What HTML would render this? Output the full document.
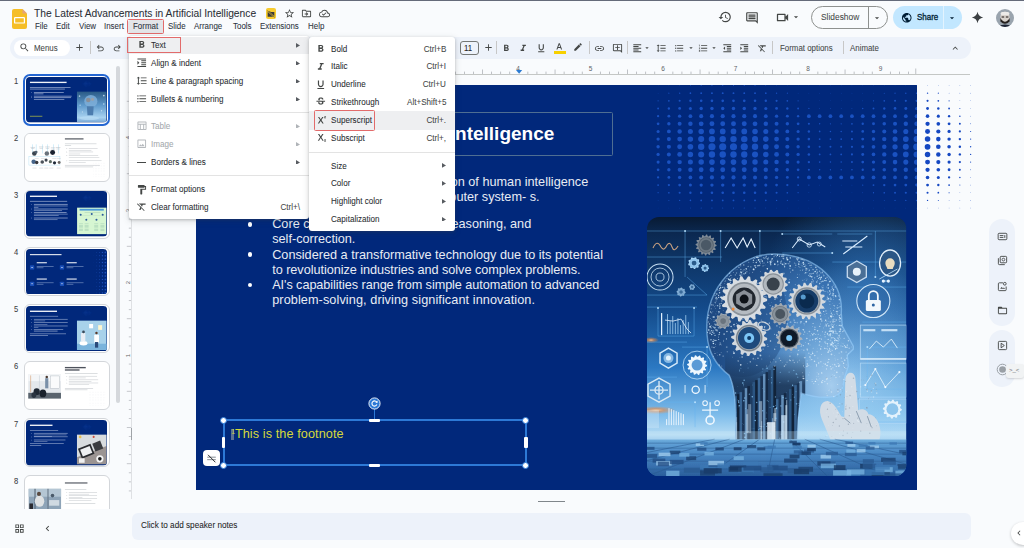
<!DOCTYPE html><html><head><meta charset="utf-8"><style>html,body{margin:0;padding:0;}body{width:1024px;height:548px;overflow:hidden;position:relative;background:#f9fbfd;font-family:"Liberation Sans",sans-serif;}div{box-sizing:border-box;}svg{display:block;}</style></head><body>
<div style="position:absolute;left:0.00px;top:0.00px;width:1024.00px;height:1.30px;background:#656b7a;"></div>
<svg style="position:absolute;left:11.5px;top:9px" width="15" height="20" viewBox="0 0 15 20"><path d="M2 0H10.5L15 4.5V18a2 2 0 0 1-2 2H2a2 2 0 0 1-2-2V2a2 2 0 0 1 2-2z" fill="#f5be27"/><path d="M10.5 0L15 4.5H10.5z" fill="#e4a27c"/><rect x="2.6" y="8.6" width="9.8" height="5.4" rx="0.6" fill="none" stroke="#fff" stroke-width="1.2"/></svg>
<div style="position:absolute;left:34.30px;top:7.57px;font-size:11.022px;line-height:1;font-weight:400;color:#2a2e35;white-space:pre;transform-origin:left top;transform:scaleX(0.93);-webkit-text-stroke:0.05px #2a2e35;">The Latest Advancements in Artificial Intelligence</div>
<div style="position:absolute;left:266.30px;top:8.30px;width:9.80px;height:10.80px;background:#f7cb2e;border-radius:2px;"></div>
<svg style="position:absolute;left:267.2px;top:9.6px" width="8" height="8" viewBox="0 0 24 24"><path fill="#3b3b3b" d="M2 4h7l2 2h11v14H2z"/><path d="M1 2 L23 22" stroke="#f7cb2e" stroke-width="4"/><path d="M1 2 L23 22" stroke="#3b3b3b" stroke-width="2"/></svg>
<svg style="position:absolute;left:283.50px;top:7.80px;" width="11" height="11" viewBox="0 0 24 24"><path fill="#444746" d="M22 9.24l-7.19-.62L12 2 9.19 8.63 2 9.24l5.46 4.73L5.82 21 12 17.27 18.18 21l-1.63-7.03L22 9.24zM12 15.4l-3.76 2.27 1-4.28-3.32-2.88 4.38-.38L12 6.1l1.71 4.04 4.38.38-3.32 2.88 1 4.28L12 15.4z"/></svg>
<svg style="position:absolute;left:300.90px;top:7.90px;" width="11" height="11" viewBox="0 0 24 24"><path fill="#444746" d="M20 6h-8l-2-2H4c-1.1 0-1.99.9-1.99 2L2 18c0 1.1.9 2 2 2h16c1.1 0 2-.9 2-2V8c0-1.1-.9-2-2-2zm0 12H4V6h5.17l2 2H20v10zm-7.84-6H8v2h4.16l-1.59 1.59L11.99 17 16 13.01 11.99 9l-1.41 1.41L12.16 12z"/></svg>
<svg style="position:absolute;left:318.70px;top:7.90px;" width="11" height="11" viewBox="0 0 24 24"><path fill="#444746" d="M19.35 10.04A7.49 7.49 0 0 0 12 4C9.11 4 6.6 5.64 5.35 8.04A5.994 5.994 0 0 0 0 14c0 3.31 2.69 6 6 6h13c2.76 0 5-2.24 5-5 0-2.64-2.05-4.78-4.65-4.96zM19 18H6c-2.21 0-4-1.79-4-4 0-2.05 1.53-3.76 3.560-3.97l1.07-.11.5-.95A5.469 5.469 0 0 1 12 6c2.62 0 4.88 1.86 5.39 4.43l.3 1.5 1.53.11A2.98 2.98 0 0 1 22 15c0 1.65-1.35 3-3 3zm-9-3.82-2.09-2.09L6.5 13.5 10 17l6.01-6.01-1.41-1.41z"/></svg>
<div style="position:absolute;left:127.50px;top:19.50px;width:36.60px;height:14.00px;background:#e3e5e8;border-radius:3px;"></div>
<div style="position:absolute;left:34.60px;top:22.16px;font-size:8.548px;line-height:1;font-weight:400;color:#2c333d;white-space:pre;transform-origin:left top;transform:scaleX(0.93);-webkit-text-stroke:0.06px #2c333d;">File</div>
<div style="position:absolute;left:55.80px;top:22.16px;font-size:8.548px;line-height:1;font-weight:400;color:#2c333d;white-space:pre;transform-origin:left top;transform:scaleX(0.93);-webkit-text-stroke:0.06px #2c333d;">Edit</div>
<div style="position:absolute;left:78.50px;top:22.16px;font-size:8.548px;line-height:1;font-weight:400;color:#2c333d;white-space:pre;transform-origin:left top;transform:scaleX(0.93);-webkit-text-stroke:0.06px #2c333d;">View</div>
<div style="position:absolute;left:103.70px;top:22.16px;font-size:8.548px;line-height:1;font-weight:400;color:#2c333d;white-space:pre;transform-origin:left top;transform:scaleX(0.93);-webkit-text-stroke:0.06px #2c333d;">Insert</div>
<div style="position:absolute;left:133.40px;top:22.16px;font-size:8.548px;line-height:1;font-weight:400;color:#2c333d;white-space:pre;transform-origin:left top;transform:scaleX(0.93);-webkit-text-stroke:0.06px #2c333d;">Format</div>
<div style="position:absolute;left:167.80px;top:22.16px;font-size:8.548px;line-height:1;font-weight:400;color:#2c333d;white-space:pre;transform-origin:left top;transform:scaleX(0.93);-webkit-text-stroke:0.06px #2c333d;">Slide</div>
<div style="position:absolute;left:194.20px;top:22.16px;font-size:8.548px;line-height:1;font-weight:400;color:#2c333d;white-space:pre;transform-origin:left top;transform:scaleX(0.93);-webkit-text-stroke:0.06px #2c333d;">Arrange</div>
<div style="position:absolute;left:232.60px;top:22.16px;font-size:8.548px;line-height:1;font-weight:400;color:#2c333d;white-space:pre;transform-origin:left top;transform:scaleX(0.93);-webkit-text-stroke:0.06px #2c333d;">Tools</div>
<div style="position:absolute;left:260.20px;top:22.16px;font-size:8.548px;line-height:1;font-weight:400;color:#2c333d;white-space:pre;transform-origin:left top;transform:scaleX(0.93);-webkit-text-stroke:0.06px #2c333d;">Extensions</div>
<div style="position:absolute;left:307.90px;top:22.16px;font-size:8.548px;line-height:1;font-weight:400;color:#2c333d;white-space:pre;transform-origin:left top;transform:scaleX(0.93);-webkit-text-stroke:0.06px #2c333d;">Help</div>
<div style="position:absolute;left:127.30px;top:19.30px;width:36.80px;height:14.30px;border:1px solid #e26b6b;border-radius:1.5px;"></div>
<svg style="position:absolute;left:718.00px;top:10.20px;" width="14" height="14" viewBox="0 0 24 24"><path fill="#444746" d="M13 3a9 9 0 0 0-9 9H1l3.89 3.89.07.14L9 12H6c0-3.87 3.130-7 7-7s7 3.13 7 7-3.13 7-7 7c-1.93 0-3.68-.79-4.94-2.06l-1.42 1.42A8.954 8.954 0 0 0 13 21a9 9 0 0 0 0-18zm-1 5v5l4.28 2.54.72-1.21-3.5-2.08V8H12z"/></svg>
<svg style="position:absolute;left:745.30px;top:10.60px;" width="14" height="14" viewBox="0 0 24 24"><path fill="#444746" d="M21.99 4c0-1.1-.89-2-1.99-2H4c-1.1 0-2 .9-2 2v12c0 1.1.9 2 2 2h14l4 4-.01-18zM20 4v13.17L18.83 16H4V4h16zM6 12h12v2H6zm0-3h12v2H6zm0-3h12v2H6z"/></svg>
<svg style="position:absolute;left:774.50px;top:9.90px;" width="15" height="15" viewBox="0 0 24 24"><path fill="#444746" d="M15 8v8H5V8h10m1-2H4c-.55 0-1 .45-1 1v10c0 .55.45 1 1 1h12c.55 0 1-.45 1-1v-3.5l4 4v-11l-4 4V7c0-.55-.45-1-1-1z"/></svg>
<svg style="position:absolute;left:791.30px;top:12.40px;" width="10" height="10" viewBox="0 0 24 24"><path fill="#444746" d="M7 10l5 5 5-5z"/></svg>
<div style="position:absolute;left:811.30px;top:6.30px;width:76.70px;height:22.40px;border:0.8px solid #8e918f;border-radius:12px;"></div>
<div style="position:absolute;left:868.10px;top:6.30px;width:0.80px;height:22.40px;background:#8e918f;"></div>
<div style="position:absolute;left:820.70px;top:13.35px;font-size:9.032px;line-height:1;font-weight:400;color:#444746;white-space:pre;transform-origin:left top;transform:scaleX(0.93);-webkit-text-stroke:0.06px #444746;">Slideshow</div>
<svg style="position:absolute;left:872.30px;top:12.50px;" width="10" height="10" viewBox="0 0 24 24"><path fill="#444746" d="M7 10l5 5 5-5z"/></svg>
<div style="position:absolute;left:892.90px;top:6.30px;width:69.00px;height:22.50px;background:#c2e7ff;border-radius:12px;"></div>
<div style="position:absolute;left:943.40px;top:6.30px;width:0.80px;height:22.50px;background:#f9fbfd;opacity:0.6;"></div>
<svg style="position:absolute;left:901.35px;top:11.85px;" width="11.5" height="11.5" viewBox="0 0 24 24"><path fill="#001d35" d="M12 2C6.48 2 2 6.48 2 12s4.48 10 10 10 10-4.48 10-10S17.520 2 12 2zm-1 17.93c-3.95-.49-7-3.85-7-7.93 0-.62.08-1.21.21-1.79L9 15v1c0 1.1.9 2 2 2v1.93zm6.9-2.54c-.26-.81-1-1.39-1.9-1.39h-1v-3c0-.55-.45-1-1-1H8v-2h2c.55 0 1-.45 1-1V7h2c1.1 0 2-.9 2-2v-.41c2.93 1.19 5 4.06 5 7.41 0 2.080-.8 3.97-2.1 5.39z"/></svg>
<div style="position:absolute;left:916.80px;top:14.02px;font-size:8.247px;line-height:1;font-weight:400;color:#001d35;white-space:pre;transform-origin:left top;transform:scaleX(0.97);-webkit-text-stroke:0.3px #001d35;">Share</div>
<svg style="position:absolute;left:947.40px;top:12.60px;" width="10" height="10" viewBox="0 0 24 24"><path fill="#001d35" d="M7 10l5 5 5-5z"/></svg>
<svg style="position:absolute;left:971.10px;top:10.90px;" width="13" height="13" viewBox="0 0 24 24"><path fill="#3c4043" d="M12 1.5Q13.6 10.4 22.5 12Q13.6 13.6 12 22.5Q10.4 13.6 1.5 12Q10.4 10.4 12 1.5Z"/></svg>
<svg style="position:absolute;left:995.5px;top:8.6px" width="18" height="18" viewBox="0 0 18 18"><defs><clipPath id="av"><circle cx="9" cy="9" r="9"/></clipPath></defs><g clip-path="url(#av)"><rect width="18" height="18" fill="#9aa4ae"/><ellipse cx="9" cy="8" rx="4.6" ry="5.6" fill="#d8d2cc"/><rect x="4.6" y="3" width="8.8" height="3" rx="1.5" fill="#eceae8"/><path d="M4.4 9 Q9 16.5 13.6 9 L13.6 12.5 Q9 17 4.4 12.5z" fill="#25201e"/><rect x="5.6" y="7.4" width="2.6" height="1.2" fill="#3a3430"/><rect x="9.8" y="7.4" width="2.6" height="1.2" fill="#3a3430"/><path d="M0 18 Q9 13 18 18z" fill="#1c2233"/></g></svg>
<div style="position:absolute;left:9.50px;top:36.80px;width:961.00px;height:22.60px;background:#edf2fa;border-radius:12px;"></div>
<div style="position:absolute;left:14.00px;top:39.70px;width:55.80px;height:16.10px;background:#ffffff;border-radius:8px;"></div>
<svg style="position:absolute;left:18.70px;top:42.30px;" width="11" height="11" viewBox="0 0 24 24"><path fill="#444746" d="M15.5 14h-.79l-.28-.27A6.471 6.471 0 0 0 16 9.5 6.5 6.5 0 1 0 9.5 16c1.610 0 3.09-.59 4.23-1.57l.27.28v.79l5 4.99L20.49 19l-4.99-5zm-6 0C7.01 14 5 11.99 5 9.5S7.01 5 9.5 5 14 7.01 14 9.5 11.99 14 9.5 14z"/></svg>
<div style="position:absolute;left:34.00px;top:44.21px;font-size:8.495px;line-height:1;font-weight:400;color:#444746;white-space:pre;transform-origin:left top;transform:scaleX(0.93);-webkit-text-stroke:0.06px #444746;">Menus</div>
<svg style="position:absolute;left:73.50px;top:42.30px;" width="11" height="11" viewBox="0 0 24 24"><path fill="#444746" d="M19 13h-6v6h-2v-6H5v-2h6V5h2v6h6v2z"/></svg>
<div style="position:absolute;left:89.60px;top:41.00px;width:0.80px;height:13.00px;background:#c7c7c7;"></div>
<svg style="position:absolute;left:95.05px;top:42.75px;" width="10.5" height="10.5" viewBox="0 0 24 24"><path fill="#444746" d="M7 19v-2h7.1q1.575 0 2.738-1T18 13.5q0-1.5-1.162-2.5T14.1 10H7.8l2.6 2.6L9 14 4 9l5-5 1.4 1.4L7.8 8h6.3q2.425 0 4.163 1.575T20 13.5q0 2.350-1.737 3.925T14.1 19H7z"/></svg>
<svg style="position:absolute;left:112.15px;top:42.75px;" width="10.5" height="10.5" viewBox="0 0 24 24"><path fill="#444746" d="M9.9 19q-2.425 0-4.163-1.575T4 13.5q0-2.350 1.737-3.925T9.9 8h6.3l-2.6-2.6L15 4l5 5-5 5-1.4-1.4 2.6-2.6H9.9q-1.575 0-2.738 1T6 13.5q0 1.5 1.162 2.5T9.9 17H17v2H9.9z"/></svg>
<div style="position:absolute;left:460.00px;top:41.20px;width:18.60px;height:13.60px;border:1px solid #747775;border-radius:3px;"></div>
<div style="position:absolute;left:464.30px;top:44.21px;font-size:8.495px;line-height:1;font-weight:400;color:#1f1f1f;white-space:pre;transform-origin:left top;transform:scaleX(0.93);-webkit-text-stroke:0.06px #1f1f1f;">11</div>
<svg style="position:absolute;left:482.50px;top:42.30px;" width="11" height="11" viewBox="0 0 24 24"><path fill="#444746" d="M19 13h-6v6h-2v-6H5v-2h6V5h2v6h6v2z"/></svg>
<div style="position:absolute;left:496.30px;top:41.00px;width:0.80px;height:13.00px;background:#c7c7c7;"></div>
<svg style="position:absolute;left:501.45px;top:42.75px;" width="10.5" height="10.5" viewBox="0 0 24 24"><path fill="#444746" d="M15.6 10.79c.97-.67 1.65-1.77 1.65-2.79 0-2.26-1.75-4-4-4H7v14h7.04c2.09 0 3.71-1.7 3.71-3.79 0-1.52-.86-2.82-2.15-3.42zM10 6.5h3c.83 0 1.5.67 1.5 1.5s-.67 1.5-1.5 1.5h-3v-3zm3.5 9H10v-3h3.5c.83 0 1.5.67 1.5 1.5s-.67 1.5-1.5 1.5z"/></svg>
<svg style="position:absolute;left:518.35px;top:42.75px;" width="10.5" height="10.5" viewBox="0 0 24 24"><path fill="#444746" d="M10 4v3h2.21l-3.42 8H6v3h8v-3h-2.21l3.42-8H18V4z"/></svg>
<svg style="position:absolute;left:536.35px;top:42.75px;" width="10.5" height="10.5" viewBox="0 0 24 24"><path fill="#444746" d="M12 17c3.31 0 6-2.69 6-6V3h-2.5v8c0 1.93-1.57 3.5-3.5 3.5S8.5 12.93 8.5 11V3H6v8c0 3.31 2.69 6 6 6zm-7 2v2h14v-2H5z"/></svg>
<svg style="position:absolute;left:554.25px;top:41.55px;" width="10.5" height="10.5" viewBox="0 0 24 24"><path fill="#444746" d="M5.49 17h2.42l1.27-3.5h5.65L16.09 17h2.42L13.25 3h-2.5L5.49 17zm4.42-5.61 2.03-5.79h.12l2.03 5.79H9.91z"/></svg>
<div style="position:absolute;left:553.60px;top:51.40px;width:12.00px;height:2.20px;background:#f7d000;"></div>
<svg style="position:absolute;left:573.30px;top:42.30px;" width="10" height="10" viewBox="0 0 24 24"><path fill="#444746" d="M3 17.25V21h3.75L17.81 9.94l-3.75-3.75L3 17.25zM20.71 7.04a.996.996 0 0 0 0-1.41l-2.34-2.34a.996.996 0 0 0-1.41 0l-1.83 1.83 3.75 3.75 1.83-1.83z"/></svg>
<div style="position:absolute;left:589.40px;top:41.00px;width:0.80px;height:13.00px;background:#c7c7c7;"></div>
<svg style="position:absolute;left:594.30px;top:42.50px;" width="11" height="11" viewBox="0 0 24 24"><path fill="#444746" d="M3.9 12c0-1.71 1.39-3.1 3.1-3.1h4V7H7c-2.76 0-5 2.24-5 5s2.24 5 5 5h4v-1.9H7c-1.71 0-3.1-1.39-3.1-3.1zM8 13h8v-2H8v2zm9-6h-4v1.9h4c1.71 0 3.1 1.39 3.1 3.1s-1.39 3.1-3.1 3.1h-4V17h4c2.76 0 5-2.24 5-5s-2.24-5-5-5z"/></svg>
<svg style="position:absolute;left:611.80px;top:42.50px;" width="11" height="11" viewBox="0 0 24 24"><path fill="#444746" d="M22 4c0-1.1-.9-2-2-2H4c-1.1 0-1.99.9-1.99 2L2 16c0 1.1.9 2 2 2h14l4 4V4zm-2 13.17L18.83 16H4V4h16v13.17zM13 5h-2v4H7v2h4v4h2v-4h4V9h-4z"/></svg>
<div style="position:absolute;left:627.40px;top:41.00px;width:0.80px;height:13.00px;background:#c7c7c7;"></div>
<svg style="position:absolute;left:632.25px;top:42.75px;" width="10.5" height="10.5" viewBox="0 0 24 24"><path fill="#444746" d="M15 15H3v2h12v-2zm0-8H3v2h12V7zM3 13h18v-2H3v2zm0 8h18v-2H3v2zM3 3v2h18V3H3z"/></svg>
<svg style="position:absolute;left:643.20px;top:44.00px;" width="8" height="8" viewBox="0 0 24 24"><path fill="#444746" d="M7 10l5 5 5-5z"/></svg>
<svg style="position:absolute;left:656.05px;top:42.75px;" width="10.5" height="10.5" viewBox="0 0 24 24"><path fill="#444746" d="M6 7h2.5L5 3.5 1.5 7H4v10H1.5L5 20.5 8.5 17H6V7zm4-2v2h12V5H10zm0 14h12v-2H10v2zm0-6h12v-2H10v2z"/></svg>
<svg style="position:absolute;left:674.25px;top:42.75px;" width="10.5" height="10.5" viewBox="0 0 24 24"><path fill="#444746" d="M4 10.5c-.83 0-1.5.67-1.5 1.5s.67 1.5 1.5 1.5 1.5-.67 1.5-1.5-.67-1.5-1.5-1.5zm0-6c-.83 0-1.5.67-1.5 1.5S3.17 7.5 4 7.5 5.5 6.83 5.5 6 4.83 4.5 4 4.5zm0 12c-.83 0-1.5.68-1.5 1.5s.68 1.5 1.5 1.5 1.5-.68 1.5-1.5-.67-1.5-1.5-1.5zM7 19h14v-2H7v2zm0-6h14v-2H7v2zm0-8v2h14V5H7z"/></svg>
<svg style="position:absolute;left:686.60px;top:44.00px;" width="8" height="8" viewBox="0 0 24 24"><path fill="#444746" d="M7 10l5 5 5-5z"/></svg>
<svg style="position:absolute;left:697.65px;top:42.75px;" width="10.5" height="10.5" viewBox="0 0 24 24"><path fill="#444746" d="M2 17h2v.5H3v1h1v.5H2v1h3v-4H2v1zm1-9h1V4H2v1h1v3zm-1 3h1.8L2 13.1v.9h3v-1H3.2L5 10.9V10H2v1zm5-6v2h14V5H7zm0 14h14v-2H7v2zm0-6h14v-2H7v2z"/></svg>
<svg style="position:absolute;left:710.00px;top:44.00px;" width="8" height="8" viewBox="0 0 24 24"><path fill="#444746" d="M7 10l5 5 5-5z"/></svg>
<svg style="position:absolute;left:722.05px;top:42.75px;" width="10.5" height="10.5" viewBox="0 0 24 24"><path fill="#444746" d="M11 17h10v-2H11v2zm-8-5l4 4V8l-4 4zm0 9h18v-2H3v2zM3 3v2h18V3H3zm8 6h10V7H11v2zm0 4h10v-2H11v2z"/></svg>
<svg style="position:absolute;left:738.65px;top:42.75px;" width="10.5" height="10.5" viewBox="0 0 24 24"><path fill="#444746" d="M3 21h18v-2H3v2zM3 8v8l4-4-4-4zm8 9h10v-2H11v2zM3 3v2h18V3H3zm8 6h10V7H11v2zm0 4h10v-2H11v2z"/></svg>
<svg style="position:absolute;left:756.65px;top:42.75px;" width="10.5" height="10.5" viewBox="0 0 24 24"><path fill="#444746" d="M3.27 5L2 6.27l6.97 6.97L6.5 19h3l1.57-3.66L16.73 21 18 19.73 3.55 5.27 3.27 5zM6 5v.18L8.82 8h2.4l-.72 1.68 2.1 2.1L14.210 8H20V5H6z"/></svg>
<div style="position:absolute;left:772.30px;top:41.00px;width:0.80px;height:13.00px;background:#c7c7c7;"></div>
<div style="position:absolute;left:780.00px;top:44.21px;font-size:8.495px;line-height:1;font-weight:400;color:#444746;white-space:pre;transform-origin:left top;transform:scaleX(0.93);-webkit-text-stroke:0.06px #444746;">Format options</div>
<div style="position:absolute;left:842.70px;top:41.00px;width:0.80px;height:13.00px;background:#c7c7c7;"></div>
<div style="position:absolute;left:850.00px;top:44.21px;font-size:8.495px;line-height:1;font-weight:400;color:#444746;white-space:pre;transform-origin:left top;transform:scaleX(0.93);-webkit-text-stroke:0.06px #444746;">Animate</div>
<svg style="position:absolute;left:950.15px;top:42.75px;" width="10.5" height="10.5" viewBox="0 0 24 24"><path fill="#444746" d="M12 8l-6 6 1.41 1.41L12 10.83l4.59 4.58L18 14z"/></svg>
<div style="position:absolute;left:132.00px;top:74.00px;width:838.00px;height:0.90px;background:#c4c7c5;"></div>
<div style="position:absolute;left:298.70px;top:65.80px;font-size:6.500px;line-height:1;font-weight:400;color:#5f6368;white-space:pre;transform-origin:left top;">1</div>
<div style="position:absolute;left:371.20px;top:65.80px;font-size:6.500px;line-height:1;font-weight:400;color:#5f6368;white-space:pre;transform-origin:left top;">2</div>
<div style="position:absolute;left:443.70px;top:65.80px;font-size:6.500px;line-height:1;font-weight:400;color:#5f6368;white-space:pre;transform-origin:left top;">3</div>
<div style="position:absolute;left:516.20px;top:65.80px;font-size:6.500px;line-height:1;font-weight:400;color:#5f6368;white-space:pre;transform-origin:left top;">4</div>
<div style="position:absolute;left:588.70px;top:65.80px;font-size:6.500px;line-height:1;font-weight:400;color:#5f6368;white-space:pre;transform-origin:left top;">5</div>
<div style="position:absolute;left:661.20px;top:65.80px;font-size:6.500px;line-height:1;font-weight:400;color:#5f6368;white-space:pre;transform-origin:left top;">6</div>
<div style="position:absolute;left:733.70px;top:65.80px;font-size:6.500px;line-height:1;font-weight:400;color:#5f6368;white-space:pre;transform-origin:left top;">7</div>
<div style="position:absolute;left:806.20px;top:65.80px;font-size:6.500px;line-height:1;font-weight:400;color:#5f6368;white-space:pre;transform-origin:left top;">8</div>
<div style="position:absolute;left:878.70px;top:65.80px;font-size:6.500px;line-height:1;font-weight:400;color:#5f6368;white-space:pre;transform-origin:left top;">9</div>
<svg style="position:absolute;left:132px;top:0" width="840" height="76"><rect x="5.77" y="71.60" width="0.8" height="2.4" fill="#b0b3b8"/><rect x="14.84" y="71.60" width="0.8" height="2.4" fill="#b0b3b8"/><rect x="32.96" y="71.60" width="0.8" height="2.4" fill="#b0b3b8"/><rect x="42.02" y="71.60" width="0.8" height="2.4" fill="#b0b3b8"/><rect x="51.09" y="71.60" width="0.8" height="2.4" fill="#b0b3b8"/><rect x="60.15" y="69.50" width="0.8" height="4.5" fill="#b0b3b8"/><rect x="69.21" y="71.60" width="0.8" height="2.4" fill="#b0b3b8"/><rect x="78.27" y="71.60" width="0.8" height="2.4" fill="#b0b3b8"/><rect x="87.34" y="71.60" width="0.8" height="2.4" fill="#b0b3b8"/><rect x="105.46" y="71.60" width="0.8" height="2.4" fill="#b0b3b8"/><rect x="114.52" y="71.60" width="0.8" height="2.4" fill="#b0b3b8"/><rect x="123.59" y="71.60" width="0.8" height="2.4" fill="#b0b3b8"/><rect x="132.65" y="69.50" width="0.8" height="4.5" fill="#b0b3b8"/><rect x="141.71" y="71.60" width="0.8" height="2.4" fill="#b0b3b8"/><rect x="150.77" y="71.60" width="0.8" height="2.4" fill="#b0b3b8"/><rect x="159.84" y="71.60" width="0.8" height="2.4" fill="#b0b3b8"/><rect x="177.96" y="71.60" width="0.8" height="2.4" fill="#b0b3b8"/><rect x="187.02" y="71.60" width="0.8" height="2.4" fill="#b0b3b8"/><rect x="196.09" y="71.60" width="0.8" height="2.4" fill="#b0b3b8"/><rect x="205.15" y="69.50" width="0.8" height="4.5" fill="#b0b3b8"/><rect x="214.21" y="71.60" width="0.8" height="2.4" fill="#b0b3b8"/><rect x="223.27" y="71.60" width="0.8" height="2.4" fill="#b0b3b8"/><rect x="232.34" y="71.60" width="0.8" height="2.4" fill="#b0b3b8"/><rect x="250.46" y="71.60" width="0.8" height="2.4" fill="#b0b3b8"/><rect x="259.52" y="71.60" width="0.8" height="2.4" fill="#b0b3b8"/><rect x="268.59" y="71.60" width="0.8" height="2.4" fill="#b0b3b8"/><rect x="277.65" y="69.50" width="0.8" height="4.5" fill="#b0b3b8"/><rect x="286.71" y="71.60" width="0.8" height="2.4" fill="#b0b3b8"/><rect x="295.77" y="71.60" width="0.8" height="2.4" fill="#b0b3b8"/><rect x="304.84" y="71.60" width="0.8" height="2.4" fill="#b0b3b8"/><rect x="322.96" y="71.60" width="0.8" height="2.4" fill="#b0b3b8"/><rect x="332.02" y="71.60" width="0.8" height="2.4" fill="#b0b3b8"/><rect x="341.09" y="71.60" width="0.8" height="2.4" fill="#b0b3b8"/><rect x="350.15" y="69.50" width="0.8" height="4.5" fill="#b0b3b8"/><rect x="359.21" y="71.60" width="0.8" height="2.4" fill="#b0b3b8"/><rect x="368.27" y="71.60" width="0.8" height="2.4" fill="#b0b3b8"/><rect x="377.34" y="71.60" width="0.8" height="2.4" fill="#b0b3b8"/><rect x="395.46" y="71.60" width="0.8" height="2.4" fill="#b0b3b8"/><rect x="404.52" y="71.60" width="0.8" height="2.4" fill="#b0b3b8"/><rect x="413.59" y="71.60" width="0.8" height="2.4" fill="#b0b3b8"/><rect x="422.65" y="69.50" width="0.8" height="4.5" fill="#b0b3b8"/><rect x="431.71" y="71.60" width="0.8" height="2.4" fill="#b0b3b8"/><rect x="440.77" y="71.60" width="0.8" height="2.4" fill="#b0b3b8"/><rect x="449.84" y="71.60" width="0.8" height="2.4" fill="#b0b3b8"/><rect x="467.96" y="71.60" width="0.8" height="2.4" fill="#b0b3b8"/><rect x="477.02" y="71.60" width="0.8" height="2.4" fill="#b0b3b8"/><rect x="486.09" y="71.60" width="0.8" height="2.4" fill="#b0b3b8"/><rect x="495.15" y="69.50" width="0.8" height="4.5" fill="#b0b3b8"/><rect x="504.21" y="71.60" width="0.8" height="2.4" fill="#b0b3b8"/><rect x="513.27" y="71.60" width="0.8" height="2.4" fill="#b0b3b8"/><rect x="522.34" y="71.60" width="0.8" height="2.4" fill="#b0b3b8"/><rect x="540.46" y="71.60" width="0.8" height="2.4" fill="#b0b3b8"/><rect x="549.52" y="71.60" width="0.8" height="2.4" fill="#b0b3b8"/><rect x="558.59" y="71.60" width="0.8" height="2.4" fill="#b0b3b8"/><rect x="567.65" y="69.50" width="0.8" height="4.5" fill="#b0b3b8"/><rect x="576.71" y="71.60" width="0.8" height="2.4" fill="#b0b3b8"/><rect x="585.77" y="71.60" width="0.8" height="2.4" fill="#b0b3b8"/><rect x="594.84" y="71.60" width="0.8" height="2.4" fill="#b0b3b8"/><rect x="612.96" y="71.60" width="0.8" height="2.4" fill="#b0b3b8"/><rect x="622.02" y="71.60" width="0.8" height="2.4" fill="#b0b3b8"/><rect x="631.09" y="71.60" width="0.8" height="2.4" fill="#b0b3b8"/><rect x="640.15" y="69.50" width="0.8" height="4.5" fill="#b0b3b8"/><rect x="649.21" y="71.60" width="0.8" height="2.4" fill="#b0b3b8"/><rect x="658.27" y="71.60" width="0.8" height="2.4" fill="#b0b3b8"/><rect x="667.34" y="71.60" width="0.8" height="2.4" fill="#b0b3b8"/><rect x="685.46" y="71.60" width="0.8" height="2.4" fill="#b0b3b8"/><rect x="694.52" y="71.60" width="0.8" height="2.4" fill="#b0b3b8"/><rect x="703.59" y="71.60" width="0.8" height="2.4" fill="#b0b3b8"/><rect x="712.65" y="69.50" width="0.8" height="4.5" fill="#b0b3b8"/><rect x="721.71" y="71.60" width="0.8" height="2.4" fill="#b0b3b8"/><rect x="730.77" y="71.60" width="0.8" height="2.4" fill="#b0b3b8"/><rect x="739.84" y="71.60" width="0.8" height="2.4" fill="#b0b3b8"/><rect x="757.96" y="71.60" width="0.8" height="2.4" fill="#b0b3b8"/><rect x="767.02" y="71.60" width="0.8" height="2.4" fill="#b0b3b8"/><rect x="776.09" y="71.60" width="0.8" height="2.4" fill="#b0b3b8"/><rect x="783.40" y="68.50" width="0.8" height="5.5" fill="#b0b3b8"/></svg>
<svg style="position:absolute;left:516.4px;top:69.6px" width="6.2" height="4" viewBox="0 0 6.2 4"><path d="M0 0H6.2L3.1 3.8z" fill="#2b7bd2"/></svg>
<div style="position:absolute;left:131.00px;top:78.00px;width:0.80px;height:420.80px;background:#dfe1e4;"></div>
<div style="position:absolute;left:124.5px;top:134.00px;width:7px;height:7px;font-size:6px;line-height:7px;color:#5f6368;transform:rotate(-90deg);text-align:center">4</div>
<div style="position:absolute;left:124.5px;top:206.50px;width:7px;height:7px;font-size:6px;line-height:7px;color:#5f6368;transform:rotate(-90deg);text-align:center">3</div>
<div style="position:absolute;left:124.5px;top:279.00px;width:7px;height:7px;font-size:6px;line-height:7px;color:#5f6368;transform:rotate(-90deg);text-align:center">2</div>
<div style="position:absolute;left:124.5px;top:351.50px;width:7px;height:7px;font-size:6px;line-height:7px;color:#5f6368;transform:rotate(-90deg);text-align:center">1</div>
<svg style="position:absolute;left:0;top:0" width="134" height="548"><rect x="128.80" y="82.72" width="2.2" height="0.8" fill="#b8bbc0"/><rect x="128.80" y="91.79" width="2.2" height="0.8" fill="#b8bbc0"/><rect x="126.80" y="100.85" width="4.2" height="0.8" fill="#b8bbc0"/><rect x="128.80" y="109.91" width="2.2" height="0.8" fill="#b8bbc0"/><rect x="128.80" y="118.97" width="2.2" height="0.8" fill="#b8bbc0"/><rect x="128.80" y="128.04" width="2.2" height="0.8" fill="#b8bbc0"/><rect x="128.80" y="146.16" width="2.2" height="0.8" fill="#b8bbc0"/><rect x="128.80" y="155.22" width="2.2" height="0.8" fill="#b8bbc0"/><rect x="128.80" y="164.29" width="2.2" height="0.8" fill="#b8bbc0"/><rect x="126.80" y="173.35" width="4.2" height="0.8" fill="#b8bbc0"/><rect x="128.80" y="182.41" width="2.2" height="0.8" fill="#b8bbc0"/><rect x="128.80" y="191.47" width="2.2" height="0.8" fill="#b8bbc0"/><rect x="128.80" y="200.54" width="2.2" height="0.8" fill="#b8bbc0"/><rect x="128.80" y="218.66" width="2.2" height="0.8" fill="#b8bbc0"/><rect x="128.80" y="227.72" width="2.2" height="0.8" fill="#b8bbc0"/><rect x="128.80" y="236.79" width="2.2" height="0.8" fill="#b8bbc0"/><rect x="126.80" y="245.85" width="4.2" height="0.8" fill="#b8bbc0"/><rect x="128.80" y="254.91" width="2.2" height="0.8" fill="#b8bbc0"/><rect x="128.80" y="263.98" width="2.2" height="0.8" fill="#b8bbc0"/><rect x="128.80" y="273.04" width="2.2" height="0.8" fill="#b8bbc0"/><rect x="128.80" y="291.16" width="2.2" height="0.8" fill="#b8bbc0"/><rect x="128.80" y="300.23" width="2.2" height="0.8" fill="#b8bbc0"/><rect x="128.80" y="309.29" width="2.2" height="0.8" fill="#b8bbc0"/><rect x="126.80" y="318.35" width="4.2" height="0.8" fill="#b8bbc0"/><rect x="128.80" y="327.41" width="2.2" height="0.8" fill="#b8bbc0"/><rect x="128.80" y="336.48" width="2.2" height="0.8" fill="#b8bbc0"/><rect x="128.80" y="345.54" width="2.2" height="0.8" fill="#b8bbc0"/><rect x="128.80" y="363.66" width="2.2" height="0.8" fill="#b8bbc0"/><rect x="128.80" y="372.73" width="2.2" height="0.8" fill="#b8bbc0"/><rect x="128.80" y="381.79" width="2.2" height="0.8" fill="#b8bbc0"/><rect x="126.80" y="390.85" width="4.2" height="0.8" fill="#b8bbc0"/><rect x="128.80" y="399.91" width="2.2" height="0.8" fill="#b8bbc0"/><rect x="128.80" y="408.98" width="2.2" height="0.8" fill="#b8bbc0"/><rect x="128.80" y="418.04" width="2.2" height="0.8" fill="#b8bbc0"/><rect x="126.80" y="427.10" width="4.2" height="0.8" fill="#b8bbc0"/><rect x="128.80" y="436.16" width="2.2" height="0.8" fill="#b8bbc0"/><rect x="128.80" y="445.23" width="2.2" height="0.8" fill="#b8bbc0"/><rect x="128.80" y="454.29" width="2.2" height="0.8" fill="#b8bbc0"/><rect x="126.80" y="463.35" width="4.2" height="0.8" fill="#b8bbc0"/><rect x="128.80" y="472.41" width="2.2" height="0.8" fill="#b8bbc0"/><rect x="128.80" y="481.48" width="2.2" height="0.8" fill="#b8bbc0"/><rect x="128.80" y="490.54" width="2.2" height="0.8" fill="#b8bbc0"/></svg>
<div style="position:absolute;left:130.60px;top:427.50px;width:1.40px;height:12.50px;background:#a0a4a8;"></div>
<div style="position:absolute;left:116.20px;top:65.80px;width:4.20px;height:337.00px;background:#d5d8dc;border-radius:2px;"></div>
<div style="position:absolute;left:22.90px;top:73.90px;width:87.40px;height:52.00px;border:2px solid #2466d2;border-radius:7px;background:#fff;"></div>
<svg style="position:absolute;left:26.2px;top:77.20px" width="81.2" height="45.6" viewBox="0 0 720 405" preserveAspectRatio="none"><defs><clipPath id="tc1"><rect width="720" height="405" rx="36"/></clipPath></defs><g clip-path="url(#tc1)"><rect width="720" height="405" fill="#01287b"/><defs><linearGradient id="gA" x1="0" y1="0" x2="0" y2="1"><stop offset="0" stop-color="#2a5a86"/><stop offset="0.45" stop-color="#5f9acc"/><stop offset="0.85" stop-color="#a8d2f0"/><stop offset="1" stop-color="#7aa8d4"/></linearGradient></defs><circle cx="470" cy="8" r="0.6" fill="#2a5fd0" opacity="0.55"/><circle cx="470" cy="16" r="0.6" fill="#2a5fd0" opacity="0.55"/><circle cx="470" cy="23" r="0.6" fill="#2a5fd0" opacity="0.55"/><circle cx="470" cy="31" r="0.6" fill="#2a5fd0" opacity="0.55"/><circle cx="470" cy="38" r="0.6" fill="#2a5fd0" opacity="0.55"/><circle cx="470" cy="46" r="0.6" fill="#2a5fd0" opacity="0.55"/><circle cx="470" cy="54" r="0.6" fill="#2a5fd0" opacity="0.55"/><circle cx="470" cy="61" r="0.6" fill="#2a5fd0" opacity="0.55"/><circle cx="470" cy="69" r="0.6" fill="#2a5fd0" opacity="0.55"/><circle cx="470" cy="76" r="0.6" fill="#2a5fd0" opacity="0.55"/><circle cx="470" cy="84" r="0.6" fill="#2a5fd0" opacity="0.55"/><circle cx="470" cy="92" r="0.6" fill="#2a5fd0" opacity="0.55"/><circle cx="470" cy="99" r="0.6" fill="#2a5fd0" opacity="0.55"/><circle cx="470" cy="107" r="0.6" fill="#2a5fd0" opacity="0.55"/><circle cx="470" cy="114" r="0.6" fill="#2a5fd0" opacity="0.55"/><circle cx="470" cy="122" r="0.6" fill="#2a5fd0" opacity="0.55"/><circle cx="480" cy="8" r="0.6" fill="#2a5fd0" opacity="0.55"/><circle cx="480" cy="16" r="0.6" fill="#2a5fd0" opacity="0.55"/><circle cx="480" cy="23" r="0.6" fill="#2a5fd0" opacity="0.55"/><circle cx="480" cy="31" r="0.6" fill="#2a5fd0" opacity="0.55"/><circle cx="480" cy="38" r="0.6" fill="#2a5fd0" opacity="0.55"/><circle cx="480" cy="46" r="0.6" fill="#2a5fd0" opacity="0.55"/><circle cx="480" cy="54" r="0.6" fill="#2a5fd0" opacity="0.55"/><circle cx="480" cy="61" r="0.6" fill="#2a5fd0" opacity="0.55"/><circle cx="480" cy="69" r="0.6" fill="#2a5fd0" opacity="0.55"/><circle cx="480" cy="76" r="0.6" fill="#2a5fd0" opacity="0.55"/><circle cx="480" cy="84" r="0.6" fill="#2a5fd0" opacity="0.55"/><circle cx="480" cy="92" r="0.6" fill="#2a5fd0" opacity="0.55"/><circle cx="480" cy="99" r="0.6" fill="#2a5fd0" opacity="0.55"/><circle cx="480" cy="107" r="0.6" fill="#2a5fd0" opacity="0.55"/><circle cx="480" cy="114" r="0.6" fill="#2a5fd0" opacity="0.55"/><circle cx="480" cy="122" r="0.6" fill="#2a5fd0" opacity="0.55"/><circle cx="490" cy="8" r="0.6" fill="#2a5fd0" opacity="0.55"/><circle cx="490" cy="16" r="0.6" fill="#2a5fd0" opacity="0.55"/><circle cx="490" cy="23" r="0.6" fill="#2a5fd0" opacity="0.55"/><circle cx="490" cy="31" r="0.6" fill="#2a5fd0" opacity="0.55"/><circle cx="490" cy="38" r="0.6" fill="#2a5fd0" opacity="0.55"/><circle cx="490" cy="46" r="0.6" fill="#2a5fd0" opacity="0.55"/><circle cx="490" cy="54" r="0.6" fill="#2a5fd0" opacity="0.55"/><circle cx="490" cy="61" r="0.6" fill="#2a5fd0" opacity="0.55"/><circle cx="490" cy="69" r="0.6" fill="#2a5fd0" opacity="0.55"/><circle cx="490" cy="76" r="0.6" fill="#2a5fd0" opacity="0.55"/><circle cx="490" cy="84" r="0.6" fill="#2a5fd0" opacity="0.55"/><circle cx="490" cy="92" r="0.6" fill="#2a5fd0" opacity="0.55"/><circle cx="490" cy="99" r="0.6" fill="#2a5fd0" opacity="0.55"/><circle cx="490" cy="107" r="0.6" fill="#2a5fd0" opacity="0.55"/><circle cx="490" cy="114" r="0.6" fill="#2a5fd0" opacity="0.55"/><circle cx="490" cy="122" r="0.6" fill="#2a5fd0" opacity="0.55"/><circle cx="500" cy="8" r="0.6" fill="#2a5fd0" opacity="0.55"/><circle cx="500" cy="16" r="0.6" fill="#2a5fd0" opacity="0.55"/><circle cx="500" cy="23" r="0.6" fill="#2a5fd0" opacity="0.55"/><circle cx="500" cy="31" r="0.6" fill="#2a5fd0" opacity="0.55"/><circle cx="500" cy="38" r="0.6" fill="#2a5fd0" opacity="0.55"/><circle cx="500" cy="46" r="0.9" fill="#2a5fd0" opacity="0.55"/><circle cx="500" cy="54" r="1.1" fill="#2a5fd0" opacity="0.55"/><circle cx="500" cy="61" r="1.2" fill="#2a5fd0" opacity="0.55"/><circle cx="500" cy="69" r="1.1" fill="#2a5fd0" opacity="0.55"/><circle cx="500" cy="76" r="0.9" fill="#2a5fd0" opacity="0.55"/><circle cx="500" cy="84" r="0.6" fill="#2a5fd0" opacity="0.55"/><circle cx="500" cy="92" r="0.6" fill="#2a5fd0" opacity="0.55"/><circle cx="500" cy="99" r="0.6" fill="#2a5fd0" opacity="0.55"/><circle cx="500" cy="107" r="0.6" fill="#2a5fd0" opacity="0.55"/><circle cx="500" cy="114" r="0.6" fill="#2a5fd0" opacity="0.55"/><circle cx="500" cy="122" r="0.6" fill="#2a5fd0" opacity="0.55"/><circle cx="510" cy="8" r="0.6" fill="#2a5fd0" opacity="0.55"/><circle cx="510" cy="16" r="0.6" fill="#2a5fd0" opacity="0.55"/><circle cx="510" cy="23" r="0.6" fill="#2a5fd0" opacity="0.55"/><circle cx="510" cy="31" r="0.6" fill="#2a5fd0" opacity="0.55"/><circle cx="510" cy="38" r="1.0" fill="#2a5fd0" opacity="0.55"/><circle cx="510" cy="46" r="1.4" fill="#2a5fd0" opacity="0.55"/><circle cx="510" cy="54" r="1.6" fill="#2a5fd0" opacity="0.55"/><circle cx="510" cy="61" r="1.7" fill="#2a5fd0" opacity="0.55"/><circle cx="510" cy="69" r="1.7" fill="#2a5fd0" opacity="0.55"/><circle cx="510" cy="76" r="1.4" fill="#2a5fd0" opacity="0.55"/><circle cx="510" cy="84" r="1.1" fill="#2a5fd0" opacity="0.55"/><circle cx="510" cy="92" r="0.6" fill="#2a5fd0" opacity="0.55"/><circle cx="510" cy="99" r="0.6" fill="#2a5fd0" opacity="0.55"/><circle cx="510" cy="107" r="0.6" fill="#2a5fd0" opacity="0.55"/><circle cx="510" cy="114" r="0.6" fill="#2a5fd0" opacity="0.55"/><circle cx="510" cy="122" r="0.6" fill="#2a5fd0" opacity="0.55"/><circle cx="520" cy="8" r="0.6" fill="#2a5fd0" opacity="0.55"/><circle cx="520" cy="16" r="0.6" fill="#2a5fd0" opacity="0.55"/><circle cx="520" cy="23" r="0.6" fill="#2a5fd0" opacity="0.55"/><circle cx="520" cy="31" r="0.8" fill="#2a5fd0" opacity="0.55"/><circle cx="520" cy="38" r="1.3" fill="#2a5fd0" opacity="0.55"/><circle cx="520" cy="46" r="1.8" fill="#2a5fd0" opacity="0.55"/><circle cx="520" cy="54" r="2.2" fill="#2a5fd0" opacity="0.55"/><circle cx="520" cy="61" r="2.3" fill="#2a5fd0" opacity="0.55"/><circle cx="520" cy="69" r="2.2" fill="#2a5fd0" opacity="0.55"/><circle cx="520" cy="76" r="1.9" fill="#2a5fd0" opacity="0.55"/><circle cx="520" cy="84" r="1.4" fill="#2a5fd0" opacity="0.55"/><circle cx="520" cy="92" r="0.9" fill="#2a5fd0" opacity="0.55"/><circle cx="520" cy="99" r="0.6" fill="#2a5fd0" opacity="0.55"/><circle cx="520" cy="107" r="0.6" fill="#2a5fd0" opacity="0.55"/><circle cx="520" cy="114" r="0.6" fill="#2a5fd0" opacity="0.55"/><circle cx="520" cy="122" r="0.6" fill="#2a5fd0" opacity="0.55"/><circle cx="530" cy="8" r="0.6" fill="#2a5fd0" opacity="0.55"/><circle cx="530" cy="16" r="0.6" fill="#2a5fd0" opacity="0.55"/><circle cx="530" cy="23" r="0.6" fill="#2a5fd0" opacity="0.55"/><circle cx="530" cy="31" r="1.0" fill="#2a5fd0" opacity="0.55"/><circle cx="530" cy="38" r="1.6" fill="#2a5fd0" opacity="0.55"/><circle cx="530" cy="46" r="2.1" fill="#2a5fd0" opacity="0.55"/><circle cx="530" cy="54" r="2.6" fill="#2a5fd0" opacity="0.55"/><circle cx="530" cy="61" r="2.9" fill="#2a5fd0" opacity="0.55"/><circle cx="530" cy="69" r="2.7" fill="#2a5fd0" opacity="0.55"/><circle cx="530" cy="76" r="2.3" fill="#2a5fd0" opacity="0.55"/><circle cx="530" cy="84" r="1.7" fill="#2a5fd0" opacity="0.55"/><circle cx="530" cy="92" r="1.2" fill="#2a5fd0" opacity="0.55"/><circle cx="530" cy="99" r="0.6" fill="#2a5fd0" opacity="0.55"/><circle cx="530" cy="107" r="0.6" fill="#2a5fd0" opacity="0.55"/><circle cx="530" cy="114" r="0.6" fill="#2a5fd0" opacity="0.55"/><circle cx="530" cy="122" r="0.6" fill="#2a5fd0" opacity="0.55"/><circle cx="540" cy="8" r="0.6" fill="#2a5fd0" opacity="0.55"/><circle cx="540" cy="16" r="0.6" fill="#2a5fd0" opacity="0.55"/><circle cx="540" cy="23" r="0.6" fill="#2a5fd0" opacity="0.55"/><circle cx="540" cy="31" r="1.1" fill="#2a5fd0" opacity="0.55"/><circle cx="540" cy="38" r="1.7" fill="#2a5fd0" opacity="0.55"/><circle cx="540" cy="46" r="2.3" fill="#2a5fd0" opacity="0.55"/><circle cx="540" cy="54" r="2.9" fill="#2a5fd0" opacity="0.55"/><circle cx="540" cy="61" r="3.4" fill="#2a5fd0" opacity="0.55"/><circle cx="540" cy="69" r="3.0" fill="#2a5fd0" opacity="0.55"/><circle cx="540" cy="76" r="2.4" fill="#2a5fd0" opacity="0.55"/><circle cx="540" cy="84" r="1.8" fill="#2a5fd0" opacity="0.55"/><circle cx="540" cy="92" r="1.2" fill="#2a5fd0" opacity="0.55"/><circle cx="540" cy="99" r="0.6" fill="#2a5fd0" opacity="0.55"/><circle cx="540" cy="107" r="0.6" fill="#2a5fd0" opacity="0.55"/><circle cx="540" cy="114" r="0.6" fill="#2a5fd0" opacity="0.55"/><circle cx="540" cy="122" r="0.6" fill="#2a5fd0" opacity="0.55"/><circle cx="550" cy="8" r="0.6" fill="#2a5fd0" opacity="0.55"/><circle cx="550" cy="16" r="0.6" fill="#2a5fd0" opacity="0.55"/><circle cx="550" cy="23" r="0.6" fill="#2a5fd0" opacity="0.55"/><circle cx="550" cy="31" r="1.0" fill="#2a5fd0" opacity="0.55"/><circle cx="550" cy="38" r="1.6" fill="#2a5fd0" opacity="0.55"/><circle cx="550" cy="46" r="2.1" fill="#2a5fd0" opacity="0.55"/><circle cx="550" cy="54" r="2.6" fill="#2a5fd0" opacity="0.55"/><circle cx="550" cy="61" r="2.9" fill="#2a5fd0" opacity="0.55"/><circle cx="550" cy="69" r="2.7" fill="#2a5fd0" opacity="0.55"/><circle cx="550" cy="76" r="2.3" fill="#2a5fd0" opacity="0.55"/><circle cx="550" cy="84" r="1.7" fill="#2a5fd0" opacity="0.55"/><circle cx="550" cy="92" r="1.2" fill="#2a5fd0" opacity="0.55"/><circle cx="550" cy="99" r="0.6" fill="#2a5fd0" opacity="0.55"/><circle cx="550" cy="107" r="0.6" fill="#2a5fd0" opacity="0.55"/><circle cx="550" cy="114" r="0.6" fill="#2a5fd0" opacity="0.55"/><circle cx="550" cy="122" r="0.6" fill="#2a5fd0" opacity="0.55"/><circle cx="560" cy="8" r="0.6" fill="#2a5fd0" opacity="0.55"/><circle cx="560" cy="16" r="0.6" fill="#2a5fd0" opacity="0.55"/><circle cx="560" cy="23" r="0.6" fill="#2a5fd0" opacity="0.55"/><circle cx="560" cy="31" r="0.8" fill="#2a5fd0" opacity="0.55"/><circle cx="560" cy="38" r="1.3" fill="#2a5fd0" opacity="0.55"/><circle cx="560" cy="46" r="1.8" fill="#2a5fd0" opacity="0.55"/><circle cx="560" cy="54" r="2.2" fill="#2a5fd0" opacity="0.55"/><circle cx="560" cy="61" r="2.3" fill="#2a5fd0" opacity="0.55"/><circle cx="560" cy="69" r="2.2" fill="#2a5fd0" opacity="0.55"/><circle cx="560" cy="76" r="1.9" fill="#2a5fd0" opacity="0.55"/><circle cx="560" cy="84" r="1.4" fill="#2a5fd0" opacity="0.55"/><circle cx="560" cy="92" r="0.9" fill="#2a5fd0" opacity="0.55"/><circle cx="560" cy="99" r="0.6" fill="#2a5fd0" opacity="0.55"/><circle cx="560" cy="107" r="0.6" fill="#2a5fd0" opacity="0.55"/><circle cx="560" cy="114" r="0.6" fill="#2a5fd0" opacity="0.55"/><circle cx="560" cy="122" r="0.6" fill="#2a5fd0" opacity="0.55"/><circle cx="570" cy="8" r="0.6" fill="#2a5fd0" opacity="0.55"/><circle cx="570" cy="16" r="0.6" fill="#2a5fd0" opacity="0.55"/><circle cx="570" cy="23" r="0.6" fill="#2a5fd0" opacity="0.55"/><circle cx="570" cy="31" r="0.6" fill="#2a5fd0" opacity="0.55"/><circle cx="570" cy="38" r="1.0" fill="#2a5fd0" opacity="0.55"/><circle cx="570" cy="46" r="1.4" fill="#2a5fd0" opacity="0.55"/><circle cx="570" cy="54" r="1.6" fill="#2a5fd0" opacity="0.55"/><circle cx="570" cy="61" r="1.7" fill="#2a5fd0" opacity="0.55"/><circle cx="570" cy="69" r="1.7" fill="#2a5fd0" opacity="0.55"/><circle cx="570" cy="76" r="1.4" fill="#2a5fd0" opacity="0.55"/><circle cx="570" cy="84" r="1.1" fill="#2a5fd0" opacity="0.55"/><circle cx="570" cy="92" r="0.6" fill="#2a5fd0" opacity="0.55"/><circle cx="570" cy="99" r="0.6" fill="#2a5fd0" opacity="0.55"/><circle cx="570" cy="107" r="0.6" fill="#2a5fd0" opacity="0.55"/><circle cx="570" cy="114" r="0.6" fill="#2a5fd0" opacity="0.55"/><circle cx="570" cy="122" r="0.6" fill="#2a5fd0" opacity="0.55"/><circle cx="580" cy="8" r="0.6" fill="#2a5fd0" opacity="0.55"/><circle cx="580" cy="16" r="0.6" fill="#2a5fd0" opacity="0.55"/><circle cx="580" cy="23" r="0.6" fill="#2a5fd0" opacity="0.55"/><circle cx="580" cy="31" r="0.6" fill="#2a5fd0" opacity="0.55"/><circle cx="580" cy="38" r="0.6" fill="#2a5fd0" opacity="0.55"/><circle cx="580" cy="46" r="0.9" fill="#2a5fd0" opacity="0.55"/><circle cx="580" cy="54" r="1.1" fill="#2a5fd0" opacity="0.55"/><circle cx="580" cy="61" r="1.2" fill="#2a5fd0" opacity="0.55"/><circle cx="580" cy="69" r="1.1" fill="#2a5fd0" opacity="0.55"/><circle cx="580" cy="76" r="0.9" fill="#2a5fd0" opacity="0.55"/><circle cx="580" cy="84" r="0.6" fill="#2a5fd0" opacity="0.55"/><circle cx="580" cy="92" r="0.6" fill="#2a5fd0" opacity="0.55"/><circle cx="580" cy="99" r="0.6" fill="#2a5fd0" opacity="0.55"/><circle cx="580" cy="107" r="0.6" fill="#2a5fd0" opacity="0.55"/><circle cx="580" cy="114" r="0.6" fill="#2a5fd0" opacity="0.55"/><circle cx="580" cy="122" r="0.6" fill="#2a5fd0" opacity="0.55"/><circle cx="590" cy="8" r="0.6" fill="#2a5fd0" opacity="0.55"/><circle cx="590" cy="16" r="0.6" fill="#2a5fd0" opacity="0.55"/><circle cx="590" cy="23" r="0.6" fill="#2a5fd0" opacity="0.55"/><circle cx="590" cy="31" r="0.6" fill="#2a5fd0" opacity="0.55"/><circle cx="590" cy="38" r="0.6" fill="#2a5fd0" opacity="0.55"/><circle cx="590" cy="46" r="0.6" fill="#2a5fd0" opacity="0.55"/><circle cx="590" cy="54" r="0.6" fill="#2a5fd0" opacity="0.55"/><circle cx="590" cy="61" r="0.6" fill="#2a5fd0" opacity="0.55"/><circle cx="590" cy="69" r="0.6" fill="#2a5fd0" opacity="0.55"/><circle cx="590" cy="76" r="0.6" fill="#2a5fd0" opacity="0.55"/><circle cx="590" cy="84" r="0.6" fill="#2a5fd0" opacity="0.55"/><circle cx="590" cy="92" r="0.6" fill="#2a5fd0" opacity="0.55"/><circle cx="590" cy="99" r="0.6" fill="#2a5fd0" opacity="0.55"/><circle cx="590" cy="107" r="0.6" fill="#2a5fd0" opacity="0.55"/><circle cx="590" cy="114" r="0.6" fill="#2a5fd0" opacity="0.55"/><circle cx="590" cy="122" r="0.6" fill="#2a5fd0" opacity="0.55"/><circle cx="600" cy="8" r="0.6" fill="#2a5fd0" opacity="0.55"/><circle cx="600" cy="16" r="0.6" fill="#2a5fd0" opacity="0.55"/><circle cx="600" cy="23" r="0.6" fill="#2a5fd0" opacity="0.55"/><circle cx="600" cy="31" r="0.6" fill="#2a5fd0" opacity="0.55"/><circle cx="600" cy="38" r="0.6" fill="#2a5fd0" opacity="0.55"/><circle cx="600" cy="46" r="0.6" fill="#2a5fd0" opacity="0.55"/><circle cx="600" cy="54" r="0.6" fill="#2a5fd0" opacity="0.55"/><circle cx="600" cy="61" r="0.6" fill="#2a5fd0" opacity="0.55"/><circle cx="600" cy="69" r="0.6" fill="#2a5fd0" opacity="0.55"/><circle cx="600" cy="76" r="0.6" fill="#2a5fd0" opacity="0.55"/><circle cx="600" cy="84" r="0.6" fill="#2a5fd0" opacity="0.55"/><circle cx="600" cy="92" r="0.6" fill="#2a5fd0" opacity="0.55"/><circle cx="600" cy="99" r="0.6" fill="#2a5fd0" opacity="0.55"/><circle cx="600" cy="107" r="0.6" fill="#2a5fd0" opacity="0.55"/><circle cx="600" cy="114" r="0.6" fill="#2a5fd0" opacity="0.55"/><circle cx="600" cy="122" r="0.6" fill="#2a5fd0" opacity="0.55"/><circle cx="610" cy="8" r="0.6" fill="#2a5fd0" opacity="0.55"/><circle cx="610" cy="16" r="0.6" fill="#2a5fd0" opacity="0.55"/><circle cx="610" cy="23" r="0.6" fill="#2a5fd0" opacity="0.55"/><circle cx="610" cy="31" r="0.6" fill="#2a5fd0" opacity="0.55"/><circle cx="610" cy="38" r="0.6" fill="#2a5fd0" opacity="0.55"/><circle cx="610" cy="46" r="0.6" fill="#2a5fd0" opacity="0.55"/><circle cx="610" cy="54" r="0.6" fill="#2a5fd0" opacity="0.55"/><circle cx="610" cy="61" r="0.6" fill="#2a5fd0" opacity="0.55"/><circle cx="610" cy="69" r="0.6" fill="#2a5fd0" opacity="0.55"/><circle cx="610" cy="76" r="0.6" fill="#2a5fd0" opacity="0.55"/><circle cx="610" cy="84" r="0.6" fill="#2a5fd0" opacity="0.55"/><circle cx="610" cy="92" r="0.6" fill="#2a5fd0" opacity="0.55"/><circle cx="610" cy="99" r="0.6" fill="#2a5fd0" opacity="0.55"/><circle cx="610" cy="107" r="0.6" fill="#2a5fd0" opacity="0.55"/><circle cx="610" cy="114" r="0.6" fill="#2a5fd0" opacity="0.55"/><circle cx="610" cy="122" r="0.6" fill="#2a5fd0" opacity="0.55"/><circle cx="620" cy="8" r="0.6" fill="#2a5fd0" opacity="0.55"/><circle cx="620" cy="16" r="0.6" fill="#2a5fd0" opacity="0.55"/><circle cx="620" cy="23" r="0.6" fill="#2a5fd0" opacity="0.55"/><circle cx="620" cy="31" r="0.6" fill="#2a5fd0" opacity="0.55"/><circle cx="620" cy="38" r="0.6" fill="#2a5fd0" opacity="0.55"/><circle cx="620" cy="46" r="0.6" fill="#2a5fd0" opacity="0.55"/><circle cx="620" cy="54" r="0.6" fill="#2a5fd0" opacity="0.55"/><circle cx="620" cy="61" r="0.6" fill="#2a5fd0" opacity="0.55"/><circle cx="620" cy="69" r="0.6" fill="#2a5fd0" opacity="0.55"/><circle cx="620" cy="76" r="0.6" fill="#2a5fd0" opacity="0.55"/><circle cx="620" cy="84" r="0.6" fill="#2a5fd0" opacity="0.55"/><circle cx="620" cy="92" r="0.6" fill="#2a5fd0" opacity="0.55"/><circle cx="620" cy="99" r="0.6" fill="#2a5fd0" opacity="0.55"/><circle cx="620" cy="107" r="0.6" fill="#2a5fd0" opacity="0.55"/><circle cx="620" cy="114" r="0.6" fill="#2a5fd0" opacity="0.55"/><circle cx="620" cy="122" r="0.6" fill="#2a5fd0" opacity="0.55"/><circle cx="630" cy="8" r="0.6" fill="#2a5fd0" opacity="0.55"/><circle cx="630" cy="16" r="0.6" fill="#2a5fd0" opacity="0.55"/><circle cx="630" cy="23" r="0.6" fill="#2a5fd0" opacity="0.55"/><circle cx="630" cy="31" r="0.6" fill="#2a5fd0" opacity="0.55"/><circle cx="630" cy="38" r="0.6" fill="#2a5fd0" opacity="0.55"/><circle cx="630" cy="46" r="0.6" fill="#2a5fd0" opacity="0.55"/><circle cx="630" cy="54" r="0.6" fill="#2a5fd0" opacity="0.55"/><circle cx="630" cy="61" r="0.6" fill="#2a5fd0" opacity="0.55"/><circle cx="630" cy="69" r="0.6" fill="#2a5fd0" opacity="0.55"/><circle cx="630" cy="76" r="0.6" fill="#2a5fd0" opacity="0.55"/><circle cx="630" cy="84" r="0.6" fill="#2a5fd0" opacity="0.55"/><circle cx="630" cy="92" r="0.6" fill="#2a5fd0" opacity="0.55"/><circle cx="630" cy="99" r="0.6" fill="#2a5fd0" opacity="0.55"/><circle cx="630" cy="107" r="0.6" fill="#2a5fd0" opacity="0.55"/><circle cx="630" cy="114" r="0.6" fill="#2a5fd0" opacity="0.55"/><circle cx="630" cy="122" r="0.6" fill="#2a5fd0" opacity="0.55"/><circle cx="640" cy="8" r="0.6" fill="#2a5fd0" opacity="0.55"/><circle cx="640" cy="16" r="0.6" fill="#2a5fd0" opacity="0.55"/><circle cx="640" cy="23" r="0.6" fill="#2a5fd0" opacity="0.55"/><circle cx="640" cy="31" r="0.6" fill="#2a5fd0" opacity="0.55"/><circle cx="640" cy="38" r="0.6" fill="#2a5fd0" opacity="0.55"/><circle cx="640" cy="46" r="0.6" fill="#2a5fd0" opacity="0.55"/><circle cx="640" cy="54" r="0.6" fill="#2a5fd0" opacity="0.55"/><circle cx="640" cy="61" r="0.6" fill="#2a5fd0" opacity="0.55"/><circle cx="640" cy="69" r="0.6" fill="#2a5fd0" opacity="0.55"/><circle cx="640" cy="76" r="0.6" fill="#2a5fd0" opacity="0.55"/><circle cx="640" cy="84" r="0.6" fill="#2a5fd0" opacity="0.55"/><circle cx="640" cy="92" r="0.6" fill="#2a5fd0" opacity="0.55"/><circle cx="640" cy="99" r="0.6" fill="#2a5fd0" opacity="0.55"/><circle cx="640" cy="107" r="0.6" fill="#2a5fd0" opacity="0.55"/><circle cx="640" cy="114" r="0.6" fill="#2a5fd0" opacity="0.55"/><circle cx="640" cy="122" r="0.6" fill="#2a5fd0" opacity="0.55"/><circle cx="650" cy="8" r="0.6" fill="#2a5fd0" opacity="0.55"/><circle cx="650" cy="16" r="0.6" fill="#2a5fd0" opacity="0.55"/><circle cx="650" cy="23" r="0.6" fill="#2a5fd0" opacity="0.55"/><circle cx="650" cy="31" r="0.6" fill="#2a5fd0" opacity="0.55"/><circle cx="650" cy="38" r="0.6" fill="#2a5fd0" opacity="0.55"/><circle cx="650" cy="46" r="0.6" fill="#2a5fd0" opacity="0.55"/><circle cx="650" cy="54" r="0.6" fill="#2a5fd0" opacity="0.55"/><circle cx="650" cy="61" r="0.6" fill="#2a5fd0" opacity="0.55"/><circle cx="650" cy="69" r="0.6" fill="#2a5fd0" opacity="0.55"/><circle cx="650" cy="76" r="0.6" fill="#2a5fd0" opacity="0.55"/><circle cx="650" cy="84" r="0.6" fill="#2a5fd0" opacity="0.55"/><circle cx="650" cy="92" r="0.6" fill="#2a5fd0" opacity="0.55"/><circle cx="650" cy="99" r="0.6" fill="#2a5fd0" opacity="0.55"/><circle cx="650" cy="107" r="0.6" fill="#2a5fd0" opacity="0.55"/><circle cx="650" cy="114" r="0.6" fill="#2a5fd0" opacity="0.55"/><circle cx="650" cy="122" r="0.6" fill="#2a5fd0" opacity="0.55"/><circle cx="660" cy="8" r="0.6" fill="#2a5fd0" opacity="0.55"/><circle cx="660" cy="16" r="0.6" fill="#2a5fd0" opacity="0.55"/><circle cx="660" cy="23" r="0.6" fill="#2a5fd0" opacity="0.55"/><circle cx="660" cy="31" r="0.6" fill="#2a5fd0" opacity="0.55"/><circle cx="660" cy="38" r="0.6" fill="#2a5fd0" opacity="0.55"/><circle cx="660" cy="46" r="0.6" fill="#2a5fd0" opacity="0.55"/><circle cx="660" cy="54" r="0.6" fill="#2a5fd0" opacity="0.55"/><circle cx="660" cy="61" r="0.6" fill="#2a5fd0" opacity="0.55"/><circle cx="660" cy="69" r="0.6" fill="#2a5fd0" opacity="0.55"/><circle cx="660" cy="76" r="0.6" fill="#2a5fd0" opacity="0.55"/><circle cx="660" cy="84" r="0.6" fill="#2a5fd0" opacity="0.55"/><circle cx="660" cy="92" r="0.6" fill="#2a5fd0" opacity="0.55"/><circle cx="660" cy="99" r="0.6" fill="#2a5fd0" opacity="0.55"/><circle cx="660" cy="107" r="0.6" fill="#2a5fd0" opacity="0.55"/><circle cx="660" cy="114" r="0.6" fill="#2a5fd0" opacity="0.55"/><circle cx="660" cy="122" r="0.6" fill="#2a5fd0" opacity="0.55"/><circle cx="670" cy="8" r="0.6" fill="#2a5fd0" opacity="0.55"/><circle cx="670" cy="16" r="0.6" fill="#2a5fd0" opacity="0.55"/><circle cx="670" cy="23" r="0.6" fill="#2a5fd0" opacity="0.55"/><circle cx="670" cy="31" r="0.6" fill="#2a5fd0" opacity="0.55"/><circle cx="670" cy="38" r="0.6" fill="#2a5fd0" opacity="0.55"/><circle cx="670" cy="46" r="0.6" fill="#2a5fd0" opacity="0.55"/><circle cx="670" cy="54" r="0.6" fill="#2a5fd0" opacity="0.55"/><circle cx="670" cy="61" r="0.6" fill="#2a5fd0" opacity="0.55"/><circle cx="670" cy="69" r="0.6" fill="#2a5fd0" opacity="0.55"/><circle cx="670" cy="76" r="0.6" fill="#2a5fd0" opacity="0.55"/><circle cx="670" cy="84" r="0.6" fill="#2a5fd0" opacity="0.55"/><circle cx="670" cy="92" r="0.6" fill="#2a5fd0" opacity="0.55"/><circle cx="670" cy="99" r="0.6" fill="#2a5fd0" opacity="0.55"/><circle cx="670" cy="107" r="0.6" fill="#2a5fd0" opacity="0.55"/><circle cx="670" cy="114" r="0.6" fill="#2a5fd0" opacity="0.55"/><circle cx="670" cy="122" r="0.6" fill="#2a5fd0" opacity="0.55"/><circle cx="680" cy="8" r="0.6" fill="#2a5fd0" opacity="0.55"/><circle cx="680" cy="16" r="0.6" fill="#2a5fd0" opacity="0.55"/><circle cx="680" cy="23" r="0.6" fill="#2a5fd0" opacity="0.55"/><circle cx="680" cy="31" r="0.6" fill="#2a5fd0" opacity="0.55"/><circle cx="680" cy="38" r="0.6" fill="#2a5fd0" opacity="0.55"/><circle cx="680" cy="46" r="0.6" fill="#2a5fd0" opacity="0.55"/><circle cx="680" cy="54" r="0.6" fill="#2a5fd0" opacity="0.55"/><circle cx="680" cy="61" r="0.6" fill="#2a5fd0" opacity="0.55"/><circle cx="680" cy="69" r="0.6" fill="#2a5fd0" opacity="0.55"/><circle cx="680" cy="76" r="0.6" fill="#2a5fd0" opacity="0.55"/><circle cx="680" cy="84" r="0.6" fill="#2a5fd0" opacity="0.55"/><circle cx="680" cy="92" r="0.6" fill="#2a5fd0" opacity="0.55"/><circle cx="680" cy="99" r="0.6" fill="#2a5fd0" opacity="0.55"/><circle cx="680" cy="107" r="0.6" fill="#2a5fd0" opacity="0.55"/><circle cx="680" cy="114" r="0.6" fill="#2a5fd0" opacity="0.55"/><circle cx="680" cy="122" r="0.6" fill="#2a5fd0" opacity="0.55"/><circle cx="690" cy="8" r="0.6" fill="#2a5fd0" opacity="0.55"/><circle cx="690" cy="16" r="0.6" fill="#2a5fd0" opacity="0.55"/><circle cx="690" cy="23" r="0.6" fill="#2a5fd0" opacity="0.55"/><circle cx="690" cy="31" r="0.6" fill="#2a5fd0" opacity="0.55"/><circle cx="690" cy="38" r="0.6" fill="#2a5fd0" opacity="0.55"/><circle cx="690" cy="46" r="0.6" fill="#2a5fd0" opacity="0.55"/><circle cx="690" cy="54" r="0.6" fill="#2a5fd0" opacity="0.55"/><circle cx="690" cy="61" r="0.6" fill="#2a5fd0" opacity="0.55"/><circle cx="690" cy="69" r="0.6" fill="#2a5fd0" opacity="0.55"/><circle cx="690" cy="76" r="0.6" fill="#2a5fd0" opacity="0.55"/><circle cx="690" cy="84" r="0.6" fill="#2a5fd0" opacity="0.55"/><circle cx="690" cy="92" r="0.6" fill="#2a5fd0" opacity="0.55"/><circle cx="690" cy="99" r="0.6" fill="#2a5fd0" opacity="0.55"/><circle cx="690" cy="107" r="0.6" fill="#2a5fd0" opacity="0.55"/><circle cx="690" cy="114" r="0.6" fill="#2a5fd0" opacity="0.55"/><circle cx="690" cy="122" r="0.6" fill="#2a5fd0" opacity="0.55"/><circle cx="700" cy="8" r="0.6" fill="#2a5fd0" opacity="0.55"/><circle cx="700" cy="16" r="0.6" fill="#2a5fd0" opacity="0.55"/><circle cx="700" cy="23" r="0.6" fill="#2a5fd0" opacity="0.55"/><circle cx="700" cy="31" r="0.6" fill="#2a5fd0" opacity="0.55"/><circle cx="700" cy="38" r="0.6" fill="#2a5fd0" opacity="0.55"/><circle cx="700" cy="46" r="0.6" fill="#2a5fd0" opacity="0.55"/><circle cx="700" cy="54" r="0.6" fill="#2a5fd0" opacity="0.55"/><circle cx="700" cy="61" r="0.6" fill="#2a5fd0" opacity="0.55"/><circle cx="700" cy="69" r="0.6" fill="#2a5fd0" opacity="0.55"/><circle cx="700" cy="76" r="0.6" fill="#2a5fd0" opacity="0.55"/><circle cx="700" cy="84" r="0.6" fill="#2a5fd0" opacity="0.55"/><circle cx="700" cy="92" r="0.6" fill="#2a5fd0" opacity="0.55"/><circle cx="700" cy="99" r="0.6" fill="#2a5fd0" opacity="0.55"/><circle cx="700" cy="107" r="0.6" fill="#2a5fd0" opacity="0.55"/><circle cx="700" cy="114" r="0.6" fill="#2a5fd0" opacity="0.55"/><circle cx="700" cy="122" r="0.6" fill="#2a5fd0" opacity="0.55"/><circle cx="710" cy="8" r="0.6" fill="#2a5fd0" opacity="0.55"/><circle cx="710" cy="16" r="0.6" fill="#2a5fd0" opacity="0.55"/><circle cx="710" cy="23" r="0.6" fill="#2a5fd0" opacity="0.55"/><circle cx="710" cy="31" r="0.6" fill="#2a5fd0" opacity="0.55"/><circle cx="710" cy="38" r="0.6" fill="#2a5fd0" opacity="0.55"/><circle cx="710" cy="46" r="0.6" fill="#2a5fd0" opacity="0.55"/><circle cx="710" cy="54" r="0.6" fill="#2a5fd0" opacity="0.55"/><circle cx="710" cy="61" r="0.6" fill="#2a5fd0" opacity="0.55"/><circle cx="710" cy="69" r="0.6" fill="#2a5fd0" opacity="0.55"/><circle cx="710" cy="76" r="0.6" fill="#2a5fd0" opacity="0.55"/><circle cx="710" cy="84" r="0.6" fill="#2a5fd0" opacity="0.55"/><circle cx="710" cy="92" r="0.6" fill="#2a5fd0" opacity="0.55"/><circle cx="710" cy="99" r="0.6" fill="#2a5fd0" opacity="0.55"/><circle cx="710" cy="107" r="0.6" fill="#2a5fd0" opacity="0.55"/><circle cx="710" cy="114" r="0.6" fill="#2a5fd0" opacity="0.55"/><circle cx="710" cy="122" r="0.6" fill="#2a5fd0" opacity="0.55"/><circle cx="720" cy="8" r="0.6" fill="#2a5fd0" opacity="0.55"/><circle cx="720" cy="16" r="0.6" fill="#2a5fd0" opacity="0.55"/><circle cx="720" cy="23" r="0.6" fill="#2a5fd0" opacity="0.55"/><circle cx="720" cy="31" r="0.6" fill="#2a5fd0" opacity="0.55"/><circle cx="720" cy="38" r="0.6" fill="#2a5fd0" opacity="0.55"/><circle cx="720" cy="46" r="0.6" fill="#2a5fd0" opacity="0.55"/><circle cx="720" cy="54" r="0.6" fill="#2a5fd0" opacity="0.55"/><circle cx="720" cy="61" r="0.6" fill="#2a5fd0" opacity="0.55"/><circle cx="720" cy="69" r="0.6" fill="#2a5fd0" opacity="0.55"/><circle cx="720" cy="76" r="0.6" fill="#2a5fd0" opacity="0.55"/><circle cx="720" cy="84" r="0.6" fill="#2a5fd0" opacity="0.55"/><circle cx="720" cy="92" r="0.6" fill="#2a5fd0" opacity="0.55"/><circle cx="720" cy="99" r="0.6" fill="#2a5fd0" opacity="0.55"/><circle cx="720" cy="107" r="0.6" fill="#2a5fd0" opacity="0.55"/><circle cx="720" cy="114" r="0.6" fill="#2a5fd0" opacity="0.55"/><circle cx="720" cy="122" r="0.6" fill="#2a5fd0" opacity="0.55"/><rect x="35" y="42" width="325" height="12" fill="#ffffff" opacity="0.95"/><rect x="35" y="90" width="360" height="6" fill="#dfe6f5" opacity="0.75"/><rect x="35" y="104" width="310" height="6" fill="#dfe6f5" opacity="0.75"/><circle cx="47" cy="137" r="3.5" fill="#dfe6f5" opacity="0.8"/><rect x="70" y="134" width="265" height="6" fill="#dfe6f5" opacity="0.75"/><rect x="70" y="147" width="85" height="6" fill="#dfe6f5" opacity="0.75"/><circle cx="47" cy="170" r="3.5" fill="#dfe6f5" opacity="0.8"/><rect x="70" y="167" width="335" height="6" fill="#dfe6f5" opacity="0.75"/><circle cx="47" cy="184" r="3.5" fill="#dfe6f5" opacity="0.8"/><rect x="70" y="181" width="330" height="6" fill="#dfe6f5" opacity="0.75"/><rect x="70" y="195" width="270" height="6" fill="#dfe6f5" opacity="0.75"/><rect x="452" y="130" width="261" height="270" fill="url(#gA)"/><ellipse cx="575" cy="215" rx="58" ry="55" fill="#7eaed8" opacity="0.85"/><circle cx="552" cy="205" r="20" fill="#8a8f98"/><circle cx="590" cy="198" r="14" fill="#9aa0a8"/><path d="M540 260 L600 260 L595 340 L545 340z" fill="#4c7cae"/><ellipse cx="560" cy="365" rx="90" ry="18" fill="#b8dcf4" opacity="0.7"/><circle cx="475" cy="170" r="7" fill="#d8ecfa" opacity="0.75"/><circle cx="690" cy="165" r="8" fill="#d8ecfa" opacity="0.75"/><circle cx="480" cy="250" r="6" fill="#d8ecfa" opacity="0.75"/><circle cx="690" cy="240" r="7" fill="#d8ecfa" opacity="0.75"/><circle cx="670" cy="300" r="6" fill="#d8ecfa" opacity="0.75"/><circle cx="500" cy="310" r="5" fill="#d8ecfa" opacity="0.75"/><rect x="35" y="345" width="110" height="6" fill="#c8d23a" opacity="0.95"/></g></svg>
<div style="position:absolute;left:13.80px;top:77.78px;font-size:8.172px;line-height:1;font-weight:400;color:#3c4043;white-space:pre;transform-origin:left top;transform:scaleX(0.93);-webkit-text-stroke:0.06px #3c4043;">1</div>
<div style="position:absolute;left:24.30px;top:132.63px;width:85.40px;height:49.00px;border:1px solid #d3d6da;border-radius:6px;background:#fff;"></div>
<svg style="position:absolute;left:26.2px;top:134.33px" width="81.2" height="45.6" viewBox="0 0 720 405" preserveAspectRatio="none"><defs><clipPath id="tc2"><rect width="720" height="405" rx="36"/></clipPath></defs><g clip-path="url(#tc2)"><rect width="720" height="405" fill="#ffffff"/><rect x="345" y="38" width="165" height="11" fill="#3a3f4a" opacity="0.85"/><rect x="345" y="85" width="280" height="5" fill="#9aa0a8" opacity="0.6"/><rect x="345" y="100" width="55" height="5" fill="#9aa0a8" opacity="0.6"/><circle cx="362" cy="128" r="3.5" fill="#7a808a" opacity="0.7"/><rect x="380" y="125" width="255" height="5" fill="#9aa0a8" opacity="0.55"/><circle cx="362" cy="160" r="3.5" fill="#7a808a" opacity="0.7"/><rect x="380" y="157" width="215" height="5" fill="#9aa0a8" opacity="0.55"/><circle cx="362" cy="190" r="3.5" fill="#7a808a" opacity="0.7"/><rect x="380" y="187" width="260" height="5" fill="#9aa0a8" opacity="0.55"/><circle cx="362" cy="238" r="3.5" fill="#7a808a" opacity="0.7"/><rect x="380" y="235" width="290" height="5" fill="#9aa0a8" opacity="0.55"/><rect x="380" y="142" width="200" height="5" fill="#9aa0a8" opacity="0.5"/><rect x="380" y="175" width="100" height="5" fill="#9aa0a8" opacity="0.5"/><rect x="380" y="205" width="270" height="5" fill="#9aa0a8" opacity="0.5"/><rect x="380" y="250" width="150" height="5" fill="#9aa0a8" opacity="0.5"/><rect x="345" y="275" width="310" height="5" fill="#9aa0a8" opacity="0.6"/><rect x="345" y="290" width="250" height="5" fill="#9aa0a8" opacity="0.6"/><rect x="53.5" y="92" width="3" height="80" fill="#6cc4ec" opacity="0.85"/><rect x="88.0" y="92" width="3" height="80" fill="#6cc4ec" opacity="0.85"/><rect x="142.5" y="92" width="3" height="80" fill="#6cc4ec" opacity="0.85"/><rect x="191.5" y="92" width="3" height="80" fill="#6cc4ec" opacity="0.85"/><rect x="244.5" y="92" width="3" height="80" fill="#6cc4ec" opacity="0.85"/><rect x="285.5" y="92" width="3" height="80" fill="#6cc4ec" opacity="0.85"/><rect x="26" y="201" width="275" height="75" fill="none" stroke="#8fd2f0" stroke-width="3" opacity="0.9"/><rect x="40" y="115" width="40" height="6" fill="#a8aeb6" opacity="0.6"/><rect x="45" y="127" width="30" height="6" fill="#a8aeb6" opacity="0.5"/><rect x="115" y="112" width="40" height="6" fill="#a8aeb6" opacity="0.6"/><rect x="120" y="124" width="30" height="6" fill="#a8aeb6" opacity="0.5"/><rect x="170" y="112" width="40" height="6" fill="#a8aeb6" opacity="0.6"/><rect x="175" y="124" width="30" height="6" fill="#a8aeb6" opacity="0.5"/><rect x="220" y="120" width="40" height="6" fill="#a8aeb6" opacity="0.6"/><rect x="225" y="132" width="30" height="6" fill="#a8aeb6" opacity="0.5"/><rect x="265" y="118" width="40" height="6" fill="#a8aeb6" opacity="0.6"/><rect x="270" y="130" width="30" height="6" fill="#a8aeb6" opacity="0.5"/><rect x="57" y="300" width="36" height="5" fill="#a8aeb6" opacity="0.6"/><rect x="117" y="300" width="36" height="5" fill="#a8aeb6" opacity="0.6"/><rect x="162" y="300" width="36" height="5" fill="#a8aeb6" opacity="0.6"/><rect x="207" y="300" width="36" height="5" fill="#a8aeb6" opacity="0.6"/><rect x="272" y="300" width="36" height="5" fill="#a8aeb6" opacity="0.6"/><rect x="77" y="215" width="36" height="5" fill="#a8aeb6" opacity="0.5"/><rect x="132" y="215" width="36" height="5" fill="#a8aeb6" opacity="0.5"/><rect x="232" y="215" width="36" height="5" fill="#a8aeb6" opacity="0.5"/><rect x="272" y="215" width="36" height="5" fill="#a8aeb6" opacity="0.5"/><circle cx="74" cy="173" r="20" fill="#39434e"/><circle cx="89.5" cy="161" r="13" fill="#506070"/><circle cx="185" cy="173" r="20" fill="#6a737c"/><circle cx="236" cy="164" r="22" fill="#1a2230"/><circle cx="68" cy="246" r="20" fill="#46658a"/><circle cx="95" cy="253" r="15" fill="#38383e"/><circle cx="144" cy="249" r="16" fill="#4c545c"/><circle cx="178" cy="232" r="14" fill="#3e4650"/><circle cx="216" cy="246" r="14" fill="#5c6a62"/><circle cx="253" cy="256" r="14" fill="#1e2838"/><circle cx="294" cy="253" r="13" fill="#6a6460"/><circle cx="600" cy="250" r="1.6" fill="#c8ccd2" opacity="0.6"/><circle cx="600" cy="264" r="1.6" fill="#c8ccd2" opacity="0.6"/><circle cx="600" cy="278" r="1.6" fill="#c8ccd2" opacity="0.6"/><circle cx="600" cy="292" r="1.6" fill="#c8ccd2" opacity="0.6"/><circle cx="600" cy="306" r="1.6" fill="#c8ccd2" opacity="0.6"/><circle cx="600" cy="320" r="1.6" fill="#c8ccd2" opacity="0.6"/><circle cx="600" cy="334" r="1.6" fill="#c8ccd2" opacity="0.6"/><circle cx="600" cy="348" r="1.6" fill="#c8ccd2" opacity="0.6"/><circle cx="600" cy="362" r="1.6" fill="#c8ccd2" opacity="0.6"/><circle cx="600" cy="376" r="1.6" fill="#c8ccd2" opacity="0.6"/><circle cx="614" cy="250" r="1.6" fill="#c8ccd2" opacity="0.6"/><circle cx="614" cy="264" r="1.6" fill="#c8ccd2" opacity="0.6"/><circle cx="614" cy="278" r="1.6" fill="#c8ccd2" opacity="0.6"/><circle cx="614" cy="292" r="1.6" fill="#c8ccd2" opacity="0.6"/><circle cx="614" cy="306" r="1.6" fill="#c8ccd2" opacity="0.6"/><circle cx="614" cy="320" r="1.6" fill="#c8ccd2" opacity="0.6"/><circle cx="614" cy="334" r="1.6" fill="#c8ccd2" opacity="0.6"/><circle cx="614" cy="348" r="1.6" fill="#c8ccd2" opacity="0.6"/><circle cx="614" cy="362" r="1.6" fill="#c8ccd2" opacity="0.6"/><circle cx="614" cy="376" r="1.6" fill="#c8ccd2" opacity="0.6"/><circle cx="628" cy="250" r="1.6" fill="#c8ccd2" opacity="0.6"/><circle cx="628" cy="264" r="1.6" fill="#c8ccd2" opacity="0.6"/><circle cx="628" cy="278" r="1.6" fill="#c8ccd2" opacity="0.6"/><circle cx="628" cy="292" r="1.6" fill="#c8ccd2" opacity="0.6"/><circle cx="628" cy="306" r="1.6" fill="#c8ccd2" opacity="0.6"/><circle cx="628" cy="320" r="1.6" fill="#c8ccd2" opacity="0.6"/><circle cx="628" cy="334" r="1.6" fill="#c8ccd2" opacity="0.6"/><circle cx="628" cy="348" r="1.6" fill="#c8ccd2" opacity="0.6"/><circle cx="628" cy="362" r="1.6" fill="#c8ccd2" opacity="0.6"/><circle cx="628" cy="376" r="1.6" fill="#c8ccd2" opacity="0.6"/><circle cx="642" cy="250" r="1.6" fill="#c8ccd2" opacity="0.6"/><circle cx="642" cy="264" r="1.6" fill="#c8ccd2" opacity="0.6"/><circle cx="642" cy="278" r="1.6" fill="#c8ccd2" opacity="0.6"/><circle cx="642" cy="292" r="1.6" fill="#c8ccd2" opacity="0.6"/><circle cx="642" cy="306" r="1.6" fill="#c8ccd2" opacity="0.6"/><circle cx="642" cy="320" r="1.6" fill="#c8ccd2" opacity="0.6"/><circle cx="642" cy="334" r="1.6" fill="#c8ccd2" opacity="0.6"/><circle cx="642" cy="348" r="1.6" fill="#c8ccd2" opacity="0.6"/><circle cx="642" cy="362" r="1.6" fill="#c8ccd2" opacity="0.6"/><circle cx="642" cy="376" r="1.6" fill="#c8ccd2" opacity="0.6"/><circle cx="656" cy="250" r="1.6" fill="#c8ccd2" opacity="0.6"/><circle cx="656" cy="264" r="1.6" fill="#c8ccd2" opacity="0.6"/><circle cx="656" cy="278" r="1.6" fill="#c8ccd2" opacity="0.6"/><circle cx="656" cy="292" r="1.6" fill="#c8ccd2" opacity="0.6"/><circle cx="656" cy="306" r="1.6" fill="#c8ccd2" opacity="0.6"/><circle cx="656" cy="320" r="1.6" fill="#c8ccd2" opacity="0.6"/><circle cx="656" cy="334" r="1.6" fill="#c8ccd2" opacity="0.6"/><circle cx="656" cy="348" r="1.6" fill="#c8ccd2" opacity="0.6"/><circle cx="656" cy="362" r="1.6" fill="#c8ccd2" opacity="0.6"/><circle cx="656" cy="376" r="1.6" fill="#c8ccd2" opacity="0.6"/><circle cx="670" cy="250" r="1.6" fill="#c8ccd2" opacity="0.6"/><circle cx="670" cy="264" r="1.6" fill="#c8ccd2" opacity="0.6"/><circle cx="670" cy="278" r="1.6" fill="#c8ccd2" opacity="0.6"/><circle cx="670" cy="292" r="1.6" fill="#c8ccd2" opacity="0.6"/><circle cx="670" cy="306" r="1.6" fill="#c8ccd2" opacity="0.6"/><circle cx="670" cy="320" r="1.6" fill="#c8ccd2" opacity="0.6"/><circle cx="670" cy="334" r="1.6" fill="#c8ccd2" opacity="0.6"/><circle cx="670" cy="348" r="1.6" fill="#c8ccd2" opacity="0.6"/><circle cx="670" cy="362" r="1.6" fill="#c8ccd2" opacity="0.6"/><circle cx="670" cy="376" r="1.6" fill="#c8ccd2" opacity="0.6"/><circle cx="684" cy="250" r="1.6" fill="#c8ccd2" opacity="0.6"/><circle cx="684" cy="264" r="1.6" fill="#c8ccd2" opacity="0.6"/><circle cx="684" cy="278" r="1.6" fill="#c8ccd2" opacity="0.6"/><circle cx="684" cy="292" r="1.6" fill="#c8ccd2" opacity="0.6"/><circle cx="684" cy="306" r="1.6" fill="#c8ccd2" opacity="0.6"/><circle cx="684" cy="320" r="1.6" fill="#c8ccd2" opacity="0.6"/><circle cx="684" cy="334" r="1.6" fill="#c8ccd2" opacity="0.6"/><circle cx="684" cy="348" r="1.6" fill="#c8ccd2" opacity="0.6"/><circle cx="684" cy="362" r="1.6" fill="#c8ccd2" opacity="0.6"/><circle cx="684" cy="376" r="1.6" fill="#c8ccd2" opacity="0.6"/><circle cx="698" cy="250" r="1.6" fill="#c8ccd2" opacity="0.6"/><circle cx="698" cy="264" r="1.6" fill="#c8ccd2" opacity="0.6"/><circle cx="698" cy="278" r="1.6" fill="#c8ccd2" opacity="0.6"/><circle cx="698" cy="292" r="1.6" fill="#c8ccd2" opacity="0.6"/><circle cx="698" cy="306" r="1.6" fill="#c8ccd2" opacity="0.6"/><circle cx="698" cy="320" r="1.6" fill="#c8ccd2" opacity="0.6"/><circle cx="698" cy="334" r="1.6" fill="#c8ccd2" opacity="0.6"/><circle cx="698" cy="348" r="1.6" fill="#c8ccd2" opacity="0.6"/><circle cx="698" cy="362" r="1.6" fill="#c8ccd2" opacity="0.6"/><circle cx="698" cy="376" r="1.6" fill="#c8ccd2" opacity="0.6"/></g></svg>
<div style="position:absolute;left:13.80px;top:134.91px;font-size:8.172px;line-height:1;font-weight:400;color:#3c4043;white-space:pre;transform-origin:left top;transform:scaleX(0.93);-webkit-text-stroke:0.06px #3c4043;">2</div>
<div style="position:absolute;left:24.30px;top:189.76px;width:85.40px;height:49.00px;border:1px solid #d3d6da;border-radius:6px;background:#fff;"></div>
<svg style="position:absolute;left:26.2px;top:191.46px" width="81.2" height="45.6" viewBox="0 0 720 405" preserveAspectRatio="none"><defs><clipPath id="tc3"><rect width="720" height="405" rx="36"/></clipPath></defs><g clip-path="url(#tc3)"><rect width="720" height="405" fill="#01287b"/><circle cx="470" cy="8" r="0.6" fill="#2a5fd0" opacity="0.55"/><circle cx="470" cy="16" r="0.6" fill="#2a5fd0" opacity="0.55"/><circle cx="470" cy="23" r="0.6" fill="#2a5fd0" opacity="0.55"/><circle cx="470" cy="31" r="0.6" fill="#2a5fd0" opacity="0.55"/><circle cx="470" cy="38" r="0.6" fill="#2a5fd0" opacity="0.55"/><circle cx="470" cy="46" r="0.6" fill="#2a5fd0" opacity="0.55"/><circle cx="470" cy="54" r="0.6" fill="#2a5fd0" opacity="0.55"/><circle cx="470" cy="61" r="0.6" fill="#2a5fd0" opacity="0.55"/><circle cx="470" cy="69" r="0.6" fill="#2a5fd0" opacity="0.55"/><circle cx="470" cy="76" r="0.6" fill="#2a5fd0" opacity="0.55"/><circle cx="470" cy="84" r="0.6" fill="#2a5fd0" opacity="0.55"/><circle cx="470" cy="92" r="0.6" fill="#2a5fd0" opacity="0.55"/><circle cx="470" cy="99" r="0.6" fill="#2a5fd0" opacity="0.55"/><circle cx="470" cy="107" r="0.6" fill="#2a5fd0" opacity="0.55"/><circle cx="470" cy="114" r="0.6" fill="#2a5fd0" opacity="0.55"/><circle cx="470" cy="122" r="0.6" fill="#2a5fd0" opacity="0.55"/><circle cx="480" cy="8" r="0.6" fill="#2a5fd0" opacity="0.55"/><circle cx="480" cy="16" r="0.6" fill="#2a5fd0" opacity="0.55"/><circle cx="480" cy="23" r="0.6" fill="#2a5fd0" opacity="0.55"/><circle cx="480" cy="31" r="0.6" fill="#2a5fd0" opacity="0.55"/><circle cx="480" cy="38" r="0.6" fill="#2a5fd0" opacity="0.55"/><circle cx="480" cy="46" r="0.6" fill="#2a5fd0" opacity="0.55"/><circle cx="480" cy="54" r="0.6" fill="#2a5fd0" opacity="0.55"/><circle cx="480" cy="61" r="0.6" fill="#2a5fd0" opacity="0.55"/><circle cx="480" cy="69" r="0.6" fill="#2a5fd0" opacity="0.55"/><circle cx="480" cy="76" r="0.6" fill="#2a5fd0" opacity="0.55"/><circle cx="480" cy="84" r="0.6" fill="#2a5fd0" opacity="0.55"/><circle cx="480" cy="92" r="0.6" fill="#2a5fd0" opacity="0.55"/><circle cx="480" cy="99" r="0.6" fill="#2a5fd0" opacity="0.55"/><circle cx="480" cy="107" r="0.6" fill="#2a5fd0" opacity="0.55"/><circle cx="480" cy="114" r="0.6" fill="#2a5fd0" opacity="0.55"/><circle cx="480" cy="122" r="0.6" fill="#2a5fd0" opacity="0.55"/><circle cx="490" cy="8" r="0.6" fill="#2a5fd0" opacity="0.55"/><circle cx="490" cy="16" r="0.6" fill="#2a5fd0" opacity="0.55"/><circle cx="490" cy="23" r="0.6" fill="#2a5fd0" opacity="0.55"/><circle cx="490" cy="31" r="0.6" fill="#2a5fd0" opacity="0.55"/><circle cx="490" cy="38" r="0.6" fill="#2a5fd0" opacity="0.55"/><circle cx="490" cy="46" r="0.6" fill="#2a5fd0" opacity="0.55"/><circle cx="490" cy="54" r="0.6" fill="#2a5fd0" opacity="0.55"/><circle cx="490" cy="61" r="0.6" fill="#2a5fd0" opacity="0.55"/><circle cx="490" cy="69" r="0.6" fill="#2a5fd0" opacity="0.55"/><circle cx="490" cy="76" r="0.6" fill="#2a5fd0" opacity="0.55"/><circle cx="490" cy="84" r="0.6" fill="#2a5fd0" opacity="0.55"/><circle cx="490" cy="92" r="0.6" fill="#2a5fd0" opacity="0.55"/><circle cx="490" cy="99" r="0.6" fill="#2a5fd0" opacity="0.55"/><circle cx="490" cy="107" r="0.6" fill="#2a5fd0" opacity="0.55"/><circle cx="490" cy="114" r="0.6" fill="#2a5fd0" opacity="0.55"/><circle cx="490" cy="122" r="0.6" fill="#2a5fd0" opacity="0.55"/><circle cx="500" cy="8" r="0.6" fill="#2a5fd0" opacity="0.55"/><circle cx="500" cy="16" r="0.6" fill="#2a5fd0" opacity="0.55"/><circle cx="500" cy="23" r="0.6" fill="#2a5fd0" opacity="0.55"/><circle cx="500" cy="31" r="0.6" fill="#2a5fd0" opacity="0.55"/><circle cx="500" cy="38" r="0.6" fill="#2a5fd0" opacity="0.55"/><circle cx="500" cy="46" r="0.9" fill="#2a5fd0" opacity="0.55"/><circle cx="500" cy="54" r="1.1" fill="#2a5fd0" opacity="0.55"/><circle cx="500" cy="61" r="1.2" fill="#2a5fd0" opacity="0.55"/><circle cx="500" cy="69" r="1.1" fill="#2a5fd0" opacity="0.55"/><circle cx="500" cy="76" r="0.9" fill="#2a5fd0" opacity="0.55"/><circle cx="500" cy="84" r="0.6" fill="#2a5fd0" opacity="0.55"/><circle cx="500" cy="92" r="0.6" fill="#2a5fd0" opacity="0.55"/><circle cx="500" cy="99" r="0.6" fill="#2a5fd0" opacity="0.55"/><circle cx="500" cy="107" r="0.6" fill="#2a5fd0" opacity="0.55"/><circle cx="500" cy="114" r="0.6" fill="#2a5fd0" opacity="0.55"/><circle cx="500" cy="122" r="0.6" fill="#2a5fd0" opacity="0.55"/><circle cx="510" cy="8" r="0.6" fill="#2a5fd0" opacity="0.55"/><circle cx="510" cy="16" r="0.6" fill="#2a5fd0" opacity="0.55"/><circle cx="510" cy="23" r="0.6" fill="#2a5fd0" opacity="0.55"/><circle cx="510" cy="31" r="0.6" fill="#2a5fd0" opacity="0.55"/><circle cx="510" cy="38" r="1.0" fill="#2a5fd0" opacity="0.55"/><circle cx="510" cy="46" r="1.4" fill="#2a5fd0" opacity="0.55"/><circle cx="510" cy="54" r="1.6" fill="#2a5fd0" opacity="0.55"/><circle cx="510" cy="61" r="1.7" fill="#2a5fd0" opacity="0.55"/><circle cx="510" cy="69" r="1.7" fill="#2a5fd0" opacity="0.55"/><circle cx="510" cy="76" r="1.4" fill="#2a5fd0" opacity="0.55"/><circle cx="510" cy="84" r="1.1" fill="#2a5fd0" opacity="0.55"/><circle cx="510" cy="92" r="0.6" fill="#2a5fd0" opacity="0.55"/><circle cx="510" cy="99" r="0.6" fill="#2a5fd0" opacity="0.55"/><circle cx="510" cy="107" r="0.6" fill="#2a5fd0" opacity="0.55"/><circle cx="510" cy="114" r="0.6" fill="#2a5fd0" opacity="0.55"/><circle cx="510" cy="122" r="0.6" fill="#2a5fd0" opacity="0.55"/><circle cx="520" cy="8" r="0.6" fill="#2a5fd0" opacity="0.55"/><circle cx="520" cy="16" r="0.6" fill="#2a5fd0" opacity="0.55"/><circle cx="520" cy="23" r="0.6" fill="#2a5fd0" opacity="0.55"/><circle cx="520" cy="31" r="0.8" fill="#2a5fd0" opacity="0.55"/><circle cx="520" cy="38" r="1.3" fill="#2a5fd0" opacity="0.55"/><circle cx="520" cy="46" r="1.8" fill="#2a5fd0" opacity="0.55"/><circle cx="520" cy="54" r="2.2" fill="#2a5fd0" opacity="0.55"/><circle cx="520" cy="61" r="2.3" fill="#2a5fd0" opacity="0.55"/><circle cx="520" cy="69" r="2.2" fill="#2a5fd0" opacity="0.55"/><circle cx="520" cy="76" r="1.9" fill="#2a5fd0" opacity="0.55"/><circle cx="520" cy="84" r="1.4" fill="#2a5fd0" opacity="0.55"/><circle cx="520" cy="92" r="0.9" fill="#2a5fd0" opacity="0.55"/><circle cx="520" cy="99" r="0.6" fill="#2a5fd0" opacity="0.55"/><circle cx="520" cy="107" r="0.6" fill="#2a5fd0" opacity="0.55"/><circle cx="520" cy="114" r="0.6" fill="#2a5fd0" opacity="0.55"/><circle cx="520" cy="122" r="0.6" fill="#2a5fd0" opacity="0.55"/><circle cx="530" cy="8" r="0.6" fill="#2a5fd0" opacity="0.55"/><circle cx="530" cy="16" r="0.6" fill="#2a5fd0" opacity="0.55"/><circle cx="530" cy="23" r="0.6" fill="#2a5fd0" opacity="0.55"/><circle cx="530" cy="31" r="1.0" fill="#2a5fd0" opacity="0.55"/><circle cx="530" cy="38" r="1.6" fill="#2a5fd0" opacity="0.55"/><circle cx="530" cy="46" r="2.1" fill="#2a5fd0" opacity="0.55"/><circle cx="530" cy="54" r="2.6" fill="#2a5fd0" opacity="0.55"/><circle cx="530" cy="61" r="2.9" fill="#2a5fd0" opacity="0.55"/><circle cx="530" cy="69" r="2.7" fill="#2a5fd0" opacity="0.55"/><circle cx="530" cy="76" r="2.3" fill="#2a5fd0" opacity="0.55"/><circle cx="530" cy="84" r="1.7" fill="#2a5fd0" opacity="0.55"/><circle cx="530" cy="92" r="1.2" fill="#2a5fd0" opacity="0.55"/><circle cx="530" cy="99" r="0.6" fill="#2a5fd0" opacity="0.55"/><circle cx="530" cy="107" r="0.6" fill="#2a5fd0" opacity="0.55"/><circle cx="530" cy="114" r="0.6" fill="#2a5fd0" opacity="0.55"/><circle cx="530" cy="122" r="0.6" fill="#2a5fd0" opacity="0.55"/><circle cx="540" cy="8" r="0.6" fill="#2a5fd0" opacity="0.55"/><circle cx="540" cy="16" r="0.6" fill="#2a5fd0" opacity="0.55"/><circle cx="540" cy="23" r="0.6" fill="#2a5fd0" opacity="0.55"/><circle cx="540" cy="31" r="1.1" fill="#2a5fd0" opacity="0.55"/><circle cx="540" cy="38" r="1.7" fill="#2a5fd0" opacity="0.55"/><circle cx="540" cy="46" r="2.3" fill="#2a5fd0" opacity="0.55"/><circle cx="540" cy="54" r="2.9" fill="#2a5fd0" opacity="0.55"/><circle cx="540" cy="61" r="3.4" fill="#2a5fd0" opacity="0.55"/><circle cx="540" cy="69" r="3.0" fill="#2a5fd0" opacity="0.55"/><circle cx="540" cy="76" r="2.4" fill="#2a5fd0" opacity="0.55"/><circle cx="540" cy="84" r="1.8" fill="#2a5fd0" opacity="0.55"/><circle cx="540" cy="92" r="1.2" fill="#2a5fd0" opacity="0.55"/><circle cx="540" cy="99" r="0.6" fill="#2a5fd0" opacity="0.55"/><circle cx="540" cy="107" r="0.6" fill="#2a5fd0" opacity="0.55"/><circle cx="540" cy="114" r="0.6" fill="#2a5fd0" opacity="0.55"/><circle cx="540" cy="122" r="0.6" fill="#2a5fd0" opacity="0.55"/><circle cx="550" cy="8" r="0.6" fill="#2a5fd0" opacity="0.55"/><circle cx="550" cy="16" r="0.6" fill="#2a5fd0" opacity="0.55"/><circle cx="550" cy="23" r="0.6" fill="#2a5fd0" opacity="0.55"/><circle cx="550" cy="31" r="1.0" fill="#2a5fd0" opacity="0.55"/><circle cx="550" cy="38" r="1.6" fill="#2a5fd0" opacity="0.55"/><circle cx="550" cy="46" r="2.1" fill="#2a5fd0" opacity="0.55"/><circle cx="550" cy="54" r="2.6" fill="#2a5fd0" opacity="0.55"/><circle cx="550" cy="61" r="2.9" fill="#2a5fd0" opacity="0.55"/><circle cx="550" cy="69" r="2.7" fill="#2a5fd0" opacity="0.55"/><circle cx="550" cy="76" r="2.3" fill="#2a5fd0" opacity="0.55"/><circle cx="550" cy="84" r="1.7" fill="#2a5fd0" opacity="0.55"/><circle cx="550" cy="92" r="1.2" fill="#2a5fd0" opacity="0.55"/><circle cx="550" cy="99" r="0.6" fill="#2a5fd0" opacity="0.55"/><circle cx="550" cy="107" r="0.6" fill="#2a5fd0" opacity="0.55"/><circle cx="550" cy="114" r="0.6" fill="#2a5fd0" opacity="0.55"/><circle cx="550" cy="122" r="0.6" fill="#2a5fd0" opacity="0.55"/><circle cx="560" cy="8" r="0.6" fill="#2a5fd0" opacity="0.55"/><circle cx="560" cy="16" r="0.6" fill="#2a5fd0" opacity="0.55"/><circle cx="560" cy="23" r="0.6" fill="#2a5fd0" opacity="0.55"/><circle cx="560" cy="31" r="0.8" fill="#2a5fd0" opacity="0.55"/><circle cx="560" cy="38" r="1.3" fill="#2a5fd0" opacity="0.55"/><circle cx="560" cy="46" r="1.8" fill="#2a5fd0" opacity="0.55"/><circle cx="560" cy="54" r="2.2" fill="#2a5fd0" opacity="0.55"/><circle cx="560" cy="61" r="2.3" fill="#2a5fd0" opacity="0.55"/><circle cx="560" cy="69" r="2.2" fill="#2a5fd0" opacity="0.55"/><circle cx="560" cy="76" r="1.9" fill="#2a5fd0" opacity="0.55"/><circle cx="560" cy="84" r="1.4" fill="#2a5fd0" opacity="0.55"/><circle cx="560" cy="92" r="0.9" fill="#2a5fd0" opacity="0.55"/><circle cx="560" cy="99" r="0.6" fill="#2a5fd0" opacity="0.55"/><circle cx="560" cy="107" r="0.6" fill="#2a5fd0" opacity="0.55"/><circle cx="560" cy="114" r="0.6" fill="#2a5fd0" opacity="0.55"/><circle cx="560" cy="122" r="0.6" fill="#2a5fd0" opacity="0.55"/><circle cx="570" cy="8" r="0.6" fill="#2a5fd0" opacity="0.55"/><circle cx="570" cy="16" r="0.6" fill="#2a5fd0" opacity="0.55"/><circle cx="570" cy="23" r="0.6" fill="#2a5fd0" opacity="0.55"/><circle cx="570" cy="31" r="0.6" fill="#2a5fd0" opacity="0.55"/><circle cx="570" cy="38" r="1.0" fill="#2a5fd0" opacity="0.55"/><circle cx="570" cy="46" r="1.4" fill="#2a5fd0" opacity="0.55"/><circle cx="570" cy="54" r="1.6" fill="#2a5fd0" opacity="0.55"/><circle cx="570" cy="61" r="1.7" fill="#2a5fd0" opacity="0.55"/><circle cx="570" cy="69" r="1.7" fill="#2a5fd0" opacity="0.55"/><circle cx="570" cy="76" r="1.4" fill="#2a5fd0" opacity="0.55"/><circle cx="570" cy="84" r="1.1" fill="#2a5fd0" opacity="0.55"/><circle cx="570" cy="92" r="0.6" fill="#2a5fd0" opacity="0.55"/><circle cx="570" cy="99" r="0.6" fill="#2a5fd0" opacity="0.55"/><circle cx="570" cy="107" r="0.6" fill="#2a5fd0" opacity="0.55"/><circle cx="570" cy="114" r="0.6" fill="#2a5fd0" opacity="0.55"/><circle cx="570" cy="122" r="0.6" fill="#2a5fd0" opacity="0.55"/><circle cx="580" cy="8" r="0.6" fill="#2a5fd0" opacity="0.55"/><circle cx="580" cy="16" r="0.6" fill="#2a5fd0" opacity="0.55"/><circle cx="580" cy="23" r="0.6" fill="#2a5fd0" opacity="0.55"/><circle cx="580" cy="31" r="0.6" fill="#2a5fd0" opacity="0.55"/><circle cx="580" cy="38" r="0.6" fill="#2a5fd0" opacity="0.55"/><circle cx="580" cy="46" r="0.9" fill="#2a5fd0" opacity="0.55"/><circle cx="580" cy="54" r="1.1" fill="#2a5fd0" opacity="0.55"/><circle cx="580" cy="61" r="1.2" fill="#2a5fd0" opacity="0.55"/><circle cx="580" cy="69" r="1.1" fill="#2a5fd0" opacity="0.55"/><circle cx="580" cy="76" r="0.9" fill="#2a5fd0" opacity="0.55"/><circle cx="580" cy="84" r="0.6" fill="#2a5fd0" opacity="0.55"/><circle cx="580" cy="92" r="0.6" fill="#2a5fd0" opacity="0.55"/><circle cx="580" cy="99" r="0.6" fill="#2a5fd0" opacity="0.55"/><circle cx="580" cy="107" r="0.6" fill="#2a5fd0" opacity="0.55"/><circle cx="580" cy="114" r="0.6" fill="#2a5fd0" opacity="0.55"/><circle cx="580" cy="122" r="0.6" fill="#2a5fd0" opacity="0.55"/><circle cx="590" cy="8" r="0.6" fill="#2a5fd0" opacity="0.55"/><circle cx="590" cy="16" r="0.6" fill="#2a5fd0" opacity="0.55"/><circle cx="590" cy="23" r="0.6" fill="#2a5fd0" opacity="0.55"/><circle cx="590" cy="31" r="0.6" fill="#2a5fd0" opacity="0.55"/><circle cx="590" cy="38" r="0.6" fill="#2a5fd0" opacity="0.55"/><circle cx="590" cy="46" r="0.6" fill="#2a5fd0" opacity="0.55"/><circle cx="590" cy="54" r="0.6" fill="#2a5fd0" opacity="0.55"/><circle cx="590" cy="61" r="0.6" fill="#2a5fd0" opacity="0.55"/><circle cx="590" cy="69" r="0.6" fill="#2a5fd0" opacity="0.55"/><circle cx="590" cy="76" r="0.6" fill="#2a5fd0" opacity="0.55"/><circle cx="590" cy="84" r="0.6" fill="#2a5fd0" opacity="0.55"/><circle cx="590" cy="92" r="0.6" fill="#2a5fd0" opacity="0.55"/><circle cx="590" cy="99" r="0.6" fill="#2a5fd0" opacity="0.55"/><circle cx="590" cy="107" r="0.6" fill="#2a5fd0" opacity="0.55"/><circle cx="590" cy="114" r="0.6" fill="#2a5fd0" opacity="0.55"/><circle cx="590" cy="122" r="0.6" fill="#2a5fd0" opacity="0.55"/><circle cx="600" cy="8" r="0.6" fill="#2a5fd0" opacity="0.55"/><circle cx="600" cy="16" r="0.6" fill="#2a5fd0" opacity="0.55"/><circle cx="600" cy="23" r="0.6" fill="#2a5fd0" opacity="0.55"/><circle cx="600" cy="31" r="0.6" fill="#2a5fd0" opacity="0.55"/><circle cx="600" cy="38" r="0.6" fill="#2a5fd0" opacity="0.55"/><circle cx="600" cy="46" r="0.6" fill="#2a5fd0" opacity="0.55"/><circle cx="600" cy="54" r="0.6" fill="#2a5fd0" opacity="0.55"/><circle cx="600" cy="61" r="0.6" fill="#2a5fd0" opacity="0.55"/><circle cx="600" cy="69" r="0.6" fill="#2a5fd0" opacity="0.55"/><circle cx="600" cy="76" r="0.6" fill="#2a5fd0" opacity="0.55"/><circle cx="600" cy="84" r="0.6" fill="#2a5fd0" opacity="0.55"/><circle cx="600" cy="92" r="0.6" fill="#2a5fd0" opacity="0.55"/><circle cx="600" cy="99" r="0.6" fill="#2a5fd0" opacity="0.55"/><circle cx="600" cy="107" r="0.6" fill="#2a5fd0" opacity="0.55"/><circle cx="600" cy="114" r="0.6" fill="#2a5fd0" opacity="0.55"/><circle cx="600" cy="122" r="0.6" fill="#2a5fd0" opacity="0.55"/><circle cx="610" cy="8" r="0.6" fill="#2a5fd0" opacity="0.55"/><circle cx="610" cy="16" r="0.6" fill="#2a5fd0" opacity="0.55"/><circle cx="610" cy="23" r="0.6" fill="#2a5fd0" opacity="0.55"/><circle cx="610" cy="31" r="0.6" fill="#2a5fd0" opacity="0.55"/><circle cx="610" cy="38" r="0.6" fill="#2a5fd0" opacity="0.55"/><circle cx="610" cy="46" r="0.6" fill="#2a5fd0" opacity="0.55"/><circle cx="610" cy="54" r="0.6" fill="#2a5fd0" opacity="0.55"/><circle cx="610" cy="61" r="0.6" fill="#2a5fd0" opacity="0.55"/><circle cx="610" cy="69" r="0.6" fill="#2a5fd0" opacity="0.55"/><circle cx="610" cy="76" r="0.6" fill="#2a5fd0" opacity="0.55"/><circle cx="610" cy="84" r="0.6" fill="#2a5fd0" opacity="0.55"/><circle cx="610" cy="92" r="0.6" fill="#2a5fd0" opacity="0.55"/><circle cx="610" cy="99" r="0.6" fill="#2a5fd0" opacity="0.55"/><circle cx="610" cy="107" r="0.6" fill="#2a5fd0" opacity="0.55"/><circle cx="610" cy="114" r="0.6" fill="#2a5fd0" opacity="0.55"/><circle cx="610" cy="122" r="0.6" fill="#2a5fd0" opacity="0.55"/><circle cx="620" cy="8" r="0.6" fill="#2a5fd0" opacity="0.55"/><circle cx="620" cy="16" r="0.6" fill="#2a5fd0" opacity="0.55"/><circle cx="620" cy="23" r="0.6" fill="#2a5fd0" opacity="0.55"/><circle cx="620" cy="31" r="0.6" fill="#2a5fd0" opacity="0.55"/><circle cx="620" cy="38" r="0.6" fill="#2a5fd0" opacity="0.55"/><circle cx="620" cy="46" r="0.6" fill="#2a5fd0" opacity="0.55"/><circle cx="620" cy="54" r="0.6" fill="#2a5fd0" opacity="0.55"/><circle cx="620" cy="61" r="0.6" fill="#2a5fd0" opacity="0.55"/><circle cx="620" cy="69" r="0.6" fill="#2a5fd0" opacity="0.55"/><circle cx="620" cy="76" r="0.6" fill="#2a5fd0" opacity="0.55"/><circle cx="620" cy="84" r="0.6" fill="#2a5fd0" opacity="0.55"/><circle cx="620" cy="92" r="0.6" fill="#2a5fd0" opacity="0.55"/><circle cx="620" cy="99" r="0.6" fill="#2a5fd0" opacity="0.55"/><circle cx="620" cy="107" r="0.6" fill="#2a5fd0" opacity="0.55"/><circle cx="620" cy="114" r="0.6" fill="#2a5fd0" opacity="0.55"/><circle cx="620" cy="122" r="0.6" fill="#2a5fd0" opacity="0.55"/><circle cx="630" cy="8" r="0.6" fill="#2a5fd0" opacity="0.55"/><circle cx="630" cy="16" r="0.6" fill="#2a5fd0" opacity="0.55"/><circle cx="630" cy="23" r="0.6" fill="#2a5fd0" opacity="0.55"/><circle cx="630" cy="31" r="0.6" fill="#2a5fd0" opacity="0.55"/><circle cx="630" cy="38" r="0.6" fill="#2a5fd0" opacity="0.55"/><circle cx="630" cy="46" r="0.6" fill="#2a5fd0" opacity="0.55"/><circle cx="630" cy="54" r="0.6" fill="#2a5fd0" opacity="0.55"/><circle cx="630" cy="61" r="0.6" fill="#2a5fd0" opacity="0.55"/><circle cx="630" cy="69" r="0.6" fill="#2a5fd0" opacity="0.55"/><circle cx="630" cy="76" r="0.6" fill="#2a5fd0" opacity="0.55"/><circle cx="630" cy="84" r="0.6" fill="#2a5fd0" opacity="0.55"/><circle cx="630" cy="92" r="0.6" fill="#2a5fd0" opacity="0.55"/><circle cx="630" cy="99" r="0.6" fill="#2a5fd0" opacity="0.55"/><circle cx="630" cy="107" r="0.6" fill="#2a5fd0" opacity="0.55"/><circle cx="630" cy="114" r="0.6" fill="#2a5fd0" opacity="0.55"/><circle cx="630" cy="122" r="0.6" fill="#2a5fd0" opacity="0.55"/><circle cx="640" cy="8" r="0.6" fill="#2a5fd0" opacity="0.55"/><circle cx="640" cy="16" r="0.6" fill="#2a5fd0" opacity="0.55"/><circle cx="640" cy="23" r="0.6" fill="#2a5fd0" opacity="0.55"/><circle cx="640" cy="31" r="0.6" fill="#2a5fd0" opacity="0.55"/><circle cx="640" cy="38" r="0.6" fill="#2a5fd0" opacity="0.55"/><circle cx="640" cy="46" r="0.6" fill="#2a5fd0" opacity="0.55"/><circle cx="640" cy="54" r="0.6" fill="#2a5fd0" opacity="0.55"/><circle cx="640" cy="61" r="0.6" fill="#2a5fd0" opacity="0.55"/><circle cx="640" cy="69" r="0.6" fill="#2a5fd0" opacity="0.55"/><circle cx="640" cy="76" r="0.6" fill="#2a5fd0" opacity="0.55"/><circle cx="640" cy="84" r="0.6" fill="#2a5fd0" opacity="0.55"/><circle cx="640" cy="92" r="0.6" fill="#2a5fd0" opacity="0.55"/><circle cx="640" cy="99" r="0.6" fill="#2a5fd0" opacity="0.55"/><circle cx="640" cy="107" r="0.6" fill="#2a5fd0" opacity="0.55"/><circle cx="640" cy="114" r="0.6" fill="#2a5fd0" opacity="0.55"/><circle cx="640" cy="122" r="0.6" fill="#2a5fd0" opacity="0.55"/><circle cx="650" cy="8" r="0.6" fill="#2a5fd0" opacity="0.55"/><circle cx="650" cy="16" r="0.6" fill="#2a5fd0" opacity="0.55"/><circle cx="650" cy="23" r="0.6" fill="#2a5fd0" opacity="0.55"/><circle cx="650" cy="31" r="0.6" fill="#2a5fd0" opacity="0.55"/><circle cx="650" cy="38" r="0.6" fill="#2a5fd0" opacity="0.55"/><circle cx="650" cy="46" r="0.6" fill="#2a5fd0" opacity="0.55"/><circle cx="650" cy="54" r="0.6" fill="#2a5fd0" opacity="0.55"/><circle cx="650" cy="61" r="0.6" fill="#2a5fd0" opacity="0.55"/><circle cx="650" cy="69" r="0.6" fill="#2a5fd0" opacity="0.55"/><circle cx="650" cy="76" r="0.6" fill="#2a5fd0" opacity="0.55"/><circle cx="650" cy="84" r="0.6" fill="#2a5fd0" opacity="0.55"/><circle cx="650" cy="92" r="0.6" fill="#2a5fd0" opacity="0.55"/><circle cx="650" cy="99" r="0.6" fill="#2a5fd0" opacity="0.55"/><circle cx="650" cy="107" r="0.6" fill="#2a5fd0" opacity="0.55"/><circle cx="650" cy="114" r="0.6" fill="#2a5fd0" opacity="0.55"/><circle cx="650" cy="122" r="0.6" fill="#2a5fd0" opacity="0.55"/><circle cx="660" cy="8" r="0.6" fill="#2a5fd0" opacity="0.55"/><circle cx="660" cy="16" r="0.6" fill="#2a5fd0" opacity="0.55"/><circle cx="660" cy="23" r="0.6" fill="#2a5fd0" opacity="0.55"/><circle cx="660" cy="31" r="0.6" fill="#2a5fd0" opacity="0.55"/><circle cx="660" cy="38" r="0.6" fill="#2a5fd0" opacity="0.55"/><circle cx="660" cy="46" r="0.6" fill="#2a5fd0" opacity="0.55"/><circle cx="660" cy="54" r="0.6" fill="#2a5fd0" opacity="0.55"/><circle cx="660" cy="61" r="0.6" fill="#2a5fd0" opacity="0.55"/><circle cx="660" cy="69" r="0.6" fill="#2a5fd0" opacity="0.55"/><circle cx="660" cy="76" r="0.6" fill="#2a5fd0" opacity="0.55"/><circle cx="660" cy="84" r="0.6" fill="#2a5fd0" opacity="0.55"/><circle cx="660" cy="92" r="0.6" fill="#2a5fd0" opacity="0.55"/><circle cx="660" cy="99" r="0.6" fill="#2a5fd0" opacity="0.55"/><circle cx="660" cy="107" r="0.6" fill="#2a5fd0" opacity="0.55"/><circle cx="660" cy="114" r="0.6" fill="#2a5fd0" opacity="0.55"/><circle cx="660" cy="122" r="0.6" fill="#2a5fd0" opacity="0.55"/><circle cx="670" cy="8" r="0.6" fill="#2a5fd0" opacity="0.55"/><circle cx="670" cy="16" r="0.6" fill="#2a5fd0" opacity="0.55"/><circle cx="670" cy="23" r="0.6" fill="#2a5fd0" opacity="0.55"/><circle cx="670" cy="31" r="0.6" fill="#2a5fd0" opacity="0.55"/><circle cx="670" cy="38" r="0.6" fill="#2a5fd0" opacity="0.55"/><circle cx="670" cy="46" r="0.6" fill="#2a5fd0" opacity="0.55"/><circle cx="670" cy="54" r="0.6" fill="#2a5fd0" opacity="0.55"/><circle cx="670" cy="61" r="0.6" fill="#2a5fd0" opacity="0.55"/><circle cx="670" cy="69" r="0.6" fill="#2a5fd0" opacity="0.55"/><circle cx="670" cy="76" r="0.6" fill="#2a5fd0" opacity="0.55"/><circle cx="670" cy="84" r="0.6" fill="#2a5fd0" opacity="0.55"/><circle cx="670" cy="92" r="0.6" fill="#2a5fd0" opacity="0.55"/><circle cx="670" cy="99" r="0.6" fill="#2a5fd0" opacity="0.55"/><circle cx="670" cy="107" r="0.6" fill="#2a5fd0" opacity="0.55"/><circle cx="670" cy="114" r="0.6" fill="#2a5fd0" opacity="0.55"/><circle cx="670" cy="122" r="0.6" fill="#2a5fd0" opacity="0.55"/><circle cx="680" cy="8" r="0.6" fill="#2a5fd0" opacity="0.55"/><circle cx="680" cy="16" r="0.6" fill="#2a5fd0" opacity="0.55"/><circle cx="680" cy="23" r="0.6" fill="#2a5fd0" opacity="0.55"/><circle cx="680" cy="31" r="0.6" fill="#2a5fd0" opacity="0.55"/><circle cx="680" cy="38" r="0.6" fill="#2a5fd0" opacity="0.55"/><circle cx="680" cy="46" r="0.6" fill="#2a5fd0" opacity="0.55"/><circle cx="680" cy="54" r="0.6" fill="#2a5fd0" opacity="0.55"/><circle cx="680" cy="61" r="0.6" fill="#2a5fd0" opacity="0.55"/><circle cx="680" cy="69" r="0.6" fill="#2a5fd0" opacity="0.55"/><circle cx="680" cy="76" r="0.6" fill="#2a5fd0" opacity="0.55"/><circle cx="680" cy="84" r="0.6" fill="#2a5fd0" opacity="0.55"/><circle cx="680" cy="92" r="0.6" fill="#2a5fd0" opacity="0.55"/><circle cx="680" cy="99" r="0.6" fill="#2a5fd0" opacity="0.55"/><circle cx="680" cy="107" r="0.6" fill="#2a5fd0" opacity="0.55"/><circle cx="680" cy="114" r="0.6" fill="#2a5fd0" opacity="0.55"/><circle cx="680" cy="122" r="0.6" fill="#2a5fd0" opacity="0.55"/><circle cx="690" cy="8" r="0.6" fill="#2a5fd0" opacity="0.55"/><circle cx="690" cy="16" r="0.6" fill="#2a5fd0" opacity="0.55"/><circle cx="690" cy="23" r="0.6" fill="#2a5fd0" opacity="0.55"/><circle cx="690" cy="31" r="0.6" fill="#2a5fd0" opacity="0.55"/><circle cx="690" cy="38" r="0.6" fill="#2a5fd0" opacity="0.55"/><circle cx="690" cy="46" r="0.6" fill="#2a5fd0" opacity="0.55"/><circle cx="690" cy="54" r="0.6" fill="#2a5fd0" opacity="0.55"/><circle cx="690" cy="61" r="0.6" fill="#2a5fd0" opacity="0.55"/><circle cx="690" cy="69" r="0.6" fill="#2a5fd0" opacity="0.55"/><circle cx="690" cy="76" r="0.6" fill="#2a5fd0" opacity="0.55"/><circle cx="690" cy="84" r="0.6" fill="#2a5fd0" opacity="0.55"/><circle cx="690" cy="92" r="0.6" fill="#2a5fd0" opacity="0.55"/><circle cx="690" cy="99" r="0.6" fill="#2a5fd0" opacity="0.55"/><circle cx="690" cy="107" r="0.6" fill="#2a5fd0" opacity="0.55"/><circle cx="690" cy="114" r="0.6" fill="#2a5fd0" opacity="0.55"/><circle cx="690" cy="122" r="0.6" fill="#2a5fd0" opacity="0.55"/><circle cx="700" cy="8" r="0.6" fill="#2a5fd0" opacity="0.55"/><circle cx="700" cy="16" r="0.6" fill="#2a5fd0" opacity="0.55"/><circle cx="700" cy="23" r="0.6" fill="#2a5fd0" opacity="0.55"/><circle cx="700" cy="31" r="0.6" fill="#2a5fd0" opacity="0.55"/><circle cx="700" cy="38" r="0.6" fill="#2a5fd0" opacity="0.55"/><circle cx="700" cy="46" r="0.6" fill="#2a5fd0" opacity="0.55"/><circle cx="700" cy="54" r="0.6" fill="#2a5fd0" opacity="0.55"/><circle cx="700" cy="61" r="0.6" fill="#2a5fd0" opacity="0.55"/><circle cx="700" cy="69" r="0.6" fill="#2a5fd0" opacity="0.55"/><circle cx="700" cy="76" r="0.6" fill="#2a5fd0" opacity="0.55"/><circle cx="700" cy="84" r="0.6" fill="#2a5fd0" opacity="0.55"/><circle cx="700" cy="92" r="0.6" fill="#2a5fd0" opacity="0.55"/><circle cx="700" cy="99" r="0.6" fill="#2a5fd0" opacity="0.55"/><circle cx="700" cy="107" r="0.6" fill="#2a5fd0" opacity="0.55"/><circle cx="700" cy="114" r="0.6" fill="#2a5fd0" opacity="0.55"/><circle cx="700" cy="122" r="0.6" fill="#2a5fd0" opacity="0.55"/><circle cx="710" cy="8" r="0.6" fill="#2a5fd0" opacity="0.55"/><circle cx="710" cy="16" r="0.6" fill="#2a5fd0" opacity="0.55"/><circle cx="710" cy="23" r="0.6" fill="#2a5fd0" opacity="0.55"/><circle cx="710" cy="31" r="0.6" fill="#2a5fd0" opacity="0.55"/><circle cx="710" cy="38" r="0.6" fill="#2a5fd0" opacity="0.55"/><circle cx="710" cy="46" r="0.6" fill="#2a5fd0" opacity="0.55"/><circle cx="710" cy="54" r="0.6" fill="#2a5fd0" opacity="0.55"/><circle cx="710" cy="61" r="0.6" fill="#2a5fd0" opacity="0.55"/><circle cx="710" cy="69" r="0.6" fill="#2a5fd0" opacity="0.55"/><circle cx="710" cy="76" r="0.6" fill="#2a5fd0" opacity="0.55"/><circle cx="710" cy="84" r="0.6" fill="#2a5fd0" opacity="0.55"/><circle cx="710" cy="92" r="0.6" fill="#2a5fd0" opacity="0.55"/><circle cx="710" cy="99" r="0.6" fill="#2a5fd0" opacity="0.55"/><circle cx="710" cy="107" r="0.6" fill="#2a5fd0" opacity="0.55"/><circle cx="710" cy="114" r="0.6" fill="#2a5fd0" opacity="0.55"/><circle cx="710" cy="122" r="0.6" fill="#2a5fd0" opacity="0.55"/><circle cx="720" cy="8" r="0.6" fill="#2a5fd0" opacity="0.55"/><circle cx="720" cy="16" r="0.6" fill="#2a5fd0" opacity="0.55"/><circle cx="720" cy="23" r="0.6" fill="#2a5fd0" opacity="0.55"/><circle cx="720" cy="31" r="0.6" fill="#2a5fd0" opacity="0.55"/><circle cx="720" cy="38" r="0.6" fill="#2a5fd0" opacity="0.55"/><circle cx="720" cy="46" r="0.6" fill="#2a5fd0" opacity="0.55"/><circle cx="720" cy="54" r="0.6" fill="#2a5fd0" opacity="0.55"/><circle cx="720" cy="61" r="0.6" fill="#2a5fd0" opacity="0.55"/><circle cx="720" cy="69" r="0.6" fill="#2a5fd0" opacity="0.55"/><circle cx="720" cy="76" r="0.6" fill="#2a5fd0" opacity="0.55"/><circle cx="720" cy="84" r="0.6" fill="#2a5fd0" opacity="0.55"/><circle cx="720" cy="92" r="0.6" fill="#2a5fd0" opacity="0.55"/><circle cx="720" cy="99" r="0.6" fill="#2a5fd0" opacity="0.55"/><circle cx="720" cy="107" r="0.6" fill="#2a5fd0" opacity="0.55"/><circle cx="720" cy="114" r="0.6" fill="#2a5fd0" opacity="0.55"/><circle cx="720" cy="122" r="0.6" fill="#2a5fd0" opacity="0.55"/><rect x="35" y="41" width="240" height="12" fill="#ffffff" opacity="0.95"/><rect x="35" y="88" width="330" height="6" fill="#dfe6f5" opacity="0.75"/><circle cx="47" cy="118" r="3.5" fill="#dfe6f5" opacity="0.8"/><rect x="70" y="115" width="300" height="6" fill="#dfe6f5" opacity="0.75"/><circle cx="47" cy="160" r="3.5" fill="#dfe6f5" opacity="0.8"/><rect x="70" y="157" width="300" height="6" fill="#dfe6f5" opacity="0.75"/><circle cx="47" cy="190" r="3.5" fill="#dfe6f5" opacity="0.8"/><rect x="70" y="187" width="290" height="6" fill="#dfe6f5" opacity="0.75"/><circle cx="47" cy="240" r="3.5" fill="#dfe6f5" opacity="0.8"/><rect x="70" y="237" width="300" height="6" fill="#dfe6f5" opacity="0.75"/><rect x="70" y="130" width="300" height="6" fill="#dfe6f5" opacity="0.6"/><rect x="70" y="143" width="40" height="6" fill="#dfe6f5" opacity="0.6"/><rect x="70" y="172" width="250" height="6" fill="#dfe6f5" opacity="0.6"/><rect x="70" y="202" width="300" height="6" fill="#dfe6f5" opacity="0.6"/><rect x="70" y="215" width="220" height="6" fill="#dfe6f5" opacity="0.6"/><rect x="70" y="252" width="210" height="6" fill="#dfe6f5" opacity="0.6"/><rect x="453" y="148" width="260" height="235" fill="#d6f6d2"/><rect x="475" y="158" width="215" height="16" fill="#4a9ad8"/><rect x="520" y="188" width="140" height="3" fill="#6a9a80" opacity="0.6"/><rect x="480" y="215" width="215" height="1.5" fill="#6a9a80" opacity="0.6"/><circle cx="485" cy="210" r="9" fill="#2a5a9a"/><circle cx="583" cy="205" r="9" fill="#2a5a9a"/><circle cx="680" cy="210" r="9" fill="#2a5a9a"/><circle cx="535" cy="255" r="9" fill="#2a5a9a"/><circle cx="625" cy="255" r="9" fill="#2a5a9a"/><rect x="470" y="290" width="35" height="4" fill="#9cc8b0" opacity="1"/><rect x="470" y="302" width="35" height="4" fill="#9cc8b0" opacity="1"/><rect x="470" y="314" width="35" height="4" fill="#9cc8b0" opacity="1"/><rect x="470" y="326" width="35" height="4" fill="#9cc8b0" opacity="1"/><rect x="470" y="338" width="35" height="4" fill="#9cc8b0" opacity="1"/><rect x="470" y="350" width="35" height="4" fill="#9cc8b0" opacity="1"/><rect x="520" y="290" width="35" height="4" fill="#9cc8b0" opacity="1"/><rect x="520" y="302" width="35" height="4" fill="#9cc8b0" opacity="1"/><rect x="520" y="314" width="35" height="4" fill="#9cc8b0" opacity="1"/><rect x="520" y="326" width="35" height="4" fill="#9cc8b0" opacity="1"/><rect x="520" y="338" width="35" height="4" fill="#9cc8b0" opacity="1"/><rect x="520" y="350" width="35" height="4" fill="#9cc8b0" opacity="1"/><rect x="605" y="290" width="35" height="4" fill="#9cc8b0" opacity="1"/><rect x="605" y="302" width="35" height="4" fill="#9cc8b0" opacity="1"/><rect x="605" y="314" width="35" height="4" fill="#9cc8b0" opacity="1"/><rect x="605" y="326" width="35" height="4" fill="#9cc8b0" opacity="1"/><rect x="605" y="338" width="35" height="4" fill="#9cc8b0" opacity="1"/><rect x="605" y="350" width="35" height="4" fill="#9cc8b0" opacity="1"/><rect x="660" y="290" width="35" height="4" fill="#9cc8b0" opacity="1"/><rect x="660" y="302" width="35" height="4" fill="#9cc8b0" opacity="1"/><rect x="660" y="314" width="35" height="4" fill="#9cc8b0" opacity="1"/><rect x="660" y="326" width="35" height="4" fill="#9cc8b0" opacity="1"/><rect x="660" y="338" width="35" height="4" fill="#9cc8b0" opacity="1"/><rect x="660" y="350" width="35" height="4" fill="#9cc8b0" opacity="1"/></g></svg>
<div style="position:absolute;left:13.80px;top:192.04px;font-size:8.172px;line-height:1;font-weight:400;color:#3c4043;white-space:pre;transform-origin:left top;transform:scaleX(0.93);-webkit-text-stroke:0.06px #3c4043;">3</div>
<div style="position:absolute;left:24.30px;top:246.89px;width:85.40px;height:49.00px;border:1px solid #d3d6da;border-radius:6px;background:#fff;"></div>
<svg style="position:absolute;left:26.2px;top:248.59px" width="81.2" height="45.6" viewBox="0 0 720 405" preserveAspectRatio="none"><defs><clipPath id="tc4"><rect width="720" height="405" rx="36"/></clipPath></defs><g clip-path="url(#tc4)"><rect width="720" height="405" fill="#01287b"/><circle cx="600" cy="30" r="1.2" fill="#2a62d6" opacity="0.75"/><circle cx="600" cy="60" r="1.2" fill="#2a62d6" opacity="0.75"/><circle cx="600" cy="90" r="1.2" fill="#2a62d6" opacity="0.75"/><circle cx="600" cy="120" r="1.2" fill="#2a62d6" opacity="0.75"/><circle cx="600" cy="150" r="1.2" fill="#2a62d6" opacity="0.75"/><circle cx="600" cy="180" r="1.2" fill="#2a62d6" opacity="0.75"/><circle cx="600" cy="210" r="1.2" fill="#2a62d6" opacity="0.75"/><circle cx="600" cy="240" r="1.2" fill="#2a62d6" opacity="0.75"/><circle cx="600" cy="270" r="1.2" fill="#2a62d6" opacity="0.75"/><circle cx="600" cy="300" r="1.2" fill="#2a62d6" opacity="0.75"/><circle cx="600" cy="330" r="1.2" fill="#2a62d6" opacity="0.75"/><circle cx="600" cy="360" r="1.2" fill="#2a62d6" opacity="0.75"/><circle cx="600" cy="390" r="1.2" fill="#2a62d6" opacity="0.75"/><circle cx="626" cy="30" r="2.8" fill="#2a62d6" opacity="0.75"/><circle cx="626" cy="60" r="2.8" fill="#2a62d6" opacity="0.75"/><circle cx="626" cy="90" r="2.8" fill="#2a62d6" opacity="0.75"/><circle cx="626" cy="120" r="2.8" fill="#2a62d6" opacity="0.75"/><circle cx="626" cy="150" r="2.8" fill="#2a62d6" opacity="0.75"/><circle cx="626" cy="180" r="2.8" fill="#2a62d6" opacity="0.75"/><circle cx="626" cy="210" r="2.8" fill="#2a62d6" opacity="0.75"/><circle cx="626" cy="240" r="2.8" fill="#2a62d6" opacity="0.75"/><circle cx="626" cy="270" r="2.8" fill="#2a62d6" opacity="0.75"/><circle cx="626" cy="300" r="2.8" fill="#2a62d6" opacity="0.75"/><circle cx="626" cy="330" r="2.8" fill="#2a62d6" opacity="0.75"/><circle cx="626" cy="360" r="2.8" fill="#2a62d6" opacity="0.75"/><circle cx="626" cy="390" r="2.8" fill="#2a62d6" opacity="0.75"/><circle cx="652" cy="30" r="4.4" fill="#2a62d6" opacity="0.75"/><circle cx="652" cy="60" r="4.4" fill="#2a62d6" opacity="0.75"/><circle cx="652" cy="90" r="4.4" fill="#2a62d6" opacity="0.75"/><circle cx="652" cy="120" r="4.4" fill="#2a62d6" opacity="0.75"/><circle cx="652" cy="150" r="4.4" fill="#2a62d6" opacity="0.75"/><circle cx="652" cy="180" r="4.4" fill="#2a62d6" opacity="0.75"/><circle cx="652" cy="210" r="4.4" fill="#2a62d6" opacity="0.75"/><circle cx="652" cy="240" r="4.4" fill="#2a62d6" opacity="0.75"/><circle cx="652" cy="270" r="4.4" fill="#2a62d6" opacity="0.75"/><circle cx="652" cy="300" r="4.4" fill="#2a62d6" opacity="0.75"/><circle cx="652" cy="330" r="4.4" fill="#2a62d6" opacity="0.75"/><circle cx="652" cy="360" r="4.4" fill="#2a62d6" opacity="0.75"/><circle cx="652" cy="390" r="4.4" fill="#2a62d6" opacity="0.75"/><circle cx="678" cy="30" r="6.0" fill="#2a62d6" opacity="0.75"/><circle cx="678" cy="60" r="6.0" fill="#2a62d6" opacity="0.75"/><circle cx="678" cy="90" r="6.0" fill="#2a62d6" opacity="0.75"/><circle cx="678" cy="120" r="6.0" fill="#2a62d6" opacity="0.75"/><circle cx="678" cy="150" r="6.0" fill="#2a62d6" opacity="0.75"/><circle cx="678" cy="180" r="6.0" fill="#2a62d6" opacity="0.75"/><circle cx="678" cy="210" r="6.0" fill="#2a62d6" opacity="0.75"/><circle cx="678" cy="240" r="6.0" fill="#2a62d6" opacity="0.75"/><circle cx="678" cy="270" r="6.0" fill="#2a62d6" opacity="0.75"/><circle cx="678" cy="300" r="6.0" fill="#2a62d6" opacity="0.75"/><circle cx="678" cy="330" r="6.0" fill="#2a62d6" opacity="0.75"/><circle cx="678" cy="360" r="6.0" fill="#2a62d6" opacity="0.75"/><circle cx="678" cy="390" r="6.0" fill="#2a62d6" opacity="0.75"/><circle cx="704" cy="30" r="7.6" fill="#2a62d6" opacity="0.75"/><circle cx="704" cy="60" r="7.6" fill="#2a62d6" opacity="0.75"/><circle cx="704" cy="90" r="7.6" fill="#2a62d6" opacity="0.75"/><circle cx="704" cy="120" r="7.6" fill="#2a62d6" opacity="0.75"/><circle cx="704" cy="150" r="7.6" fill="#2a62d6" opacity="0.75"/><circle cx="704" cy="180" r="7.6" fill="#2a62d6" opacity="0.75"/><circle cx="704" cy="210" r="7.6" fill="#2a62d6" opacity="0.75"/><circle cx="704" cy="240" r="7.6" fill="#2a62d6" opacity="0.75"/><circle cx="704" cy="270" r="7.6" fill="#2a62d6" opacity="0.75"/><circle cx="704" cy="300" r="7.6" fill="#2a62d6" opacity="0.75"/><circle cx="704" cy="330" r="7.6" fill="#2a62d6" opacity="0.75"/><circle cx="704" cy="360" r="7.6" fill="#2a62d6" opacity="0.75"/><circle cx="704" cy="390" r="7.6" fill="#2a62d6" opacity="0.75"/><rect x="35" y="45" width="280" height="10" fill="#ffffff" opacity="0.9"/><rect x="35" y="145" width="38" height="38" rx="6" fill="#1a4fb8"/><rect x="47" y="161" width="14" height="6" fill="#fff" opacity="0.9"/><rect x="95" y="117" width="90" height="10" fill="#ffffff" opacity="0.9"/><rect x="95" y="153" width="150" height="5" fill="#c8d4ee" opacity="0.7"/><rect x="95" y="165" width="60" height="5" fill="#c8d4ee" opacity="0.7"/><rect x="300" y="145" width="38" height="38" rx="6" fill="#1a4fb8"/><rect x="312" y="161" width="14" height="6" fill="#fff" opacity="0.9"/><rect x="360" y="117" width="90" height="10" fill="#ffffff" opacity="0.9"/><rect x="360" y="153" width="150" height="5" fill="#c8d4ee" opacity="0.7"/><rect x="360" y="165" width="60" height="5" fill="#c8d4ee" opacity="0.7"/><rect x="35" y="290" width="38" height="38" rx="6" fill="#1a4fb8"/><rect x="47" y="306" width="14" height="6" fill="#fff" opacity="0.9"/><rect x="95" y="262" width="90" height="10" fill="#ffffff" opacity="0.9"/><rect x="95" y="298" width="150" height="5" fill="#c8d4ee" opacity="0.7"/><rect x="95" y="310" width="60" height="5" fill="#c8d4ee" opacity="0.7"/><rect x="300" y="290" width="38" height="38" rx="6" fill="#1a4fb8"/><rect x="312" y="306" width="14" height="6" fill="#fff" opacity="0.9"/><rect x="360" y="262" width="90" height="10" fill="#ffffff" opacity="0.9"/><rect x="360" y="298" width="150" height="5" fill="#c8d4ee" opacity="0.7"/><rect x="360" y="310" width="60" height="5" fill="#c8d4ee" opacity="0.7"/></g></svg>
<div style="position:absolute;left:13.80px;top:249.17px;font-size:8.172px;line-height:1;font-weight:400;color:#3c4043;white-space:pre;transform-origin:left top;transform:scaleX(0.93);-webkit-text-stroke:0.06px #3c4043;">4</div>
<div style="position:absolute;left:24.30px;top:304.02px;width:85.40px;height:49.00px;border:1px solid #d3d6da;border-radius:6px;background:#fff;"></div>
<svg style="position:absolute;left:26.2px;top:305.72px" width="81.2" height="45.6" viewBox="0 0 720 405" preserveAspectRatio="none"><defs><clipPath id="tc5"><rect width="720" height="405" rx="36"/></clipPath></defs><g clip-path="url(#tc5)"><rect width="720" height="405" fill="#01287b"/><circle cx="470" cy="8" r="0.6" fill="#2a5fd0" opacity="0.55"/><circle cx="470" cy="16" r="0.6" fill="#2a5fd0" opacity="0.55"/><circle cx="470" cy="23" r="0.6" fill="#2a5fd0" opacity="0.55"/><circle cx="470" cy="31" r="0.6" fill="#2a5fd0" opacity="0.55"/><circle cx="470" cy="38" r="0.6" fill="#2a5fd0" opacity="0.55"/><circle cx="470" cy="46" r="0.6" fill="#2a5fd0" opacity="0.55"/><circle cx="470" cy="54" r="0.6" fill="#2a5fd0" opacity="0.55"/><circle cx="470" cy="61" r="0.6" fill="#2a5fd0" opacity="0.55"/><circle cx="470" cy="69" r="0.6" fill="#2a5fd0" opacity="0.55"/><circle cx="470" cy="76" r="0.6" fill="#2a5fd0" opacity="0.55"/><circle cx="470" cy="84" r="0.6" fill="#2a5fd0" opacity="0.55"/><circle cx="470" cy="92" r="0.6" fill="#2a5fd0" opacity="0.55"/><circle cx="470" cy="99" r="0.6" fill="#2a5fd0" opacity="0.55"/><circle cx="470" cy="107" r="0.6" fill="#2a5fd0" opacity="0.55"/><circle cx="470" cy="114" r="0.6" fill="#2a5fd0" opacity="0.55"/><circle cx="470" cy="122" r="0.6" fill="#2a5fd0" opacity="0.55"/><circle cx="480" cy="8" r="0.6" fill="#2a5fd0" opacity="0.55"/><circle cx="480" cy="16" r="0.6" fill="#2a5fd0" opacity="0.55"/><circle cx="480" cy="23" r="0.6" fill="#2a5fd0" opacity="0.55"/><circle cx="480" cy="31" r="0.6" fill="#2a5fd0" opacity="0.55"/><circle cx="480" cy="38" r="0.6" fill="#2a5fd0" opacity="0.55"/><circle cx="480" cy="46" r="0.6" fill="#2a5fd0" opacity="0.55"/><circle cx="480" cy="54" r="0.6" fill="#2a5fd0" opacity="0.55"/><circle cx="480" cy="61" r="0.6" fill="#2a5fd0" opacity="0.55"/><circle cx="480" cy="69" r="0.6" fill="#2a5fd0" opacity="0.55"/><circle cx="480" cy="76" r="0.6" fill="#2a5fd0" opacity="0.55"/><circle cx="480" cy="84" r="0.6" fill="#2a5fd0" opacity="0.55"/><circle cx="480" cy="92" r="0.6" fill="#2a5fd0" opacity="0.55"/><circle cx="480" cy="99" r="0.6" fill="#2a5fd0" opacity="0.55"/><circle cx="480" cy="107" r="0.6" fill="#2a5fd0" opacity="0.55"/><circle cx="480" cy="114" r="0.6" fill="#2a5fd0" opacity="0.55"/><circle cx="480" cy="122" r="0.6" fill="#2a5fd0" opacity="0.55"/><circle cx="490" cy="8" r="0.6" fill="#2a5fd0" opacity="0.55"/><circle cx="490" cy="16" r="0.6" fill="#2a5fd0" opacity="0.55"/><circle cx="490" cy="23" r="0.6" fill="#2a5fd0" opacity="0.55"/><circle cx="490" cy="31" r="0.6" fill="#2a5fd0" opacity="0.55"/><circle cx="490" cy="38" r="0.6" fill="#2a5fd0" opacity="0.55"/><circle cx="490" cy="46" r="0.6" fill="#2a5fd0" opacity="0.55"/><circle cx="490" cy="54" r="0.6" fill="#2a5fd0" opacity="0.55"/><circle cx="490" cy="61" r="0.6" fill="#2a5fd0" opacity="0.55"/><circle cx="490" cy="69" r="0.6" fill="#2a5fd0" opacity="0.55"/><circle cx="490" cy="76" r="0.6" fill="#2a5fd0" opacity="0.55"/><circle cx="490" cy="84" r="0.6" fill="#2a5fd0" opacity="0.55"/><circle cx="490" cy="92" r="0.6" fill="#2a5fd0" opacity="0.55"/><circle cx="490" cy="99" r="0.6" fill="#2a5fd0" opacity="0.55"/><circle cx="490" cy="107" r="0.6" fill="#2a5fd0" opacity="0.55"/><circle cx="490" cy="114" r="0.6" fill="#2a5fd0" opacity="0.55"/><circle cx="490" cy="122" r="0.6" fill="#2a5fd0" opacity="0.55"/><circle cx="500" cy="8" r="0.6" fill="#2a5fd0" opacity="0.55"/><circle cx="500" cy="16" r="0.6" fill="#2a5fd0" opacity="0.55"/><circle cx="500" cy="23" r="0.6" fill="#2a5fd0" opacity="0.55"/><circle cx="500" cy="31" r="0.6" fill="#2a5fd0" opacity="0.55"/><circle cx="500" cy="38" r="0.6" fill="#2a5fd0" opacity="0.55"/><circle cx="500" cy="46" r="0.9" fill="#2a5fd0" opacity="0.55"/><circle cx="500" cy="54" r="1.1" fill="#2a5fd0" opacity="0.55"/><circle cx="500" cy="61" r="1.2" fill="#2a5fd0" opacity="0.55"/><circle cx="500" cy="69" r="1.1" fill="#2a5fd0" opacity="0.55"/><circle cx="500" cy="76" r="0.9" fill="#2a5fd0" opacity="0.55"/><circle cx="500" cy="84" r="0.6" fill="#2a5fd0" opacity="0.55"/><circle cx="500" cy="92" r="0.6" fill="#2a5fd0" opacity="0.55"/><circle cx="500" cy="99" r="0.6" fill="#2a5fd0" opacity="0.55"/><circle cx="500" cy="107" r="0.6" fill="#2a5fd0" opacity="0.55"/><circle cx="500" cy="114" r="0.6" fill="#2a5fd0" opacity="0.55"/><circle cx="500" cy="122" r="0.6" fill="#2a5fd0" opacity="0.55"/><circle cx="510" cy="8" r="0.6" fill="#2a5fd0" opacity="0.55"/><circle cx="510" cy="16" r="0.6" fill="#2a5fd0" opacity="0.55"/><circle cx="510" cy="23" r="0.6" fill="#2a5fd0" opacity="0.55"/><circle cx="510" cy="31" r="0.6" fill="#2a5fd0" opacity="0.55"/><circle cx="510" cy="38" r="1.0" fill="#2a5fd0" opacity="0.55"/><circle cx="510" cy="46" r="1.4" fill="#2a5fd0" opacity="0.55"/><circle cx="510" cy="54" r="1.6" fill="#2a5fd0" opacity="0.55"/><circle cx="510" cy="61" r="1.7" fill="#2a5fd0" opacity="0.55"/><circle cx="510" cy="69" r="1.7" fill="#2a5fd0" opacity="0.55"/><circle cx="510" cy="76" r="1.4" fill="#2a5fd0" opacity="0.55"/><circle cx="510" cy="84" r="1.1" fill="#2a5fd0" opacity="0.55"/><circle cx="510" cy="92" r="0.6" fill="#2a5fd0" opacity="0.55"/><circle cx="510" cy="99" r="0.6" fill="#2a5fd0" opacity="0.55"/><circle cx="510" cy="107" r="0.6" fill="#2a5fd0" opacity="0.55"/><circle cx="510" cy="114" r="0.6" fill="#2a5fd0" opacity="0.55"/><circle cx="510" cy="122" r="0.6" fill="#2a5fd0" opacity="0.55"/><circle cx="520" cy="8" r="0.6" fill="#2a5fd0" opacity="0.55"/><circle cx="520" cy="16" r="0.6" fill="#2a5fd0" opacity="0.55"/><circle cx="520" cy="23" r="0.6" fill="#2a5fd0" opacity="0.55"/><circle cx="520" cy="31" r="0.8" fill="#2a5fd0" opacity="0.55"/><circle cx="520" cy="38" r="1.3" fill="#2a5fd0" opacity="0.55"/><circle cx="520" cy="46" r="1.8" fill="#2a5fd0" opacity="0.55"/><circle cx="520" cy="54" r="2.2" fill="#2a5fd0" opacity="0.55"/><circle cx="520" cy="61" r="2.3" fill="#2a5fd0" opacity="0.55"/><circle cx="520" cy="69" r="2.2" fill="#2a5fd0" opacity="0.55"/><circle cx="520" cy="76" r="1.9" fill="#2a5fd0" opacity="0.55"/><circle cx="520" cy="84" r="1.4" fill="#2a5fd0" opacity="0.55"/><circle cx="520" cy="92" r="0.9" fill="#2a5fd0" opacity="0.55"/><circle cx="520" cy="99" r="0.6" fill="#2a5fd0" opacity="0.55"/><circle cx="520" cy="107" r="0.6" fill="#2a5fd0" opacity="0.55"/><circle cx="520" cy="114" r="0.6" fill="#2a5fd0" opacity="0.55"/><circle cx="520" cy="122" r="0.6" fill="#2a5fd0" opacity="0.55"/><circle cx="530" cy="8" r="0.6" fill="#2a5fd0" opacity="0.55"/><circle cx="530" cy="16" r="0.6" fill="#2a5fd0" opacity="0.55"/><circle cx="530" cy="23" r="0.6" fill="#2a5fd0" opacity="0.55"/><circle cx="530" cy="31" r="1.0" fill="#2a5fd0" opacity="0.55"/><circle cx="530" cy="38" r="1.6" fill="#2a5fd0" opacity="0.55"/><circle cx="530" cy="46" r="2.1" fill="#2a5fd0" opacity="0.55"/><circle cx="530" cy="54" r="2.6" fill="#2a5fd0" opacity="0.55"/><circle cx="530" cy="61" r="2.9" fill="#2a5fd0" opacity="0.55"/><circle cx="530" cy="69" r="2.7" fill="#2a5fd0" opacity="0.55"/><circle cx="530" cy="76" r="2.3" fill="#2a5fd0" opacity="0.55"/><circle cx="530" cy="84" r="1.7" fill="#2a5fd0" opacity="0.55"/><circle cx="530" cy="92" r="1.2" fill="#2a5fd0" opacity="0.55"/><circle cx="530" cy="99" r="0.6" fill="#2a5fd0" opacity="0.55"/><circle cx="530" cy="107" r="0.6" fill="#2a5fd0" opacity="0.55"/><circle cx="530" cy="114" r="0.6" fill="#2a5fd0" opacity="0.55"/><circle cx="530" cy="122" r="0.6" fill="#2a5fd0" opacity="0.55"/><circle cx="540" cy="8" r="0.6" fill="#2a5fd0" opacity="0.55"/><circle cx="540" cy="16" r="0.6" fill="#2a5fd0" opacity="0.55"/><circle cx="540" cy="23" r="0.6" fill="#2a5fd0" opacity="0.55"/><circle cx="540" cy="31" r="1.1" fill="#2a5fd0" opacity="0.55"/><circle cx="540" cy="38" r="1.7" fill="#2a5fd0" opacity="0.55"/><circle cx="540" cy="46" r="2.3" fill="#2a5fd0" opacity="0.55"/><circle cx="540" cy="54" r="2.9" fill="#2a5fd0" opacity="0.55"/><circle cx="540" cy="61" r="3.4" fill="#2a5fd0" opacity="0.55"/><circle cx="540" cy="69" r="3.0" fill="#2a5fd0" opacity="0.55"/><circle cx="540" cy="76" r="2.4" fill="#2a5fd0" opacity="0.55"/><circle cx="540" cy="84" r="1.8" fill="#2a5fd0" opacity="0.55"/><circle cx="540" cy="92" r="1.2" fill="#2a5fd0" opacity="0.55"/><circle cx="540" cy="99" r="0.6" fill="#2a5fd0" opacity="0.55"/><circle cx="540" cy="107" r="0.6" fill="#2a5fd0" opacity="0.55"/><circle cx="540" cy="114" r="0.6" fill="#2a5fd0" opacity="0.55"/><circle cx="540" cy="122" r="0.6" fill="#2a5fd0" opacity="0.55"/><circle cx="550" cy="8" r="0.6" fill="#2a5fd0" opacity="0.55"/><circle cx="550" cy="16" r="0.6" fill="#2a5fd0" opacity="0.55"/><circle cx="550" cy="23" r="0.6" fill="#2a5fd0" opacity="0.55"/><circle cx="550" cy="31" r="1.0" fill="#2a5fd0" opacity="0.55"/><circle cx="550" cy="38" r="1.6" fill="#2a5fd0" opacity="0.55"/><circle cx="550" cy="46" r="2.1" fill="#2a5fd0" opacity="0.55"/><circle cx="550" cy="54" r="2.6" fill="#2a5fd0" opacity="0.55"/><circle cx="550" cy="61" r="2.9" fill="#2a5fd0" opacity="0.55"/><circle cx="550" cy="69" r="2.7" fill="#2a5fd0" opacity="0.55"/><circle cx="550" cy="76" r="2.3" fill="#2a5fd0" opacity="0.55"/><circle cx="550" cy="84" r="1.7" fill="#2a5fd0" opacity="0.55"/><circle cx="550" cy="92" r="1.2" fill="#2a5fd0" opacity="0.55"/><circle cx="550" cy="99" r="0.6" fill="#2a5fd0" opacity="0.55"/><circle cx="550" cy="107" r="0.6" fill="#2a5fd0" opacity="0.55"/><circle cx="550" cy="114" r="0.6" fill="#2a5fd0" opacity="0.55"/><circle cx="550" cy="122" r="0.6" fill="#2a5fd0" opacity="0.55"/><circle cx="560" cy="8" r="0.6" fill="#2a5fd0" opacity="0.55"/><circle cx="560" cy="16" r="0.6" fill="#2a5fd0" opacity="0.55"/><circle cx="560" cy="23" r="0.6" fill="#2a5fd0" opacity="0.55"/><circle cx="560" cy="31" r="0.8" fill="#2a5fd0" opacity="0.55"/><circle cx="560" cy="38" r="1.3" fill="#2a5fd0" opacity="0.55"/><circle cx="560" cy="46" r="1.8" fill="#2a5fd0" opacity="0.55"/><circle cx="560" cy="54" r="2.2" fill="#2a5fd0" opacity="0.55"/><circle cx="560" cy="61" r="2.3" fill="#2a5fd0" opacity="0.55"/><circle cx="560" cy="69" r="2.2" fill="#2a5fd0" opacity="0.55"/><circle cx="560" cy="76" r="1.9" fill="#2a5fd0" opacity="0.55"/><circle cx="560" cy="84" r="1.4" fill="#2a5fd0" opacity="0.55"/><circle cx="560" cy="92" r="0.9" fill="#2a5fd0" opacity="0.55"/><circle cx="560" cy="99" r="0.6" fill="#2a5fd0" opacity="0.55"/><circle cx="560" cy="107" r="0.6" fill="#2a5fd0" opacity="0.55"/><circle cx="560" cy="114" r="0.6" fill="#2a5fd0" opacity="0.55"/><circle cx="560" cy="122" r="0.6" fill="#2a5fd0" opacity="0.55"/><circle cx="570" cy="8" r="0.6" fill="#2a5fd0" opacity="0.55"/><circle cx="570" cy="16" r="0.6" fill="#2a5fd0" opacity="0.55"/><circle cx="570" cy="23" r="0.6" fill="#2a5fd0" opacity="0.55"/><circle cx="570" cy="31" r="0.6" fill="#2a5fd0" opacity="0.55"/><circle cx="570" cy="38" r="1.0" fill="#2a5fd0" opacity="0.55"/><circle cx="570" cy="46" r="1.4" fill="#2a5fd0" opacity="0.55"/><circle cx="570" cy="54" r="1.6" fill="#2a5fd0" opacity="0.55"/><circle cx="570" cy="61" r="1.7" fill="#2a5fd0" opacity="0.55"/><circle cx="570" cy="69" r="1.7" fill="#2a5fd0" opacity="0.55"/><circle cx="570" cy="76" r="1.4" fill="#2a5fd0" opacity="0.55"/><circle cx="570" cy="84" r="1.1" fill="#2a5fd0" opacity="0.55"/><circle cx="570" cy="92" r="0.6" fill="#2a5fd0" opacity="0.55"/><circle cx="570" cy="99" r="0.6" fill="#2a5fd0" opacity="0.55"/><circle cx="570" cy="107" r="0.6" fill="#2a5fd0" opacity="0.55"/><circle cx="570" cy="114" r="0.6" fill="#2a5fd0" opacity="0.55"/><circle cx="570" cy="122" r="0.6" fill="#2a5fd0" opacity="0.55"/><circle cx="580" cy="8" r="0.6" fill="#2a5fd0" opacity="0.55"/><circle cx="580" cy="16" r="0.6" fill="#2a5fd0" opacity="0.55"/><circle cx="580" cy="23" r="0.6" fill="#2a5fd0" opacity="0.55"/><circle cx="580" cy="31" r="0.6" fill="#2a5fd0" opacity="0.55"/><circle cx="580" cy="38" r="0.6" fill="#2a5fd0" opacity="0.55"/><circle cx="580" cy="46" r="0.9" fill="#2a5fd0" opacity="0.55"/><circle cx="580" cy="54" r="1.1" fill="#2a5fd0" opacity="0.55"/><circle cx="580" cy="61" r="1.2" fill="#2a5fd0" opacity="0.55"/><circle cx="580" cy="69" r="1.1" fill="#2a5fd0" opacity="0.55"/><circle cx="580" cy="76" r="0.9" fill="#2a5fd0" opacity="0.55"/><circle cx="580" cy="84" r="0.6" fill="#2a5fd0" opacity="0.55"/><circle cx="580" cy="92" r="0.6" fill="#2a5fd0" opacity="0.55"/><circle cx="580" cy="99" r="0.6" fill="#2a5fd0" opacity="0.55"/><circle cx="580" cy="107" r="0.6" fill="#2a5fd0" opacity="0.55"/><circle cx="580" cy="114" r="0.6" fill="#2a5fd0" opacity="0.55"/><circle cx="580" cy="122" r="0.6" fill="#2a5fd0" opacity="0.55"/><circle cx="590" cy="8" r="0.6" fill="#2a5fd0" opacity="0.55"/><circle cx="590" cy="16" r="0.6" fill="#2a5fd0" opacity="0.55"/><circle cx="590" cy="23" r="0.6" fill="#2a5fd0" opacity="0.55"/><circle cx="590" cy="31" r="0.6" fill="#2a5fd0" opacity="0.55"/><circle cx="590" cy="38" r="0.6" fill="#2a5fd0" opacity="0.55"/><circle cx="590" cy="46" r="0.6" fill="#2a5fd0" opacity="0.55"/><circle cx="590" cy="54" r="0.6" fill="#2a5fd0" opacity="0.55"/><circle cx="590" cy="61" r="0.6" fill="#2a5fd0" opacity="0.55"/><circle cx="590" cy="69" r="0.6" fill="#2a5fd0" opacity="0.55"/><circle cx="590" cy="76" r="0.6" fill="#2a5fd0" opacity="0.55"/><circle cx="590" cy="84" r="0.6" fill="#2a5fd0" opacity="0.55"/><circle cx="590" cy="92" r="0.6" fill="#2a5fd0" opacity="0.55"/><circle cx="590" cy="99" r="0.6" fill="#2a5fd0" opacity="0.55"/><circle cx="590" cy="107" r="0.6" fill="#2a5fd0" opacity="0.55"/><circle cx="590" cy="114" r="0.6" fill="#2a5fd0" opacity="0.55"/><circle cx="590" cy="122" r="0.6" fill="#2a5fd0" opacity="0.55"/><circle cx="600" cy="8" r="0.6" fill="#2a5fd0" opacity="0.55"/><circle cx="600" cy="16" r="0.6" fill="#2a5fd0" opacity="0.55"/><circle cx="600" cy="23" r="0.6" fill="#2a5fd0" opacity="0.55"/><circle cx="600" cy="31" r="0.6" fill="#2a5fd0" opacity="0.55"/><circle cx="600" cy="38" r="0.6" fill="#2a5fd0" opacity="0.55"/><circle cx="600" cy="46" r="0.6" fill="#2a5fd0" opacity="0.55"/><circle cx="600" cy="54" r="0.6" fill="#2a5fd0" opacity="0.55"/><circle cx="600" cy="61" r="0.6" fill="#2a5fd0" opacity="0.55"/><circle cx="600" cy="69" r="0.6" fill="#2a5fd0" opacity="0.55"/><circle cx="600" cy="76" r="0.6" fill="#2a5fd0" opacity="0.55"/><circle cx="600" cy="84" r="0.6" fill="#2a5fd0" opacity="0.55"/><circle cx="600" cy="92" r="0.6" fill="#2a5fd0" opacity="0.55"/><circle cx="600" cy="99" r="0.6" fill="#2a5fd0" opacity="0.55"/><circle cx="600" cy="107" r="0.6" fill="#2a5fd0" opacity="0.55"/><circle cx="600" cy="114" r="0.6" fill="#2a5fd0" opacity="0.55"/><circle cx="600" cy="122" r="0.6" fill="#2a5fd0" opacity="0.55"/><circle cx="610" cy="8" r="0.6" fill="#2a5fd0" opacity="0.55"/><circle cx="610" cy="16" r="0.6" fill="#2a5fd0" opacity="0.55"/><circle cx="610" cy="23" r="0.6" fill="#2a5fd0" opacity="0.55"/><circle cx="610" cy="31" r="0.6" fill="#2a5fd0" opacity="0.55"/><circle cx="610" cy="38" r="0.6" fill="#2a5fd0" opacity="0.55"/><circle cx="610" cy="46" r="0.6" fill="#2a5fd0" opacity="0.55"/><circle cx="610" cy="54" r="0.6" fill="#2a5fd0" opacity="0.55"/><circle cx="610" cy="61" r="0.6" fill="#2a5fd0" opacity="0.55"/><circle cx="610" cy="69" r="0.6" fill="#2a5fd0" opacity="0.55"/><circle cx="610" cy="76" r="0.6" fill="#2a5fd0" opacity="0.55"/><circle cx="610" cy="84" r="0.6" fill="#2a5fd0" opacity="0.55"/><circle cx="610" cy="92" r="0.6" fill="#2a5fd0" opacity="0.55"/><circle cx="610" cy="99" r="0.6" fill="#2a5fd0" opacity="0.55"/><circle cx="610" cy="107" r="0.6" fill="#2a5fd0" opacity="0.55"/><circle cx="610" cy="114" r="0.6" fill="#2a5fd0" opacity="0.55"/><circle cx="610" cy="122" r="0.6" fill="#2a5fd0" opacity="0.55"/><circle cx="620" cy="8" r="0.6" fill="#2a5fd0" opacity="0.55"/><circle cx="620" cy="16" r="0.6" fill="#2a5fd0" opacity="0.55"/><circle cx="620" cy="23" r="0.6" fill="#2a5fd0" opacity="0.55"/><circle cx="620" cy="31" r="0.6" fill="#2a5fd0" opacity="0.55"/><circle cx="620" cy="38" r="0.6" fill="#2a5fd0" opacity="0.55"/><circle cx="620" cy="46" r="0.6" fill="#2a5fd0" opacity="0.55"/><circle cx="620" cy="54" r="0.6" fill="#2a5fd0" opacity="0.55"/><circle cx="620" cy="61" r="0.6" fill="#2a5fd0" opacity="0.55"/><circle cx="620" cy="69" r="0.6" fill="#2a5fd0" opacity="0.55"/><circle cx="620" cy="76" r="0.6" fill="#2a5fd0" opacity="0.55"/><circle cx="620" cy="84" r="0.6" fill="#2a5fd0" opacity="0.55"/><circle cx="620" cy="92" r="0.6" fill="#2a5fd0" opacity="0.55"/><circle cx="620" cy="99" r="0.6" fill="#2a5fd0" opacity="0.55"/><circle cx="620" cy="107" r="0.6" fill="#2a5fd0" opacity="0.55"/><circle cx="620" cy="114" r="0.6" fill="#2a5fd0" opacity="0.55"/><circle cx="620" cy="122" r="0.6" fill="#2a5fd0" opacity="0.55"/><circle cx="630" cy="8" r="0.6" fill="#2a5fd0" opacity="0.55"/><circle cx="630" cy="16" r="0.6" fill="#2a5fd0" opacity="0.55"/><circle cx="630" cy="23" r="0.6" fill="#2a5fd0" opacity="0.55"/><circle cx="630" cy="31" r="0.6" fill="#2a5fd0" opacity="0.55"/><circle cx="630" cy="38" r="0.6" fill="#2a5fd0" opacity="0.55"/><circle cx="630" cy="46" r="0.6" fill="#2a5fd0" opacity="0.55"/><circle cx="630" cy="54" r="0.6" fill="#2a5fd0" opacity="0.55"/><circle cx="630" cy="61" r="0.6" fill="#2a5fd0" opacity="0.55"/><circle cx="630" cy="69" r="0.6" fill="#2a5fd0" opacity="0.55"/><circle cx="630" cy="76" r="0.6" fill="#2a5fd0" opacity="0.55"/><circle cx="630" cy="84" r="0.6" fill="#2a5fd0" opacity="0.55"/><circle cx="630" cy="92" r="0.6" fill="#2a5fd0" opacity="0.55"/><circle cx="630" cy="99" r="0.6" fill="#2a5fd0" opacity="0.55"/><circle cx="630" cy="107" r="0.6" fill="#2a5fd0" opacity="0.55"/><circle cx="630" cy="114" r="0.6" fill="#2a5fd0" opacity="0.55"/><circle cx="630" cy="122" r="0.6" fill="#2a5fd0" opacity="0.55"/><circle cx="640" cy="8" r="0.6" fill="#2a5fd0" opacity="0.55"/><circle cx="640" cy="16" r="0.6" fill="#2a5fd0" opacity="0.55"/><circle cx="640" cy="23" r="0.6" fill="#2a5fd0" opacity="0.55"/><circle cx="640" cy="31" r="0.6" fill="#2a5fd0" opacity="0.55"/><circle cx="640" cy="38" r="0.6" fill="#2a5fd0" opacity="0.55"/><circle cx="640" cy="46" r="0.6" fill="#2a5fd0" opacity="0.55"/><circle cx="640" cy="54" r="0.6" fill="#2a5fd0" opacity="0.55"/><circle cx="640" cy="61" r="0.6" fill="#2a5fd0" opacity="0.55"/><circle cx="640" cy="69" r="0.6" fill="#2a5fd0" opacity="0.55"/><circle cx="640" cy="76" r="0.6" fill="#2a5fd0" opacity="0.55"/><circle cx="640" cy="84" r="0.6" fill="#2a5fd0" opacity="0.55"/><circle cx="640" cy="92" r="0.6" fill="#2a5fd0" opacity="0.55"/><circle cx="640" cy="99" r="0.6" fill="#2a5fd0" opacity="0.55"/><circle cx="640" cy="107" r="0.6" fill="#2a5fd0" opacity="0.55"/><circle cx="640" cy="114" r="0.6" fill="#2a5fd0" opacity="0.55"/><circle cx="640" cy="122" r="0.6" fill="#2a5fd0" opacity="0.55"/><circle cx="650" cy="8" r="0.6" fill="#2a5fd0" opacity="0.55"/><circle cx="650" cy="16" r="0.6" fill="#2a5fd0" opacity="0.55"/><circle cx="650" cy="23" r="0.6" fill="#2a5fd0" opacity="0.55"/><circle cx="650" cy="31" r="0.6" fill="#2a5fd0" opacity="0.55"/><circle cx="650" cy="38" r="0.6" fill="#2a5fd0" opacity="0.55"/><circle cx="650" cy="46" r="0.6" fill="#2a5fd0" opacity="0.55"/><circle cx="650" cy="54" r="0.6" fill="#2a5fd0" opacity="0.55"/><circle cx="650" cy="61" r="0.6" fill="#2a5fd0" opacity="0.55"/><circle cx="650" cy="69" r="0.6" fill="#2a5fd0" opacity="0.55"/><circle cx="650" cy="76" r="0.6" fill="#2a5fd0" opacity="0.55"/><circle cx="650" cy="84" r="0.6" fill="#2a5fd0" opacity="0.55"/><circle cx="650" cy="92" r="0.6" fill="#2a5fd0" opacity="0.55"/><circle cx="650" cy="99" r="0.6" fill="#2a5fd0" opacity="0.55"/><circle cx="650" cy="107" r="0.6" fill="#2a5fd0" opacity="0.55"/><circle cx="650" cy="114" r="0.6" fill="#2a5fd0" opacity="0.55"/><circle cx="650" cy="122" r="0.6" fill="#2a5fd0" opacity="0.55"/><circle cx="660" cy="8" r="0.6" fill="#2a5fd0" opacity="0.55"/><circle cx="660" cy="16" r="0.6" fill="#2a5fd0" opacity="0.55"/><circle cx="660" cy="23" r="0.6" fill="#2a5fd0" opacity="0.55"/><circle cx="660" cy="31" r="0.6" fill="#2a5fd0" opacity="0.55"/><circle cx="660" cy="38" r="0.6" fill="#2a5fd0" opacity="0.55"/><circle cx="660" cy="46" r="0.6" fill="#2a5fd0" opacity="0.55"/><circle cx="660" cy="54" r="0.6" fill="#2a5fd0" opacity="0.55"/><circle cx="660" cy="61" r="0.6" fill="#2a5fd0" opacity="0.55"/><circle cx="660" cy="69" r="0.6" fill="#2a5fd0" opacity="0.55"/><circle cx="660" cy="76" r="0.6" fill="#2a5fd0" opacity="0.55"/><circle cx="660" cy="84" r="0.6" fill="#2a5fd0" opacity="0.55"/><circle cx="660" cy="92" r="0.6" fill="#2a5fd0" opacity="0.55"/><circle cx="660" cy="99" r="0.6" fill="#2a5fd0" opacity="0.55"/><circle cx="660" cy="107" r="0.6" fill="#2a5fd0" opacity="0.55"/><circle cx="660" cy="114" r="0.6" fill="#2a5fd0" opacity="0.55"/><circle cx="660" cy="122" r="0.6" fill="#2a5fd0" opacity="0.55"/><circle cx="670" cy="8" r="0.6" fill="#2a5fd0" opacity="0.55"/><circle cx="670" cy="16" r="0.6" fill="#2a5fd0" opacity="0.55"/><circle cx="670" cy="23" r="0.6" fill="#2a5fd0" opacity="0.55"/><circle cx="670" cy="31" r="0.6" fill="#2a5fd0" opacity="0.55"/><circle cx="670" cy="38" r="0.6" fill="#2a5fd0" opacity="0.55"/><circle cx="670" cy="46" r="0.6" fill="#2a5fd0" opacity="0.55"/><circle cx="670" cy="54" r="0.6" fill="#2a5fd0" opacity="0.55"/><circle cx="670" cy="61" r="0.6" fill="#2a5fd0" opacity="0.55"/><circle cx="670" cy="69" r="0.6" fill="#2a5fd0" opacity="0.55"/><circle cx="670" cy="76" r="0.6" fill="#2a5fd0" opacity="0.55"/><circle cx="670" cy="84" r="0.6" fill="#2a5fd0" opacity="0.55"/><circle cx="670" cy="92" r="0.6" fill="#2a5fd0" opacity="0.55"/><circle cx="670" cy="99" r="0.6" fill="#2a5fd0" opacity="0.55"/><circle cx="670" cy="107" r="0.6" fill="#2a5fd0" opacity="0.55"/><circle cx="670" cy="114" r="0.6" fill="#2a5fd0" opacity="0.55"/><circle cx="670" cy="122" r="0.6" fill="#2a5fd0" opacity="0.55"/><circle cx="680" cy="8" r="0.6" fill="#2a5fd0" opacity="0.55"/><circle cx="680" cy="16" r="0.6" fill="#2a5fd0" opacity="0.55"/><circle cx="680" cy="23" r="0.6" fill="#2a5fd0" opacity="0.55"/><circle cx="680" cy="31" r="0.6" fill="#2a5fd0" opacity="0.55"/><circle cx="680" cy="38" r="0.6" fill="#2a5fd0" opacity="0.55"/><circle cx="680" cy="46" r="0.6" fill="#2a5fd0" opacity="0.55"/><circle cx="680" cy="54" r="0.6" fill="#2a5fd0" opacity="0.55"/><circle cx="680" cy="61" r="0.6" fill="#2a5fd0" opacity="0.55"/><circle cx="680" cy="69" r="0.6" fill="#2a5fd0" opacity="0.55"/><circle cx="680" cy="76" r="0.6" fill="#2a5fd0" opacity="0.55"/><circle cx="680" cy="84" r="0.6" fill="#2a5fd0" opacity="0.55"/><circle cx="680" cy="92" r="0.6" fill="#2a5fd0" opacity="0.55"/><circle cx="680" cy="99" r="0.6" fill="#2a5fd0" opacity="0.55"/><circle cx="680" cy="107" r="0.6" fill="#2a5fd0" opacity="0.55"/><circle cx="680" cy="114" r="0.6" fill="#2a5fd0" opacity="0.55"/><circle cx="680" cy="122" r="0.6" fill="#2a5fd0" opacity="0.55"/><circle cx="690" cy="8" r="0.6" fill="#2a5fd0" opacity="0.55"/><circle cx="690" cy="16" r="0.6" fill="#2a5fd0" opacity="0.55"/><circle cx="690" cy="23" r="0.6" fill="#2a5fd0" opacity="0.55"/><circle cx="690" cy="31" r="0.6" fill="#2a5fd0" opacity="0.55"/><circle cx="690" cy="38" r="0.6" fill="#2a5fd0" opacity="0.55"/><circle cx="690" cy="46" r="0.6" fill="#2a5fd0" opacity="0.55"/><circle cx="690" cy="54" r="0.6" fill="#2a5fd0" opacity="0.55"/><circle cx="690" cy="61" r="0.6" fill="#2a5fd0" opacity="0.55"/><circle cx="690" cy="69" r="0.6" fill="#2a5fd0" opacity="0.55"/><circle cx="690" cy="76" r="0.6" fill="#2a5fd0" opacity="0.55"/><circle cx="690" cy="84" r="0.6" fill="#2a5fd0" opacity="0.55"/><circle cx="690" cy="92" r="0.6" fill="#2a5fd0" opacity="0.55"/><circle cx="690" cy="99" r="0.6" fill="#2a5fd0" opacity="0.55"/><circle cx="690" cy="107" r="0.6" fill="#2a5fd0" opacity="0.55"/><circle cx="690" cy="114" r="0.6" fill="#2a5fd0" opacity="0.55"/><circle cx="690" cy="122" r="0.6" fill="#2a5fd0" opacity="0.55"/><circle cx="700" cy="8" r="0.6" fill="#2a5fd0" opacity="0.55"/><circle cx="700" cy="16" r="0.6" fill="#2a5fd0" opacity="0.55"/><circle cx="700" cy="23" r="0.6" fill="#2a5fd0" opacity="0.55"/><circle cx="700" cy="31" r="0.6" fill="#2a5fd0" opacity="0.55"/><circle cx="700" cy="38" r="0.6" fill="#2a5fd0" opacity="0.55"/><circle cx="700" cy="46" r="0.6" fill="#2a5fd0" opacity="0.55"/><circle cx="700" cy="54" r="0.6" fill="#2a5fd0" opacity="0.55"/><circle cx="700" cy="61" r="0.6" fill="#2a5fd0" opacity="0.55"/><circle cx="700" cy="69" r="0.6" fill="#2a5fd0" opacity="0.55"/><circle cx="700" cy="76" r="0.6" fill="#2a5fd0" opacity="0.55"/><circle cx="700" cy="84" r="0.6" fill="#2a5fd0" opacity="0.55"/><circle cx="700" cy="92" r="0.6" fill="#2a5fd0" opacity="0.55"/><circle cx="700" cy="99" r="0.6" fill="#2a5fd0" opacity="0.55"/><circle cx="700" cy="107" r="0.6" fill="#2a5fd0" opacity="0.55"/><circle cx="700" cy="114" r="0.6" fill="#2a5fd0" opacity="0.55"/><circle cx="700" cy="122" r="0.6" fill="#2a5fd0" opacity="0.55"/><circle cx="710" cy="8" r="0.6" fill="#2a5fd0" opacity="0.55"/><circle cx="710" cy="16" r="0.6" fill="#2a5fd0" opacity="0.55"/><circle cx="710" cy="23" r="0.6" fill="#2a5fd0" opacity="0.55"/><circle cx="710" cy="31" r="0.6" fill="#2a5fd0" opacity="0.55"/><circle cx="710" cy="38" r="0.6" fill="#2a5fd0" opacity="0.55"/><circle cx="710" cy="46" r="0.6" fill="#2a5fd0" opacity="0.55"/><circle cx="710" cy="54" r="0.6" fill="#2a5fd0" opacity="0.55"/><circle cx="710" cy="61" r="0.6" fill="#2a5fd0" opacity="0.55"/><circle cx="710" cy="69" r="0.6" fill="#2a5fd0" opacity="0.55"/><circle cx="710" cy="76" r="0.6" fill="#2a5fd0" opacity="0.55"/><circle cx="710" cy="84" r="0.6" fill="#2a5fd0" opacity="0.55"/><circle cx="710" cy="92" r="0.6" fill="#2a5fd0" opacity="0.55"/><circle cx="710" cy="99" r="0.6" fill="#2a5fd0" opacity="0.55"/><circle cx="710" cy="107" r="0.6" fill="#2a5fd0" opacity="0.55"/><circle cx="710" cy="114" r="0.6" fill="#2a5fd0" opacity="0.55"/><circle cx="710" cy="122" r="0.6" fill="#2a5fd0" opacity="0.55"/><circle cx="720" cy="8" r="0.6" fill="#2a5fd0" opacity="0.55"/><circle cx="720" cy="16" r="0.6" fill="#2a5fd0" opacity="0.55"/><circle cx="720" cy="23" r="0.6" fill="#2a5fd0" opacity="0.55"/><circle cx="720" cy="31" r="0.6" fill="#2a5fd0" opacity="0.55"/><circle cx="720" cy="38" r="0.6" fill="#2a5fd0" opacity="0.55"/><circle cx="720" cy="46" r="0.6" fill="#2a5fd0" opacity="0.55"/><circle cx="720" cy="54" r="0.6" fill="#2a5fd0" opacity="0.55"/><circle cx="720" cy="61" r="0.6" fill="#2a5fd0" opacity="0.55"/><circle cx="720" cy="69" r="0.6" fill="#2a5fd0" opacity="0.55"/><circle cx="720" cy="76" r="0.6" fill="#2a5fd0" opacity="0.55"/><circle cx="720" cy="84" r="0.6" fill="#2a5fd0" opacity="0.55"/><circle cx="720" cy="92" r="0.6" fill="#2a5fd0" opacity="0.55"/><circle cx="720" cy="99" r="0.6" fill="#2a5fd0" opacity="0.55"/><circle cx="720" cy="107" r="0.6" fill="#2a5fd0" opacity="0.55"/><circle cx="720" cy="114" r="0.6" fill="#2a5fd0" opacity="0.55"/><circle cx="720" cy="122" r="0.6" fill="#2a5fd0" opacity="0.55"/><rect x="35" y="41" width="240" height="12" fill="#ffffff" opacity="0.95"/><rect x="35" y="88" width="250" height="5" fill="#dfe6f5" opacity="0.75"/><circle cx="47" cy="118" r="3.5" fill="#dfe6f5" opacity="0.8"/><rect x="70" y="115" width="300" height="5" fill="#dfe6f5" opacity="0.75"/><circle cx="47" cy="148" r="3.5" fill="#dfe6f5" opacity="0.8"/><rect x="70" y="145" width="300" height="5" fill="#dfe6f5" opacity="0.75"/><circle cx="47" cy="178" r="3.5" fill="#dfe6f5" opacity="0.8"/><rect x="70" y="175" width="300" height="5" fill="#dfe6f5" opacity="0.75"/><circle cx="47" cy="208" r="3.5" fill="#dfe6f5" opacity="0.8"/><rect x="70" y="205" width="260" height="5" fill="#dfe6f5" opacity="0.75"/><rect x="70" y="130" width="100" height="5" fill="#dfe6f5" opacity="0.6"/><rect x="70" y="160" width="120" height="5" fill="#dfe6f5" opacity="0.6"/><rect x="70" y="190" width="40" height="5" fill="#dfe6f5" opacity="0.6"/><rect x="70" y="220" width="210" height="5" fill="#dfe6f5" opacity="0.9"/><rect x="35" y="245" width="320" height="5" fill="#dfe6f5" opacity="0.75"/><rect x="35" y="258" width="160" height="5" fill="#dfe6f5" opacity="0.75"/><rect x="452" y="130" width="262" height="260" fill="#a8d2ea"/><rect x="452" y="335" width="262" height="55" fill="#7ab4dc"/><rect x="560" y="160" width="35" height="38" fill="#fff"/><rect x="640" y="170" width="35" height="42" fill="#fff7d0"/><ellipse cx="510" cy="330" rx="35" ry="20" fill="#fff"/><rect x="488" y="240" width="38" height="75" fill="#e8eef5"/><circle cx="510" cy="230" r="12" fill="#3a4a5a"/><rect x="605" y="255" width="42" height="70" fill="#fff"/><rect x="612" y="320" width="28" height="50" fill="#2a4a7a"/><circle cx="625" cy="240" r="11" fill="#5a3a2a"/></g></svg>
<div style="position:absolute;left:13.80px;top:306.30px;font-size:8.172px;line-height:1;font-weight:400;color:#3c4043;white-space:pre;transform-origin:left top;transform:scaleX(0.93);-webkit-text-stroke:0.06px #3c4043;">5</div>
<div style="position:absolute;left:24.30px;top:361.15px;width:85.40px;height:49.00px;border:1px solid #d3d6da;border-radius:6px;background:#fff;"></div>
<svg style="position:absolute;left:26.2px;top:362.85px" width="81.2" height="45.6" viewBox="0 0 720 405" preserveAspectRatio="none"><defs><clipPath id="tc6"><rect width="720" height="405" rx="36"/></clipPath></defs><g clip-path="url(#tc6)"><rect width="720" height="405" fill="#ffffff"/><rect x="20" y="101" width="290" height="215" fill="#e4e8ec"/><rect x="20" y="101" width="290" height="60" fill="#f4f6f8"/><rect x="20" y="265" width="290" height="51" fill="#5a646e"/><ellipse cx="95" cy="255" rx="28" ry="30" fill="#1f2833"/><ellipse cx="150" cy="270" rx="30" ry="35" fill="#1a222c"/><ellipse cx="70" cy="285" rx="22" ry="25" fill="#2a3440"/><rect x="170" y="135" width="28" height="90" fill="#7a90a8"/><circle cx="184" cy="125" r="11" fill="#4a3a30"/><rect x="215" y="115" width="85" height="110" fill="#fafbfc" stroke="#9aa4ae" stroke-width="3"/><rect x="40" y="110" width="5" height="150" fill="#d49a6a"/><rect x="115" y="110" width="5" height="120" fill="#c8d0d8"/><rect x="345" y="35" width="185" height="12" fill="#3a3f4a" opacity="0.9"/><rect x="345" y="56" width="130" height="12" fill="#3a3f4a" opacity="0.9"/><rect x="345" y="90" width="290" height="5" fill="#9aa0a8" opacity="0.6"/><circle cx="362" cy="118" r="3.5" fill="#7a808a" opacity="0.6"/><rect x="380" y="115" width="250" height="5" fill="#9aa0a8" opacity="0.55"/><circle cx="362" cy="150" r="3.5" fill="#7a808a" opacity="0.6"/><rect x="380" y="147" width="260" height="5" fill="#9aa0a8" opacity="0.55"/><circle cx="362" cy="178" r="3.5" fill="#7a808a" opacity="0.6"/><rect x="380" y="175" width="260" height="5" fill="#9aa0a8" opacity="0.55"/><rect x="380" y="130" width="150" height="5" fill="#9aa0a8" opacity="0.5"/><rect x="380" y="162" width="200" height="5" fill="#9aa0a8" opacity="0.5"/><rect x="380" y="190" width="180" height="5" fill="#9aa0a8" opacity="0.5"/><rect x="345" y="222" width="250" height="5" fill="#9aa0a8" opacity="0.6"/><rect x="345" y="236" width="200" height="5" fill="#9aa0a8" opacity="0.6"/><circle cx="560" cy="250" r="1.6" fill="#c8ccd2" opacity="0.6"/><circle cx="560" cy="264" r="1.6" fill="#c8ccd2" opacity="0.6"/><circle cx="560" cy="278" r="1.6" fill="#c8ccd2" opacity="0.6"/><circle cx="560" cy="292" r="1.6" fill="#c8ccd2" opacity="0.6"/><circle cx="560" cy="306" r="1.6" fill="#c8ccd2" opacity="0.6"/><circle cx="560" cy="320" r="1.6" fill="#c8ccd2" opacity="0.6"/><circle cx="560" cy="334" r="1.6" fill="#c8ccd2" opacity="0.6"/><circle cx="560" cy="348" r="1.6" fill="#c8ccd2" opacity="0.6"/><circle cx="560" cy="362" r="1.6" fill="#c8ccd2" opacity="0.6"/><circle cx="560" cy="376" r="1.6" fill="#c8ccd2" opacity="0.6"/><circle cx="574" cy="250" r="1.6" fill="#c8ccd2" opacity="0.6"/><circle cx="574" cy="264" r="1.6" fill="#c8ccd2" opacity="0.6"/><circle cx="574" cy="278" r="1.6" fill="#c8ccd2" opacity="0.6"/><circle cx="574" cy="292" r="1.6" fill="#c8ccd2" opacity="0.6"/><circle cx="574" cy="306" r="1.6" fill="#c8ccd2" opacity="0.6"/><circle cx="574" cy="320" r="1.6" fill="#c8ccd2" opacity="0.6"/><circle cx="574" cy="334" r="1.6" fill="#c8ccd2" opacity="0.6"/><circle cx="574" cy="348" r="1.6" fill="#c8ccd2" opacity="0.6"/><circle cx="574" cy="362" r="1.6" fill="#c8ccd2" opacity="0.6"/><circle cx="574" cy="376" r="1.6" fill="#c8ccd2" opacity="0.6"/><circle cx="588" cy="250" r="1.6" fill="#c8ccd2" opacity="0.6"/><circle cx="588" cy="264" r="1.6" fill="#c8ccd2" opacity="0.6"/><circle cx="588" cy="278" r="1.6" fill="#c8ccd2" opacity="0.6"/><circle cx="588" cy="292" r="1.6" fill="#c8ccd2" opacity="0.6"/><circle cx="588" cy="306" r="1.6" fill="#c8ccd2" opacity="0.6"/><circle cx="588" cy="320" r="1.6" fill="#c8ccd2" opacity="0.6"/><circle cx="588" cy="334" r="1.6" fill="#c8ccd2" opacity="0.6"/><circle cx="588" cy="348" r="1.6" fill="#c8ccd2" opacity="0.6"/><circle cx="588" cy="362" r="1.6" fill="#c8ccd2" opacity="0.6"/><circle cx="588" cy="376" r="1.6" fill="#c8ccd2" opacity="0.6"/><circle cx="602" cy="250" r="1.6" fill="#c8ccd2" opacity="0.6"/><circle cx="602" cy="264" r="1.6" fill="#c8ccd2" opacity="0.6"/><circle cx="602" cy="278" r="1.6" fill="#c8ccd2" opacity="0.6"/><circle cx="602" cy="292" r="1.6" fill="#c8ccd2" opacity="0.6"/><circle cx="602" cy="306" r="1.6" fill="#c8ccd2" opacity="0.6"/><circle cx="602" cy="320" r="1.6" fill="#c8ccd2" opacity="0.6"/><circle cx="602" cy="334" r="1.6" fill="#c8ccd2" opacity="0.6"/><circle cx="602" cy="348" r="1.6" fill="#c8ccd2" opacity="0.6"/><circle cx="602" cy="362" r="1.6" fill="#c8ccd2" opacity="0.6"/><circle cx="602" cy="376" r="1.6" fill="#c8ccd2" opacity="0.6"/><circle cx="616" cy="250" r="1.6" fill="#c8ccd2" opacity="0.6"/><circle cx="616" cy="264" r="1.6" fill="#c8ccd2" opacity="0.6"/><circle cx="616" cy="278" r="1.6" fill="#c8ccd2" opacity="0.6"/><circle cx="616" cy="292" r="1.6" fill="#c8ccd2" opacity="0.6"/><circle cx="616" cy="306" r="1.6" fill="#c8ccd2" opacity="0.6"/><circle cx="616" cy="320" r="1.6" fill="#c8ccd2" opacity="0.6"/><circle cx="616" cy="334" r="1.6" fill="#c8ccd2" opacity="0.6"/><circle cx="616" cy="348" r="1.6" fill="#c8ccd2" opacity="0.6"/><circle cx="616" cy="362" r="1.6" fill="#c8ccd2" opacity="0.6"/><circle cx="616" cy="376" r="1.6" fill="#c8ccd2" opacity="0.6"/><circle cx="630" cy="250" r="1.6" fill="#c8ccd2" opacity="0.6"/><circle cx="630" cy="264" r="1.6" fill="#c8ccd2" opacity="0.6"/><circle cx="630" cy="278" r="1.6" fill="#c8ccd2" opacity="0.6"/><circle cx="630" cy="292" r="1.6" fill="#c8ccd2" opacity="0.6"/><circle cx="630" cy="306" r="1.6" fill="#c8ccd2" opacity="0.6"/><circle cx="630" cy="320" r="1.6" fill="#c8ccd2" opacity="0.6"/><circle cx="630" cy="334" r="1.6" fill="#c8ccd2" opacity="0.6"/><circle cx="630" cy="348" r="1.6" fill="#c8ccd2" opacity="0.6"/><circle cx="630" cy="362" r="1.6" fill="#c8ccd2" opacity="0.6"/><circle cx="630" cy="376" r="1.6" fill="#c8ccd2" opacity="0.6"/><circle cx="644" cy="250" r="1.6" fill="#c8ccd2" opacity="0.6"/><circle cx="644" cy="264" r="1.6" fill="#c8ccd2" opacity="0.6"/><circle cx="644" cy="278" r="1.6" fill="#c8ccd2" opacity="0.6"/><circle cx="644" cy="292" r="1.6" fill="#c8ccd2" opacity="0.6"/><circle cx="644" cy="306" r="1.6" fill="#c8ccd2" opacity="0.6"/><circle cx="644" cy="320" r="1.6" fill="#c8ccd2" opacity="0.6"/><circle cx="644" cy="334" r="1.6" fill="#c8ccd2" opacity="0.6"/><circle cx="644" cy="348" r="1.6" fill="#c8ccd2" opacity="0.6"/><circle cx="644" cy="362" r="1.6" fill="#c8ccd2" opacity="0.6"/><circle cx="644" cy="376" r="1.6" fill="#c8ccd2" opacity="0.6"/><circle cx="658" cy="250" r="1.6" fill="#c8ccd2" opacity="0.6"/><circle cx="658" cy="264" r="1.6" fill="#c8ccd2" opacity="0.6"/><circle cx="658" cy="278" r="1.6" fill="#c8ccd2" opacity="0.6"/><circle cx="658" cy="292" r="1.6" fill="#c8ccd2" opacity="0.6"/><circle cx="658" cy="306" r="1.6" fill="#c8ccd2" opacity="0.6"/><circle cx="658" cy="320" r="1.6" fill="#c8ccd2" opacity="0.6"/><circle cx="658" cy="334" r="1.6" fill="#c8ccd2" opacity="0.6"/><circle cx="658" cy="348" r="1.6" fill="#c8ccd2" opacity="0.6"/><circle cx="658" cy="362" r="1.6" fill="#c8ccd2" opacity="0.6"/><circle cx="658" cy="376" r="1.6" fill="#c8ccd2" opacity="0.6"/><circle cx="672" cy="250" r="1.6" fill="#c8ccd2" opacity="0.6"/><circle cx="672" cy="264" r="1.6" fill="#c8ccd2" opacity="0.6"/><circle cx="672" cy="278" r="1.6" fill="#c8ccd2" opacity="0.6"/><circle cx="672" cy="292" r="1.6" fill="#c8ccd2" opacity="0.6"/><circle cx="672" cy="306" r="1.6" fill="#c8ccd2" opacity="0.6"/><circle cx="672" cy="320" r="1.6" fill="#c8ccd2" opacity="0.6"/><circle cx="672" cy="334" r="1.6" fill="#c8ccd2" opacity="0.6"/><circle cx="672" cy="348" r="1.6" fill="#c8ccd2" opacity="0.6"/><circle cx="672" cy="362" r="1.6" fill="#c8ccd2" opacity="0.6"/><circle cx="672" cy="376" r="1.6" fill="#c8ccd2" opacity="0.6"/><circle cx="686" cy="250" r="1.6" fill="#c8ccd2" opacity="0.6"/><circle cx="686" cy="264" r="1.6" fill="#c8ccd2" opacity="0.6"/><circle cx="686" cy="278" r="1.6" fill="#c8ccd2" opacity="0.6"/><circle cx="686" cy="292" r="1.6" fill="#c8ccd2" opacity="0.6"/><circle cx="686" cy="306" r="1.6" fill="#c8ccd2" opacity="0.6"/><circle cx="686" cy="320" r="1.6" fill="#c8ccd2" opacity="0.6"/><circle cx="686" cy="334" r="1.6" fill="#c8ccd2" opacity="0.6"/><circle cx="686" cy="348" r="1.6" fill="#c8ccd2" opacity="0.6"/><circle cx="686" cy="362" r="1.6" fill="#c8ccd2" opacity="0.6"/><circle cx="686" cy="376" r="1.6" fill="#c8ccd2" opacity="0.6"/><circle cx="700" cy="250" r="1.6" fill="#c8ccd2" opacity="0.6"/><circle cx="700" cy="264" r="1.6" fill="#c8ccd2" opacity="0.6"/><circle cx="700" cy="278" r="1.6" fill="#c8ccd2" opacity="0.6"/><circle cx="700" cy="292" r="1.6" fill="#c8ccd2" opacity="0.6"/><circle cx="700" cy="306" r="1.6" fill="#c8ccd2" opacity="0.6"/><circle cx="700" cy="320" r="1.6" fill="#c8ccd2" opacity="0.6"/><circle cx="700" cy="334" r="1.6" fill="#c8ccd2" opacity="0.6"/><circle cx="700" cy="348" r="1.6" fill="#c8ccd2" opacity="0.6"/><circle cx="700" cy="362" r="1.6" fill="#c8ccd2" opacity="0.6"/><circle cx="700" cy="376" r="1.6" fill="#c8ccd2" opacity="0.6"/></g></svg>
<div style="position:absolute;left:13.80px;top:363.43px;font-size:8.172px;line-height:1;font-weight:400;color:#3c4043;white-space:pre;transform-origin:left top;transform:scaleX(0.93);-webkit-text-stroke:0.06px #3c4043;">6</div>
<div style="position:absolute;left:24.30px;top:418.28px;width:85.40px;height:49.00px;border:1px solid #d3d6da;border-radius:6px;background:#fff;"></div>
<svg style="position:absolute;left:26.2px;top:419.98px" width="81.2" height="45.6" viewBox="0 0 720 405" preserveAspectRatio="none"><defs><clipPath id="tc7"><rect width="720" height="405" rx="36"/></clipPath></defs><g clip-path="url(#tc7)"><rect width="720" height="405" fill="#01287b"/><circle cx="470" cy="8" r="0.6" fill="#2a5fd0" opacity="0.55"/><circle cx="470" cy="16" r="0.6" fill="#2a5fd0" opacity="0.55"/><circle cx="470" cy="23" r="0.6" fill="#2a5fd0" opacity="0.55"/><circle cx="470" cy="31" r="0.6" fill="#2a5fd0" opacity="0.55"/><circle cx="470" cy="38" r="0.6" fill="#2a5fd0" opacity="0.55"/><circle cx="470" cy="46" r="0.6" fill="#2a5fd0" opacity="0.55"/><circle cx="470" cy="54" r="0.6" fill="#2a5fd0" opacity="0.55"/><circle cx="470" cy="61" r="0.6" fill="#2a5fd0" opacity="0.55"/><circle cx="470" cy="69" r="0.6" fill="#2a5fd0" opacity="0.55"/><circle cx="470" cy="76" r="0.6" fill="#2a5fd0" opacity="0.55"/><circle cx="470" cy="84" r="0.6" fill="#2a5fd0" opacity="0.55"/><circle cx="470" cy="92" r="0.6" fill="#2a5fd0" opacity="0.55"/><circle cx="470" cy="99" r="0.6" fill="#2a5fd0" opacity="0.55"/><circle cx="470" cy="107" r="0.6" fill="#2a5fd0" opacity="0.55"/><circle cx="470" cy="114" r="0.6" fill="#2a5fd0" opacity="0.55"/><circle cx="470" cy="122" r="0.6" fill="#2a5fd0" opacity="0.55"/><circle cx="480" cy="8" r="0.6" fill="#2a5fd0" opacity="0.55"/><circle cx="480" cy="16" r="0.6" fill="#2a5fd0" opacity="0.55"/><circle cx="480" cy="23" r="0.6" fill="#2a5fd0" opacity="0.55"/><circle cx="480" cy="31" r="0.6" fill="#2a5fd0" opacity="0.55"/><circle cx="480" cy="38" r="0.6" fill="#2a5fd0" opacity="0.55"/><circle cx="480" cy="46" r="0.6" fill="#2a5fd0" opacity="0.55"/><circle cx="480" cy="54" r="0.6" fill="#2a5fd0" opacity="0.55"/><circle cx="480" cy="61" r="0.6" fill="#2a5fd0" opacity="0.55"/><circle cx="480" cy="69" r="0.6" fill="#2a5fd0" opacity="0.55"/><circle cx="480" cy="76" r="0.6" fill="#2a5fd0" opacity="0.55"/><circle cx="480" cy="84" r="0.6" fill="#2a5fd0" opacity="0.55"/><circle cx="480" cy="92" r="0.6" fill="#2a5fd0" opacity="0.55"/><circle cx="480" cy="99" r="0.6" fill="#2a5fd0" opacity="0.55"/><circle cx="480" cy="107" r="0.6" fill="#2a5fd0" opacity="0.55"/><circle cx="480" cy="114" r="0.6" fill="#2a5fd0" opacity="0.55"/><circle cx="480" cy="122" r="0.6" fill="#2a5fd0" opacity="0.55"/><circle cx="490" cy="8" r="0.6" fill="#2a5fd0" opacity="0.55"/><circle cx="490" cy="16" r="0.6" fill="#2a5fd0" opacity="0.55"/><circle cx="490" cy="23" r="0.6" fill="#2a5fd0" opacity="0.55"/><circle cx="490" cy="31" r="0.6" fill="#2a5fd0" opacity="0.55"/><circle cx="490" cy="38" r="0.6" fill="#2a5fd0" opacity="0.55"/><circle cx="490" cy="46" r="0.6" fill="#2a5fd0" opacity="0.55"/><circle cx="490" cy="54" r="0.6" fill="#2a5fd0" opacity="0.55"/><circle cx="490" cy="61" r="0.6" fill="#2a5fd0" opacity="0.55"/><circle cx="490" cy="69" r="0.6" fill="#2a5fd0" opacity="0.55"/><circle cx="490" cy="76" r="0.6" fill="#2a5fd0" opacity="0.55"/><circle cx="490" cy="84" r="0.6" fill="#2a5fd0" opacity="0.55"/><circle cx="490" cy="92" r="0.6" fill="#2a5fd0" opacity="0.55"/><circle cx="490" cy="99" r="0.6" fill="#2a5fd0" opacity="0.55"/><circle cx="490" cy="107" r="0.6" fill="#2a5fd0" opacity="0.55"/><circle cx="490" cy="114" r="0.6" fill="#2a5fd0" opacity="0.55"/><circle cx="490" cy="122" r="0.6" fill="#2a5fd0" opacity="0.55"/><circle cx="500" cy="8" r="0.6" fill="#2a5fd0" opacity="0.55"/><circle cx="500" cy="16" r="0.6" fill="#2a5fd0" opacity="0.55"/><circle cx="500" cy="23" r="0.6" fill="#2a5fd0" opacity="0.55"/><circle cx="500" cy="31" r="0.6" fill="#2a5fd0" opacity="0.55"/><circle cx="500" cy="38" r="0.6" fill="#2a5fd0" opacity="0.55"/><circle cx="500" cy="46" r="0.9" fill="#2a5fd0" opacity="0.55"/><circle cx="500" cy="54" r="1.1" fill="#2a5fd0" opacity="0.55"/><circle cx="500" cy="61" r="1.2" fill="#2a5fd0" opacity="0.55"/><circle cx="500" cy="69" r="1.1" fill="#2a5fd0" opacity="0.55"/><circle cx="500" cy="76" r="0.9" fill="#2a5fd0" opacity="0.55"/><circle cx="500" cy="84" r="0.6" fill="#2a5fd0" opacity="0.55"/><circle cx="500" cy="92" r="0.6" fill="#2a5fd0" opacity="0.55"/><circle cx="500" cy="99" r="0.6" fill="#2a5fd0" opacity="0.55"/><circle cx="500" cy="107" r="0.6" fill="#2a5fd0" opacity="0.55"/><circle cx="500" cy="114" r="0.6" fill="#2a5fd0" opacity="0.55"/><circle cx="500" cy="122" r="0.6" fill="#2a5fd0" opacity="0.55"/><circle cx="510" cy="8" r="0.6" fill="#2a5fd0" opacity="0.55"/><circle cx="510" cy="16" r="0.6" fill="#2a5fd0" opacity="0.55"/><circle cx="510" cy="23" r="0.6" fill="#2a5fd0" opacity="0.55"/><circle cx="510" cy="31" r="0.6" fill="#2a5fd0" opacity="0.55"/><circle cx="510" cy="38" r="1.0" fill="#2a5fd0" opacity="0.55"/><circle cx="510" cy="46" r="1.4" fill="#2a5fd0" opacity="0.55"/><circle cx="510" cy="54" r="1.6" fill="#2a5fd0" opacity="0.55"/><circle cx="510" cy="61" r="1.7" fill="#2a5fd0" opacity="0.55"/><circle cx="510" cy="69" r="1.7" fill="#2a5fd0" opacity="0.55"/><circle cx="510" cy="76" r="1.4" fill="#2a5fd0" opacity="0.55"/><circle cx="510" cy="84" r="1.1" fill="#2a5fd0" opacity="0.55"/><circle cx="510" cy="92" r="0.6" fill="#2a5fd0" opacity="0.55"/><circle cx="510" cy="99" r="0.6" fill="#2a5fd0" opacity="0.55"/><circle cx="510" cy="107" r="0.6" fill="#2a5fd0" opacity="0.55"/><circle cx="510" cy="114" r="0.6" fill="#2a5fd0" opacity="0.55"/><circle cx="510" cy="122" r="0.6" fill="#2a5fd0" opacity="0.55"/><circle cx="520" cy="8" r="0.6" fill="#2a5fd0" opacity="0.55"/><circle cx="520" cy="16" r="0.6" fill="#2a5fd0" opacity="0.55"/><circle cx="520" cy="23" r="0.6" fill="#2a5fd0" opacity="0.55"/><circle cx="520" cy="31" r="0.8" fill="#2a5fd0" opacity="0.55"/><circle cx="520" cy="38" r="1.3" fill="#2a5fd0" opacity="0.55"/><circle cx="520" cy="46" r="1.8" fill="#2a5fd0" opacity="0.55"/><circle cx="520" cy="54" r="2.2" fill="#2a5fd0" opacity="0.55"/><circle cx="520" cy="61" r="2.3" fill="#2a5fd0" opacity="0.55"/><circle cx="520" cy="69" r="2.2" fill="#2a5fd0" opacity="0.55"/><circle cx="520" cy="76" r="1.9" fill="#2a5fd0" opacity="0.55"/><circle cx="520" cy="84" r="1.4" fill="#2a5fd0" opacity="0.55"/><circle cx="520" cy="92" r="0.9" fill="#2a5fd0" opacity="0.55"/><circle cx="520" cy="99" r="0.6" fill="#2a5fd0" opacity="0.55"/><circle cx="520" cy="107" r="0.6" fill="#2a5fd0" opacity="0.55"/><circle cx="520" cy="114" r="0.6" fill="#2a5fd0" opacity="0.55"/><circle cx="520" cy="122" r="0.6" fill="#2a5fd0" opacity="0.55"/><circle cx="530" cy="8" r="0.6" fill="#2a5fd0" opacity="0.55"/><circle cx="530" cy="16" r="0.6" fill="#2a5fd0" opacity="0.55"/><circle cx="530" cy="23" r="0.6" fill="#2a5fd0" opacity="0.55"/><circle cx="530" cy="31" r="1.0" fill="#2a5fd0" opacity="0.55"/><circle cx="530" cy="38" r="1.6" fill="#2a5fd0" opacity="0.55"/><circle cx="530" cy="46" r="2.1" fill="#2a5fd0" opacity="0.55"/><circle cx="530" cy="54" r="2.6" fill="#2a5fd0" opacity="0.55"/><circle cx="530" cy="61" r="2.9" fill="#2a5fd0" opacity="0.55"/><circle cx="530" cy="69" r="2.7" fill="#2a5fd0" opacity="0.55"/><circle cx="530" cy="76" r="2.3" fill="#2a5fd0" opacity="0.55"/><circle cx="530" cy="84" r="1.7" fill="#2a5fd0" opacity="0.55"/><circle cx="530" cy="92" r="1.2" fill="#2a5fd0" opacity="0.55"/><circle cx="530" cy="99" r="0.6" fill="#2a5fd0" opacity="0.55"/><circle cx="530" cy="107" r="0.6" fill="#2a5fd0" opacity="0.55"/><circle cx="530" cy="114" r="0.6" fill="#2a5fd0" opacity="0.55"/><circle cx="530" cy="122" r="0.6" fill="#2a5fd0" opacity="0.55"/><circle cx="540" cy="8" r="0.6" fill="#2a5fd0" opacity="0.55"/><circle cx="540" cy="16" r="0.6" fill="#2a5fd0" opacity="0.55"/><circle cx="540" cy="23" r="0.6" fill="#2a5fd0" opacity="0.55"/><circle cx="540" cy="31" r="1.1" fill="#2a5fd0" opacity="0.55"/><circle cx="540" cy="38" r="1.7" fill="#2a5fd0" opacity="0.55"/><circle cx="540" cy="46" r="2.3" fill="#2a5fd0" opacity="0.55"/><circle cx="540" cy="54" r="2.9" fill="#2a5fd0" opacity="0.55"/><circle cx="540" cy="61" r="3.4" fill="#2a5fd0" opacity="0.55"/><circle cx="540" cy="69" r="3.0" fill="#2a5fd0" opacity="0.55"/><circle cx="540" cy="76" r="2.4" fill="#2a5fd0" opacity="0.55"/><circle cx="540" cy="84" r="1.8" fill="#2a5fd0" opacity="0.55"/><circle cx="540" cy="92" r="1.2" fill="#2a5fd0" opacity="0.55"/><circle cx="540" cy="99" r="0.6" fill="#2a5fd0" opacity="0.55"/><circle cx="540" cy="107" r="0.6" fill="#2a5fd0" opacity="0.55"/><circle cx="540" cy="114" r="0.6" fill="#2a5fd0" opacity="0.55"/><circle cx="540" cy="122" r="0.6" fill="#2a5fd0" opacity="0.55"/><circle cx="550" cy="8" r="0.6" fill="#2a5fd0" opacity="0.55"/><circle cx="550" cy="16" r="0.6" fill="#2a5fd0" opacity="0.55"/><circle cx="550" cy="23" r="0.6" fill="#2a5fd0" opacity="0.55"/><circle cx="550" cy="31" r="1.0" fill="#2a5fd0" opacity="0.55"/><circle cx="550" cy="38" r="1.6" fill="#2a5fd0" opacity="0.55"/><circle cx="550" cy="46" r="2.1" fill="#2a5fd0" opacity="0.55"/><circle cx="550" cy="54" r="2.6" fill="#2a5fd0" opacity="0.55"/><circle cx="550" cy="61" r="2.9" fill="#2a5fd0" opacity="0.55"/><circle cx="550" cy="69" r="2.7" fill="#2a5fd0" opacity="0.55"/><circle cx="550" cy="76" r="2.3" fill="#2a5fd0" opacity="0.55"/><circle cx="550" cy="84" r="1.7" fill="#2a5fd0" opacity="0.55"/><circle cx="550" cy="92" r="1.2" fill="#2a5fd0" opacity="0.55"/><circle cx="550" cy="99" r="0.6" fill="#2a5fd0" opacity="0.55"/><circle cx="550" cy="107" r="0.6" fill="#2a5fd0" opacity="0.55"/><circle cx="550" cy="114" r="0.6" fill="#2a5fd0" opacity="0.55"/><circle cx="550" cy="122" r="0.6" fill="#2a5fd0" opacity="0.55"/><circle cx="560" cy="8" r="0.6" fill="#2a5fd0" opacity="0.55"/><circle cx="560" cy="16" r="0.6" fill="#2a5fd0" opacity="0.55"/><circle cx="560" cy="23" r="0.6" fill="#2a5fd0" opacity="0.55"/><circle cx="560" cy="31" r="0.8" fill="#2a5fd0" opacity="0.55"/><circle cx="560" cy="38" r="1.3" fill="#2a5fd0" opacity="0.55"/><circle cx="560" cy="46" r="1.8" fill="#2a5fd0" opacity="0.55"/><circle cx="560" cy="54" r="2.2" fill="#2a5fd0" opacity="0.55"/><circle cx="560" cy="61" r="2.3" fill="#2a5fd0" opacity="0.55"/><circle cx="560" cy="69" r="2.2" fill="#2a5fd0" opacity="0.55"/><circle cx="560" cy="76" r="1.9" fill="#2a5fd0" opacity="0.55"/><circle cx="560" cy="84" r="1.4" fill="#2a5fd0" opacity="0.55"/><circle cx="560" cy="92" r="0.9" fill="#2a5fd0" opacity="0.55"/><circle cx="560" cy="99" r="0.6" fill="#2a5fd0" opacity="0.55"/><circle cx="560" cy="107" r="0.6" fill="#2a5fd0" opacity="0.55"/><circle cx="560" cy="114" r="0.6" fill="#2a5fd0" opacity="0.55"/><circle cx="560" cy="122" r="0.6" fill="#2a5fd0" opacity="0.55"/><circle cx="570" cy="8" r="0.6" fill="#2a5fd0" opacity="0.55"/><circle cx="570" cy="16" r="0.6" fill="#2a5fd0" opacity="0.55"/><circle cx="570" cy="23" r="0.6" fill="#2a5fd0" opacity="0.55"/><circle cx="570" cy="31" r="0.6" fill="#2a5fd0" opacity="0.55"/><circle cx="570" cy="38" r="1.0" fill="#2a5fd0" opacity="0.55"/><circle cx="570" cy="46" r="1.4" fill="#2a5fd0" opacity="0.55"/><circle cx="570" cy="54" r="1.6" fill="#2a5fd0" opacity="0.55"/><circle cx="570" cy="61" r="1.7" fill="#2a5fd0" opacity="0.55"/><circle cx="570" cy="69" r="1.7" fill="#2a5fd0" opacity="0.55"/><circle cx="570" cy="76" r="1.4" fill="#2a5fd0" opacity="0.55"/><circle cx="570" cy="84" r="1.1" fill="#2a5fd0" opacity="0.55"/><circle cx="570" cy="92" r="0.6" fill="#2a5fd0" opacity="0.55"/><circle cx="570" cy="99" r="0.6" fill="#2a5fd0" opacity="0.55"/><circle cx="570" cy="107" r="0.6" fill="#2a5fd0" opacity="0.55"/><circle cx="570" cy="114" r="0.6" fill="#2a5fd0" opacity="0.55"/><circle cx="570" cy="122" r="0.6" fill="#2a5fd0" opacity="0.55"/><circle cx="580" cy="8" r="0.6" fill="#2a5fd0" opacity="0.55"/><circle cx="580" cy="16" r="0.6" fill="#2a5fd0" opacity="0.55"/><circle cx="580" cy="23" r="0.6" fill="#2a5fd0" opacity="0.55"/><circle cx="580" cy="31" r="0.6" fill="#2a5fd0" opacity="0.55"/><circle cx="580" cy="38" r="0.6" fill="#2a5fd0" opacity="0.55"/><circle cx="580" cy="46" r="0.9" fill="#2a5fd0" opacity="0.55"/><circle cx="580" cy="54" r="1.1" fill="#2a5fd0" opacity="0.55"/><circle cx="580" cy="61" r="1.2" fill="#2a5fd0" opacity="0.55"/><circle cx="580" cy="69" r="1.1" fill="#2a5fd0" opacity="0.55"/><circle cx="580" cy="76" r="0.9" fill="#2a5fd0" opacity="0.55"/><circle cx="580" cy="84" r="0.6" fill="#2a5fd0" opacity="0.55"/><circle cx="580" cy="92" r="0.6" fill="#2a5fd0" opacity="0.55"/><circle cx="580" cy="99" r="0.6" fill="#2a5fd0" opacity="0.55"/><circle cx="580" cy="107" r="0.6" fill="#2a5fd0" opacity="0.55"/><circle cx="580" cy="114" r="0.6" fill="#2a5fd0" opacity="0.55"/><circle cx="580" cy="122" r="0.6" fill="#2a5fd0" opacity="0.55"/><circle cx="590" cy="8" r="0.6" fill="#2a5fd0" opacity="0.55"/><circle cx="590" cy="16" r="0.6" fill="#2a5fd0" opacity="0.55"/><circle cx="590" cy="23" r="0.6" fill="#2a5fd0" opacity="0.55"/><circle cx="590" cy="31" r="0.6" fill="#2a5fd0" opacity="0.55"/><circle cx="590" cy="38" r="0.6" fill="#2a5fd0" opacity="0.55"/><circle cx="590" cy="46" r="0.6" fill="#2a5fd0" opacity="0.55"/><circle cx="590" cy="54" r="0.6" fill="#2a5fd0" opacity="0.55"/><circle cx="590" cy="61" r="0.6" fill="#2a5fd0" opacity="0.55"/><circle cx="590" cy="69" r="0.6" fill="#2a5fd0" opacity="0.55"/><circle cx="590" cy="76" r="0.6" fill="#2a5fd0" opacity="0.55"/><circle cx="590" cy="84" r="0.6" fill="#2a5fd0" opacity="0.55"/><circle cx="590" cy="92" r="0.6" fill="#2a5fd0" opacity="0.55"/><circle cx="590" cy="99" r="0.6" fill="#2a5fd0" opacity="0.55"/><circle cx="590" cy="107" r="0.6" fill="#2a5fd0" opacity="0.55"/><circle cx="590" cy="114" r="0.6" fill="#2a5fd0" opacity="0.55"/><circle cx="590" cy="122" r="0.6" fill="#2a5fd0" opacity="0.55"/><circle cx="600" cy="8" r="0.6" fill="#2a5fd0" opacity="0.55"/><circle cx="600" cy="16" r="0.6" fill="#2a5fd0" opacity="0.55"/><circle cx="600" cy="23" r="0.6" fill="#2a5fd0" opacity="0.55"/><circle cx="600" cy="31" r="0.6" fill="#2a5fd0" opacity="0.55"/><circle cx="600" cy="38" r="0.6" fill="#2a5fd0" opacity="0.55"/><circle cx="600" cy="46" r="0.6" fill="#2a5fd0" opacity="0.55"/><circle cx="600" cy="54" r="0.6" fill="#2a5fd0" opacity="0.55"/><circle cx="600" cy="61" r="0.6" fill="#2a5fd0" opacity="0.55"/><circle cx="600" cy="69" r="0.6" fill="#2a5fd0" opacity="0.55"/><circle cx="600" cy="76" r="0.6" fill="#2a5fd0" opacity="0.55"/><circle cx="600" cy="84" r="0.6" fill="#2a5fd0" opacity="0.55"/><circle cx="600" cy="92" r="0.6" fill="#2a5fd0" opacity="0.55"/><circle cx="600" cy="99" r="0.6" fill="#2a5fd0" opacity="0.55"/><circle cx="600" cy="107" r="0.6" fill="#2a5fd0" opacity="0.55"/><circle cx="600" cy="114" r="0.6" fill="#2a5fd0" opacity="0.55"/><circle cx="600" cy="122" r="0.6" fill="#2a5fd0" opacity="0.55"/><circle cx="610" cy="8" r="0.6" fill="#2a5fd0" opacity="0.55"/><circle cx="610" cy="16" r="0.6" fill="#2a5fd0" opacity="0.55"/><circle cx="610" cy="23" r="0.6" fill="#2a5fd0" opacity="0.55"/><circle cx="610" cy="31" r="0.6" fill="#2a5fd0" opacity="0.55"/><circle cx="610" cy="38" r="0.6" fill="#2a5fd0" opacity="0.55"/><circle cx="610" cy="46" r="0.6" fill="#2a5fd0" opacity="0.55"/><circle cx="610" cy="54" r="0.6" fill="#2a5fd0" opacity="0.55"/><circle cx="610" cy="61" r="0.6" fill="#2a5fd0" opacity="0.55"/><circle cx="610" cy="69" r="0.6" fill="#2a5fd0" opacity="0.55"/><circle cx="610" cy="76" r="0.6" fill="#2a5fd0" opacity="0.55"/><circle cx="610" cy="84" r="0.6" fill="#2a5fd0" opacity="0.55"/><circle cx="610" cy="92" r="0.6" fill="#2a5fd0" opacity="0.55"/><circle cx="610" cy="99" r="0.6" fill="#2a5fd0" opacity="0.55"/><circle cx="610" cy="107" r="0.6" fill="#2a5fd0" opacity="0.55"/><circle cx="610" cy="114" r="0.6" fill="#2a5fd0" opacity="0.55"/><circle cx="610" cy="122" r="0.6" fill="#2a5fd0" opacity="0.55"/><circle cx="620" cy="8" r="0.6" fill="#2a5fd0" opacity="0.55"/><circle cx="620" cy="16" r="0.6" fill="#2a5fd0" opacity="0.55"/><circle cx="620" cy="23" r="0.6" fill="#2a5fd0" opacity="0.55"/><circle cx="620" cy="31" r="0.6" fill="#2a5fd0" opacity="0.55"/><circle cx="620" cy="38" r="0.6" fill="#2a5fd0" opacity="0.55"/><circle cx="620" cy="46" r="0.6" fill="#2a5fd0" opacity="0.55"/><circle cx="620" cy="54" r="0.6" fill="#2a5fd0" opacity="0.55"/><circle cx="620" cy="61" r="0.6" fill="#2a5fd0" opacity="0.55"/><circle cx="620" cy="69" r="0.6" fill="#2a5fd0" opacity="0.55"/><circle cx="620" cy="76" r="0.6" fill="#2a5fd0" opacity="0.55"/><circle cx="620" cy="84" r="0.6" fill="#2a5fd0" opacity="0.55"/><circle cx="620" cy="92" r="0.6" fill="#2a5fd0" opacity="0.55"/><circle cx="620" cy="99" r="0.6" fill="#2a5fd0" opacity="0.55"/><circle cx="620" cy="107" r="0.6" fill="#2a5fd0" opacity="0.55"/><circle cx="620" cy="114" r="0.6" fill="#2a5fd0" opacity="0.55"/><circle cx="620" cy="122" r="0.6" fill="#2a5fd0" opacity="0.55"/><circle cx="630" cy="8" r="0.6" fill="#2a5fd0" opacity="0.55"/><circle cx="630" cy="16" r="0.6" fill="#2a5fd0" opacity="0.55"/><circle cx="630" cy="23" r="0.6" fill="#2a5fd0" opacity="0.55"/><circle cx="630" cy="31" r="0.6" fill="#2a5fd0" opacity="0.55"/><circle cx="630" cy="38" r="0.6" fill="#2a5fd0" opacity="0.55"/><circle cx="630" cy="46" r="0.6" fill="#2a5fd0" opacity="0.55"/><circle cx="630" cy="54" r="0.6" fill="#2a5fd0" opacity="0.55"/><circle cx="630" cy="61" r="0.6" fill="#2a5fd0" opacity="0.55"/><circle cx="630" cy="69" r="0.6" fill="#2a5fd0" opacity="0.55"/><circle cx="630" cy="76" r="0.6" fill="#2a5fd0" opacity="0.55"/><circle cx="630" cy="84" r="0.6" fill="#2a5fd0" opacity="0.55"/><circle cx="630" cy="92" r="0.6" fill="#2a5fd0" opacity="0.55"/><circle cx="630" cy="99" r="0.6" fill="#2a5fd0" opacity="0.55"/><circle cx="630" cy="107" r="0.6" fill="#2a5fd0" opacity="0.55"/><circle cx="630" cy="114" r="0.6" fill="#2a5fd0" opacity="0.55"/><circle cx="630" cy="122" r="0.6" fill="#2a5fd0" opacity="0.55"/><circle cx="640" cy="8" r="0.6" fill="#2a5fd0" opacity="0.55"/><circle cx="640" cy="16" r="0.6" fill="#2a5fd0" opacity="0.55"/><circle cx="640" cy="23" r="0.6" fill="#2a5fd0" opacity="0.55"/><circle cx="640" cy="31" r="0.6" fill="#2a5fd0" opacity="0.55"/><circle cx="640" cy="38" r="0.6" fill="#2a5fd0" opacity="0.55"/><circle cx="640" cy="46" r="0.6" fill="#2a5fd0" opacity="0.55"/><circle cx="640" cy="54" r="0.6" fill="#2a5fd0" opacity="0.55"/><circle cx="640" cy="61" r="0.6" fill="#2a5fd0" opacity="0.55"/><circle cx="640" cy="69" r="0.6" fill="#2a5fd0" opacity="0.55"/><circle cx="640" cy="76" r="0.6" fill="#2a5fd0" opacity="0.55"/><circle cx="640" cy="84" r="0.6" fill="#2a5fd0" opacity="0.55"/><circle cx="640" cy="92" r="0.6" fill="#2a5fd0" opacity="0.55"/><circle cx="640" cy="99" r="0.6" fill="#2a5fd0" opacity="0.55"/><circle cx="640" cy="107" r="0.6" fill="#2a5fd0" opacity="0.55"/><circle cx="640" cy="114" r="0.6" fill="#2a5fd0" opacity="0.55"/><circle cx="640" cy="122" r="0.6" fill="#2a5fd0" opacity="0.55"/><circle cx="650" cy="8" r="0.6" fill="#2a5fd0" opacity="0.55"/><circle cx="650" cy="16" r="0.6" fill="#2a5fd0" opacity="0.55"/><circle cx="650" cy="23" r="0.6" fill="#2a5fd0" opacity="0.55"/><circle cx="650" cy="31" r="0.6" fill="#2a5fd0" opacity="0.55"/><circle cx="650" cy="38" r="0.6" fill="#2a5fd0" opacity="0.55"/><circle cx="650" cy="46" r="0.6" fill="#2a5fd0" opacity="0.55"/><circle cx="650" cy="54" r="0.6" fill="#2a5fd0" opacity="0.55"/><circle cx="650" cy="61" r="0.6" fill="#2a5fd0" opacity="0.55"/><circle cx="650" cy="69" r="0.6" fill="#2a5fd0" opacity="0.55"/><circle cx="650" cy="76" r="0.6" fill="#2a5fd0" opacity="0.55"/><circle cx="650" cy="84" r="0.6" fill="#2a5fd0" opacity="0.55"/><circle cx="650" cy="92" r="0.6" fill="#2a5fd0" opacity="0.55"/><circle cx="650" cy="99" r="0.6" fill="#2a5fd0" opacity="0.55"/><circle cx="650" cy="107" r="0.6" fill="#2a5fd0" opacity="0.55"/><circle cx="650" cy="114" r="0.6" fill="#2a5fd0" opacity="0.55"/><circle cx="650" cy="122" r="0.6" fill="#2a5fd0" opacity="0.55"/><circle cx="660" cy="8" r="0.6" fill="#2a5fd0" opacity="0.55"/><circle cx="660" cy="16" r="0.6" fill="#2a5fd0" opacity="0.55"/><circle cx="660" cy="23" r="0.6" fill="#2a5fd0" opacity="0.55"/><circle cx="660" cy="31" r="0.6" fill="#2a5fd0" opacity="0.55"/><circle cx="660" cy="38" r="0.6" fill="#2a5fd0" opacity="0.55"/><circle cx="660" cy="46" r="0.6" fill="#2a5fd0" opacity="0.55"/><circle cx="660" cy="54" r="0.6" fill="#2a5fd0" opacity="0.55"/><circle cx="660" cy="61" r="0.6" fill="#2a5fd0" opacity="0.55"/><circle cx="660" cy="69" r="0.6" fill="#2a5fd0" opacity="0.55"/><circle cx="660" cy="76" r="0.6" fill="#2a5fd0" opacity="0.55"/><circle cx="660" cy="84" r="0.6" fill="#2a5fd0" opacity="0.55"/><circle cx="660" cy="92" r="0.6" fill="#2a5fd0" opacity="0.55"/><circle cx="660" cy="99" r="0.6" fill="#2a5fd0" opacity="0.55"/><circle cx="660" cy="107" r="0.6" fill="#2a5fd0" opacity="0.55"/><circle cx="660" cy="114" r="0.6" fill="#2a5fd0" opacity="0.55"/><circle cx="660" cy="122" r="0.6" fill="#2a5fd0" opacity="0.55"/><circle cx="670" cy="8" r="0.6" fill="#2a5fd0" opacity="0.55"/><circle cx="670" cy="16" r="0.6" fill="#2a5fd0" opacity="0.55"/><circle cx="670" cy="23" r="0.6" fill="#2a5fd0" opacity="0.55"/><circle cx="670" cy="31" r="0.6" fill="#2a5fd0" opacity="0.55"/><circle cx="670" cy="38" r="0.6" fill="#2a5fd0" opacity="0.55"/><circle cx="670" cy="46" r="0.6" fill="#2a5fd0" opacity="0.55"/><circle cx="670" cy="54" r="0.6" fill="#2a5fd0" opacity="0.55"/><circle cx="670" cy="61" r="0.6" fill="#2a5fd0" opacity="0.55"/><circle cx="670" cy="69" r="0.6" fill="#2a5fd0" opacity="0.55"/><circle cx="670" cy="76" r="0.6" fill="#2a5fd0" opacity="0.55"/><circle cx="670" cy="84" r="0.6" fill="#2a5fd0" opacity="0.55"/><circle cx="670" cy="92" r="0.6" fill="#2a5fd0" opacity="0.55"/><circle cx="670" cy="99" r="0.6" fill="#2a5fd0" opacity="0.55"/><circle cx="670" cy="107" r="0.6" fill="#2a5fd0" opacity="0.55"/><circle cx="670" cy="114" r="0.6" fill="#2a5fd0" opacity="0.55"/><circle cx="670" cy="122" r="0.6" fill="#2a5fd0" opacity="0.55"/><circle cx="680" cy="8" r="0.6" fill="#2a5fd0" opacity="0.55"/><circle cx="680" cy="16" r="0.6" fill="#2a5fd0" opacity="0.55"/><circle cx="680" cy="23" r="0.6" fill="#2a5fd0" opacity="0.55"/><circle cx="680" cy="31" r="0.6" fill="#2a5fd0" opacity="0.55"/><circle cx="680" cy="38" r="0.6" fill="#2a5fd0" opacity="0.55"/><circle cx="680" cy="46" r="0.6" fill="#2a5fd0" opacity="0.55"/><circle cx="680" cy="54" r="0.6" fill="#2a5fd0" opacity="0.55"/><circle cx="680" cy="61" r="0.6" fill="#2a5fd0" opacity="0.55"/><circle cx="680" cy="69" r="0.6" fill="#2a5fd0" opacity="0.55"/><circle cx="680" cy="76" r="0.6" fill="#2a5fd0" opacity="0.55"/><circle cx="680" cy="84" r="0.6" fill="#2a5fd0" opacity="0.55"/><circle cx="680" cy="92" r="0.6" fill="#2a5fd0" opacity="0.55"/><circle cx="680" cy="99" r="0.6" fill="#2a5fd0" opacity="0.55"/><circle cx="680" cy="107" r="0.6" fill="#2a5fd0" opacity="0.55"/><circle cx="680" cy="114" r="0.6" fill="#2a5fd0" opacity="0.55"/><circle cx="680" cy="122" r="0.6" fill="#2a5fd0" opacity="0.55"/><circle cx="690" cy="8" r="0.6" fill="#2a5fd0" opacity="0.55"/><circle cx="690" cy="16" r="0.6" fill="#2a5fd0" opacity="0.55"/><circle cx="690" cy="23" r="0.6" fill="#2a5fd0" opacity="0.55"/><circle cx="690" cy="31" r="0.6" fill="#2a5fd0" opacity="0.55"/><circle cx="690" cy="38" r="0.6" fill="#2a5fd0" opacity="0.55"/><circle cx="690" cy="46" r="0.6" fill="#2a5fd0" opacity="0.55"/><circle cx="690" cy="54" r="0.6" fill="#2a5fd0" opacity="0.55"/><circle cx="690" cy="61" r="0.6" fill="#2a5fd0" opacity="0.55"/><circle cx="690" cy="69" r="0.6" fill="#2a5fd0" opacity="0.55"/><circle cx="690" cy="76" r="0.6" fill="#2a5fd0" opacity="0.55"/><circle cx="690" cy="84" r="0.6" fill="#2a5fd0" opacity="0.55"/><circle cx="690" cy="92" r="0.6" fill="#2a5fd0" opacity="0.55"/><circle cx="690" cy="99" r="0.6" fill="#2a5fd0" opacity="0.55"/><circle cx="690" cy="107" r="0.6" fill="#2a5fd0" opacity="0.55"/><circle cx="690" cy="114" r="0.6" fill="#2a5fd0" opacity="0.55"/><circle cx="690" cy="122" r="0.6" fill="#2a5fd0" opacity="0.55"/><circle cx="700" cy="8" r="0.6" fill="#2a5fd0" opacity="0.55"/><circle cx="700" cy="16" r="0.6" fill="#2a5fd0" opacity="0.55"/><circle cx="700" cy="23" r="0.6" fill="#2a5fd0" opacity="0.55"/><circle cx="700" cy="31" r="0.6" fill="#2a5fd0" opacity="0.55"/><circle cx="700" cy="38" r="0.6" fill="#2a5fd0" opacity="0.55"/><circle cx="700" cy="46" r="0.6" fill="#2a5fd0" opacity="0.55"/><circle cx="700" cy="54" r="0.6" fill="#2a5fd0" opacity="0.55"/><circle cx="700" cy="61" r="0.6" fill="#2a5fd0" opacity="0.55"/><circle cx="700" cy="69" r="0.6" fill="#2a5fd0" opacity="0.55"/><circle cx="700" cy="76" r="0.6" fill="#2a5fd0" opacity="0.55"/><circle cx="700" cy="84" r="0.6" fill="#2a5fd0" opacity="0.55"/><circle cx="700" cy="92" r="0.6" fill="#2a5fd0" opacity="0.55"/><circle cx="700" cy="99" r="0.6" fill="#2a5fd0" opacity="0.55"/><circle cx="700" cy="107" r="0.6" fill="#2a5fd0" opacity="0.55"/><circle cx="700" cy="114" r="0.6" fill="#2a5fd0" opacity="0.55"/><circle cx="700" cy="122" r="0.6" fill="#2a5fd0" opacity="0.55"/><circle cx="710" cy="8" r="0.6" fill="#2a5fd0" opacity="0.55"/><circle cx="710" cy="16" r="0.6" fill="#2a5fd0" opacity="0.55"/><circle cx="710" cy="23" r="0.6" fill="#2a5fd0" opacity="0.55"/><circle cx="710" cy="31" r="0.6" fill="#2a5fd0" opacity="0.55"/><circle cx="710" cy="38" r="0.6" fill="#2a5fd0" opacity="0.55"/><circle cx="710" cy="46" r="0.6" fill="#2a5fd0" opacity="0.55"/><circle cx="710" cy="54" r="0.6" fill="#2a5fd0" opacity="0.55"/><circle cx="710" cy="61" r="0.6" fill="#2a5fd0" opacity="0.55"/><circle cx="710" cy="69" r="0.6" fill="#2a5fd0" opacity="0.55"/><circle cx="710" cy="76" r="0.6" fill="#2a5fd0" opacity="0.55"/><circle cx="710" cy="84" r="0.6" fill="#2a5fd0" opacity="0.55"/><circle cx="710" cy="92" r="0.6" fill="#2a5fd0" opacity="0.55"/><circle cx="710" cy="99" r="0.6" fill="#2a5fd0" opacity="0.55"/><circle cx="710" cy="107" r="0.6" fill="#2a5fd0" opacity="0.55"/><circle cx="710" cy="114" r="0.6" fill="#2a5fd0" opacity="0.55"/><circle cx="710" cy="122" r="0.6" fill="#2a5fd0" opacity="0.55"/><circle cx="720" cy="8" r="0.6" fill="#2a5fd0" opacity="0.55"/><circle cx="720" cy="16" r="0.6" fill="#2a5fd0" opacity="0.55"/><circle cx="720" cy="23" r="0.6" fill="#2a5fd0" opacity="0.55"/><circle cx="720" cy="31" r="0.6" fill="#2a5fd0" opacity="0.55"/><circle cx="720" cy="38" r="0.6" fill="#2a5fd0" opacity="0.55"/><circle cx="720" cy="46" r="0.6" fill="#2a5fd0" opacity="0.55"/><circle cx="720" cy="54" r="0.6" fill="#2a5fd0" opacity="0.55"/><circle cx="720" cy="61" r="0.6" fill="#2a5fd0" opacity="0.55"/><circle cx="720" cy="69" r="0.6" fill="#2a5fd0" opacity="0.55"/><circle cx="720" cy="76" r="0.6" fill="#2a5fd0" opacity="0.55"/><circle cx="720" cy="84" r="0.6" fill="#2a5fd0" opacity="0.55"/><circle cx="720" cy="92" r="0.6" fill="#2a5fd0" opacity="0.55"/><circle cx="720" cy="99" r="0.6" fill="#2a5fd0" opacity="0.55"/><circle cx="720" cy="107" r="0.6" fill="#2a5fd0" opacity="0.55"/><circle cx="720" cy="114" r="0.6" fill="#2a5fd0" opacity="0.55"/><circle cx="720" cy="122" r="0.6" fill="#2a5fd0" opacity="0.55"/><rect x="35" y="41" width="200" height="12" fill="#ffffff" opacity="0.95"/><rect x="35" y="90" width="250" height="5" fill="#dfe6f5" opacity="0.75"/><circle cx="47" cy="118" r="3.5" fill="#dfe6f5" opacity="0.8"/><rect x="70" y="115" width="300" height="5" fill="#dfe6f5" opacity="0.75"/><circle cx="47" cy="150" r="3.5" fill="#dfe6f5" opacity="0.8"/><rect x="70" y="147" width="300" height="5" fill="#dfe6f5" opacity="0.75"/><circle cx="47" cy="178" r="3.5" fill="#dfe6f5" opacity="0.8"/><rect x="70" y="175" width="280" height="5" fill="#dfe6f5" opacity="0.75"/><rect x="70" y="130" width="290" height="5" fill="#dfe6f5" opacity="0.6"/><rect x="70" y="142" width="160" height="5" fill="#dfe6f5" opacity="0.6"/><rect x="70" y="190" width="120" height="5" fill="#dfe6f5" opacity="0.6"/><rect x="35" y="208" width="300" height="5" fill="#dfe6f5" opacity="0.75"/><rect x="35" y="222" width="100" height="5" fill="#dfe6f5" opacity="0.75"/><rect x="452" y="130" width="262" height="262" fill="#d8dcdf"/><path d="M452 330 L714 230 L714 392 L452 392z" fill="#6a5a52" opacity="0.55"/><rect x="475" y="230" width="120" height="95" fill="#2a2c30" transform="rotate(-22 535 280)"/><rect x="490" y="245" width="90" height="65" fill="#eef0f2" transform="rotate(-22 535 280)"/><rect x="600" y="195" width="75" height="75" fill="#3a3c40" transform="rotate(-22 635 235)"/><circle cx="655" cy="345" r="32" fill="#f4f4f4"/><circle cx="655" cy="345" r="16" fill="#1a1a1a"/><circle cx="480" cy="150" r="12" fill="#e8c050"/><circle cx="600" cy="150" r="9" fill="#d04a3a"/><rect x="470" y="340" width="50" height="40" fill="#f0f0f0"/></g></svg>
<div style="position:absolute;left:13.80px;top:420.56px;font-size:8.172px;line-height:1;font-weight:400;color:#3c4043;white-space:pre;transform-origin:left top;transform:scaleX(0.93);-webkit-text-stroke:0.06px #3c4043;">7</div>
<div style="position:absolute;left:24.30px;top:475.41px;width:85.40px;height:49.00px;border:1px solid #d3d6da;border-radius:6px;background:#fff;"></div>
<svg style="position:absolute;left:26.2px;top:477.11px" width="81.2" height="45.6" viewBox="0 0 720 405" preserveAspectRatio="none"><defs><clipPath id="tc8"><rect width="720" height="405" rx="36"/></clipPath></defs><g clip-path="url(#tc8)"><rect width="720" height="405" fill="#ffffff"/><rect x="24" y="105" width="287" height="185" fill="#8ea4b8"/><rect x="24" y="105" width="287" height="70" fill="#b4c6d4"/><rect x="75" y="105" width="10" height="185" fill="#5a6a7a"/><rect x="190" y="105" width="10" height="185" fill="#6a7a8a"/><ellipse cx="120" cy="215" rx="42" ry="50" fill="#dfe2e4"/><circle cx="115" cy="150" r="18" fill="#5a4a40"/><rect x="30" y="235" width="32" height="55" fill="#2a2a30"/><rect x="205" y="205" width="90" height="50" fill="#d0dae2"/><circle cx="235" cy="165" r="16" fill="#4a5a6a"/><rect x="345" y="48" width="200" height="10" fill="#3a3f4a" opacity="0.9"/><rect x="345" y="110" width="190" height="5" fill="#9aa0a8" opacity="0.6"/><circle cx="362" cy="138" r="3.5" fill="#7a808a" opacity="0.6"/><rect x="380" y="135" width="250" height="5" fill="#9aa0a8" opacity="0.55"/><circle cx="362" cy="165" r="3.5" fill="#7a808a" opacity="0.6"/><rect x="380" y="162" width="250" height="5" fill="#9aa0a8" opacity="0.55"/><circle cx="362" cy="192" r="3.5" fill="#7a808a" opacity="0.6"/><rect x="380" y="189" width="250" height="5" fill="#9aa0a8" opacity="0.55"/><rect x="380" y="150" width="180" height="5" fill="#9aa0a8" opacity="0.5"/><rect x="380" y="178" width="120" height="5" fill="#9aa0a8" opacity="0.5"/><rect x="380" y="205" width="200" height="5" fill="#9aa0a8" opacity="0.5"/><rect x="345" y="232" width="270" height="5" fill="#9aa0a8" opacity="0.6"/></g></svg>
<div style="position:absolute;left:13.80px;top:477.69px;font-size:8.172px;line-height:1;font-weight:400;color:#3c4043;white-space:pre;transform-origin:left top;transform:scaleX(0.93);-webkit-text-stroke:0.06px #3c4043;">8</div>
<div style="position:absolute;left:0.00px;top:508.80px;width:125.00px;height:40.00px;background:#f9fbfd;"></div>
<svg style="position:absolute;left:14.40px;top:522.50px;" width="11" height="11" viewBox="0 0 24 24"><path fill="#444746" d="M3 3v8h8V3H3zm6 6H5V5h4v4zm-6 4v8h8v-8H3zm6 6H5v-4h4v4zm4-16v8h8V3h-8zm6 6h-4V5h4v4zm-6 4v8h8v-8h-8zm6 6h-4v-4h4v4z"/></svg>
<svg style="position:absolute;left:41.70px;top:522.50px;" width="11" height="11" viewBox="0 0 24 24"><path fill="#444746" d="M15.41 7.41L14 6l-6 6 6 6 1.41-1.41L10.83 12z"/></svg>
<div style="position:absolute;left:195.70px;top:84.60px;width:721.00px;height:405.20px;background:#01287b;"></div>
<svg style="position:absolute;left:195.7px;top:84.6px" width="721" height="405.2"><g fill="#1d56c8" opacity="0.92"><circle cx="462.10" cy="0.50" r="0.30"/><circle cx="472.87" cy="0.50" r="0.30"/><circle cx="483.64" cy="0.50" r="0.36"/><circle cx="494.41" cy="0.50" r="0.47"/><circle cx="505.18" cy="0.50" r="0.54"/><circle cx="515.95" cy="0.50" r="0.57"/><circle cx="526.72" cy="0.50" r="0.57"/><circle cx="537.49" cy="0.50" r="0.57"/><circle cx="548.26" cy="0.50" r="0.57"/><circle cx="559.03" cy="0.50" r="0.55"/><circle cx="569.80" cy="0.50" r="0.48"/><circle cx="580.57" cy="0.50" r="0.36"/><circle cx="591.34" cy="0.50" r="0.30"/><circle cx="602.11" cy="0.50" r="0.30"/><circle cx="612.88" cy="0.50" r="0.30"/><circle cx="623.65" cy="0.50" r="0.30"/><circle cx="634.42" cy="0.50" r="0.30"/><circle cx="645.19" cy="0.50" r="0.30"/><circle cx="655.96" cy="0.50" r="0.30"/><circle cx="666.73" cy="0.50" r="0.30"/><circle cx="677.50" cy="0.50" r="0.30"/><circle cx="688.27" cy="0.50" r="0.30"/><circle cx="699.04" cy="0.50" r="0.30"/><circle cx="709.81" cy="0.50" r="0.34"/><circle cx="720.58" cy="0.50" r="0.37"/><circle cx="462.10" cy="8.16" r="0.33"/><circle cx="472.87" cy="8.16" r="0.54"/><circle cx="483.64" cy="8.16" r="0.71"/><circle cx="494.41" cy="8.16" r="0.84"/><circle cx="505.18" cy="8.16" r="0.92"/><circle cx="515.95" cy="8.16" r="0.95"/><circle cx="526.72" cy="8.16" r="0.95"/><circle cx="537.49" cy="8.16" r="0.95"/><circle cx="548.26" cy="8.16" r="0.95"/><circle cx="559.03" cy="8.16" r="0.92"/><circle cx="569.80" cy="8.16" r="0.84"/><circle cx="580.57" cy="8.16" r="0.71"/><circle cx="591.34" cy="8.16" r="0.54"/><circle cx="602.11" cy="8.16" r="0.34"/><circle cx="612.88" cy="8.16" r="0.30"/><circle cx="623.65" cy="8.16" r="0.30"/><circle cx="634.42" cy="8.16" r="0.30"/><circle cx="645.19" cy="8.16" r="0.30"/><circle cx="655.96" cy="8.16" r="0.30"/><circle cx="666.73" cy="8.16" r="0.30"/><circle cx="677.50" cy="8.16" r="0.34"/><circle cx="688.27" cy="8.16" r="0.51"/><circle cx="699.04" cy="8.16" r="0.64"/><circle cx="709.81" cy="8.16" r="0.72"/><circle cx="720.58" cy="8.16" r="0.75"/><circle cx="462.10" cy="15.82" r="0.63"/><circle cx="472.87" cy="15.82" r="0.86"/><circle cx="483.64" cy="15.82" r="1.05"/><circle cx="494.41" cy="15.82" r="1.20"/><circle cx="505.18" cy="15.82" r="1.30"/><circle cx="515.95" cy="15.82" r="1.33"/><circle cx="526.72" cy="15.82" r="1.33"/><circle cx="537.49" cy="15.82" r="1.33"/><circle cx="548.26" cy="15.82" r="1.33"/><circle cx="559.03" cy="15.82" r="1.30"/><circle cx="569.80" cy="15.82" r="1.21"/><circle cx="580.57" cy="15.82" r="1.06"/><circle cx="591.34" cy="15.82" r="0.87"/><circle cx="602.11" cy="15.82" r="0.64"/><circle cx="612.88" cy="15.82" r="0.38"/><circle cx="623.65" cy="15.82" r="0.30"/><circle cx="634.42" cy="15.82" r="0.30"/><circle cx="645.19" cy="15.82" r="0.30"/><circle cx="655.96" cy="15.82" r="0.30"/><circle cx="666.73" cy="15.82" r="0.43"/><circle cx="677.50" cy="15.82" r="0.66"/><circle cx="688.27" cy="15.82" r="0.85"/><circle cx="699.04" cy="15.82" r="1.00"/><circle cx="709.81" cy="15.82" r="1.09"/><circle cx="720.58" cy="15.82" r="1.13"/><circle cx="462.10" cy="23.48" r="0.91"/><circle cx="472.87" cy="23.48" r="1.17"/><circle cx="483.64" cy="23.48" r="1.39"/><circle cx="494.41" cy="23.48" r="1.56"/><circle cx="505.18" cy="23.48" r="1.67"/><circle cx="515.95" cy="23.48" r="1.71"/><circle cx="526.72" cy="23.48" r="1.71"/><circle cx="537.49" cy="23.48" r="1.71"/><circle cx="548.26" cy="23.48" r="1.71"/><circle cx="559.03" cy="23.48" r="1.67"/><circle cx="569.80" cy="23.48" r="1.56"/><circle cx="580.57" cy="23.48" r="1.39"/><circle cx="591.34" cy="23.48" r="1.17"/><circle cx="602.11" cy="23.48" r="0.92"/><circle cx="612.88" cy="23.48" r="0.64"/><circle cx="623.65" cy="23.48" r="0.40"/><circle cx="634.42" cy="23.48" r="0.40"/><circle cx="645.19" cy="23.48" r="0.40"/><circle cx="655.96" cy="23.48" r="0.43"/><circle cx="666.73" cy="23.48" r="0.71"/><circle cx="677.50" cy="23.48" r="0.96"/><circle cx="688.27" cy="23.48" r="1.18"/><circle cx="699.04" cy="23.48" r="1.36"/><circle cx="709.81" cy="23.48" r="1.47"/><circle cx="720.58" cy="23.48" r="1.51"/><circle cx="462.10" cy="31.14" r="1.16"/><circle cx="472.87" cy="31.14" r="1.45"/><circle cx="483.64" cy="31.14" r="1.70"/><circle cx="494.41" cy="31.14" r="1.90"/><circle cx="505.18" cy="31.14" r="2.04"/><circle cx="515.95" cy="31.14" r="2.09"/><circle cx="526.72" cy="31.14" r="2.09"/><circle cx="537.49" cy="31.14" r="2.09"/><circle cx="548.26" cy="31.14" r="2.09"/><circle cx="559.03" cy="31.14" r="2.04"/><circle cx="569.80" cy="31.14" r="1.91"/><circle cx="580.57" cy="31.14" r="1.71"/><circle cx="591.34" cy="31.14" r="1.46"/><circle cx="602.11" cy="31.14" r="1.17"/><circle cx="612.88" cy="31.14" r="1.90"/><circle cx="623.65" cy="31.14" r="1.90"/><circle cx="634.42" cy="31.14" r="1.90"/><circle cx="645.19" cy="31.14" r="1.90"/><circle cx="655.96" cy="31.14" r="1.90"/><circle cx="666.73" cy="31.14" r="1.90"/><circle cx="677.50" cy="31.14" r="1.90"/><circle cx="688.27" cy="31.14" r="1.90"/><circle cx="699.04" cy="31.14" r="1.90"/><circle cx="709.81" cy="31.14" r="1.90"/><circle cx="720.58" cy="31.14" r="1.89"/><circle cx="462.10" cy="38.80" r="1.38"/><circle cx="472.87" cy="38.80" r="1.70"/><circle cx="483.64" cy="38.80" r="1.99"/><circle cx="494.41" cy="38.80" r="2.23"/><circle cx="505.18" cy="38.80" r="2.40"/><circle cx="515.95" cy="38.80" r="2.47"/><circle cx="526.72" cy="38.80" r="2.47"/><circle cx="537.49" cy="38.80" r="2.47"/><circle cx="548.26" cy="38.80" r="2.47"/><circle cx="559.03" cy="38.80" r="2.41"/><circle cx="569.80" cy="38.80" r="2.24"/><circle cx="580.57" cy="38.80" r="2.00"/><circle cx="591.34" cy="38.80" r="1.71"/><circle cx="602.11" cy="38.80" r="1.39"/><circle cx="612.88" cy="38.80" r="1.06"/><circle cx="623.65" cy="38.80" r="0.71"/><circle cx="634.42" cy="38.80" r="0.64"/><circle cx="645.19" cy="38.80" r="0.64"/><circle cx="655.96" cy="38.80" r="0.84"/><circle cx="666.73" cy="38.80" r="1.18"/><circle cx="677.50" cy="38.80" r="1.49"/><circle cx="688.27" cy="38.80" r="1.78"/><circle cx="699.04" cy="38.80" r="2.03"/><circle cx="709.81" cy="38.80" r="2.20"/><circle cx="720.58" cy="38.80" r="2.27"/><circle cx="462.10" cy="46.46" r="1.55"/><circle cx="472.87" cy="46.46" r="1.89"/><circle cx="483.64" cy="46.46" r="2.22"/><circle cx="494.41" cy="46.46" r="2.52"/><circle cx="505.18" cy="46.46" r="2.75"/><circle cx="515.95" cy="46.46" r="2.85"/><circle cx="526.72" cy="46.46" r="2.85"/><circle cx="537.49" cy="46.46" r="2.85"/><circle cx="548.26" cy="46.46" r="2.85"/><circle cx="559.03" cy="46.46" r="2.76"/><circle cx="569.80" cy="46.46" r="2.53"/><circle cx="580.57" cy="46.46" r="2.24"/><circle cx="591.34" cy="46.46" r="1.91"/><circle cx="602.11" cy="46.46" r="1.56"/><circle cx="612.88" cy="46.46" r="1.20"/><circle cx="623.65" cy="46.46" r="0.84"/><circle cx="634.42" cy="46.46" r="0.76"/><circle cx="645.19" cy="46.46" r="0.76"/><circle cx="655.96" cy="46.46" r="0.99"/><circle cx="666.73" cy="46.46" r="1.34"/><circle cx="677.50" cy="46.46" r="1.69"/><circle cx="688.27" cy="46.46" r="2.02"/><circle cx="699.04" cy="46.46" r="2.32"/><circle cx="709.81" cy="46.46" r="2.55"/><circle cx="720.58" cy="46.46" r="2.65"/><circle cx="462.10" cy="54.12" r="1.65"/><circle cx="472.87" cy="54.12" r="2.02"/><circle cx="483.64" cy="54.12" r="2.39"/><circle cx="494.41" cy="54.12" r="2.74"/><circle cx="505.18" cy="54.12" r="3.06"/><circle cx="515.95" cy="54.12" r="3.23"/><circle cx="526.72" cy="54.12" r="3.23"/><circle cx="537.49" cy="54.12" r="3.23"/><circle cx="548.26" cy="54.12" r="3.23"/><circle cx="559.03" cy="54.12" r="3.07"/><circle cx="569.80" cy="54.12" r="2.76"/><circle cx="580.57" cy="54.12" r="2.40"/><circle cx="591.34" cy="54.12" r="2.04"/><circle cx="602.11" cy="54.12" r="1.67"/><circle cx="612.88" cy="54.12" r="1.29"/><circle cx="623.65" cy="54.12" r="0.92"/><circle cx="634.42" cy="54.12" r="0.88"/><circle cx="645.19" cy="54.12" r="0.88"/><circle cx="655.96" cy="54.12" r="1.08"/><circle cx="666.73" cy="54.12" r="1.45"/><circle cx="677.50" cy="54.12" r="1.82"/><circle cx="688.27" cy="54.12" r="2.19"/><circle cx="699.04" cy="54.12" r="2.54"/><circle cx="709.81" cy="54.12" r="2.86"/><circle cx="720.58" cy="54.12" r="3.03"/><circle cx="462.10" cy="61.78" r="1.69"/><circle cx="472.87" cy="61.78" r="2.07"/><circle cx="483.64" cy="61.78" r="2.45"/><circle cx="494.41" cy="61.78" r="2.83"/><circle cx="505.18" cy="61.78" r="3.21"/><circle cx="515.95" cy="61.78" r="3.58"/><circle cx="526.72" cy="61.78" r="3.59"/><circle cx="537.49" cy="61.78" r="3.59"/><circle cx="548.26" cy="61.78" r="3.59"/><circle cx="559.03" cy="61.78" r="3.22"/><circle cx="569.80" cy="61.78" r="2.84"/><circle cx="580.57" cy="61.78" r="2.46"/><circle cx="591.34" cy="61.78" r="2.08"/><circle cx="602.11" cy="61.78" r="1.70"/><circle cx="612.88" cy="61.78" r="1.32"/><circle cx="623.65" cy="61.78" r="1.00"/><circle cx="634.42" cy="61.78" r="1.00"/><circle cx="645.19" cy="61.78" r="1.00"/><circle cx="655.96" cy="61.78" r="1.11"/><circle cx="666.73" cy="61.78" r="1.49"/><circle cx="677.50" cy="61.78" r="1.87"/><circle cx="688.27" cy="61.78" r="2.25"/><circle cx="699.04" cy="61.78" r="2.63"/><circle cx="709.81" cy="61.78" r="3.01"/><circle cx="720.58" cy="61.78" r="3.38"/><circle cx="462.10" cy="69.44" r="1.65"/><circle cx="472.87" cy="69.44" r="2.02"/><circle cx="483.64" cy="69.44" r="2.38"/><circle cx="494.41" cy="69.44" r="2.74"/><circle cx="505.18" cy="69.44" r="3.05"/><circle cx="515.95" cy="69.44" r="3.21"/><circle cx="526.72" cy="69.44" r="3.21"/><circle cx="537.49" cy="69.44" r="3.21"/><circle cx="548.26" cy="69.44" r="3.21"/><circle cx="559.03" cy="69.44" r="3.06"/><circle cx="569.80" cy="69.44" r="2.75"/><circle cx="580.57" cy="69.44" r="2.40"/><circle cx="591.34" cy="69.44" r="2.03"/><circle cx="602.11" cy="69.44" r="1.66"/><circle cx="612.88" cy="69.44" r="1.29"/><circle cx="623.65" cy="69.44" r="0.91"/><circle cx="634.42" cy="69.44" r="0.88"/><circle cx="645.19" cy="69.44" r="0.88"/><circle cx="655.96" cy="69.44" r="1.07"/><circle cx="666.73" cy="69.44" r="1.45"/><circle cx="677.50" cy="69.44" r="1.82"/><circle cx="688.27" cy="69.44" r="2.18"/><circle cx="699.04" cy="69.44" r="2.53"/><circle cx="709.81" cy="69.44" r="2.85"/><circle cx="720.58" cy="69.44" r="3.01"/><circle cx="462.10" cy="77.10" r="1.54"/><circle cx="472.87" cy="77.10" r="1.89"/><circle cx="483.64" cy="77.10" r="2.21"/><circle cx="494.41" cy="77.10" r="2.51"/><circle cx="505.18" cy="77.10" r="2.74"/><circle cx="515.95" cy="77.10" r="2.83"/><circle cx="526.72" cy="77.10" r="2.83"/><circle cx="537.49" cy="77.10" r="2.83"/><circle cx="548.26" cy="77.10" r="2.83"/><circle cx="559.03" cy="77.10" r="2.74"/><circle cx="569.80" cy="77.10" r="2.52"/><circle cx="580.57" cy="77.10" r="2.23"/><circle cx="591.34" cy="77.10" r="1.90"/><circle cx="602.11" cy="77.10" r="1.55"/><circle cx="612.88" cy="77.10" r="1.20"/><circle cx="623.65" cy="77.10" r="0.83"/><circle cx="634.42" cy="77.10" r="0.76"/><circle cx="645.19" cy="77.10" r="0.76"/><circle cx="655.96" cy="77.10" r="0.98"/><circle cx="666.73" cy="77.10" r="1.34"/><circle cx="677.50" cy="77.10" r="1.68"/><circle cx="688.27" cy="77.10" r="2.01"/><circle cx="699.04" cy="77.10" r="2.31"/><circle cx="709.81" cy="77.10" r="2.54"/><circle cx="720.58" cy="77.10" r="2.63"/><circle cx="462.10" cy="84.76" r="1.37"/><circle cx="472.87" cy="84.76" r="1.68"/><circle cx="483.64" cy="84.76" r="1.97"/><circle cx="494.41" cy="84.76" r="2.22"/><circle cx="505.18" cy="84.76" r="2.39"/><circle cx="515.95" cy="84.76" r="2.45"/><circle cx="526.72" cy="84.76" r="2.45"/><circle cx="537.49" cy="84.76" r="2.45"/><circle cx="548.26" cy="84.76" r="2.45"/><circle cx="559.03" cy="84.76" r="2.39"/><circle cx="569.80" cy="84.76" r="2.22"/><circle cx="580.57" cy="84.76" r="1.98"/><circle cx="591.34" cy="84.76" r="1.70"/><circle cx="602.11" cy="84.76" r="1.38"/><circle cx="612.88" cy="84.76" r="1.05"/><circle cx="623.65" cy="84.76" r="0.70"/><circle cx="634.42" cy="84.76" r="0.64"/><circle cx="645.19" cy="84.76" r="0.64"/><circle cx="655.96" cy="84.76" r="0.83"/><circle cx="666.73" cy="84.76" r="1.17"/><circle cx="677.50" cy="84.76" r="1.48"/><circle cx="688.27" cy="84.76" r="1.77"/><circle cx="699.04" cy="84.76" r="2.01"/><circle cx="709.81" cy="84.76" r="2.19"/><circle cx="720.58" cy="84.76" r="2.25"/><circle cx="462.10" cy="92.42" r="1.15"/><circle cx="472.87" cy="92.42" r="1.44"/><circle cx="483.64" cy="92.42" r="1.69"/><circle cx="494.41" cy="92.42" r="1.89"/><circle cx="505.18" cy="92.42" r="2.02"/><circle cx="515.95" cy="92.42" r="2.07"/><circle cx="526.72" cy="92.42" r="2.07"/><circle cx="537.49" cy="92.42" r="2.07"/><circle cx="548.26" cy="92.42" r="2.07"/><circle cx="559.03" cy="92.42" r="2.02"/><circle cx="569.80" cy="92.42" r="1.89"/><circle cx="580.57" cy="92.42" r="1.69"/><circle cx="591.34" cy="92.42" r="1.45"/><circle cx="602.11" cy="92.42" r="1.16"/><circle cx="612.88" cy="92.42" r="1.90"/><circle cx="623.65" cy="92.42" r="1.90"/><circle cx="634.42" cy="92.42" r="1.90"/><circle cx="645.19" cy="92.42" r="1.90"/><circle cx="655.96" cy="92.42" r="1.90"/><circle cx="666.73" cy="92.42" r="1.90"/><circle cx="677.50" cy="92.42" r="1.90"/><circle cx="688.27" cy="92.42" r="1.90"/><circle cx="699.04" cy="92.42" r="1.90"/><circle cx="709.81" cy="92.42" r="1.90"/><circle cx="720.58" cy="92.42" r="1.87"/><circle cx="462.10" cy="100.08" r="0.90"/><circle cx="472.87" cy="100.08" r="1.15"/><circle cx="483.64" cy="100.08" r="1.37"/><circle cx="494.41" cy="100.08" r="1.54"/><circle cx="505.18" cy="100.08" r="1.65"/><circle cx="515.95" cy="100.08" r="1.69"/><circle cx="526.72" cy="100.08" r="1.69"/><circle cx="537.49" cy="100.08" r="1.69"/><circle cx="548.26" cy="100.08" r="1.69"/><circle cx="559.03" cy="100.08" r="1.65"/><circle cx="569.80" cy="100.08" r="1.55"/><circle cx="580.57" cy="100.08" r="1.38"/><circle cx="591.34" cy="100.08" r="1.16"/><circle cx="602.11" cy="100.08" r="0.91"/><circle cx="612.88" cy="100.08" r="0.63"/><circle cx="623.65" cy="100.08" r="0.40"/><circle cx="634.42" cy="100.08" r="0.40"/><circle cx="645.19" cy="100.08" r="0.40"/><circle cx="655.96" cy="100.08" r="0.42"/><circle cx="666.73" cy="100.08" r="0.70"/><circle cx="677.50" cy="100.08" r="0.95"/><circle cx="688.27" cy="100.08" r="1.17"/><circle cx="699.04" cy="100.08" r="1.34"/><circle cx="709.81" cy="100.08" r="1.45"/><circle cx="720.58" cy="100.08" r="1.49"/><circle cx="462.10" cy="107.74" r="0.62"/><circle cx="472.87" cy="107.74" r="0.85"/><circle cx="483.64" cy="107.74" r="1.04"/><circle cx="494.41" cy="107.74" r="1.18"/><circle cx="505.18" cy="107.74" r="1.28"/><circle cx="515.95" cy="107.74" r="1.31"/><circle cx="526.72" cy="107.74" r="1.31"/><circle cx="537.49" cy="107.74" r="1.31"/><circle cx="548.26" cy="107.74" r="1.31"/><circle cx="559.03" cy="107.74" r="1.28"/><circle cx="569.80" cy="107.74" r="1.19"/><circle cx="580.57" cy="107.74" r="1.04"/><circle cx="591.34" cy="107.74" r="0.85"/><circle cx="602.11" cy="107.74" r="0.63"/><circle cx="612.88" cy="107.74" r="0.37"/><circle cx="623.65" cy="107.74" r="0.30"/><circle cx="634.42" cy="107.74" r="0.30"/><circle cx="645.19" cy="107.74" r="0.30"/><circle cx="655.96" cy="107.74" r="0.30"/><circle cx="666.73" cy="107.74" r="0.42"/><circle cx="677.50" cy="107.74" r="0.64"/><circle cx="688.27" cy="107.74" r="0.84"/><circle cx="699.04" cy="107.74" r="0.98"/><circle cx="709.81" cy="107.74" r="1.08"/><circle cx="720.58" cy="107.74" r="1.11"/><circle cx="462.10" cy="115.40" r="0.32"/><circle cx="472.87" cy="115.40" r="0.52"/><circle cx="483.64" cy="115.40" r="0.69"/><circle cx="494.41" cy="115.40" r="0.82"/><circle cx="505.18" cy="115.40" r="0.90"/><circle cx="515.95" cy="115.40" r="0.93"/><circle cx="526.72" cy="115.40" r="0.93"/><circle cx="537.49" cy="115.40" r="0.93"/><circle cx="548.26" cy="115.40" r="0.93"/><circle cx="559.03" cy="115.40" r="0.90"/><circle cx="569.80" cy="115.40" r="0.83"/><circle cx="580.57" cy="115.40" r="0.70"/><circle cx="591.34" cy="115.40" r="0.53"/><circle cx="602.11" cy="115.40" r="0.32"/><circle cx="612.88" cy="115.40" r="0.30"/><circle cx="623.65" cy="115.40" r="0.30"/><circle cx="634.42" cy="115.40" r="0.30"/><circle cx="645.19" cy="115.40" r="0.30"/><circle cx="655.96" cy="115.40" r="0.30"/><circle cx="666.73" cy="115.40" r="0.30"/><circle cx="677.50" cy="115.40" r="0.32"/><circle cx="688.27" cy="115.40" r="0.49"/><circle cx="699.04" cy="115.40" r="0.62"/><circle cx="709.81" cy="115.40" r="0.70"/><circle cx="720.58" cy="115.40" r="0.73"/><circle cx="462.10" cy="123.06" r="0.30"/><circle cx="472.87" cy="123.06" r="0.30"/><circle cx="483.64" cy="123.06" r="0.34"/><circle cx="494.41" cy="123.06" r="0.45"/><circle cx="505.18" cy="123.06" r="0.53"/><circle cx="515.95" cy="123.06" r="0.55"/><circle cx="526.72" cy="123.06" r="0.55"/><circle cx="537.49" cy="123.06" r="0.55"/><circle cx="548.26" cy="123.06" r="0.55"/><circle cx="559.03" cy="123.06" r="0.53"/><circle cx="569.80" cy="123.06" r="0.46"/><circle cx="580.57" cy="123.06" r="0.35"/><circle cx="591.34" cy="123.06" r="0.30"/><circle cx="602.11" cy="123.06" r="0.30"/><circle cx="612.88" cy="123.06" r="0.30"/><circle cx="623.65" cy="123.06" r="0.30"/><circle cx="634.42" cy="123.06" r="0.30"/><circle cx="645.19" cy="123.06" r="0.30"/><circle cx="655.96" cy="123.06" r="0.30"/><circle cx="666.73" cy="123.06" r="0.30"/><circle cx="677.50" cy="123.06" r="0.30"/><circle cx="688.27" cy="123.06" r="0.30"/><circle cx="699.04" cy="123.06" r="0.30"/><circle cx="709.81" cy="123.06" r="0.33"/><circle cx="720.58" cy="123.06" r="0.35"/></g></svg>
<svg style="position:absolute;left:916.5px;top:84.6px" width="70" height="140"><g fill="#1548c2"><circle cx="10.55" cy="0.50" r="0.32"/><circle cx="21.32" cy="0.50" r="0.30"/><circle cx="32.09" cy="0.50" r="0.30"/><circle cx="42.86" cy="0.50" r="0.30"/><circle cx="53.63" cy="0.50" r="0.30"/><circle cx="10.55" cy="8.16" r="0.70"/><circle cx="21.32" cy="8.16" r="0.54"/><circle cx="32.09" cy="8.16" r="0.30"/><circle cx="42.86" cy="8.16" r="0.30"/><circle cx="53.63" cy="8.16" r="0.30"/><circle cx="10.55" cy="15.82" r="1.07"/><circle cx="21.32" cy="15.82" r="0.88"/><circle cx="32.09" cy="15.82" r="0.60"/><circle cx="42.86" cy="15.82" r="0.30"/><circle cx="53.63" cy="15.82" r="0.30"/><circle cx="10.55" cy="23.48" r="1.44"/><circle cx="21.32" cy="23.48" r="1.22"/><circle cx="32.09" cy="23.48" r="0.90"/><circle cx="42.86" cy="23.48" r="0.51"/><circle cx="53.63" cy="23.48" r="0.30"/><circle cx="10.55" cy="31.14" r="1.80"/><circle cx="21.32" cy="31.14" r="1.54"/><circle cx="32.09" cy="31.14" r="1.18"/><circle cx="42.86" cy="31.14" r="0.75"/><circle cx="53.63" cy="31.14" r="0.30"/><circle cx="10.55" cy="38.80" r="2.15"/><circle cx="21.32" cy="38.80" r="1.84"/><circle cx="32.09" cy="38.80" r="1.41"/><circle cx="42.86" cy="38.80" r="0.94"/><circle cx="53.63" cy="38.80" r="0.44"/><circle cx="10.55" cy="46.46" r="2.48"/><circle cx="21.32" cy="46.46" r="2.08"/><circle cx="32.09" cy="46.46" r="1.60"/><circle cx="42.86" cy="46.46" r="1.09"/><circle cx="53.63" cy="46.46" r="0.57"/><circle cx="10.55" cy="54.12" r="2.75"/><circle cx="21.32" cy="54.12" r="2.26"/><circle cx="32.09" cy="54.12" r="1.73"/><circle cx="42.86" cy="54.12" r="1.19"/><circle cx="53.63" cy="54.12" r="0.64"/><circle cx="10.55" cy="61.78" r="2.87"/><circle cx="21.32" cy="61.78" r="2.32"/><circle cx="32.09" cy="61.78" r="1.77"/><circle cx="42.86" cy="61.78" r="1.22"/><circle cx="53.63" cy="61.78" r="0.67"/><circle cx="10.55" cy="69.44" r="2.74"/><circle cx="21.32" cy="69.44" r="2.25"/><circle cx="32.09" cy="69.44" r="1.72"/><circle cx="42.86" cy="69.44" r="1.18"/><circle cx="53.63" cy="69.44" r="0.64"/><circle cx="10.55" cy="77.10" r="2.47"/><circle cx="21.32" cy="77.10" r="2.07"/><circle cx="32.09" cy="77.10" r="1.60"/><circle cx="42.86" cy="77.10" r="1.09"/><circle cx="53.63" cy="77.10" r="0.56"/><circle cx="10.55" cy="84.76" r="2.13"/><circle cx="21.32" cy="84.76" r="1.82"/><circle cx="32.09" cy="84.76" r="1.40"/><circle cx="42.86" cy="84.76" r="0.93"/><circle cx="53.63" cy="84.76" r="0.43"/><circle cx="10.55" cy="92.42" r="1.78"/><circle cx="21.32" cy="92.42" r="1.53"/><circle cx="32.09" cy="92.42" r="1.16"/><circle cx="42.86" cy="92.42" r="0.74"/><circle cx="53.63" cy="92.42" r="0.30"/><circle cx="10.55" cy="100.08" r="1.42"/><circle cx="21.32" cy="100.08" r="1.21"/><circle cx="32.09" cy="100.08" r="0.89"/><circle cx="42.86" cy="100.08" r="0.50"/><circle cx="53.63" cy="100.08" r="0.30"/><circle cx="10.55" cy="107.74" r="1.05"/><circle cx="21.32" cy="107.74" r="0.87"/><circle cx="32.09" cy="107.74" r="0.59"/><circle cx="42.86" cy="107.74" r="0.30"/><circle cx="53.63" cy="107.74" r="0.30"/><circle cx="10.55" cy="115.40" r="0.68"/><circle cx="21.32" cy="115.40" r="0.52"/><circle cx="32.09" cy="115.40" r="0.30"/><circle cx="42.86" cy="115.40" r="0.30"/><circle cx="53.63" cy="115.40" r="0.30"/><circle cx="10.55" cy="123.06" r="0.31"/><circle cx="21.32" cy="123.06" r="0.30"/><circle cx="32.09" cy="123.06" r="0.30"/><circle cx="42.86" cy="123.06" r="0.30"/><circle cx="53.63" cy="123.06" r="0.30"/></g></svg>
<div style="position:absolute;left:223.50px;top:112.30px;width:389.80px;height:43.40px;border:1px solid #4f6e92;border-radius:1.5px;"></div>
<div style="position:absolute;right:469.70px;top:123.52px;font-size:19.000px;line-height:1;font-weight:700;color:#ffffff;white-space:pre;transform-origin:right top;">Introduction to Artificial Intelligence</div>
<div style="position:absolute;right:435.80px;top:176.25px;font-size:12.700px;line-height:1;font-weight:400;color:#e8ecf4;white-space:pre;transform-origin:right top;">Artificial Intelligence (AI) is the simulation of human intelligence</div>
<div style="position:absolute;right:484.40px;top:190.85px;font-size:12.700px;line-height:1;font-weight:400;color:#e8ecf4;white-space:pre;transform-origin:right top;">processes by machines, especially computer system- s.</div>
<div style="position:absolute;left:248.00px;top:222.20px;width:4.40px;height:4.40px;background:#fff;border-radius:50%;"></div>
<div style="position:absolute;left:248.00px;top:252.40px;width:4.40px;height:4.40px;background:#fff;border-radius:50%;"></div>
<div style="position:absolute;left:248.00px;top:282.50px;width:4.40px;height:4.40px;background:#fff;border-radius:50%;"></div>
<div style="position:absolute;left:272.20px;top:218.45px;font-size:12.700px;line-height:1;font-weight:400;color:#e8ecf4;white-space:pre;transform-origin:left top;">Core components</div>
<div style="position:absolute;right:492.80px;top:218.45px;font-size:12.700px;line-height:1;font-weight:400;color:#e8ecf4;white-space:pre;transform-origin:right top;">learning, reasoning, and</div>
<div style="position:absolute;left:272.20px;top:233.05px;font-size:12.700px;line-height:1;font-weight:400;color:#e8ecf4;white-space:pre;transform-origin:left top;">self-correction.</div>
<div style="position:absolute;left:272.20px;top:248.75px;font-size:12.700px;line-height:1;font-weight:400;color:#e8ecf4;white-space:pre;transform-origin:left top;">Considered a transformative technology due to its potential</div>
<div style="position:absolute;left:272.20px;top:263.85px;font-size:12.700px;line-height:1;font-weight:400;color:#e8ecf4;white-space:pre;transform-origin:left top;letter-spacing:-0.048px;">to revolutionize industries and solve complex problems.</div>
<div style="position:absolute;left:272.20px;top:278.85px;font-size:12.700px;line-height:1;font-weight:400;color:#e8ecf4;white-space:pre;transform-origin:left top;letter-spacing:-0.07px;">AI's capabilities range from simple automation to advanced</div>
<div style="position:absolute;left:272.20px;top:293.95px;font-size:12.700px;line-height:1;font-weight:400;color:#e8ecf4;white-space:pre;transform-origin:left top;letter-spacing:0.085px;">problem-solving, driving significant innovation.</div>
<svg style="position:absolute;left:647.3px;top:217px" width="259.4" height="259.2" viewBox="0 0 259 259" preserveAspectRatio="none"><defs><linearGradient id="ibg" x1="0" y1="0" x2="0" y2="1"><stop offset="0" stop-color="#081a33"/><stop offset="0.06" stop-color="#0b2850"/><stop offset="0.35" stop-color="#134a8a"/><stop offset="0.58" stop-color="#2b78c2"/><stop offset="0.76" stop-color="#7cbbea"/><stop offset="0.84" stop-color="#b4dbf4"/><stop offset="0.865" stop-color="#8fc2ea"/><stop offset="0.9" stop-color="#4f8cc8"/><stop offset="1" stop-color="#3a76b2"/></linearGradient><radialGradient id="iglow" cx="0.78" cy="0.62" r="0.45"><stop offset="0" stop-color="#a8d6f6" stop-opacity="0.8"/><stop offset="1" stop-color="#a8d6f6" stop-opacity="0"/></radialGradient><radialGradient id="ihead" cx="0.85" cy="0.7" r="0.8"><stop offset="0" stop-color="#a6cdee"/><stop offset="0.3" stop-color="#6fa6d8"/><stop offset="0.65" stop-color="#3a74b4"/><stop offset="1" stop-color="#1f4c86"/></radialGradient><linearGradient id="ifloor" x1="0" y1="0" x2="0" y2="1"><stop offset="0" stop-color="#6aaadc"/><stop offset="0.4" stop-color="#4a88c4"/><stop offset="1" stop-color="#2c5f9c"/></linearGradient><clipPath id="iclip"><rect width="259" height="259" rx="12"/></clipPath><clipPath id="hclip"><path d="M60 118 C56 70 92 36 128 37 C172 38 196 66 194 96 L195 109 L206 129 L206 132 L200 138 L201 149 L198 158 L195 171 C193 178 188 180 182 180 C170 181 160 178 154 176 C152 190 150 200 150 225 L88 225 C90 190 88 170 82 158 C66 146 61 132 60 118Z"/></clipPath></defs><g clip-path="url(#iclip)"><rect width="259" height="259" fill="url(#ibg)"/><rect width="259" height="259" fill="url(#iglow)"/><defs><radialGradient id="iorg"><stop offset="0" stop-color="#ffd0a0" stop-opacity="0.95"/><stop offset="0.4" stop-color="#f08a40" stop-opacity="0.6"/><stop offset="1" stop-color="#f08a40" stop-opacity="0"/></radialGradient><radialGradient id="iglow2" cx="0.85" cy="0.25" r="0.4"><stop offset="0" stop-color="#3a86d0" stop-opacity="0.55"/><stop offset="1" stop-color="#3a86d0" stop-opacity="0"/></radialGradient></defs><rect width="259" height="259" fill="url(#iglow2)"/><ellipse cx="9" cy="193" rx="20" ry="4" fill="url(#iorg)"/><ellipse cx="4" cy="123" rx="8" ry="3" fill="url(#iorg)"/><line x1="0" y1="14" x2="259" y2="14" stroke="#62b4f4" stroke-opacity="0.6" stroke-width="0.7"/><line x1="0" y1="40" x2="75" y2="40" stroke="#62b4f4" stroke-opacity="0.6" stroke-width="0.7"/><line x1="38" y1="14" x2="38" y2="60" stroke="#62b4f4" stroke-opacity="0.6" stroke-width="0.7"/><line x1="73.5" y1="14" x2="73.5" y2="45" stroke="#62b4f4" stroke-opacity="0.6" stroke-width="0.7"/><line x1="112.7" y1="14" x2="112.7" y2="40" stroke="#62b4f4" stroke-opacity="0.6" stroke-width="0.7"/><line x1="135" y1="17" x2="185" y2="17" stroke="#62b4f4" stroke-opacity="0.6" stroke-width="0.7"/><line x1="135" y1="36" x2="185" y2="36" stroke="#62b4f4" stroke-opacity="0.6" stroke-width="0.7"/><line x1="190" y1="17" x2="225" y2="17" stroke="#62b4f4" stroke-opacity="0.6" stroke-width="0.7"/><line x1="228" y1="14" x2="228" y2="60" stroke="#62b4f4" stroke-opacity="0.6" stroke-width="0.7"/><line x1="0" y1="78" x2="60" y2="78" stroke="#62b4f4" stroke-opacity="0.6" stroke-width="0.7"/><line x1="40" y1="60" x2="60" y2="78" stroke="#62b4f4" stroke-opacity="0.6" stroke-width="0.7"/><line x1="0" y1="90" x2="50" y2="90" stroke="#62b4f4" stroke-opacity="0.6" stroke-width="0.7"/><line x1="11" y1="91" x2="11" y2="119" stroke="#62b4f4" stroke-opacity="0.6" stroke-width="0.7"/><line x1="47" y1="91" x2="47" y2="119" stroke="#62b4f4" stroke-opacity="0.6" stroke-width="0.7"/><line x1="11" y1="119" x2="47" y2="119" stroke="#62b4f4" stroke-opacity="0.6" stroke-width="0.7"/><line x1="185" y1="45" x2="259" y2="45" stroke="#62b4f4" stroke-opacity="0.6" stroke-width="0.7"/><line x1="200" y1="70" x2="259" y2="70" stroke="#62b4f4" stroke-opacity="0.6" stroke-width="0.7"/><line x1="215" y1="105" x2="259" y2="105" stroke="#62b4f4" stroke-opacity="0.6" stroke-width="0.7"/><line x1="0" y1="125" x2="40" y2="125" stroke="#62b4f4" stroke-opacity="0.6" stroke-width="0.7"/><line x1="35" y1="130" x2="60" y2="130" stroke="#62b4f4" stroke-opacity="0.6" stroke-width="0.7"/><line x1="60" y1="130" x2="60" y2="170" stroke="#62b4f4" stroke-opacity="0.6" stroke-width="0.7"/><line x1="220" y1="130" x2="259" y2="130" stroke="#62b4f4" stroke-opacity="0.6" stroke-width="0.7"/><line x1="220" y1="172" x2="259" y2="172" stroke="#62b4f4" stroke-opacity="0.6" stroke-width="0.7"/><line x1="220" y1="130" x2="220" y2="172" stroke="#62b4f4" stroke-opacity="0.6" stroke-width="0.7"/><line x1="0" y1="160" x2="30" y2="160" stroke="#62b4f4" stroke-opacity="0.6" stroke-width="0.7"/><line x1="5" y1="185" x2="48" y2="185" stroke="#62b4f4" stroke-opacity="0.6" stroke-width="0.7"/><line x1="48" y1="185" x2="48" y2="210" stroke="#62b4f4" stroke-opacity="0.6" stroke-width="0.7"/><line x1="225" y1="180" x2="259" y2="180" stroke="#62b4f4" stroke-opacity="0.6" stroke-width="0.7"/><line x1="230" y1="205" x2="259" y2="205" stroke="#62b4f4" stroke-opacity="0.6" stroke-width="0.7"/><circle cx="38" cy="14" r="1" fill="#bfe4ff" opacity="0.9"/><circle cx="73.5" cy="14" r="1" fill="#bfe4ff" opacity="0.9"/><circle cx="112.7" cy="14" r="1" fill="#bfe4ff" opacity="0.9"/><circle cx="11" cy="91" r="1" fill="#bfe4ff" opacity="0.9"/><circle cx="47" cy="91" r="1" fill="#bfe4ff" opacity="0.9"/><circle cx="135" cy="17" r="1" fill="#bfe4ff" opacity="0.9"/><circle cx="185" cy="36" r="1" fill="#bfe4ff" opacity="0.9"/><circle cx="228" cy="60" r="1" fill="#bfe4ff" opacity="0.9"/><circle cx="60" cy="130" r="1" fill="#bfe4ff" opacity="0.9"/><circle cx="220" cy="130" r="1" fill="#bfe4ff" opacity="0.9"/><circle cx="48" cy="185" r="1" fill="#bfe4ff" opacity="0.9"/><path d="M6 31 Q10 22 14 30 Q17 35 20 28 Q23 24 25 30 T31 29" fill="none" stroke="#c8a080" stroke-width="1.1"/><polygon points="69.5,28.0 69.4,29.0 67.7,29.7 67.4,30.6 68.7,32.0 68.3,32.9 66.3,32.9 65.8,33.6 66.4,35.4 65.7,36.1 63.9,35.3 63.2,35.8 63.0,37.7 62.0,38.0 60.7,36.7 59.9,36.8 59.0,38.5 58.0,38.4 57.3,36.7 56.4,36.4 55.0,37.7 54.1,37.3 54.1,35.3 53.4,34.8 51.6,35.4 50.9,34.7 51.7,32.9 51.2,32.2 49.3,32.0 49.0,31.0 50.3,29.7 50.2,28.9 48.5,28.0 48.6,27.0 50.3,26.3 50.6,25.4 49.3,24.0 49.7,23.1 51.7,23.1 52.2,22.4 51.6,20.6 52.3,19.9 54.1,20.7 54.8,20.2 55.0,18.3 56.0,18.0 57.3,19.3 58.1,19.2 59.0,17.5 60.0,17.6 60.7,19.3 61.6,19.6 63.0,18.3 63.9,18.7 63.9,20.7 64.6,21.2 66.4,20.6 67.1,21.3 66.3,23.1 66.8,23.8 68.7,24.0 69.0,25.0 67.7,26.3 67.8,27.1" fill="#7f8a96"/><circle cx="59" cy="28" r="7.8" fill="#56626e"/><circle cx="59" cy="28" r="6.9" fill="#7f8a96" opacity="0.55"/><circle cx="59" cy="28" r="5.2" fill="#4a5866"/><path d="M78 31 L84 21 L90 31 L96 21 L100 30 L104 22 L108 31" fill="none" stroke="#e6f3ff" stroke-width="1.1"/><polygon points="53.0,46.0 52.9,47.0 51.7,47.7 51.4,48.5 51.6,49.9 50.9,50.6 49.5,50.4 48.7,50.7 48.0,51.9 47.0,52.0 46.1,51.0 45.3,50.7 44.0,51.2 43.1,50.6 43.1,49.2 42.6,48.5 41.4,48.1 41.1,47.0 42.0,46.0 42.0,45.1 41.4,43.9 41.8,43.0 43.1,42.8 43.8,42.1 44.0,40.8 44.9,40.4 46.1,41.0 47.0,41.0 48.0,40.1 49.1,40.4 49.5,41.6 50.2,42.1 51.6,42.1 52.2,43.0 51.7,44.3 52.0,45.1" fill="#a9d4f4"/><circle cx="47" cy="46" r="4.4" fill="#7ab6e6"/><circle cx="47" cy="46" r="4.0" fill="#a9d4f4" opacity="0.55"/><circle cx="47" cy="46" r="2.4" fill="#2a5a8a"/><polygon points="62.0,51.0 61.9,51.8 61.1,52.3 60.8,52.9 60.8,53.8 60.2,54.3 59.3,54.1 58.7,54.3 58.0,55.0 57.2,54.9 56.7,54.1 56.1,53.8 55.2,53.8 54.7,53.2 54.9,52.3 54.7,51.7 54.0,51.0 54.1,50.2 54.9,49.7 55.2,49.1 55.2,48.2 55.8,47.7 56.7,47.9 57.3,47.7 58.0,47.0 58.8,47.1 59.3,47.9 59.9,48.2 60.8,48.2 61.3,48.8 61.1,49.7 61.3,50.3" fill="#a9d4f4"/><circle cx="58" cy="51" r="3.0" fill="#7ab6e6"/><circle cx="58" cy="51" r="2.6" fill="#a9d4f4" opacity="0.55"/><circle cx="58" cy="51" r="1.6" fill="#2a5a8a"/><circle cx="13" cy="60" r="13" fill="none" stroke="#c8e0f4" stroke-width="1"/><circle cx="13" cy="60" r="9" fill="none" stroke="#c8e0f4" stroke-width="0.8"/><circle cx="13" cy="60" r="4" fill="none" stroke="#c8e0f4" stroke-width="0.8"/><polygon points="38.5,75.0 38.4,75.9 37.5,76.4 37.1,77.1 37.2,78.2 36.5,78.7 35.4,78.5 34.7,78.7 34.0,79.5 33.1,79.4 32.6,78.5 31.9,78.1 30.8,78.2 30.3,77.5 30.5,76.4 30.3,75.7 29.5,75.0 29.6,74.1 30.5,73.6 30.9,72.9 30.8,71.8 31.5,71.3 32.6,71.5 33.3,71.3 34.0,70.5 34.9,70.6 35.4,71.5 36.1,71.9 37.2,71.8 37.7,72.5 37.5,73.6 37.7,74.3" fill="#8fb8da"/><circle cx="34" cy="75" r="3.3" fill="#6a9aca"/><circle cx="34" cy="75" r="3.0" fill="#8fb8da" opacity="0.55"/><circle cx="34" cy="75" r="1.8" fill="#3a6a9a"/><polygon points="48.0,70.0 47.9,70.8 47.2,71.3 46.8,71.8 46.5,72.6 45.8,72.9 45.0,72.5 44.3,72.4 43.5,72.6 42.9,72.1 42.8,71.3 42.6,70.7 42.0,70.0 42.1,69.2 42.8,68.7 43.2,68.2 43.5,67.4 44.2,67.1 45.0,67.5 45.7,67.6 46.5,67.4 47.1,67.9 47.2,68.7 47.4,69.3" fill="#8fb8da"/><circle cx="45" cy="70" r="2.2" fill="#6a9aca"/><circle cx="45" cy="70" r="2.0" fill="#8fb8da" opacity="0.55"/><circle cx="45" cy="70" r="1.2" fill="#3a6a9a"/><rect x="20.0" y="97" width="1" height="20" fill="#a8d4f4" opacity="0.75"/><rect x="22.6" y="104" width="1" height="13" fill="#a8d4f4" opacity="0.75"/><rect x="25.2" y="99" width="1" height="18" fill="#a8d4f4" opacity="0.75"/><rect x="27.8" y="106" width="1" height="11" fill="#a8d4f4" opacity="0.75"/><rect x="30.4" y="101" width="1" height="16" fill="#a8d4f4" opacity="0.75"/><rect x="33.0" y="108" width="1" height="9" fill="#a8d4f4" opacity="0.75"/><rect x="35.6" y="103" width="1" height="14" fill="#a8d4f4" opacity="0.75"/><rect x="38.2" y="98" width="1" height="19" fill="#a8d4f4" opacity="0.75"/><rect x="40.8" y="105" width="1" height="12" fill="#a8d4f4" opacity="0.75"/><path d="M18 103 L26 104 L34 102 L40 112 L44 116" fill="none" stroke="#e6f3ff" stroke-width="0.8"/><rect x="14" y="96" width="1.2" height="22" fill="#e6f3ff"/><path d="M145 31 L152 22 L162 28 L170 25 L178 30" fill="none" stroke="#d8ecff" stroke-width="1"/><circle cx="152" cy="22" r="2" fill="none" stroke="#d8ecff" stroke-width="0.8"/><circle cx="162" cy="28" r="2.2" fill="none" stroke="#d8ecff" stroke-width="0.8"/><circle cx="172" cy="27" r="2" fill="none" stroke="#d8ecff" stroke-width="0.8"/><path d="M196 37 L220 19 M198 30 H215 M195 24 H210" fill="none" stroke="#d8ecff" stroke-width="1.1"/><polygon points="209.5,44 219,49.5 219,60 209.5,65.5 200,60 200,49.5" fill="#4a6f96" stroke="#c8dcf0" stroke-width="1.3"/><circle cx="209.5" cy="54.6" r="4" fill="#e8f2fa"/><ellipse cx="242.7" cy="46" rx="10.5" ry="13" fill="#2a5686" stroke="#e0eefa" stroke-width="1.3"/><path d="M238 46 a4.7 4.7 0 1 1 9.4 0 c0 3 -2 4 -2 6 h-5.4 c0 -2 -2 -3 -2 -6z" fill="#e8dcc0"/><circle cx="226" cy="84" r="16.5" fill="#2c64a2" fill-opacity="0.4" stroke="#d0e6f8" stroke-width="1.1"/><rect x="218.5" y="83" width="15" height="11" rx="1.5" fill="#f2f8fc"/><path d="M221.5 83 v-4.5 a4.5 4.5 0 0 1 9 0 v4.5" fill="none" stroke="#f2f8fc" stroke-width="1.8"/><circle cx="226" cy="88" r="1.5" fill="#2c64a2"/><path d="M232 62 L250 52 M236 64 l4 0" stroke="#bfe4ff" stroke-width="0.8"/><circle cx="236" cy="64" r="1.6" fill="#e8f4ff"/><circle cx="241" cy="64" r="1.6" fill="#e8f4ff"/><polygon points="21.4,131 30,136 30,146 21.4,151 13,146 13,136" fill="none" stroke="#d4e8f8" stroke-width="1.5"/><circle cx="21.4" cy="141" r="5" fill="#9fcaee" opacity="0.8"/><circle cx="21.4" cy="141" r="2.5" fill="#dff0fc"/><circle cx="50" cy="148" r="14" fill="none" stroke="#bfe0f8" stroke-width="0.8"/><polygon points="60.0,148.0 59.9,149.1 58.2,149.9 57.9,150.8 59.0,152.3 58.5,153.3 56.6,153.2 55.9,153.9 56.2,155.8 55.3,156.5 53.6,155.6 52.8,155.9 52.2,157.7 51.1,157.9 50.0,156.4 49.1,156.3 47.8,157.7 46.7,157.4 46.4,155.6 45.5,155.1 43.8,155.8 42.9,155.1 43.4,153.2 42.9,152.5 41.0,152.3 40.6,151.3 41.8,149.9 41.7,148.9 40.0,148.0 40.1,146.9 41.8,146.1 42.1,145.2 41.0,143.7 41.5,142.7 43.4,142.8 44.1,142.1 43.8,140.2 44.7,139.5 46.4,140.4 47.2,140.1 47.8,138.3 48.9,138.1 50.0,139.6 50.9,139.7 52.2,138.3 53.3,138.6 53.6,140.4 54.5,140.9 56.2,140.2 57.1,140.9 56.6,142.8 57.1,143.5 59.0,143.7 59.4,144.7 58.2,146.1 58.3,147.1" fill="#eef7fe"/><circle cx="50" cy="148" r="7.4" fill="#eef7fe"/><circle cx="50" cy="148" r="6.6" fill="#eef7fe" opacity="0.55"/><circle cx="50" cy="148" r="5.5" fill="#5a9ad6"/><polygon points="12,161 23,167 23,179 12,185 1,179 1,167" fill="none" stroke="#d8e8f4" stroke-width="1.4"/><circle cx="12" cy="173" r="4" fill="none" stroke="#d8e8f4" stroke-width="1.4"/><path d="M3 173 H21 M12 164 V182" stroke="#d8e8f4" stroke-width="1.4"/><circle cx="48.6" cy="172.7" r="3.6" fill="none" stroke="#eef7fe" stroke-width="1.3"/><path d="M38 168 v8 M58 168 v8" stroke="#d8ecfa" stroke-width="1"/><path d="M63 185 V200 M55 193 H71" stroke="#eef7fe" stroke-width="1.3"/><circle cx="63" cy="203" r="4" fill="none" stroke="#eef7fe" stroke-width="1.6"/><circle cx="58" cy="186" r="2.3" fill="none" stroke="#eef7fe" stroke-width="1"/><circle cx="70" cy="186" r="2.3" fill="none" stroke="#eef7fe" stroke-width="1"/><rect x="19.0" y="202" width="1.1" height="6" fill="#eef7fe" opacity="0.85"/><rect x="21.4" y="191" width="1.1" height="17" fill="#eef7fe" opacity="0.85"/><rect x="23.8" y="192" width="1.1" height="16" fill="#eef7fe" opacity="0.85"/><rect x="26.2" y="193" width="1.1" height="15" fill="#eef7fe" opacity="0.85"/><rect x="28.6" y="194" width="1.1" height="14" fill="#eef7fe" opacity="0.85"/><rect x="31.0" y="195" width="1.1" height="13" fill="#eef7fe" opacity="0.85"/><rect x="33.4" y="196" width="1.1" height="12" fill="#eef7fe" opacity="0.85"/><rect x="35.8" y="197" width="1.1" height="11" fill="#eef7fe" opacity="0.85"/><rect x="0" y="193" width="12" height="18" fill="#d8ecf8" opacity="0.35"/><rect x="213" y="108" width="46" height="34" fill="#9fd4f8" fill-opacity="0.12" stroke="#cfeaff" stroke-opacity="0.7" stroke-width="0.8"/><rect x="216" y="112" width="12" height="2.2" fill="#e0f2ff" opacity="0.8"/><rect x="234" y="112" width="16" height="2.2" fill="#e0f2ff" opacity="0.8"/><path d="M222 132 L229 124 L236 130 L244 122 L250 131" fill="none" stroke="#e8f6ff" stroke-width="0.8"/><rect x="213" y="141" width="46" height="1.6" fill="#e8f6ff" opacity="0.75"/><rect x="213" y="146" width="46" height="34" fill="#9fd4f8" fill-opacity="0.1" stroke="#cfeaff" stroke-opacity="0.6" stroke-width="0.8"/><rect x="212" y="182" width="47" height="24" fill="#9fd4f8" fill-opacity="0.08" stroke="#cfeaff" stroke-opacity="0.5" stroke-width="0.7"/><path d="M218 168 L228 152 L238 170 L252 155" fill="none" stroke="#e4f2fc" stroke-width="0.8"/><circle cx="218" cy="168" r="1.1" fill="#f0f8ff"/><circle cx="228" cy="152" r="1.1" fill="#f0f8ff"/><circle cx="238" cy="170" r="1.1" fill="#f0f8ff"/><circle cx="252" cy="155" r="1.1" fill="#f0f8ff"/><polygon points="254.5,192.0 254.4,193.2 252.7,194.1 252.4,195.1 253.2,196.8 252.5,197.8 250.6,197.6 249.9,198.3 249.8,200.2 248.6,200.8 247.1,199.7 246.0,199.9 245.0,201.5 243.8,201.4 242.9,199.7 241.9,199.4 240.2,200.2 239.2,199.5 239.4,197.6 238.7,196.9 236.8,196.8 236.2,195.6 237.3,194.1 237.1,193.0 235.5,192.0 235.6,190.8 237.3,189.9 237.6,188.9 236.8,187.2 237.5,186.2 239.4,186.4 240.1,185.7 240.2,183.8 241.4,183.2 242.9,184.3 244.0,184.1 245.0,182.5 246.2,182.6 247.1,184.3 248.1,184.6 249.8,183.8 250.8,184.5 250.6,186.4 251.3,187.1 253.2,187.2 253.8,188.4 252.7,189.9 252.9,191.0" fill="#e4f2fc"/><circle cx="245" cy="192" r="7.0" fill="#e4f2fc"/><circle cx="245" cy="192" r="6.3" fill="#e4f2fc" opacity="0.55"/><circle cx="245" cy="192" r="5.9" fill="#8cc4ec"/><path d="M60 118 C56 70 92 36 128 37 C172 38 196 66 194 96 L195 109 L206 129 L206 132 L200 138 L201 149 L198 158 L195 171 C193 178 188 180 182 180 C170 181 160 178 154 176 C152 190 150 200 150 225 L88 225 C90 190 88 170 82 158 C66 146 61 132 60 118Z" fill="url(#ihead)"/><g clip-path="url(#hclip)"><ellipse cx="95" cy="100" rx="45" ry="60" fill="#1e4a80" opacity="0.45"/><defs><linearGradient id="ineck" x1="0" y1="0" x2="0" y2="1"><stop offset="0" stop-color="#1b3658" stop-opacity="0"/><stop offset="0.35" stop-color="#1b3658" stop-opacity="0.9"/><stop offset="1" stop-color="#1b3658"/></linearGradient></defs><rect x="78" y="135" width="80" height="95" fill="url(#ineck)"/><rect x="82.0" y="183" width="2.7" height="45" fill="#13263f" opacity="0.85"/><rect x="84.6" y="181" width="2.7" height="47" fill="#1f3d62" opacity="0.85"/><rect x="87.2" y="179" width="2.7" height="49" fill="#2e5a88" opacity="0.85"/><rect x="89.8" y="177" width="2.7" height="51" fill="#0f1e33" opacity="0.85"/><rect x="92.4" y="175" width="2.7" height="53" fill="#3d6c9c" opacity="0.85"/><rect x="95.0" y="173" width="2.7" height="55" fill="#1a3354" opacity="0.85"/><rect x="97.6" y="171" width="2.7" height="57" fill="#6f9cc8" opacity="0.85"/><rect x="100.2" y="169" width="2.7" height="59" fill="#13263f" opacity="0.85"/><rect x="102.8" y="167" width="2.7" height="61" fill="#1f3d62" opacity="0.85"/><rect x="105.4" y="165" width="2.7" height="63" fill="#2e5a88" opacity="0.85"/><rect x="108.0" y="163" width="2.7" height="65" fill="#0f1e33" opacity="0.85"/><rect x="110.6" y="161" width="2.7" height="67" fill="#3d6c9c" opacity="0.85"/><rect x="113.2" y="159" width="2.7" height="69" fill="#1a3354" opacity="0.85"/><rect x="115.8" y="157" width="2.7" height="71" fill="#6f9cc8" opacity="0.85"/><rect x="118.4" y="155" width="2.7" height="73" fill="#13263f" opacity="0.85"/><rect x="121.0" y="153" width="2.7" height="75" fill="#1f3d62" opacity="0.85"/><rect x="123.6" y="151" width="2.7" height="77" fill="#2e5a88" opacity="0.85"/><rect x="126.2" y="149" width="2.7" height="79" fill="#0f1e33" opacity="0.85"/><rect x="128.8" y="182" width="2.7" height="46" fill="#3d6c9c" opacity="0.85"/><rect x="131.4" y="180" width="2.7" height="48" fill="#1a3354" opacity="0.85"/><rect x="134.0" y="178" width="2.7" height="50" fill="#6f9cc8" opacity="0.85"/><rect x="136.6" y="176" width="2.7" height="52" fill="#13263f" opacity="0.85"/><rect x="139.2" y="174" width="2.7" height="54" fill="#1f3d62" opacity="0.85"/><rect x="141.8" y="172" width="2.7" height="56" fill="#2e5a88" opacity="0.85"/><rect x="144.4" y="170" width="2.7" height="58" fill="#0f1e33" opacity="0.85"/><rect x="147.0" y="168" width="2.7" height="60" fill="#3d6c9c" opacity="0.85"/><rect x="149.6" y="166" width="2.7" height="62" fill="#1a3354" opacity="0.85"/><rect x="152.2" y="164" width="2.7" height="64" fill="#6f9cc8" opacity="0.85"/><rect x="86" y="180" width="1" height="12" fill="#d6ecfc" opacity="0.35"/><rect x="99" y="197" width="2" height="19" fill="#d6ecfc" opacity="0.39999999999999997"/><rect x="112" y="184" width="3" height="26" fill="#d6ecfc" opacity="0.44999999999999996"/><rect x="125" y="201" width="1" height="33" fill="#d6ecfc" opacity="0.5"/><rect x="138" y="188" width="2" height="40" fill="#d6ecfc" opacity="0.55"/><rect x="87" y="205" width="3" height="17" fill="#d6ecfc" opacity="0.35"/><rect x="100" y="192" width="1" height="24" fill="#d6ecfc" opacity="0.39999999999999997"/><rect x="113" y="209" width="2" height="31" fill="#d6ecfc" opacity="0.44999999999999996"/><rect x="126" y="196" width="3" height="38" fill="#d6ecfc" opacity="0.5"/><rect x="139" y="183" width="1" height="15" fill="#d6ecfc" opacity="0.55"/><rect x="88" y="200" width="2" height="22" fill="#d6ecfc" opacity="0.35"/><rect x="101" y="187" width="3" height="29" fill="#d6ecfc" opacity="0.39999999999999997"/><rect x="114" y="204" width="1" height="36" fill="#d6ecfc" opacity="0.44999999999999996"/><rect x="127" y="191" width="2" height="13" fill="#d6ecfc" opacity="0.5"/><circle cx="115.5" cy="193.7" r="0.76" fill="#8fd0ff" opacity="0.63"/><circle cx="119.6" cy="195.8" r="0.39" fill="#8fd0ff" opacity="0.66"/><circle cx="128.6" cy="211.9" r="0.35" fill="#8fd0ff" opacity="0.55"/><circle cx="88.7" cy="213.2" r="0.65" fill="#8fd0ff" opacity="0.42"/><circle cx="154.7" cy="225.3" r="0.63" fill="#8fd0ff" opacity="0.71"/><circle cx="93.7" cy="151.2" r="0.56" fill="#8fd0ff" opacity="0.43"/><circle cx="96.1" cy="168.9" r="0.32" fill="#8fd0ff" opacity="0.63"/><circle cx="114.6" cy="215.7" r="0.56" fill="#8fd0ff" opacity="0.72"/><circle cx="119.0" cy="201.7" r="0.53" fill="#8fd0ff" opacity="0.54"/><circle cx="155.8" cy="227.7" r="0.72" fill="#8fd0ff" opacity="0.75"/><circle cx="105.3" cy="167.9" r="0.44" fill="#8fd0ff" opacity="0.44"/><circle cx="138.7" cy="181.2" r="0.72" fill="#8fd0ff" opacity="0.59"/><circle cx="152.9" cy="216.1" r="0.30" fill="#8fd0ff" opacity="0.50"/><circle cx="149.4" cy="186.7" r="0.79" fill="#8fd0ff" opacity="0.60"/><circle cx="87.4" cy="199.1" r="0.69" fill="#8fd0ff" opacity="0.53"/><circle cx="88.4" cy="175.9" r="0.78" fill="#8fd0ff" opacity="0.78"/><circle cx="90.7" cy="169.2" r="0.35" fill="#8fd0ff" opacity="0.43"/><circle cx="141.0" cy="163.9" r="0.58" fill="#8fd0ff" opacity="0.62"/><circle cx="96.1" cy="207.1" r="0.37" fill="#8fd0ff" opacity="0.72"/><circle cx="90.6" cy="182.8" r="0.41" fill="#8fd0ff" opacity="0.53"/><circle cx="153.8" cy="212.7" r="0.45" fill="#8fd0ff" opacity="0.84"/><circle cx="97.6" cy="180.8" r="0.73" fill="#8fd0ff" opacity="0.72"/><circle cx="89.4" cy="227.2" r="0.41" fill="#8fd0ff" opacity="0.53"/><circle cx="139.2" cy="175.7" r="0.45" fill="#8fd0ff" opacity="0.44"/><circle cx="88.7" cy="195.5" r="0.42" fill="#8fd0ff" opacity="0.70"/><circle cx="109.5" cy="185.4" r="0.78" fill="#8fd0ff" opacity="0.64"/><circle cx="124.5" cy="217.6" r="0.39" fill="#8fd0ff" opacity="0.48"/><circle cx="149.2" cy="213.8" r="0.42" fill="#8fd0ff" opacity="0.49"/><circle cx="136.7" cy="223.4" r="0.40" fill="#8fd0ff" opacity="0.88"/><circle cx="147.3" cy="197.1" r="0.51" fill="#8fd0ff" opacity="0.45"/><circle cx="84.9" cy="225.1" r="0.42" fill="#8fd0ff" opacity="0.75"/><circle cx="101.0" cy="214.2" r="0.60" fill="#8fd0ff" opacity="0.55"/><circle cx="95.0" cy="206.2" r="0.33" fill="#8fd0ff" opacity="0.51"/><circle cx="123.4" cy="216.5" r="0.61" fill="#8fd0ff" opacity="0.54"/><circle cx="149.9" cy="165.9" r="0.31" fill="#8fd0ff" opacity="0.53"/><circle cx="115.0" cy="154.7" r="0.39" fill="#8fd0ff" opacity="0.58"/><circle cx="124.3" cy="160.3" r="0.48" fill="#8fd0ff" opacity="0.85"/><circle cx="154.6" cy="201.2" r="0.65" fill="#8fd0ff" opacity="0.69"/><circle cx="92.4" cy="152.7" r="0.31" fill="#8fd0ff" opacity="0.86"/><circle cx="133.9" cy="225.1" r="0.31" fill="#8fd0ff" opacity="0.72"/><circle cx="117.7" cy="207.0" r="0.46" fill="#8fd0ff" opacity="0.90"/><circle cx="87.6" cy="192.6" r="0.67" fill="#8fd0ff" opacity="0.85"/><circle cx="136.5" cy="204.9" r="0.70" fill="#8fd0ff" opacity="0.86"/><circle cx="108.0" cy="203.4" r="0.75" fill="#8fd0ff" opacity="0.84"/><circle cx="112.9" cy="211.7" r="0.73" fill="#8fd0ff" opacity="0.69"/><circle cx="128.2" cy="179.8" r="0.59" fill="#8fd0ff" opacity="0.70"/><circle cx="87.9" cy="199.9" r="0.80" fill="#8fd0ff" opacity="0.84"/><circle cx="135.9" cy="180.3" r="0.67" fill="#8fd0ff" opacity="0.69"/><circle cx="114.6" cy="215.4" r="0.34" fill="#8fd0ff" opacity="0.78"/><circle cx="84.2" cy="196.9" r="0.54" fill="#8fd0ff" opacity="0.52"/><circle cx="133.7" cy="188.8" r="0.61" fill="#8fd0ff" opacity="0.86"/><circle cx="100.9" cy="150.9" r="0.45" fill="#8fd0ff" opacity="0.74"/><circle cx="97.0" cy="163.2" r="0.75" fill="#8fd0ff" opacity="0.73"/><circle cx="114.7" cy="219.6" r="0.46" fill="#8fd0ff" opacity="0.73"/><circle cx="96.7" cy="183.6" r="0.70" fill="#8fd0ff" opacity="0.86"/><circle cx="147.1" cy="180.0" r="0.59" fill="#8fd0ff" opacity="0.56"/><circle cx="92.1" cy="188.7" r="0.72" fill="#8fd0ff" opacity="0.82"/><circle cx="134.6" cy="224.1" r="0.44" fill="#8fd0ff" opacity="0.48"/><circle cx="115.3" cy="171.5" r="0.41" fill="#8fd0ff" opacity="0.61"/><circle cx="128.3" cy="188.5" r="0.46" fill="#8fd0ff" opacity="0.82"/><circle cx="154.7" cy="185.3" r="0.34" fill="#8fd0ff" opacity="0.42"/><circle cx="146.6" cy="153.2" r="0.65" fill="#8fd0ff" opacity="0.69"/><circle cx="104.9" cy="211.7" r="0.31" fill="#8fd0ff" opacity="0.47"/><circle cx="115.7" cy="151.9" r="0.71" fill="#8fd0ff" opacity="0.52"/><circle cx="92.4" cy="153.7" r="0.61" fill="#8fd0ff" opacity="0.62"/><circle cx="128.6" cy="201.1" r="0.70" fill="#8fd0ff" opacity="0.88"/><circle cx="132.7" cy="165.5" r="0.54" fill="#8fd0ff" opacity="0.49"/><circle cx="82.8" cy="186.8" r="0.66" fill="#8fd0ff" opacity="0.49"/><circle cx="102.2" cy="177.0" r="0.65" fill="#8fd0ff" opacity="0.66"/><circle cx="127.5" cy="209.0" r="0.50" fill="#8fd0ff" opacity="0.80"/><circle cx="149.1" cy="156.8" r="0.77" fill="#8fd0ff" opacity="0.76"/><circle cx="91.6" cy="185.4" r="0.61" fill="#8fd0ff" opacity="0.85"/><circle cx="109.9" cy="194.4" r="0.74" fill="#8fd0ff" opacity="0.80"/><circle cx="151.9" cy="186.2" r="0.63" fill="#8fd0ff" opacity="0.50"/><circle cx="135.4" cy="213.8" r="0.62" fill="#8fd0ff" opacity="0.76"/><circle cx="97.8" cy="220.2" r="0.79" fill="#8fd0ff" opacity="0.89"/><circle cx="121.7" cy="211.7" r="0.46" fill="#8fd0ff" opacity="0.85"/><circle cx="145.3" cy="177.2" r="0.34" fill="#8fd0ff" opacity="0.62"/><circle cx="122.7" cy="209.9" r="0.54" fill="#8fd0ff" opacity="0.41"/><circle cx="141.9" cy="155.0" r="0.70" fill="#8fd0ff" opacity="0.49"/><circle cx="106.8" cy="211.5" r="0.37" fill="#8fd0ff" opacity="0.47"/><circle cx="120.2" cy="206.4" r="0.72" fill="#8fd0ff" opacity="0.74"/><circle cx="152.0" cy="188.4" r="0.77" fill="#8fd0ff" opacity="0.44"/><circle cx="98.4" cy="191.1" r="0.45" fill="#8fd0ff" opacity="0.76"/><circle cx="129.3" cy="190.8" r="0.72" fill="#8fd0ff" opacity="0.68"/><circle cx="105.1" cy="179.7" r="0.72" fill="#8fd0ff" opacity="0.85"/><circle cx="97.4" cy="216.4" r="0.78" fill="#8fd0ff" opacity="0.66"/><circle cx="124.4" cy="165.7" r="0.57" fill="#8fd0ff" opacity="0.65"/><circle cx="126.8" cy="152.2" r="0.78" fill="#8fd0ff" opacity="0.66"/><circle cx="111.6" cy="212.5" r="0.58" fill="#8fd0ff" opacity="0.65"/><circle cx="133.1" cy="155.1" r="0.57" fill="#8fd0ff" opacity="0.61"/><circle cx="152.8" cy="222.0" r="0.43" fill="#8fd0ff" opacity="0.64"/><circle cx="91.4" cy="183.8" r="0.71" fill="#8fd0ff" opacity="0.85"/><circle cx="117.3" cy="174.7" r="0.40" fill="#8fd0ff" opacity="0.71"/><circle cx="150.5" cy="160.1" r="0.69" fill="#8fd0ff" opacity="0.41"/><circle cx="96.4" cy="167.7" r="0.64" fill="#8fd0ff" opacity="0.56"/><circle cx="108.3" cy="198.3" r="0.35" fill="#8fd0ff" opacity="0.77"/><circle cx="91.1" cy="189.8" r="0.43" fill="#8fd0ff" opacity="0.50"/><circle cx="121.2" cy="184.1" r="0.49" fill="#8fd0ff" opacity="0.61"/><circle cx="121.2" cy="162.5" r="0.40" fill="#8fd0ff" opacity="0.72"/><circle cx="129.2" cy="191.3" r="0.73" fill="#8fd0ff" opacity="0.71"/><circle cx="145.4" cy="168.1" r="0.67" fill="#8fd0ff" opacity="0.81"/><circle cx="148.8" cy="174.6" r="0.46" fill="#8fd0ff" opacity="0.86"/><circle cx="98.1" cy="227.9" r="0.74" fill="#8fd0ff" opacity="0.47"/><circle cx="99.7" cy="206.7" r="0.43" fill="#8fd0ff" opacity="0.45"/><circle cx="143.6" cy="182.9" r="0.69" fill="#8fd0ff" opacity="0.46"/><circle cx="111.8" cy="203.4" r="0.31" fill="#8fd0ff" opacity="0.50"/><circle cx="132.5" cy="221.1" r="0.78" fill="#8fd0ff" opacity="0.46"/><circle cx="119.4" cy="209.1" r="0.55" fill="#8fd0ff" opacity="0.74"/><circle cx="96.0" cy="155.5" r="0.35" fill="#8fd0ff" opacity="0.42"/><circle cx="122.8" cy="190.2" r="0.58" fill="#8fd0ff" opacity="0.47"/><circle cx="95.7" cy="165.9" r="0.72" fill="#8fd0ff" opacity="0.90"/><circle cx="150.6" cy="157.4" r="0.33" fill="#8fd0ff" opacity="0.88"/><circle cx="116.2" cy="209.6" r="0.46" fill="#8fd0ff" opacity="0.63"/><circle cx="120.1" cy="183.5" r="0.60" fill="#8fd0ff" opacity="0.41"/><circle cx="133.9" cy="215.9" r="0.39" fill="#8fd0ff" opacity="0.63"/><circle cx="136.7" cy="181.6" r="0.40" fill="#8fd0ff" opacity="0.48"/><circle cx="119.9" cy="151.2" r="0.75" fill="#8fd0ff" opacity="0.80"/><circle cx="134.1" cy="217.1" r="0.61" fill="#8fd0ff" opacity="0.60"/><circle cx="126.4" cy="189.3" r="0.79" fill="#8fd0ff" opacity="0.80"/><rect x="120" y="205" width="8" height="23" fill="#eaf4fc" opacity="0.85"/><rect x="134" y="198" width="6" height="30" fill="#cfe6f8" opacity="0.7"/><circle cx="95.0" cy="139.8" r="0.75" fill="#e6f4ff" opacity="0.72"/><circle cx="181.3" cy="81.6" r="0.84" fill="#e6f4ff" opacity="0.78"/><circle cx="162.7" cy="123.2" r="0.76" fill="#e6f4ff" opacity="0.49"/><circle cx="167.0" cy="43.1" r="0.51" fill="#e6f4ff" opacity="0.53"/><circle cx="56.6" cy="75.9" r="0.68" fill="#e6f4ff" opacity="0.62"/><circle cx="91.0" cy="143.6" r="0.70" fill="#e6f4ff" opacity="0.45"/><circle cx="157.3" cy="100.5" r="0.62" fill="#e6f4ff" opacity="0.48"/><circle cx="210.0" cy="108.9" r="0.72" fill="#e6f4ff" opacity="0.71"/><circle cx="206.9" cy="37.6" r="0.67" fill="#e6f4ff" opacity="0.69"/><circle cx="94.8" cy="81.2" r="0.33" fill="#e6f4ff" opacity="0.37"/><circle cx="113.2" cy="46.3" r="0.45" fill="#e6f4ff" opacity="0.79"/><circle cx="140.3" cy="93.4" r="0.88" fill="#e6f4ff" opacity="0.59"/><circle cx="209.2" cy="108.4" r="0.79" fill="#e6f4ff" opacity="0.30"/><circle cx="147.6" cy="122.3" r="0.33" fill="#e6f4ff" opacity="0.81"/><circle cx="79.8" cy="89.3" r="0.40" fill="#e6f4ff" opacity="0.55"/><circle cx="149.7" cy="41.7" r="0.87" fill="#e6f4ff" opacity="0.50"/><circle cx="136.6" cy="103.8" r="0.52" fill="#e6f4ff" opacity="0.42"/><circle cx="156.5" cy="99.5" r="0.47" fill="#e6f4ff" opacity="0.68"/><circle cx="100.9" cy="36.6" r="0.45" fill="#e6f4ff" opacity="0.28"/><circle cx="79.3" cy="121.8" r="0.53" fill="#e6f4ff" opacity="0.79"/><circle cx="171.0" cy="40.8" r="0.89" fill="#e6f4ff" opacity="0.82"/><circle cx="66.4" cy="139.1" r="0.56" fill="#e6f4ff" opacity="0.54"/><circle cx="205.8" cy="63.0" r="0.61" fill="#e6f4ff" opacity="0.81"/><circle cx="167.0" cy="88.9" r="0.89" fill="#e6f4ff" opacity="0.74"/><circle cx="148.6" cy="48.2" r="0.67" fill="#e6f4ff" opacity="0.52"/><circle cx="86.6" cy="41.0" r="0.62" fill="#e6f4ff" opacity="0.32"/><circle cx="123.6" cy="111.8" r="0.57" fill="#e6f4ff" opacity="0.41"/><circle cx="145.2" cy="83.2" r="0.77" fill="#e6f4ff" opacity="0.57"/><circle cx="209.6" cy="144.6" r="0.74" fill="#e6f4ff" opacity="0.39"/><circle cx="72.6" cy="137.7" r="0.77" fill="#e6f4ff" opacity="0.62"/><circle cx="110.7" cy="66.2" r="0.71" fill="#e6f4ff" opacity="0.59"/><circle cx="146.7" cy="107.8" r="0.75" fill="#e6f4ff" opacity="0.36"/><circle cx="93.6" cy="147.7" r="0.85" fill="#e6f4ff" opacity="0.78"/><circle cx="61.1" cy="42.0" r="0.46" fill="#e6f4ff" opacity="0.51"/><circle cx="151.6" cy="46.8" r="0.62" fill="#e6f4ff" opacity="0.29"/><circle cx="68.4" cy="112.8" r="0.63" fill="#e6f4ff" opacity="0.63"/><circle cx="112.8" cy="90.0" r="0.43" fill="#e6f4ff" opacity="0.46"/><circle cx="170.4" cy="131.4" r="0.34" fill="#e6f4ff" opacity="0.32"/><circle cx="180.4" cy="106.7" r="0.76" fill="#e6f4ff" opacity="0.38"/><circle cx="120.8" cy="64.7" r="0.79" fill="#e6f4ff" opacity="0.47"/><circle cx="156.3" cy="148.8" r="0.50" fill="#e6f4ff" opacity="0.58"/><circle cx="170.6" cy="140.9" r="0.56" fill="#e6f4ff" opacity="0.47"/><circle cx="70.0" cy="135.6" r="0.35" fill="#e6f4ff" opacity="0.30"/><circle cx="142.5" cy="90.8" r="0.71" fill="#e6f4ff" opacity="0.43"/><circle cx="175.2" cy="43.7" r="0.43" fill="#e6f4ff" opacity="0.65"/><circle cx="67.7" cy="69.9" r="0.73" fill="#e6f4ff" opacity="0.67"/><circle cx="98.9" cy="51.4" r="0.51" fill="#e6f4ff" opacity="0.69"/><circle cx="111.8" cy="48.5" r="0.73" fill="#e6f4ff" opacity="0.59"/><circle cx="197.4" cy="143.1" r="0.85" fill="#e6f4ff" opacity="0.51"/><circle cx="179.5" cy="70.0" r="0.49" fill="#e6f4ff" opacity="0.49"/><circle cx="199.9" cy="137.9" r="0.45" fill="#e6f4ff" opacity="0.47"/><circle cx="111.7" cy="76.8" r="0.54" fill="#e6f4ff" opacity="0.48"/><circle cx="85.2" cy="99.8" r="0.78" fill="#e6f4ff" opacity="0.57"/><circle cx="184.6" cy="99.7" r="0.41" fill="#e6f4ff" opacity="0.71"/><circle cx="191.5" cy="67.4" r="0.31" fill="#e6f4ff" opacity="0.56"/><circle cx="139.3" cy="100.3" r="0.88" fill="#e6f4ff" opacity="0.64"/><circle cx="179.7" cy="42.4" r="0.63" fill="#e6f4ff" opacity="0.72"/><circle cx="68.0" cy="44.4" r="0.74" fill="#e6f4ff" opacity="0.79"/><circle cx="68.1" cy="107.9" r="0.39" fill="#e6f4ff" opacity="0.70"/><circle cx="155.6" cy="63.2" r="0.43" fill="#e6f4ff" opacity="0.71"/><circle cx="135.8" cy="122.9" r="0.54" fill="#e6f4ff" opacity="0.45"/><circle cx="205.1" cy="112.3" r="0.60" fill="#e6f4ff" opacity="0.57"/><circle cx="166.7" cy="116.4" r="0.85" fill="#e6f4ff" opacity="0.50"/><circle cx="183.1" cy="111.7" r="0.81" fill="#e6f4ff" opacity="0.73"/><circle cx="184.2" cy="137.2" r="0.87" fill="#e6f4ff" opacity="0.63"/><circle cx="136.2" cy="116.7" r="0.78" fill="#e6f4ff" opacity="0.50"/><circle cx="120.2" cy="51.8" r="0.74" fill="#e6f4ff" opacity="0.84"/><circle cx="113.2" cy="54.3" r="0.42" fill="#e6f4ff" opacity="0.50"/><circle cx="100.3" cy="146.5" r="0.34" fill="#e6f4ff" opacity="0.44"/><circle cx="72.8" cy="109.5" r="0.77" fill="#e6f4ff" opacity="0.36"/><circle cx="64.7" cy="87.8" r="0.65" fill="#e6f4ff" opacity="0.80"/><circle cx="60.6" cy="47.5" r="0.41" fill="#e6f4ff" opacity="0.38"/><circle cx="91.5" cy="117.5" r="0.66" fill="#e6f4ff" opacity="0.38"/><circle cx="83.7" cy="67.3" r="0.40" fill="#e6f4ff" opacity="0.70"/><circle cx="103.3" cy="98.0" r="0.79" fill="#e6f4ff" opacity="0.54"/><circle cx="95.4" cy="137.1" r="0.85" fill="#e6f4ff" opacity="0.46"/><circle cx="139.8" cy="145.1" r="0.59" fill="#e6f4ff" opacity="0.38"/><circle cx="62.7" cy="144.0" r="0.78" fill="#e6f4ff" opacity="0.48"/><circle cx="136.8" cy="94.3" r="0.46" fill="#e6f4ff" opacity="0.84"/><circle cx="156.9" cy="62.3" r="0.31" fill="#e6f4ff" opacity="0.53"/><circle cx="112.6" cy="126.6" r="0.73" fill="#e6f4ff" opacity="0.61"/><circle cx="79.4" cy="53.0" r="0.49" fill="#e6f4ff" opacity="0.41"/><circle cx="189.7" cy="94.4" r="0.68" fill="#e6f4ff" opacity="0.85"/><circle cx="96.3" cy="96.5" r="0.39" fill="#e6f4ff" opacity="0.71"/><circle cx="55.2" cy="129.5" r="0.81" fill="#e6f4ff" opacity="0.74"/><circle cx="67.8" cy="66.0" r="0.73" fill="#e6f4ff" opacity="0.31"/><circle cx="129.4" cy="88.9" r="0.87" fill="#e6f4ff" opacity="0.60"/><circle cx="187.9" cy="69.9" r="0.77" fill="#e6f4ff" opacity="0.50"/><circle cx="197.1" cy="45.5" r="0.80" fill="#e6f4ff" opacity="0.38"/><circle cx="139.2" cy="95.5" r="0.39" fill="#e6f4ff" opacity="0.75"/><circle cx="103.3" cy="70.7" r="0.35" fill="#e6f4ff" opacity="0.43"/><circle cx="127.4" cy="117.2" r="0.52" fill="#e6f4ff" opacity="0.66"/><circle cx="71.4" cy="80.3" r="0.58" fill="#e6f4ff" opacity="0.83"/><circle cx="183.6" cy="110.2" r="0.31" fill="#e6f4ff" opacity="0.48"/><circle cx="165.1" cy="62.3" r="0.64" fill="#e6f4ff" opacity="0.52"/><circle cx="56.6" cy="149.0" r="0.78" fill="#e6f4ff" opacity="0.37"/><circle cx="150.5" cy="68.4" r="0.53" fill="#e6f4ff" opacity="0.57"/><circle cx="101.2" cy="73.8" r="0.54" fill="#e6f4ff" opacity="0.65"/><circle cx="94.7" cy="58.0" r="0.74" fill="#e6f4ff" opacity="0.45"/><circle cx="201.5" cy="99.7" r="0.73" fill="#e6f4ff" opacity="0.45"/><circle cx="183.2" cy="45.6" r="0.38" fill="#e6f4ff" opacity="0.31"/><circle cx="160.0" cy="116.5" r="0.41" fill="#e6f4ff" opacity="0.49"/><circle cx="184.7" cy="103.2" r="0.35" fill="#e6f4ff" opacity="0.39"/><circle cx="79.3" cy="49.3" r="0.54" fill="#e6f4ff" opacity="0.29"/><circle cx="197.7" cy="84.1" r="0.61" fill="#e6f4ff" opacity="0.64"/><circle cx="173.9" cy="129.4" r="0.53" fill="#e6f4ff" opacity="0.45"/><circle cx="118.9" cy="36.8" r="0.54" fill="#e6f4ff" opacity="0.67"/><circle cx="207.2" cy="125.8" r="0.70" fill="#e6f4ff" opacity="0.62"/><circle cx="57.9" cy="73.1" r="0.51" fill="#e6f4ff" opacity="0.64"/><circle cx="71.5" cy="78.4" r="0.61" fill="#e6f4ff" opacity="0.72"/><circle cx="182.9" cy="105.3" r="0.40" fill="#e6f4ff" opacity="0.71"/><circle cx="195.0" cy="98.0" r="0.51" fill="#e6f4ff" opacity="0.55"/><circle cx="77.0" cy="117.0" r="0.89" fill="#e6f4ff" opacity="0.56"/><circle cx="165.9" cy="131.1" r="0.42" fill="#e6f4ff" opacity="0.82"/><circle cx="152.2" cy="57.8" r="0.35" fill="#e6f4ff" opacity="0.40"/><circle cx="144.4" cy="115.2" r="0.50" fill="#e6f4ff" opacity="0.81"/><circle cx="111.0" cy="88.2" r="0.37" fill="#e6f4ff" opacity="0.83"/><circle cx="76.0" cy="139.0" r="0.63" fill="#e6f4ff" opacity="0.59"/><circle cx="141.9" cy="65.4" r="0.85" fill="#e6f4ff" opacity="0.85"/><circle cx="181.7" cy="104.2" r="0.37" fill="#e6f4ff" opacity="0.74"/><circle cx="99.7" cy="138.2" r="0.44" fill="#e6f4ff" opacity="0.59"/><circle cx="183.8" cy="56.3" r="0.63" fill="#e6f4ff" opacity="0.30"/><circle cx="60.0" cy="55.7" r="0.89" fill="#e6f4ff" opacity="0.81"/><circle cx="157.0" cy="70.4" r="0.70" fill="#e6f4ff" opacity="0.69"/><circle cx="114.2" cy="103.1" r="0.78" fill="#e6f4ff" opacity="0.26"/><circle cx="85.9" cy="88.8" r="0.39" fill="#e6f4ff" opacity="0.48"/><circle cx="143.3" cy="55.0" r="0.61" fill="#e6f4ff" opacity="0.41"/><circle cx="143.0" cy="73.2" r="0.69" fill="#e6f4ff" opacity="0.27"/><circle cx="159.0" cy="51.6" r="0.88" fill="#e6f4ff" opacity="0.61"/><circle cx="127.8" cy="82.3" r="0.67" fill="#e6f4ff" opacity="0.66"/><circle cx="172.5" cy="121.4" r="0.59" fill="#e6f4ff" opacity="0.85"/><circle cx="184.9" cy="133.3" r="0.55" fill="#e6f4ff" opacity="0.51"/><circle cx="142.7" cy="139.1" r="0.62" fill="#e6f4ff" opacity="0.57"/><circle cx="122.0" cy="139.0" r="0.49" fill="#e6f4ff" opacity="0.28"/><circle cx="167.5" cy="138.5" r="0.74" fill="#e6f4ff" opacity="0.61"/><circle cx="171.5" cy="70.0" r="0.66" fill="#e6f4ff" opacity="0.29"/><circle cx="74.3" cy="86.4" r="0.60" fill="#e6f4ff" opacity="0.49"/><circle cx="63.1" cy="114.9" r="0.62" fill="#e6f4ff" opacity="0.39"/><circle cx="102.5" cy="80.5" r="0.44" fill="#e6f4ff" opacity="0.29"/><circle cx="196.3" cy="146.1" r="0.70" fill="#e6f4ff" opacity="0.77"/><circle cx="120.3" cy="127.6" r="0.43" fill="#e6f4ff" opacity="0.70"/><circle cx="142.9" cy="138.9" r="0.36" fill="#e6f4ff" opacity="0.73"/><circle cx="74.2" cy="96.8" r="0.87" fill="#e6f4ff" opacity="0.25"/><circle cx="92.8" cy="69.4" r="0.49" fill="#e6f4ff" opacity="0.29"/><circle cx="193.7" cy="128.8" r="0.54" fill="#e6f4ff" opacity="0.46"/><circle cx="145.8" cy="40.3" r="0.32" fill="#e6f4ff" opacity="0.79"/><circle cx="102.7" cy="92.3" r="0.86" fill="#e6f4ff" opacity="0.84"/><circle cx="128.3" cy="58.7" r="0.48" fill="#e6f4ff" opacity="0.80"/><circle cx="194.0" cy="57.5" r="0.80" fill="#e6f4ff" opacity="0.46"/><circle cx="128.2" cy="54.8" r="0.83" fill="#e6f4ff" opacity="0.85"/><circle cx="86.3" cy="107.7" r="0.41" fill="#e6f4ff" opacity="0.78"/><circle cx="62.8" cy="47.2" r="0.74" fill="#e6f4ff" opacity="0.44"/><circle cx="194.5" cy="135.0" r="0.73" fill="#e6f4ff" opacity="0.33"/><circle cx="162.9" cy="142.8" r="0.57" fill="#e6f4ff" opacity="0.30"/><circle cx="89.6" cy="70.3" r="0.73" fill="#e6f4ff" opacity="0.37"/><circle cx="83.1" cy="62.1" r="0.70" fill="#e6f4ff" opacity="0.72"/><circle cx="112.7" cy="111.1" r="0.83" fill="#e6f4ff" opacity="0.60"/><circle cx="90.5" cy="69.6" r="0.86" fill="#e6f4ff" opacity="0.65"/><circle cx="97.9" cy="108.6" r="0.35" fill="#e6f4ff" opacity="0.84"/><circle cx="123.3" cy="95.8" r="0.62" fill="#e6f4ff" opacity="0.28"/><circle cx="148.0" cy="67.7" r="0.45" fill="#e6f4ff" opacity="0.73"/><circle cx="68.5" cy="67.8" r="0.75" fill="#e6f4ff" opacity="0.40"/><circle cx="98.3" cy="98.0" r="0.41" fill="#e6f4ff" opacity="0.79"/><circle cx="208.1" cy="38.9" r="0.58" fill="#e6f4ff" opacity="0.70"/><circle cx="114.6" cy="141.9" r="0.60" fill="#e6f4ff" opacity="0.36"/><circle cx="141.2" cy="109.2" r="0.52" fill="#e6f4ff" opacity="0.64"/><circle cx="176.4" cy="94.4" r="0.60" fill="#e6f4ff" opacity="0.76"/><circle cx="161.1" cy="94.9" r="0.87" fill="#e6f4ff" opacity="0.35"/><circle cx="175.8" cy="54.0" r="0.66" fill="#e6f4ff" opacity="0.39"/><circle cx="123.3" cy="123.9" r="0.77" fill="#e6f4ff" opacity="0.72"/><circle cx="91.6" cy="91.2" r="0.43" fill="#e6f4ff" opacity="0.60"/><circle cx="132.3" cy="39.1" r="0.66" fill="#e6f4ff" opacity="0.68"/><circle cx="143.8" cy="135.4" r="0.41" fill="#e6f4ff" opacity="0.34"/><circle cx="57.8" cy="92.1" r="0.56" fill="#e6f4ff" opacity="0.52"/><circle cx="95.8" cy="126.8" r="0.34" fill="#e6f4ff" opacity="0.79"/><circle cx="143.2" cy="97.5" r="0.77" fill="#e6f4ff" opacity="0.39"/><circle cx="77.7" cy="70.8" r="0.33" fill="#e6f4ff" opacity="0.44"/><circle cx="151.3" cy="95.4" r="0.46" fill="#e6f4ff" opacity="0.60"/><circle cx="68.7" cy="129.4" r="0.40" fill="#e6f4ff" opacity="0.40"/><circle cx="79.8" cy="114.4" r="0.80" fill="#e6f4ff" opacity="0.72"/><circle cx="64.5" cy="82.2" r="0.52" fill="#e6f4ff" opacity="0.38"/><circle cx="205.4" cy="39.8" r="0.59" fill="#e6f4ff" opacity="0.71"/><circle cx="207.9" cy="51.6" r="0.57" fill="#e6f4ff" opacity="0.70"/><circle cx="61.1" cy="62.7" r="0.83" fill="#e6f4ff" opacity="0.33"/><circle cx="115.9" cy="69.3" r="0.55" fill="#e6f4ff" opacity="0.30"/><circle cx="60.3" cy="149.6" r="0.76" fill="#e6f4ff" opacity="0.69"/><circle cx="90.6" cy="64.1" r="0.63" fill="#e6f4ff" opacity="0.40"/><circle cx="126.5" cy="142.2" r="0.52" fill="#e6f4ff" opacity="0.45"/><circle cx="207.1" cy="105.3" r="0.32" fill="#e6f4ff" opacity="0.49"/><circle cx="155.7" cy="41.7" r="0.51" fill="#e6f4ff" opacity="0.67"/><circle cx="189.0" cy="102.9" r="0.83" fill="#e6f4ff" opacity="0.53"/><circle cx="115.9" cy="132.0" r="0.53" fill="#e6f4ff" opacity="0.72"/><circle cx="88.4" cy="75.0" r="0.41" fill="#e6f4ff" opacity="0.58"/><circle cx="80.4" cy="58.4" r="0.43" fill="#e6f4ff" opacity="0.53"/><circle cx="102.8" cy="86.4" r="0.90" fill="#e6f4ff" opacity="0.66"/><circle cx="188.7" cy="58.5" r="0.53" fill="#e6f4ff" opacity="0.29"/><circle cx="162.2" cy="76.7" r="0.46" fill="#e6f4ff" opacity="0.26"/><circle cx="83.2" cy="65.2" r="0.54" fill="#e6f4ff" opacity="0.80"/><circle cx="165.9" cy="65.9" r="0.52" fill="#e6f4ff" opacity="0.34"/><circle cx="200.2" cy="76.4" r="0.76" fill="#e6f4ff" opacity="0.68"/><circle cx="195.6" cy="37.3" r="0.49" fill="#e6f4ff" opacity="0.48"/><circle cx="67.9" cy="136.5" r="0.50" fill="#e6f4ff" opacity="0.71"/><circle cx="135.5" cy="41.3" r="0.54" fill="#e6f4ff" opacity="0.39"/><circle cx="61.3" cy="52.3" r="0.66" fill="#e6f4ff" opacity="0.27"/><circle cx="103.4" cy="83.8" r="0.63" fill="#e6f4ff" opacity="0.33"/><circle cx="164.5" cy="64.9" r="0.74" fill="#e6f4ff" opacity="0.65"/><circle cx="77.8" cy="58.6" r="0.47" fill="#e6f4ff" opacity="0.68"/><circle cx="117.8" cy="79.4" r="0.82" fill="#e6f4ff" opacity="0.39"/><circle cx="100.3" cy="74.7" r="0.43" fill="#e6f4ff" opacity="0.27"/><circle cx="58.8" cy="107.5" r="0.64" fill="#e6f4ff" opacity="0.74"/><circle cx="206.2" cy="69.3" r="0.70" fill="#e6f4ff" opacity="0.80"/><circle cx="88.5" cy="114.3" r="0.70" fill="#e6f4ff" opacity="0.82"/><circle cx="189.6" cy="62.0" r="0.68" fill="#e6f4ff" opacity="0.30"/><circle cx="121.3" cy="80.1" r="0.34" fill="#e6f4ff" opacity="0.48"/><circle cx="105.9" cy="92.2" r="0.47" fill="#e6f4ff" opacity="0.35"/><circle cx="117.4" cy="89.7" r="0.40" fill="#e6f4ff" opacity="0.65"/><circle cx="92.2" cy="45.7" r="0.51" fill="#e6f4ff" opacity="0.50"/><circle cx="78.4" cy="102.0" r="0.72" fill="#e6f4ff" opacity="0.58"/><circle cx="163.5" cy="37.7" r="0.53" fill="#e6f4ff" opacity="0.47"/><circle cx="64.8" cy="81.5" r="0.33" fill="#e6f4ff" opacity="0.55"/><circle cx="145.8" cy="88.9" r="0.50" fill="#e6f4ff" opacity="0.40"/><circle cx="58.6" cy="74.9" r="0.84" fill="#e6f4ff" opacity="0.59"/><circle cx="95.6" cy="111.8" r="0.41" fill="#e6f4ff" opacity="0.53"/><circle cx="150.4" cy="144.8" r="0.52" fill="#e6f4ff" opacity="0.60"/><circle cx="201.1" cy="123.7" r="0.68" fill="#e6f4ff" opacity="0.62"/><circle cx="118.7" cy="82.8" r="0.47" fill="#e6f4ff" opacity="0.75"/><circle cx="191.4" cy="78.9" r="0.85" fill="#e6f4ff" opacity="0.27"/><circle cx="76.1" cy="93.3" r="0.49" fill="#e6f4ff" opacity="0.47"/><circle cx="206.4" cy="52.2" r="0.42" fill="#e6f4ff" opacity="0.39"/><circle cx="160.4" cy="62.0" r="0.30" fill="#e6f4ff" opacity="0.58"/><circle cx="116.1" cy="62.5" r="0.60" fill="#e6f4ff" opacity="0.64"/><circle cx="140.0" cy="106.8" r="0.64" fill="#e6f4ff" opacity="0.75"/><circle cx="205.2" cy="73.4" r="0.51" fill="#e6f4ff" opacity="0.78"/><circle cx="103.6" cy="117.3" r="0.72" fill="#e6f4ff" opacity="0.66"/><circle cx="204.4" cy="129.8" r="0.40" fill="#e6f4ff" opacity="0.62"/><circle cx="131.1" cy="99.8" r="0.52" fill="#e6f4ff" opacity="0.42"/><circle cx="171.1" cy="96.4" r="0.44" fill="#e6f4ff" opacity="0.40"/><circle cx="105.4" cy="55.4" r="0.61" fill="#e6f4ff" opacity="0.33"/><circle cx="64.8" cy="42.9" r="0.36" fill="#e6f4ff" opacity="0.67"/><circle cx="72.5" cy="86.9" r="0.76" fill="#e6f4ff" opacity="0.54"/><circle cx="80.2" cy="134.6" r="0.82" fill="#e6f4ff" opacity="0.28"/><circle cx="94.4" cy="93.4" r="0.78" fill="#e6f4ff" opacity="0.49"/><circle cx="166.0" cy="64.0" r="0.73" fill="#e6f4ff" opacity="0.45"/><circle cx="106.7" cy="122.3" r="0.81" fill="#e6f4ff" opacity="0.75"/><circle cx="143.0" cy="83.4" r="0.72" fill="#e6f4ff" opacity="0.62"/><circle cx="183.8" cy="127.1" r="0.38" fill="#e6f4ff" opacity="0.48"/><circle cx="158.8" cy="61.6" r="0.41" fill="#e6f4ff" opacity="0.26"/><circle cx="145.8" cy="143.2" r="0.88" fill="#e6f4ff" opacity="0.33"/><circle cx="161.6" cy="83.2" r="0.68" fill="#e6f4ff" opacity="0.49"/><circle cx="199.7" cy="148.7" r="0.33" fill="#e6f4ff" opacity="0.68"/><circle cx="73.4" cy="39.9" r="0.47" fill="#e6f4ff" opacity="0.69"/><circle cx="209.0" cy="48.8" r="0.50" fill="#e6f4ff" opacity="0.27"/><circle cx="139.1" cy="90.6" r="0.52" fill="#e6f4ff" opacity="0.44"/><circle cx="179.1" cy="131.4" r="0.47" fill="#e6f4ff" opacity="0.49"/><circle cx="150.8" cy="123.0" r="0.89" fill="#e6f4ff" opacity="0.48"/><circle cx="162.6" cy="97.8" r="0.78" fill="#e6f4ff" opacity="0.34"/><circle cx="82.1" cy="47.3" r="0.86" fill="#e6f4ff" opacity="0.40"/><circle cx="130.7" cy="48.8" r="0.49" fill="#e6f4ff" opacity="0.26"/><circle cx="142.7" cy="51.5" r="0.68" fill="#e6f4ff" opacity="0.41"/><circle cx="90.3" cy="90.5" r="0.52" fill="#e6f4ff" opacity="0.41"/><circle cx="62.9" cy="42.4" r="0.84" fill="#e6f4ff" opacity="0.44"/><circle cx="67.2" cy="56.0" r="0.59" fill="#e6f4ff" opacity="0.85"/><circle cx="86.3" cy="134.7" r="0.59" fill="#e6f4ff" opacity="0.50"/><circle cx="180.1" cy="80.5" r="0.33" fill="#e6f4ff" opacity="0.58"/><circle cx="156.8" cy="106.6" r="0.47" fill="#e6f4ff" opacity="0.81"/><circle cx="189.0" cy="149.3" r="0.57" fill="#e6f4ff" opacity="0.75"/><circle cx="167.4" cy="55.2" r="0.32" fill="#e6f4ff" opacity="0.35"/><circle cx="73.4" cy="43.6" r="0.52" fill="#e6f4ff" opacity="0.70"/><circle cx="103.1" cy="94.1" r="0.31" fill="#e6f4ff" opacity="0.38"/><circle cx="203.7" cy="36.3" r="0.62" fill="#e6f4ff" opacity="0.74"/><circle cx="177.8" cy="119.6" r="0.54" fill="#e6f4ff" opacity="0.73"/><circle cx="183.3" cy="123.3" r="0.89" fill="#e6f4ff" opacity="0.31"/><circle cx="202.3" cy="81.3" r="0.72" fill="#e6f4ff" opacity="0.40"/><circle cx="196.0" cy="37.7" r="0.65" fill="#e6f4ff" opacity="0.39"/><circle cx="115.2" cy="77.5" r="0.69" fill="#e6f4ff" opacity="0.74"/><circle cx="111.5" cy="108.4" r="0.51" fill="#e6f4ff" opacity="0.42"/><circle cx="195.3" cy="72.0" r="0.36" fill="#e6f4ff" opacity="0.45"/><circle cx="170.0" cy="59.3" r="0.75" fill="#e6f4ff" opacity="0.58"/><circle cx="160.4" cy="55.4" r="0.36" fill="#e6f4ff" opacity="0.34"/><circle cx="109.3" cy="84.5" r="0.31" fill="#e6f4ff" opacity="0.55"/><circle cx="117.5" cy="72.0" r="0.62" fill="#e6f4ff" opacity="0.82"/><circle cx="86.7" cy="136.3" r="0.49" fill="#e6f4ff" opacity="0.70"/><circle cx="71.8" cy="148.6" r="0.56" fill="#e6f4ff" opacity="0.83"/><circle cx="89.0" cy="81.9" r="0.72" fill="#e6f4ff" opacity="0.36"/><circle cx="97.4" cy="112.9" r="0.87" fill="#e6f4ff" opacity="0.44"/><circle cx="83.4" cy="76.1" r="0.89" fill="#e6f4ff" opacity="0.34"/><circle cx="153.4" cy="78.5" r="0.69" fill="#e6f4ff" opacity="0.38"/><circle cx="150.5" cy="137.1" r="0.81" fill="#e6f4ff" opacity="0.63"/><circle cx="133.3" cy="100.3" r="0.37" fill="#e6f4ff" opacity="0.75"/><circle cx="161.9" cy="87.1" r="0.70" fill="#e6f4ff" opacity="0.50"/><circle cx="114.6" cy="61.5" r="0.66" fill="#e6f4ff" opacity="0.59"/><circle cx="134.9" cy="38.7" r="0.68" fill="#e6f4ff" opacity="0.52"/><circle cx="147.0" cy="103.4" r="0.86" fill="#e6f4ff" opacity="0.34"/><circle cx="127.6" cy="149.2" r="0.74" fill="#e6f4ff" opacity="0.44"/><circle cx="169.2" cy="148.8" r="0.54" fill="#e6f4ff" opacity="0.77"/><circle cx="74.6" cy="148.9" r="0.59" fill="#e6f4ff" opacity="0.39"/><circle cx="185.2" cy="109.7" r="0.86" fill="#e6f4ff" opacity="0.75"/><circle cx="178.6" cy="93.8" r="0.90" fill="#e6f4ff" opacity="0.29"/><circle cx="189.9" cy="116.8" r="0.45" fill="#e6f4ff" opacity="0.73"/><circle cx="125.4" cy="96.7" r="0.82" fill="#e6f4ff" opacity="0.37"/><circle cx="98.3" cy="109.0" r="0.34" fill="#e6f4ff" opacity="0.58"/><circle cx="177.0" cy="91.4" r="0.45" fill="#e6f4ff" opacity="0.73"/><circle cx="187.5" cy="123.6" r="0.63" fill="#e6f4ff" opacity="0.79"/><circle cx="178.5" cy="52.5" r="0.52" fill="#e6f4ff" opacity="0.31"/><circle cx="60.7" cy="74.8" r="0.82" fill="#e6f4ff" opacity="0.75"/><circle cx="73.2" cy="55.9" r="0.53" fill="#e6f4ff" opacity="0.76"/><circle cx="150.6" cy="138.7" r="0.34" fill="#e6f4ff" opacity="0.84"/><circle cx="87.0" cy="107.4" r="0.83" fill="#e6f4ff" opacity="0.69"/><circle cx="85.5" cy="111.9" r="0.56" fill="#e6f4ff" opacity="0.26"/><circle cx="107.6" cy="71.3" r="0.68" fill="#e6f4ff" opacity="0.42"/><circle cx="148.5" cy="114.9" r="0.41" fill="#e6f4ff" opacity="0.33"/><circle cx="162.5" cy="88.6" r="0.38" fill="#e6f4ff" opacity="0.32"/><circle cx="200.9" cy="105.2" r="0.51" fill="#e6f4ff" opacity="0.37"/><circle cx="209.2" cy="114.5" r="0.74" fill="#e6f4ff" opacity="0.47"/><circle cx="103.1" cy="82.0" r="0.39" fill="#e6f4ff" opacity="0.63"/><circle cx="120.8" cy="129.3" r="0.55" fill="#e6f4ff" opacity="0.52"/><circle cx="133.5" cy="143.3" r="0.51" fill="#e6f4ff" opacity="0.67"/><circle cx="91.4" cy="101.6" r="0.47" fill="#e6f4ff" opacity="0.77"/><circle cx="99.4" cy="133.3" r="0.71" fill="#e6f4ff" opacity="0.52"/><circle cx="199.7" cy="79.6" r="0.75" fill="#e6f4ff" opacity="0.61"/><circle cx="124.5" cy="42.4" r="0.55" fill="#e6f4ff" opacity="0.42"/><circle cx="123.3" cy="144.8" r="0.48" fill="#e6f4ff" opacity="0.67"/><circle cx="159.2" cy="63.1" r="0.55" fill="#e6f4ff" opacity="0.33"/><circle cx="193.8" cy="63.9" r="0.55" fill="#e6f4ff" opacity="0.45"/><circle cx="182.2" cy="132.8" r="0.65" fill="#e6f4ff" opacity="0.58"/><circle cx="70.4" cy="138.1" r="0.35" fill="#e6f4ff" opacity="0.47"/><circle cx="113.0" cy="118.2" r="0.70" fill="#e6f4ff" opacity="0.46"/><circle cx="194.2" cy="144.2" r="0.31" fill="#e6f4ff" opacity="0.63"/><circle cx="127.7" cy="76.6" r="0.58" fill="#e6f4ff" opacity="0.44"/><circle cx="159.0" cy="104.6" r="0.88" fill="#e6f4ff" opacity="0.84"/><circle cx="208.9" cy="80.4" r="0.80" fill="#e6f4ff" opacity="0.64"/><circle cx="163.7" cy="149.7" r="0.34" fill="#e6f4ff" opacity="0.53"/><circle cx="117.2" cy="110.4" r="0.43" fill="#e6f4ff" opacity="0.84"/><circle cx="87.5" cy="77.5" r="0.39" fill="#e6f4ff" opacity="0.49"/><circle cx="170.0" cy="44.6" r="0.40" fill="#e6f4ff" opacity="0.64"/><circle cx="151.6" cy="120.3" r="0.45" fill="#e6f4ff" opacity="0.74"/><circle cx="168.3" cy="124.2" r="0.37" fill="#e6f4ff" opacity="0.53"/><circle cx="57.4" cy="133.9" r="0.87" fill="#e6f4ff" opacity="0.79"/><circle cx="58.7" cy="75.4" r="0.62" fill="#e6f4ff" opacity="0.57"/><circle cx="72.2" cy="125.8" r="0.48" fill="#e6f4ff" opacity="0.55"/><circle cx="74.3" cy="100.3" r="0.38" fill="#e6f4ff" opacity="0.30"/><circle cx="134.4" cy="68.8" r="0.77" fill="#e6f4ff" opacity="0.40"/><circle cx="119.2" cy="41.2" r="0.43" fill="#e6f4ff" opacity="0.52"/><circle cx="141.5" cy="87.8" r="0.81" fill="#e6f4ff" opacity="0.31"/><circle cx="186.8" cy="52.8" r="0.88" fill="#e6f4ff" opacity="0.56"/><circle cx="118.0" cy="105.4" r="0.82" fill="#e6f4ff" opacity="0.83"/><circle cx="119.1" cy="36.2" r="0.39" fill="#e6f4ff" opacity="0.74"/><circle cx="168.8" cy="117.0" r="0.39" fill="#e6f4ff" opacity="0.57"/><circle cx="59.4" cy="47.7" r="0.48" fill="#e6f4ff" opacity="0.83"/><circle cx="154.7" cy="132.5" r="0.33" fill="#e6f4ff" opacity="0.50"/><circle cx="67.1" cy="65.0" r="0.37" fill="#e6f4ff" opacity="0.80"/><circle cx="106.0" cy="91.2" r="0.69" fill="#e6f4ff" opacity="0.78"/><circle cx="201.7" cy="100.3" r="0.60" fill="#e6f4ff" opacity="0.79"/><circle cx="116.1" cy="69.4" r="0.74" fill="#e6f4ff" opacity="0.40"/><circle cx="112.0" cy="84.4" r="0.59" fill="#e6f4ff" opacity="0.47"/><circle cx="121.7" cy="86.8" r="0.33" fill="#e6f4ff" opacity="0.75"/><circle cx="64.6" cy="95.7" r="0.63" fill="#e6f4ff" opacity="0.49"/><circle cx="89.5" cy="46.4" r="0.52" fill="#e6f4ff" opacity="0.44"/><circle cx="130.0" cy="61.5" r="0.75" fill="#e6f4ff" opacity="0.54"/><circle cx="56.4" cy="81.8" r="0.88" fill="#e6f4ff" opacity="0.25"/><circle cx="147.0" cy="145.5" r="0.52" fill="#e6f4ff" opacity="0.61"/><circle cx="112.2" cy="69.6" r="0.67" fill="#e6f4ff" opacity="0.60"/><circle cx="103.8" cy="92.2" r="0.61" fill="#e6f4ff" opacity="0.70"/><circle cx="63.2" cy="45.7" r="0.45" fill="#e6f4ff" opacity="0.41"/><circle cx="178.3" cy="83.9" r="0.82" fill="#e6f4ff" opacity="0.49"/><circle cx="99.3" cy="113.2" r="0.35" fill="#e6f4ff" opacity="0.84"/><circle cx="183.9" cy="72.7" r="0.49" fill="#e6f4ff" opacity="0.74"/><circle cx="177.2" cy="108.9" r="0.33" fill="#e6f4ff" opacity="0.71"/><circle cx="62.4" cy="106.8" r="0.63" fill="#e6f4ff" opacity="0.81"/><circle cx="154.0" cy="37.6" r="0.86" fill="#e6f4ff" opacity="0.70"/><circle cx="144.9" cy="35.6" r="0.74" fill="#e6f4ff" opacity="0.50"/><circle cx="160.3" cy="148.1" r="0.85" fill="#e6f4ff" opacity="0.29"/><circle cx="176.1" cy="85.7" r="0.75" fill="#e6f4ff" opacity="0.48"/><circle cx="124.4" cy="85.2" r="0.37" fill="#e6f4ff" opacity="0.44"/><circle cx="168.9" cy="43.2" r="0.37" fill="#e6f4ff" opacity="0.75"/><circle cx="158.3" cy="98.0" r="0.37" fill="#e6f4ff" opacity="0.32"/><circle cx="103.1" cy="144.7" r="0.64" fill="#e6f4ff" opacity="0.80"/><circle cx="87.7" cy="82.7" r="0.62" fill="#e6f4ff" opacity="0.75"/><circle cx="74.1" cy="135.5" r="0.58" fill="#e6f4ff" opacity="0.27"/><circle cx="122.0" cy="78.4" r="0.70" fill="#e6f4ff" opacity="0.81"/><circle cx="131.5" cy="114.3" r="0.53" fill="#e6f4ff" opacity="0.72"/><circle cx="71.3" cy="120.4" r="0.40" fill="#e6f4ff" opacity="0.60"/><circle cx="86.3" cy="74.8" r="0.40" fill="#e6f4ff" opacity="0.46"/><circle cx="146.7" cy="94.8" r="0.53" fill="#e6f4ff" opacity="0.59"/><circle cx="185.6" cy="76.2" r="0.65" fill="#e6f4ff" opacity="0.54"/><circle cx="207.0" cy="72.7" r="0.72" fill="#e6f4ff" opacity="0.39"/><circle cx="95.5" cy="119.0" r="0.64" fill="#e6f4ff" opacity="0.40"/><circle cx="64.9" cy="129.9" r="0.53" fill="#e6f4ff" opacity="0.68"/><circle cx="122.1" cy="106.0" r="0.64" fill="#e6f4ff" opacity="0.84"/><circle cx="196.0" cy="87.4" r="0.59" fill="#e6f4ff" opacity="0.39"/><circle cx="171.7" cy="46.8" r="0.48" fill="#e6f4ff" opacity="0.76"/><circle cx="60.4" cy="115.3" r="0.64" fill="#e6f4ff" opacity="0.58"/><circle cx="106.6" cy="52.4" r="0.87" fill="#e6f4ff" opacity="0.71"/><circle cx="179.9" cy="46.2" r="0.77" fill="#e6f4ff" opacity="0.38"/><circle cx="85.9" cy="96.5" r="0.67" fill="#e6f4ff" opacity="0.32"/><circle cx="173.6" cy="102.0" r="0.84" fill="#e6f4ff" opacity="0.80"/><circle cx="161.8" cy="76.9" r="0.87" fill="#e6f4ff" opacity="0.68"/><circle cx="100.1" cy="133.6" r="0.74" fill="#e6f4ff" opacity="0.41"/><circle cx="93.6" cy="37.3" r="0.62" fill="#e6f4ff" opacity="0.40"/><circle cx="100.4" cy="64.1" r="0.38" fill="#e6f4ff" opacity="0.54"/><circle cx="97.3" cy="67.8" r="0.47" fill="#e6f4ff" opacity="0.56"/><circle cx="190.4" cy="53.4" r="0.82" fill="#e6f4ff" opacity="0.76"/><circle cx="149.5" cy="97.5" r="0.74" fill="#e6f4ff" opacity="0.57"/><circle cx="157.3" cy="140.7" r="0.77" fill="#e6f4ff" opacity="0.41"/><circle cx="63.4" cy="142.7" r="0.52" fill="#e6f4ff" opacity="0.72"/><circle cx="91.2" cy="87.1" r="0.52" fill="#e6f4ff" opacity="0.69"/><circle cx="201.3" cy="93.1" r="0.64" fill="#e6f4ff" opacity="0.46"/><circle cx="91.0" cy="144.2" r="0.37" fill="#e6f4ff" opacity="0.81"/><circle cx="156.9" cy="43.3" r="0.84" fill="#e6f4ff" opacity="0.31"/><circle cx="142.6" cy="48.8" r="0.89" fill="#e6f4ff" opacity="0.44"/><circle cx="190.2" cy="42.1" r="0.70" fill="#e6f4ff" opacity="0.29"/><circle cx="59.6" cy="100.7" r="0.89" fill="#e6f4ff" opacity="0.66"/><circle cx="187.6" cy="125.3" r="0.61" fill="#e6f4ff" opacity="0.30"/><circle cx="136.7" cy="56.2" r="0.62" fill="#e6f4ff" opacity="0.46"/><circle cx="132.3" cy="57.7" r="0.72" fill="#e6f4ff" opacity="0.50"/><circle cx="130.3" cy="44.0" r="0.59" fill="#e6f4ff" opacity="0.58"/><circle cx="205.7" cy="99.6" r="0.38" fill="#e6f4ff" opacity="0.43"/><circle cx="107.0" cy="115.7" r="0.86" fill="#e6f4ff" opacity="0.84"/><circle cx="202.2" cy="141.4" r="0.82" fill="#e6f4ff" opacity="0.81"/><circle cx="58.1" cy="91.3" r="0.65" fill="#e6f4ff" opacity="0.66"/><circle cx="150.0" cy="105.5" r="0.86" fill="#e6f4ff" opacity="0.30"/><circle cx="135.5" cy="145.3" r="0.32" fill="#e6f4ff" opacity="0.32"/><circle cx="189.7" cy="145.1" r="0.31" fill="#e6f4ff" opacity="0.27"/><circle cx="183.6" cy="114.2" r="0.61" fill="#e6f4ff" opacity="0.60"/><circle cx="172.4" cy="127.9" r="0.30" fill="#e6f4ff" opacity="0.29"/><circle cx="178.1" cy="147.2" r="0.80" fill="#e6f4ff" opacity="0.49"/><circle cx="107.0" cy="74.9" r="0.31" fill="#e6f4ff" opacity="0.71"/><circle cx="95.7" cy="102.3" r="0.62" fill="#e6f4ff" opacity="0.45"/><circle cx="159.6" cy="87.3" r="0.44" fill="#e6f4ff" opacity="0.78"/><circle cx="82.2" cy="52.2" r="0.45" fill="#e6f4ff" opacity="0.54"/><circle cx="176.5" cy="73.3" r="0.44" fill="#e6f4ff" opacity="0.64"/><circle cx="95.3" cy="95.1" r="0.45" fill="#e6f4ff" opacity="0.78"/><circle cx="83.6" cy="61.7" r="0.48" fill="#e6f4ff" opacity="0.45"/><circle cx="167.6" cy="112.5" r="0.77" fill="#e6f4ff" opacity="0.57"/><circle cx="67.2" cy="122.8" r="0.45" fill="#e6f4ff" opacity="0.38"/><circle cx="119.2" cy="148.8" r="0.52" fill="#e6f4ff" opacity="0.46"/><circle cx="196.2" cy="148.9" r="0.53" fill="#e6f4ff" opacity="0.33"/><circle cx="177.4" cy="125.0" r="0.50" fill="#e6f4ff" opacity="0.72"/><circle cx="113.8" cy="68.0" r="0.66" fill="#e6f4ff" opacity="0.69"/><circle cx="128.8" cy="129.1" r="0.31" fill="#e6f4ff" opacity="0.55"/><circle cx="114.0" cy="42.5" r="0.85" fill="#e6f4ff" opacity="0.34"/><circle cx="86.9" cy="136.0" r="0.88" fill="#e6f4ff" opacity="0.81"/><circle cx="108.0" cy="142.0" r="0.39" fill="#e6f4ff" opacity="0.68"/><circle cx="201.6" cy="57.2" r="0.38" fill="#e6f4ff" opacity="0.66"/><circle cx="191.8" cy="118.5" r="0.87" fill="#e6f4ff" opacity="0.52"/><circle cx="112.7" cy="48.8" r="0.46" fill="#e6f4ff" opacity="0.81"/><circle cx="66.1" cy="56.3" r="0.51" fill="#e6f4ff" opacity="0.28"/><circle cx="102.6" cy="56.0" r="0.37" fill="#e6f4ff" opacity="0.57"/><circle cx="138.7" cy="100.3" r="0.76" fill="#e6f4ff" opacity="0.57"/><circle cx="201.8" cy="44.4" r="0.43" fill="#e6f4ff" opacity="0.30"/><circle cx="103.0" cy="122.5" r="0.85" fill="#e6f4ff" opacity="0.55"/><circle cx="79.9" cy="73.0" r="0.64" fill="#e6f4ff" opacity="0.43"/><circle cx="177.9" cy="146.8" r="0.58" fill="#e6f4ff" opacity="0.61"/><circle cx="186.1" cy="88.5" r="0.41" fill="#e6f4ff" opacity="0.82"/><circle cx="206.6" cy="37.8" r="0.76" fill="#e6f4ff" opacity="0.49"/><circle cx="63.0" cy="53.7" r="0.40" fill="#e6f4ff" opacity="0.69"/><circle cx="87.8" cy="37.3" r="0.43" fill="#e6f4ff" opacity="0.73"/><circle cx="132.4" cy="110.1" r="0.58" fill="#e6f4ff" opacity="0.36"/><circle cx="57.4" cy="70.0" r="0.32" fill="#e6f4ff" opacity="0.41"/><circle cx="150.9" cy="77.5" r="0.58" fill="#e6f4ff" opacity="0.62"/><circle cx="104.2" cy="76.0" r="0.83" fill="#e6f4ff" opacity="0.60"/><circle cx="119.6" cy="97.1" r="0.58" fill="#e6f4ff" opacity="0.45"/><circle cx="196.6" cy="61.8" r="0.86" fill="#e6f4ff" opacity="0.76"/><circle cx="191.7" cy="53.7" r="0.61" fill="#e6f4ff" opacity="0.84"/><circle cx="99.7" cy="54.7" r="0.73" fill="#e6f4ff" opacity="0.39"/><circle cx="145.5" cy="53.1" r="0.87" fill="#e6f4ff" opacity="0.42"/><circle cx="70.0" cy="114.0" r="0.51" fill="#e6f4ff" opacity="0.59"/><circle cx="132.1" cy="141.1" r="0.61" fill="#e6f4ff" opacity="0.48"/><circle cx="55.3" cy="92.1" r="0.46" fill="#e6f4ff" opacity="0.59"/><circle cx="152.9" cy="88.2" r="0.35" fill="#e6f4ff" opacity="0.55"/><circle cx="129.7" cy="108.7" r="0.88" fill="#e6f4ff" opacity="0.42"/><circle cx="123.6" cy="44.7" r="0.78" fill="#e6f4ff" opacity="0.39"/><circle cx="183.5" cy="126.8" r="0.45" fill="#e6f4ff" opacity="0.79"/><circle cx="133.1" cy="84.0" r="0.63" fill="#e6f4ff" opacity="0.82"/><circle cx="130.9" cy="90.5" r="0.47" fill="#e6f4ff" opacity="0.75"/><circle cx="133.0" cy="74.4" r="0.42" fill="#e6f4ff" opacity="0.38"/><circle cx="184.3" cy="127.4" r="0.89" fill="#e6f4ff" opacity="0.80"/><circle cx="161.2" cy="126.7" r="0.73" fill="#e6f4ff" opacity="0.74"/><circle cx="179.2" cy="55.3" r="0.79" fill="#e6f4ff" opacity="0.43"/><circle cx="92.8" cy="140.7" r="0.31" fill="#e6f4ff" opacity="0.56"/><circle cx="108.2" cy="126.1" r="0.67" fill="#e6f4ff" opacity="0.80"/><circle cx="199.5" cy="109.1" r="0.34" fill="#e6f4ff" opacity="0.65"/><circle cx="72.0" cy="148.0" r="0.82" fill="#e6f4ff" opacity="0.44"/><circle cx="83.8" cy="114.8" r="0.75" fill="#e6f4ff" opacity="0.84"/><circle cx="151.5" cy="49.4" r="0.74" fill="#e6f4ff" opacity="0.29"/><circle cx="189.5" cy="123.4" r="0.77" fill="#e6f4ff" opacity="0.77"/><circle cx="143.2" cy="143.5" r="0.68" fill="#e6f4ff" opacity="0.55"/><circle cx="114.6" cy="75.6" r="0.31" fill="#e6f4ff" opacity="0.35"/><circle cx="178.3" cy="61.3" r="0.69" fill="#e6f4ff" opacity="0.72"/><circle cx="162.6" cy="94.3" r="0.49" fill="#e6f4ff" opacity="0.41"/><circle cx="84.0" cy="109.5" r="0.71" fill="#e6f4ff" opacity="0.82"/><circle cx="106.2" cy="141.6" r="0.85" fill="#e6f4ff" opacity="0.42"/><circle cx="202.6" cy="106.2" r="0.88" fill="#e6f4ff" opacity="0.71"/><circle cx="106.7" cy="67.1" r="0.61" fill="#e6f4ff" opacity="0.54"/><circle cx="60.5" cy="134.2" r="0.62" fill="#e6f4ff" opacity="0.53"/><circle cx="170.4" cy="63.7" r="0.42" fill="#e6f4ff" opacity="0.60"/><circle cx="92.4" cy="72.7" r="0.34" fill="#e6f4ff" opacity="0.28"/><circle cx="110.1" cy="95.6" r="0.87" fill="#e6f4ff" opacity="0.63"/><circle cx="119.2" cy="81.8" r="0.44" fill="#e6f4ff" opacity="0.53"/><circle cx="203.7" cy="49.0" r="0.56" fill="#e6f4ff" opacity="0.66"/><circle cx="173.2" cy="98.8" r="0.68" fill="#e6f4ff" opacity="0.81"/><circle cx="194.9" cy="63.9" r="0.62" fill="#e6f4ff" opacity="0.85"/><circle cx="136.8" cy="56.8" r="0.76" fill="#e6f4ff" opacity="0.28"/><circle cx="78.3" cy="98.4" r="0.46" fill="#e6f4ff" opacity="0.68"/><circle cx="167.7" cy="71.7" r="0.76" fill="#e6f4ff" opacity="0.64"/><circle cx="164.4" cy="87.5" r="0.56" fill="#e6f4ff" opacity="0.31"/><circle cx="128.6" cy="144.8" r="0.83" fill="#e6f4ff" opacity="0.28"/><circle cx="66.0" cy="66.0" r="0.72" fill="#e6f4ff" opacity="0.51"/><circle cx="74.8" cy="83.9" r="0.64" fill="#e6f4ff" opacity="0.70"/><circle cx="117.5" cy="109.7" r="0.71" fill="#e6f4ff" opacity="0.62"/><circle cx="62.2" cy="116.7" r="0.38" fill="#e6f4ff" opacity="0.28"/><circle cx="128.4" cy="36.9" r="0.34" fill="#e6f4ff" opacity="0.48"/><circle cx="127.6" cy="47.1" r="0.87" fill="#e6f4ff" opacity="0.76"/><circle cx="130.4" cy="102.6" r="0.49" fill="#e6f4ff" opacity="0.84"/><circle cx="73.6" cy="70.0" r="0.43" fill="#e6f4ff" opacity="0.77"/><circle cx="133.9" cy="82.2" r="0.54" fill="#e6f4ff" opacity="0.78"/><circle cx="94.9" cy="126.0" r="0.72" fill="#e6f4ff" opacity="0.52"/><circle cx="111.7" cy="85.2" r="0.57" fill="#e6f4ff" opacity="0.44"/><circle cx="151.7" cy="82.3" r="0.48" fill="#e6f4ff" opacity="0.71"/><circle cx="125.5" cy="89.5" r="0.83" fill="#e6f4ff" opacity="0.52"/><circle cx="113.3" cy="138.3" r="0.89" fill="#e6f4ff" opacity="0.72"/><circle cx="117.2" cy="112.2" r="0.74" fill="#e6f4ff" opacity="0.43"/><circle cx="167.2" cy="144.2" r="0.69" fill="#e6f4ff" opacity="0.65"/><circle cx="122.4" cy="110.1" r="0.44" fill="#e6f4ff" opacity="0.71"/><circle cx="138.6" cy="147.7" r="0.51" fill="#e6f4ff" opacity="0.68"/><circle cx="57.6" cy="82.9" r="0.76" fill="#e6f4ff" opacity="0.41"/><circle cx="150.1" cy="60.4" r="0.54" fill="#e6f4ff" opacity="0.85"/><circle cx="85.5" cy="140.0" r="0.34" fill="#e6f4ff" opacity="0.60"/><circle cx="182.3" cy="131.3" r="0.53" fill="#e6f4ff" opacity="0.60"/><circle cx="165.4" cy="122.6" r="0.75" fill="#e6f4ff" opacity="0.60"/><circle cx="94.0" cy="116.1" r="0.64" fill="#e6f4ff" opacity="0.58"/><circle cx="208.0" cy="50.7" r="0.77" fill="#e6f4ff" opacity="0.44"/><circle cx="167.6" cy="144.3" r="0.46" fill="#e6f4ff" opacity="0.59"/><circle cx="136.9" cy="91.9" r="0.40" fill="#e6f4ff" opacity="0.63"/><circle cx="193.5" cy="111.3" r="0.47" fill="#e6f4ff" opacity="0.73"/><circle cx="120.1" cy="51.7" r="0.66" fill="#e6f4ff" opacity="0.53"/><circle cx="137.1" cy="149.0" r="0.64" fill="#e6f4ff" opacity="0.82"/><circle cx="109.7" cy="122.3" r="0.35" fill="#e6f4ff" opacity="0.43"/><circle cx="162.2" cy="114.4" r="0.80" fill="#e6f4ff" opacity="0.48"/><circle cx="97.4" cy="76.2" r="0.62" fill="#e6f4ff" opacity="0.26"/><circle cx="113.1" cy="110.6" r="0.39" fill="#e6f4ff" opacity="0.44"/><circle cx="190.3" cy="142.4" r="0.45" fill="#e6f4ff" opacity="0.36"/><circle cx="73.2" cy="44.9" r="0.78" fill="#e6f4ff" opacity="0.69"/><circle cx="96.0" cy="91.2" r="0.72" fill="#e6f4ff" opacity="0.27"/><circle cx="181.9" cy="133.8" r="0.43" fill="#e6f4ff" opacity="0.67"/><circle cx="163.4" cy="73.8" r="0.83" fill="#e6f4ff" opacity="0.38"/><circle cx="128.5" cy="71.1" r="0.57" fill="#e6f4ff" opacity="0.74"/><circle cx="143.3" cy="105.1" r="0.89" fill="#e6f4ff" opacity="0.38"/><circle cx="89.5" cy="106.3" r="0.39" fill="#e6f4ff" opacity="0.83"/><circle cx="107.9" cy="85.6" r="0.56" fill="#e6f4ff" opacity="0.75"/><circle cx="196.9" cy="112.9" r="0.40" fill="#e6f4ff" opacity="0.46"/><circle cx="164.5" cy="59.8" r="0.83" fill="#e6f4ff" opacity="0.77"/><circle cx="90.1" cy="76.9" r="0.44" fill="#e6f4ff" opacity="0.68"/><circle cx="62.3" cy="115.0" r="0.34" fill="#e6f4ff" opacity="0.75"/><circle cx="139.2" cy="102.1" r="0.36" fill="#e6f4ff" opacity="0.28"/><circle cx="109.7" cy="148.2" r="0.66" fill="#e6f4ff" opacity="0.77"/><circle cx="64.7" cy="46.7" r="0.31" fill="#e6f4ff" opacity="0.67"/><circle cx="82.3" cy="66.4" r="0.70" fill="#e6f4ff" opacity="0.67"/><circle cx="105.0" cy="88.8" r="0.47" fill="#e6f4ff" opacity="0.59"/><circle cx="110.2" cy="76.4" r="0.45" fill="#e6f4ff" opacity="0.43"/><circle cx="95.4" cy="36.9" r="0.49" fill="#e6f4ff" opacity="0.61"/><circle cx="96.6" cy="48.0" r="0.81" fill="#e6f4ff" opacity="0.53"/><circle cx="134.3" cy="70.9" r="0.83" fill="#e6f4ff" opacity="0.70"/><circle cx="151.5" cy="110.8" r="0.72" fill="#e6f4ff" opacity="0.55"/><circle cx="119.0" cy="79.9" r="0.60" fill="#e6f4ff" opacity="0.53"/><circle cx="137.0" cy="96.3" r="0.77" fill="#e6f4ff" opacity="0.79"/><circle cx="89.7" cy="37.6" r="0.48" fill="#e6f4ff" opacity="0.27"/><circle cx="178.4" cy="106.3" r="0.47" fill="#e6f4ff" opacity="0.36"/><circle cx="189.6" cy="131.2" r="0.71" fill="#e6f4ff" opacity="0.67"/><circle cx="170.4" cy="87.3" r="0.54" fill="#e6f4ff" opacity="0.58"/><circle cx="191.5" cy="149.0" r="0.85" fill="#e6f4ff" opacity="0.75"/><circle cx="66.5" cy="63.4" r="0.88" fill="#e6f4ff" opacity="0.58"/><circle cx="134.8" cy="70.6" r="0.82" fill="#e6f4ff" opacity="0.56"/><circle cx="208.5" cy="43.7" r="0.90" fill="#e6f4ff" opacity="0.26"/><circle cx="78.0" cy="79.8" r="0.68" fill="#e6f4ff" opacity="0.32"/><circle cx="142.2" cy="143.0" r="0.56" fill="#e6f4ff" opacity="0.71"/><circle cx="146.7" cy="102.0" r="0.40" fill="#e6f4ff" opacity="0.53"/><circle cx="194.6" cy="112.5" r="0.43" fill="#e6f4ff" opacity="0.52"/><circle cx="139.3" cy="73.7" r="0.65" fill="#e6f4ff" opacity="0.63"/><circle cx="57.8" cy="60.3" r="0.69" fill="#e6f4ff" opacity="0.38"/><circle cx="66.3" cy="122.6" r="0.50" fill="#e6f4ff" opacity="0.82"/><circle cx="141.6" cy="46.7" r="0.68" fill="#e6f4ff" opacity="0.41"/><circle cx="181.2" cy="118.3" r="0.76" fill="#e6f4ff" opacity="0.28"/><circle cx="60.3" cy="126.8" r="0.38" fill="#e6f4ff" opacity="0.37"/><circle cx="59.6" cy="53.8" r="0.58" fill="#e6f4ff" opacity="0.82"/><circle cx="104.8" cy="64.8" r="0.80" fill="#e6f4ff" opacity="0.36"/><circle cx="153.4" cy="105.7" r="0.86" fill="#e6f4ff" opacity="0.28"/><circle cx="142.3" cy="79.0" r="0.79" fill="#e6f4ff" opacity="0.40"/><circle cx="165.8" cy="56.3" r="0.60" fill="#e6f4ff" opacity="0.83"/><circle cx="92.2" cy="67.1" r="0.85" fill="#e6f4ff" opacity="0.65"/><circle cx="65.2" cy="56.4" r="0.44" fill="#e6f4ff" opacity="0.42"/><circle cx="185.9" cy="115.6" r="0.89" fill="#e6f4ff" opacity="0.65"/><circle cx="152.3" cy="79.1" r="0.73" fill="#e6f4ff" opacity="0.55"/><circle cx="64.1" cy="91.6" r="0.53" fill="#e6f4ff" opacity="0.57"/><circle cx="62.6" cy="38.2" r="0.89" fill="#e6f4ff" opacity="0.47"/><circle cx="106.2" cy="52.1" r="0.66" fill="#e6f4ff" opacity="0.80"/><circle cx="83.0" cy="92.5" r="0.60" fill="#e6f4ff" opacity="0.71"/><circle cx="142.6" cy="62.5" r="0.41" fill="#e6f4ff" opacity="0.68"/><circle cx="67.1" cy="134.4" r="0.32" fill="#e6f4ff" opacity="0.36"/><circle cx="127.5" cy="132.1" r="0.67" fill="#e6f4ff" opacity="0.70"/><circle cx="173.0" cy="118.1" r="0.33" fill="#e6f4ff" opacity="0.75"/><circle cx="77.9" cy="53.7" r="0.32" fill="#e6f4ff" opacity="0.27"/><circle cx="190.9" cy="78.8" r="0.35" fill="#e6f4ff" opacity="0.28"/><circle cx="186.2" cy="104.2" r="0.85" fill="#e6f4ff" opacity="0.27"/><circle cx="72.4" cy="68.0" r="0.41" fill="#e6f4ff" opacity="0.32"/><circle cx="86.1" cy="108.6" r="0.40" fill="#e6f4ff" opacity="0.35"/><circle cx="138.0" cy="78.2" r="0.39" fill="#e6f4ff" opacity="0.59"/><circle cx="133.7" cy="79.6" r="0.58" fill="#e6f4ff" opacity="0.27"/><circle cx="150.3" cy="57.2" r="0.50" fill="#e6f4ff" opacity="0.26"/><circle cx="192.6" cy="102.6" r="0.54" fill="#e6f4ff" opacity="0.58"/><circle cx="200.7" cy="50.2" r="0.53" fill="#e6f4ff" opacity="0.67"/><circle cx="112.7" cy="116.3" r="0.84" fill="#e6f4ff" opacity="0.27"/><circle cx="99.1" cy="68.7" r="0.75" fill="#e6f4ff" opacity="0.72"/><circle cx="163.4" cy="141.3" r="0.41" fill="#e6f4ff" opacity="0.49"/><circle cx="187.2" cy="123.0" r="0.37" fill="#e6f4ff" opacity="0.84"/><circle cx="169.8" cy="134.6" r="0.52" fill="#e6f4ff" opacity="0.61"/><circle cx="203.6" cy="138.3" r="0.65" fill="#e6f4ff" opacity="0.78"/><circle cx="209.8" cy="131.5" r="0.69" fill="#e6f4ff" opacity="0.83"/><circle cx="77.3" cy="81.4" r="0.64" fill="#e6f4ff" opacity="0.33"/><circle cx="176.0" cy="42.1" r="0.68" fill="#e6f4ff" opacity="0.42"/><circle cx="105.0" cy="104.8" r="0.41" fill="#e6f4ff" opacity="0.52"/><circle cx="187.9" cy="148.5" r="0.46" fill="#e6f4ff" opacity="0.47"/><circle cx="162.5" cy="56.8" r="0.81" fill="#e6f4ff" opacity="0.37"/><circle cx="141.3" cy="74.0" r="0.30" fill="#e6f4ff" opacity="0.25"/><circle cx="55.3" cy="72.7" r="0.47" fill="#e6f4ff" opacity="0.84"/><circle cx="153.8" cy="42.5" r="0.73" fill="#e6f4ff" opacity="0.39"/><circle cx="129.6" cy="118.1" r="0.81" fill="#e6f4ff" opacity="0.81"/><circle cx="120.2" cy="71.5" r="0.54" fill="#e6f4ff" opacity="0.44"/><circle cx="170.0" cy="88.2" r="0.71" fill="#e6f4ff" opacity="0.34"/><circle cx="176.3" cy="146.2" r="0.42" fill="#e6f4ff" opacity="0.62"/><circle cx="80.1" cy="39.1" r="0.55" fill="#e6f4ff" opacity="0.36"/><circle cx="168.3" cy="100.8" r="0.70" fill="#e6f4ff" opacity="0.83"/><circle cx="64.0" cy="46.3" r="0.32" fill="#e6f4ff" opacity="0.53"/><circle cx="182.8" cy="113.6" r="0.63" fill="#e6f4ff" opacity="0.76"/><circle cx="112.7" cy="48.0" r="0.68" fill="#e6f4ff" opacity="0.27"/><circle cx="90.6" cy="38.4" r="0.40" fill="#e6f4ff" opacity="0.29"/><circle cx="137.4" cy="49.7" r="0.66" fill="#e6f4ff" opacity="0.74"/><circle cx="108.4" cy="48.8" r="0.70" fill="#e6f4ff" opacity="0.69"/><circle cx="192.0" cy="98.7" r="0.65" fill="#e6f4ff" opacity="0.77"/><circle cx="160.0" cy="147.1" r="0.47" fill="#e6f4ff" opacity="0.71"/><circle cx="153.1" cy="88.9" r="0.31" fill="#e6f4ff" opacity="0.54"/><circle cx="95.8" cy="104.2" r="0.61" fill="#e6f4ff" opacity="0.56"/><circle cx="64.1" cy="50.1" r="0.66" fill="#e6f4ff" opacity="0.66"/><circle cx="208.5" cy="126.2" r="0.47" fill="#e6f4ff" opacity="0.52"/><circle cx="133.4" cy="127.5" r="0.54" fill="#e6f4ff" opacity="0.80"/><circle cx="130.0" cy="80.8" r="0.59" fill="#e6f4ff" opacity="0.46"/><circle cx="209.9" cy="40.3" r="0.54" fill="#e6f4ff" opacity="0.30"/><circle cx="160.1" cy="52.3" r="0.39" fill="#e6f4ff" opacity="0.50"/><circle cx="148.3" cy="122.8" r="0.57" fill="#e6f4ff" opacity="0.43"/><circle cx="112.0" cy="137.2" r="0.43" fill="#e6f4ff" opacity="0.26"/><circle cx="192.3" cy="90.5" r="0.38" fill="#e6f4ff" opacity="0.33"/><circle cx="193.0" cy="121.1" r="0.34" fill="#e6f4ff" opacity="0.66"/><circle cx="88.1" cy="86.3" r="0.66" fill="#e6f4ff" opacity="0.28"/><circle cx="200.0" cy="73.5" r="0.39" fill="#e6f4ff" opacity="0.72"/><circle cx="71.9" cy="39.3" r="0.69" fill="#e6f4ff" opacity="0.53"/><circle cx="194.6" cy="125.9" r="0.42" fill="#e6f4ff" opacity="0.28"/><circle cx="148.5" cy="89.1" r="0.48" fill="#e6f4ff" opacity="0.80"/><circle cx="87.3" cy="109.0" r="0.34" fill="#e6f4ff" opacity="0.80"/><circle cx="202.1" cy="106.1" r="0.49" fill="#e6f4ff" opacity="0.68"/><circle cx="195.0" cy="126.4" r="0.32" fill="#e6f4ff" opacity="0.55"/><circle cx="76.7" cy="97.8" r="0.87" fill="#e6f4ff" opacity="0.77"/><circle cx="93.6" cy="98.5" r="0.49" fill="#e6f4ff" opacity="0.35"/><circle cx="170.3" cy="122.3" r="0.50" fill="#e6f4ff" opacity="0.50"/><circle cx="163.0" cy="118.7" r="0.58" fill="#e6f4ff" opacity="0.32"/><circle cx="69.8" cy="54.5" r="0.80" fill="#e6f4ff" opacity="0.55"/><circle cx="154.9" cy="76.9" r="0.52" fill="#e6f4ff" opacity="0.36"/><circle cx="206.1" cy="104.6" r="0.38" fill="#e6f4ff" opacity="0.67"/><circle cx="147.7" cy="105.5" r="0.76" fill="#e6f4ff" opacity="0.62"/><circle cx="190.9" cy="146.5" r="0.54" fill="#e6f4ff" opacity="0.64"/><circle cx="113.0" cy="82.2" r="0.52" fill="#e6f4ff" opacity="0.64"/><circle cx="109.6" cy="75.5" r="0.81" fill="#e6f4ff" opacity="0.73"/><circle cx="159.8" cy="132.0" r="0.53" fill="#e6f4ff" opacity="0.64"/><circle cx="93.9" cy="71.3" r="0.36" fill="#e6f4ff" opacity="0.73"/><circle cx="197.8" cy="69.8" r="0.53" fill="#e6f4ff" opacity="0.32"/><circle cx="77.0" cy="108.4" r="0.84" fill="#e6f4ff" opacity="0.30"/><circle cx="94.5" cy="122.3" r="0.44" fill="#e6f4ff" opacity="0.78"/><circle cx="109.7" cy="89.4" r="0.42" fill="#e6f4ff" opacity="0.42"/><circle cx="120.8" cy="67.0" r="0.74" fill="#e6f4ff" opacity="0.27"/><circle cx="154.0" cy="127.3" r="0.50" fill="#e6f4ff" opacity="0.36"/><circle cx="73.6" cy="43.9" r="0.78" fill="#e6f4ff" opacity="0.61"/><circle cx="57.3" cy="87.1" r="0.66" fill="#e6f4ff" opacity="0.44"/><circle cx="60.4" cy="83.4" r="0.51" fill="#e6f4ff" opacity="0.83"/><circle cx="110.8" cy="141.1" r="0.82" fill="#e6f4ff" opacity="0.59"/><circle cx="74.5" cy="127.9" r="0.35" fill="#e6f4ff" opacity="0.58"/><circle cx="70.1" cy="45.6" r="0.55" fill="#e6f4ff" opacity="0.34"/><circle cx="208.8" cy="101.5" r="0.84" fill="#e6f4ff" opacity="0.82"/><circle cx="172.5" cy="109.3" r="0.58" fill="#e6f4ff" opacity="0.72"/><circle cx="158.8" cy="53.2" r="0.62" fill="#e6f4ff" opacity="0.50"/><circle cx="134.9" cy="117.0" r="0.71" fill="#e6f4ff" opacity="0.59"/><circle cx="177.3" cy="129.9" r="0.36" fill="#e6f4ff" opacity="0.34"/><circle cx="62.3" cy="53.4" r="0.88" fill="#e6f4ff" opacity="0.44"/><circle cx="123.0" cy="88.5" r="0.64" fill="#e6f4ff" opacity="0.42"/><circle cx="175.7" cy="73.1" r="0.81" fill="#e6f4ff" opacity="0.73"/><circle cx="55.2" cy="98.0" r="0.36" fill="#e6f4ff" opacity="0.78"/><circle cx="65.8" cy="65.7" r="0.76" fill="#e6f4ff" opacity="0.60"/><circle cx="158.4" cy="82.5" r="0.61" fill="#e6f4ff" opacity="0.37"/><circle cx="126.7" cy="64.6" r="0.71" fill="#e6f4ff" opacity="0.31"/><circle cx="76.3" cy="57.7" r="0.62" fill="#e6f4ff" opacity="0.60"/><circle cx="55.5" cy="148.5" r="0.80" fill="#e6f4ff" opacity="0.48"/><circle cx="79.6" cy="130.0" r="0.89" fill="#e6f4ff" opacity="0.36"/><circle cx="184.9" cy="70.0" r="0.77" fill="#d8f0ff" opacity="0.51"/><circle cx="70.2" cy="100.8" r="0.42" fill="#d8f0ff" opacity="0.90"/><circle cx="189.2" cy="108.2" r="0.36" fill="#d8f0ff" opacity="0.59"/><circle cx="72.5" cy="71.6" r="0.66" fill="#d8f0ff" opacity="0.83"/><circle cx="112.4" cy="44.4" r="0.53" fill="#d8f0ff" opacity="0.60"/><circle cx="116.3" cy="40.8" r="0.66" fill="#d8f0ff" opacity="0.58"/><circle cx="143.5" cy="48.2" r="0.32" fill="#d8f0ff" opacity="0.61"/><circle cx="97.5" cy="56.3" r="0.34" fill="#d8f0ff" opacity="0.63"/><circle cx="192.2" cy="117.0" r="0.32" fill="#d8f0ff" opacity="0.57"/><circle cx="97.6" cy="52.3" r="0.37" fill="#d8f0ff" opacity="0.72"/><circle cx="187.4" cy="91.2" r="0.39" fill="#d8f0ff" opacity="0.46"/><circle cx="68.3" cy="127.2" r="0.42" fill="#d8f0ff" opacity="0.80"/><circle cx="180.7" cy="81.4" r="0.39" fill="#d8f0ff" opacity="0.57"/><circle cx="185.7" cy="73.4" r="0.45" fill="#d8f0ff" opacity="0.65"/><circle cx="93.7" cy="52.4" r="0.70" fill="#d8f0ff" opacity="0.54"/><circle cx="192.0" cy="82.6" r="0.60" fill="#d8f0ff" opacity="0.93"/><circle cx="184.5" cy="114.1" r="0.80" fill="#d8f0ff" opacity="0.51"/><circle cx="182.2" cy="84.2" r="0.45" fill="#d8f0ff" opacity="0.64"/><circle cx="191.0" cy="90.5" r="0.40" fill="#d8f0ff" opacity="0.89"/><circle cx="189.8" cy="97.3" r="0.33" fill="#d8f0ff" opacity="0.56"/><circle cx="82.4" cy="62.9" r="0.77" fill="#d8f0ff" opacity="0.73"/><circle cx="182.6" cy="87.6" r="0.42" fill="#d8f0ff" opacity="0.80"/><circle cx="92.5" cy="56.8" r="0.33" fill="#d8f0ff" opacity="0.43"/><circle cx="106.1" cy="45.2" r="0.50" fill="#d8f0ff" opacity="0.71"/><circle cx="85.8" cy="66.3" r="0.64" fill="#d8f0ff" opacity="0.58"/><circle cx="125.9" cy="43.4" r="0.43" fill="#d8f0ff" opacity="0.43"/><circle cx="84.1" cy="63.1" r="0.36" fill="#d8f0ff" opacity="0.42"/><circle cx="123.6" cy="47.8" r="0.74" fill="#d8f0ff" opacity="0.60"/><circle cx="113.8" cy="43.2" r="0.31" fill="#d8f0ff" opacity="0.46"/><circle cx="185.5" cy="78.0" r="0.55" fill="#d8f0ff" opacity="0.59"/><circle cx="181.0" cy="70.9" r="0.70" fill="#d8f0ff" opacity="0.86"/><circle cx="192.6" cy="104.4" r="0.64" fill="#d8f0ff" opacity="0.65"/><circle cx="136.5" cy="41.6" r="0.56" fill="#d8f0ff" opacity="0.85"/><circle cx="184.1" cy="96.1" r="0.68" fill="#d8f0ff" opacity="0.74"/><circle cx="154.2" cy="42.3" r="0.32" fill="#d8f0ff" opacity="0.66"/><circle cx="95.2" cy="44.9" r="0.38" fill="#d8f0ff" opacity="0.71"/><circle cx="63.5" cy="94.6" r="0.54" fill="#d8f0ff" opacity="0.80"/><circle cx="80.8" cy="56.4" r="0.30" fill="#d8f0ff" opacity="0.52"/><circle cx="182.2" cy="64.6" r="0.69" fill="#d8f0ff" opacity="0.55"/><circle cx="64.2" cy="110.8" r="0.67" fill="#d8f0ff" opacity="0.43"/><circle cx="188.9" cy="114.3" r="0.32" fill="#d8f0ff" opacity="0.66"/><circle cx="93.0" cy="58.3" r="0.74" fill="#d8f0ff" opacity="0.91"/><circle cx="66.8" cy="99.9" r="0.44" fill="#d8f0ff" opacity="0.77"/><circle cx="68.2" cy="103.3" r="0.51" fill="#d8f0ff" opacity="0.66"/><circle cx="111.5" cy="42.9" r="0.77" fill="#d8f0ff" opacity="0.91"/><circle cx="193.6" cy="107.9" r="0.41" fill="#d8f0ff" opacity="0.53"/><circle cx="117.6" cy="41.1" r="0.60" fill="#d8f0ff" opacity="0.59"/><circle cx="182.0" cy="126.5" r="0.31" fill="#d8f0ff" opacity="0.45"/><circle cx="68.0" cy="78.5" r="0.72" fill="#d8f0ff" opacity="0.42"/><circle cx="76.4" cy="74.8" r="0.69" fill="#d8f0ff" opacity="0.89"/><circle cx="81.1" cy="70.6" r="0.78" fill="#d8f0ff" opacity="0.93"/><circle cx="175.6" cy="64.2" r="0.67" fill="#d8f0ff" opacity="0.82"/><circle cx="130.3" cy="44.7" r="0.56" fill="#d8f0ff" opacity="0.76"/><circle cx="86.2" cy="55.5" r="0.37" fill="#d8f0ff" opacity="0.93"/><circle cx="73.9" cy="80.3" r="0.78" fill="#d8f0ff" opacity="0.92"/><circle cx="193.1" cy="112.6" r="0.72" fill="#d8f0ff" opacity="0.85"/><circle cx="143.2" cy="49.0" r="0.67" fill="#d8f0ff" opacity="0.86"/><circle cx="183.3" cy="91.6" r="0.33" fill="#d8f0ff" opacity="0.80"/><circle cx="124.7" cy="37.3" r="0.80" fill="#d8f0ff" opacity="0.65"/><circle cx="170.0" cy="55.2" r="0.65" fill="#d8f0ff" opacity="0.60"/><circle cx="158.5" cy="55.8" r="0.75" fill="#d8f0ff" opacity="0.80"/><circle cx="186.0" cy="82.4" r="0.40" fill="#d8f0ff" opacity="0.65"/><circle cx="170.0" cy="57.1" r="0.35" fill="#d8f0ff" opacity="0.40"/><circle cx="104.2" cy="49.9" r="0.41" fill="#d8f0ff" opacity="0.52"/><circle cx="106.3" cy="43.3" r="0.76" fill="#d8f0ff" opacity="0.77"/><circle cx="66.5" cy="126.3" r="0.60" fill="#d8f0ff" opacity="0.80"/><circle cx="154.9" cy="49.8" r="0.47" fill="#d8f0ff" opacity="0.44"/><circle cx="163.0" cy="59.1" r="0.64" fill="#d8f0ff" opacity="0.90"/><circle cx="168.0" cy="54.5" r="0.70" fill="#d8f0ff" opacity="0.93"/><circle cx="193.0" cy="82.9" r="0.53" fill="#d8f0ff" opacity="0.41"/><circle cx="156.6" cy="46.9" r="0.73" fill="#d8f0ff" opacity="0.74"/><circle cx="98.4" cy="56.0" r="0.72" fill="#d8f0ff" opacity="0.74"/><circle cx="185.8" cy="126.5" r="0.73" fill="#d8f0ff" opacity="0.82"/><circle cx="183.7" cy="127.1" r="0.75" fill="#d8f0ff" opacity="0.62"/><circle cx="73.6" cy="125.9" r="0.48" fill="#d8f0ff" opacity="0.95"/><circle cx="103.4" cy="49.8" r="0.65" fill="#d8f0ff" opacity="0.45"/><circle cx="84.8" cy="60.8" r="0.36" fill="#d8f0ff" opacity="0.73"/><circle cx="107.7" cy="41.5" r="0.47" fill="#d8f0ff" opacity="0.94"/><circle cx="69.1" cy="82.5" r="0.41" fill="#d8f0ff" opacity="0.41"/><circle cx="79.7" cy="57.4" r="0.45" fill="#d8f0ff" opacity="0.67"/><circle cx="133.8" cy="45.0" r="0.57" fill="#d8f0ff" opacity="0.44"/><circle cx="93.8" cy="55.0" r="0.71" fill="#d8f0ff" opacity="0.82"/><circle cx="174.1" cy="60.3" r="0.73" fill="#d8f0ff" opacity="0.81"/><circle cx="72.4" cy="115.5" r="0.67" fill="#d8f0ff" opacity="0.86"/><circle cx="187.4" cy="128.3" r="0.38" fill="#d8f0ff" opacity="0.71"/><circle cx="158.7" cy="48.4" r="0.37" fill="#d8f0ff" opacity="0.93"/><circle cx="130.5" cy="44.7" r="0.79" fill="#d8f0ff" opacity="0.61"/><circle cx="65.1" cy="113.4" r="0.43" fill="#d8f0ff" opacity="0.52"/><circle cx="82.4" cy="59.6" r="0.46" fill="#d8f0ff" opacity="0.77"/><circle cx="195.6" cy="107.6" r="0.74" fill="#d8f0ff" opacity="0.91"/><circle cx="72.3" cy="67.9" r="0.34" fill="#d8f0ff" opacity="0.72"/><circle cx="71.8" cy="111.0" r="0.77" fill="#d8f0ff" opacity="0.47"/><circle cx="176.2" cy="63.9" r="0.30" fill="#d8f0ff" opacity="0.84"/><circle cx="63.0" cy="116.3" r="0.71" fill="#d8f0ff" opacity="0.67"/><circle cx="115.8" cy="48.9" r="0.65" fill="#d8f0ff" opacity="0.42"/><circle cx="135.1" cy="37.3" r="0.64" fill="#d8f0ff" opacity="0.46"/><circle cx="178.5" cy="63.3" r="0.46" fill="#d8f0ff" opacity="0.82"/><circle cx="147.2" cy="46.0" r="0.56" fill="#d8f0ff" opacity="0.55"/><circle cx="77.1" cy="60.3" r="0.47" fill="#d8f0ff" opacity="0.82"/><circle cx="97.9" cy="53.8" r="0.30" fill="#d8f0ff" opacity="0.93"/><circle cx="186.0" cy="68.0" r="0.59" fill="#d8f0ff" opacity="0.43"/><circle cx="72.7" cy="91.4" r="0.61" fill="#d8f0ff" opacity="0.74"/><circle cx="184.9" cy="118.5" r="0.42" fill="#d8f0ff" opacity="0.52"/><circle cx="72.4" cy="94.9" r="0.55" fill="#d8f0ff" opacity="0.63"/><circle cx="93.4" cy="45.9" r="0.46" fill="#d8f0ff" opacity="0.85"/><circle cx="135.5" cy="47.1" r="0.31" fill="#d8f0ff" opacity="0.74"/><circle cx="184.3" cy="99.7" r="0.65" fill="#d8f0ff" opacity="0.53"/><circle cx="173.6" cy="55.8" r="0.66" fill="#d8f0ff" opacity="0.53"/><circle cx="61.3" cy="91.2" r="0.76" fill="#d8f0ff" opacity="0.91"/><circle cx="137.4" cy="48.0" r="0.48" fill="#d8f0ff" opacity="0.90"/><circle cx="69.8" cy="113.3" r="0.32" fill="#d8f0ff" opacity="0.88"/><circle cx="96.1" cy="56.5" r="0.48" fill="#d8f0ff" opacity="0.51"/><circle cx="111.0" cy="42.8" r="0.63" fill="#d8f0ff" opacity="0.45"/><circle cx="135.9" cy="47.8" r="0.52" fill="#d8f0ff" opacity="0.84"/><circle cx="73.7" cy="65.9" r="0.42" fill="#d8f0ff" opacity="0.62"/><circle cx="179.9" cy="82.1" r="0.58" fill="#d8f0ff" opacity="0.70"/><circle cx="179.8" cy="60.2" r="0.65" fill="#d8f0ff" opacity="0.52"/><circle cx="69.9" cy="81.9" r="0.44" fill="#d8f0ff" opacity="0.70"/><circle cx="64.1" cy="108.5" r="0.51" fill="#d8f0ff" opacity="0.43"/><circle cx="60.8" cy="100.6" r="0.72" fill="#d8f0ff" opacity="0.88"/><circle cx="98.5" cy="42.7" r="0.39" fill="#d8f0ff" opacity="0.80"/><circle cx="184.7" cy="115.1" r="0.30" fill="#d8f0ff" opacity="0.47"/><circle cx="63.0" cy="110.3" r="0.60" fill="#d8f0ff" opacity="0.66"/><circle cx="64.4" cy="102.2" r="0.37" fill="#d8f0ff" opacity="0.47"/><circle cx="151.8" cy="44.7" r="0.70" fill="#d8f0ff" opacity="0.85"/><circle cx="68.8" cy="96.9" r="0.37" fill="#d8f0ff" opacity="0.67"/><circle cx="65.8" cy="124.4" r="0.64" fill="#d8f0ff" opacity="0.84"/><circle cx="124.8" cy="37.1" r="0.72" fill="#d8f0ff" opacity="0.86"/><circle cx="183.4" cy="84.1" r="0.47" fill="#d8f0ff" opacity="0.43"/><circle cx="182.3" cy="73.8" r="0.79" fill="#d8f0ff" opacity="0.56"/><circle cx="109.6" cy="40.1" r="0.78" fill="#d8f0ff" opacity="0.82"/><circle cx="195.1" cy="101.4" r="0.44" fill="#d8f0ff" opacity="0.74"/><circle cx="65.4" cy="115.1" r="0.78" fill="#d8f0ff" opacity="0.68"/><circle cx="65.8" cy="94.5" r="0.33" fill="#d8f0ff" opacity="0.65"/><circle cx="67.8" cy="110.5" r="0.71" fill="#d8f0ff" opacity="0.81"/><circle cx="188.9" cy="94.5" r="0.52" fill="#d8f0ff" opacity="0.43"/><circle cx="186.0" cy="78.8" r="0.50" fill="#d8f0ff" opacity="0.48"/><circle cx="118.5" cy="47.9" r="0.36" fill="#d8f0ff" opacity="0.44"/><circle cx="110.7" cy="48.8" r="0.71" fill="#d8f0ff" opacity="0.74"/><circle cx="190.4" cy="97.6" r="0.38" fill="#d8f0ff" opacity="0.55"/><circle cx="189.9" cy="90.8" r="0.62" fill="#d8f0ff" opacity="0.75"/><circle cx="72.0" cy="117.3" r="0.52" fill="#d8f0ff" opacity="0.86"/><circle cx="189.2" cy="116.6" r="0.43" fill="#d8f0ff" opacity="0.43"/><circle cx="142.5" cy="44.7" r="0.77" fill="#d8f0ff" opacity="0.51"/><circle cx="75.7" cy="82.6" r="0.31" fill="#d8f0ff" opacity="0.84"/><circle cx="185.6" cy="98.9" r="0.31" fill="#d8f0ff" opacity="0.72"/><circle cx="73.6" cy="70.7" r="0.76" fill="#d8f0ff" opacity="0.81"/><circle cx="78.6" cy="63.8" r="0.44" fill="#d8f0ff" opacity="0.82"/><circle cx="72.6" cy="66.5" r="0.64" fill="#d8f0ff" opacity="0.89"/><circle cx="88.3" cy="49.1" r="0.59" fill="#d8f0ff" opacity="0.54"/><circle cx="161.6" cy="54.3" r="0.36" fill="#d8f0ff" opacity="0.42"/><circle cx="153.6" cy="50.7" r="0.35" fill="#d8f0ff" opacity="0.83"/><circle cx="63.4" cy="95.2" r="0.44" fill="#d8f0ff" opacity="0.60"/><circle cx="192.6" cy="114.4" r="0.72" fill="#d8f0ff" opacity="0.94"/><circle cx="155.6" cy="42.5" r="0.61" fill="#d8f0ff" opacity="0.72"/><circle cx="88.2" cy="57.9" r="0.58" fill="#d8f0ff" opacity="0.54"/><circle cx="164.3" cy="48.1" r="0.66" fill="#d8f0ff" opacity="0.52"/><circle cx="71.6" cy="122.5" r="0.52" fill="#d8f0ff" opacity="0.87"/><circle cx="139.9" cy="42.8" r="0.60" fill="#d8f0ff" opacity="0.70"/><circle cx="169.6" cy="56.6" r="0.58" fill="#d8f0ff" opacity="0.53"/><circle cx="66.9" cy="100.0" r="0.74" fill="#d8f0ff" opacity="0.92"/><circle cx="81.0" cy="61.5" r="0.56" fill="#d8f0ff" opacity="0.65"/><circle cx="64.7" cy="85.9" r="0.34" fill="#d8f0ff" opacity="0.53"/><circle cx="82.2" cy="67.0" r="0.40" fill="#d8f0ff" opacity="0.44"/><circle cx="133.6" cy="46.1" r="0.62" fill="#d8f0ff" opacity="0.73"/><circle cx="158.0" cy="49.8" r="0.61" fill="#d8f0ff" opacity="0.56"/><circle cx="118.6" cy="40.4" r="0.41" fill="#d8f0ff" opacity="0.80"/><circle cx="151.1" cy="40.3" r="0.61" fill="#d8f0ff" opacity="0.70"/><circle cx="180.7" cy="75.7" r="0.49" fill="#d8f0ff" opacity="0.64"/><circle cx="180.8" cy="66.0" r="0.39" fill="#d8f0ff" opacity="0.92"/><circle cx="185.0" cy="125.3" r="0.80" fill="#d8f0ff" opacity="0.74"/><circle cx="102.2" cy="52.9" r="0.31" fill="#d8f0ff" opacity="0.73"/><circle cx="177.3" cy="63.4" r="0.69" fill="#d8f0ff" opacity="0.64"/><circle cx="180.7" cy="68.3" r="0.62" fill="#d8f0ff" opacity="0.70"/><circle cx="167.5" cy="54.8" r="0.35" fill="#d8f0ff" opacity="0.77"/><circle cx="173.1" cy="62.1" r="0.78" fill="#d8f0ff" opacity="0.66"/><circle cx="67.3" cy="89.6" r="0.48" fill="#d8f0ff" opacity="0.49"/><circle cx="185.9" cy="102.9" r="0.66" fill="#d8f0ff" opacity="0.49"/><circle cx="132.7" cy="36.2" r="0.34" fill="#d8f0ff" opacity="0.87"/><circle cx="66.9" cy="130.4" r="0.75" fill="#d8f0ff" opacity="0.65"/><circle cx="160.7" cy="51.6" r="0.38" fill="#d8f0ff" opacity="0.60"/><circle cx="112.2" cy="39.4" r="0.36" fill="#d8f0ff" opacity="0.70"/><circle cx="120.7" cy="41.7" r="0.70" fill="#d8f0ff" opacity="0.73"/><circle cx="83.5" cy="52.8" r="0.60" fill="#d8f0ff" opacity="0.55"/><circle cx="140.8" cy="38.8" r="0.32" fill="#d8f0ff" opacity="0.76"/><circle cx="125.0" cy="44.5" r="0.38" fill="#d8f0ff" opacity="0.53"/><circle cx="112.6" cy="44.8" r="0.60" fill="#d8f0ff" opacity="0.55"/><circle cx="157.0" cy="49.3" r="0.70" fill="#d8f0ff" opacity="0.84"/><circle cx="68.5" cy="70.6" r="0.57" fill="#d8f0ff" opacity="0.58"/><circle cx="73.7" cy="68.3" r="0.52" fill="#d8f0ff" opacity="0.78"/><circle cx="72.3" cy="67.1" r="0.43" fill="#d8f0ff" opacity="0.88"/><circle cx="112.9" cy="45.0" r="0.59" fill="#d8f0ff" opacity="0.69"/><circle cx="140.2" cy="42.4" r="0.77" fill="#d8f0ff" opacity="0.81"/><circle cx="60.4" cy="108.2" r="0.31" fill="#d8f0ff" opacity="0.43"/><circle cx="185.0" cy="86.7" r="0.31" fill="#d8f0ff" opacity="0.50"/><circle cx="126.7" cy="37.9" r="0.31" fill="#d8f0ff" opacity="0.49"/><circle cx="76.5" cy="124.3" r="0.46" fill="#d8f0ff" opacity="0.67"/><circle cx="188.0" cy="122.8" r="0.73" fill="#d8f0ff" opacity="0.72"/><circle cx="191.6" cy="108.5" r="0.42" fill="#d8f0ff" opacity="0.60"/><circle cx="123.3" cy="46.8" r="0.76" fill="#d8f0ff" opacity="0.67"/><circle cx="69.9" cy="81.6" r="0.70" fill="#d8f0ff" opacity="0.55"/><circle cx="147.9" cy="50.3" r="0.42" fill="#d8f0ff" opacity="0.50"/><circle cx="129.4" cy="39.7" r="0.41" fill="#d8f0ff" opacity="0.78"/><circle cx="150.4" cy="42.8" r="0.80" fill="#d8f0ff" opacity="0.58"/><circle cx="183.1" cy="128.2" r="0.55" fill="#d8f0ff" opacity="0.50"/><circle cx="64.8" cy="109.7" r="0.35" fill="#d8f0ff" opacity="0.42"/><circle cx="66.1" cy="109.7" r="0.40" fill="#d8f0ff" opacity="0.54"/><circle cx="182.3" cy="74.6" r="0.37" fill="#d8f0ff" opacity="0.77"/><circle cx="185.1" cy="128.7" r="0.52" fill="#d8f0ff" opacity="0.70"/><circle cx="176.6" cy="58.7" r="0.69" fill="#d8f0ff" opacity="0.54"/><circle cx="179.9" cy="79.1" r="0.36" fill="#d8f0ff" opacity="0.68"/><circle cx="67.9" cy="85.1" r="0.44" fill="#d8f0ff" opacity="0.92"/><circle cx="110.3" cy="40.5" r="0.77" fill="#d8f0ff" opacity="0.65"/><circle cx="183.0" cy="74.6" r="0.50" fill="#d8f0ff" opacity="0.47"/><circle cx="168.4" cy="50.1" r="0.64" fill="#d8f0ff" opacity="0.57"/><circle cx="134.2" cy="44.0" r="0.50" fill="#d8f0ff" opacity="0.83"/><circle cx="72.3" cy="127.7" r="0.56" fill="#d8f0ff" opacity="0.48"/><circle cx="175.8" cy="68.7" r="0.50" fill="#d8f0ff" opacity="0.54"/><circle cx="151.6" cy="47.4" r="0.64" fill="#d8f0ff" opacity="0.63"/><circle cx="185.3" cy="77.7" r="0.35" fill="#d8f0ff" opacity="0.67"/><circle cx="77.7" cy="71.3" r="0.77" fill="#d8f0ff" opacity="0.66"/><circle cx="175.7" cy="70.6" r="0.61" fill="#d8f0ff" opacity="0.47"/><circle cx="76.0" cy="78.6" r="0.31" fill="#d8f0ff" opacity="0.90"/><circle cx="185.1" cy="120.8" r="0.31" fill="#d8f0ff" opacity="0.80"/><circle cx="162.8" cy="59.0" r="0.68" fill="#d8f0ff" opacity="0.44"/><circle cx="70.1" cy="72.7" r="0.68" fill="#d8f0ff" opacity="0.53"/><circle cx="130.2" cy="38.4" r="0.60" fill="#d8f0ff" opacity="0.69"/><circle cx="73.7" cy="86.6" r="0.39" fill="#d8f0ff" opacity="0.69"/><circle cx="151.5" cy="46.9" r="0.62" fill="#d8f0ff" opacity="0.71"/><circle cx="162.1" cy="53.1" r="0.72" fill="#d8f0ff" opacity="0.69"/><circle cx="195.8" cy="100.9" r="0.71" fill="#d8f0ff" opacity="0.82"/><circle cx="171.8" cy="58.7" r="0.42" fill="#d8f0ff" opacity="0.46"/><circle cx="163.9" cy="56.8" r="0.61" fill="#d8f0ff" opacity="0.70"/><circle cx="153.9" cy="48.4" r="0.42" fill="#d8f0ff" opacity="0.57"/><circle cx="176.0" cy="57.1" r="0.46" fill="#d8f0ff" opacity="0.57"/><circle cx="115.1" cy="44.1" r="0.62" fill="#d8f0ff" opacity="0.82"/><circle cx="186.3" cy="72.7" r="0.66" fill="#d8f0ff" opacity="0.93"/><circle cx="115.3" cy="43.9" r="0.63" fill="#d8f0ff" opacity="0.57"/><circle cx="187.3" cy="88.8" r="0.58" fill="#d8f0ff" opacity="0.69"/><circle cx="98.6" cy="55.9" r="0.44" fill="#d8f0ff" opacity="0.66"/><circle cx="183.3" cy="117.0" r="0.75" fill="#d8f0ff" opacity="0.93"/><circle cx="182.9" cy="80.6" r="0.31" fill="#d8f0ff" opacity="0.88"/><circle cx="69.7" cy="113.0" r="0.77" fill="#d8f0ff" opacity="0.77"/><circle cx="191.9" cy="86.2" r="0.39" fill="#d8f0ff" opacity="0.68"/><circle cx="67.8" cy="107.0" r="0.55" fill="#d8f0ff" opacity="0.85"/><circle cx="79.5" cy="61.6" r="0.37" fill="#d8f0ff" opacity="0.54"/><circle cx="66.8" cy="116.0" r="0.59" fill="#d8f0ff" opacity="0.79"/><circle cx="106.4" cy="40.2" r="0.66" fill="#d8f0ff" opacity="0.71"/><circle cx="185.9" cy="99.4" r="0.45" fill="#d8f0ff" opacity="0.70"/><circle cx="154.6" cy="41.8" r="0.64" fill="#d8f0ff" opacity="0.43"/><circle cx="187.7" cy="116.4" r="0.40" fill="#d8f0ff" opacity="0.82"/><circle cx="161.1" cy="46.3" r="0.58" fill="#d8f0ff" opacity="0.54"/><circle cx="120.6" cy="42.8" r="0.48" fill="#d8f0ff" opacity="0.72"/><circle cx="69.7" cy="94.1" r="0.36" fill="#d8f0ff" opacity="0.41"/><circle cx="134.7" cy="39.5" r="0.50" fill="#d8f0ff" opacity="0.90"/><circle cx="155.3" cy="46.0" r="0.44" fill="#d8f0ff" opacity="0.89"/><circle cx="89.5" cy="49.8" r="0.42" fill="#d8f0ff" opacity="0.92"/><circle cx="167.4" cy="60.8" r="0.67" fill="#d8f0ff" opacity="0.49"/><circle cx="100.8" cy="49.7" r="0.47" fill="#d8f0ff" opacity="0.60"/><circle cx="68.4" cy="91.2" r="0.35" fill="#d8f0ff" opacity="0.84"/><circle cx="91.8" cy="50.2" r="0.51" fill="#d8f0ff" opacity="0.94"/><circle cx="192.4" cy="100.7" r="0.72" fill="#d8f0ff" opacity="0.90"/><circle cx="187.8" cy="113.0" r="0.60" fill="#d8f0ff" opacity="0.44"/><circle cx="96.6" cy="52.7" r="0.61" fill="#d8f0ff" opacity="0.40"/><circle cx="176.8" cy="74.1" r="0.51" fill="#d8f0ff" opacity="0.67"/><circle cx="190.5" cy="91.3" r="0.37" fill="#d8f0ff" opacity="0.77"/><circle cx="72.1" cy="73.1" r="0.51" fill="#d8f0ff" opacity="0.93"/><circle cx="115.8" cy="45.9" r="0.46" fill="#d8f0ff" opacity="0.93"/><circle cx="93.9" cy="55.6" r="0.57" fill="#d8f0ff" opacity="0.77"/><circle cx="183.3" cy="114.5" r="0.46" fill="#d8f0ff" opacity="0.80"/><circle cx="126.8" cy="39.7" r="0.64" fill="#d8f0ff" opacity="0.45"/><circle cx="72.1" cy="116.8" r="0.45" fill="#d8f0ff" opacity="0.50"/><circle cx="84.3" cy="66.2" r="0.31" fill="#d8f0ff" opacity="0.69"/><circle cx="178.2" cy="74.3" r="0.35" fill="#d8f0ff" opacity="0.80"/><circle cx="71.1" cy="110.2" r="0.55" fill="#d8f0ff" opacity="0.56"/><circle cx="184.9" cy="78.2" r="0.56" fill="#d8f0ff" opacity="0.61"/><circle cx="66.4" cy="124.4" r="0.49" fill="#d8f0ff" opacity="0.85"/><circle cx="67.0" cy="104.3" r="0.57" fill="#d8f0ff" opacity="0.49"/><circle cx="61.7" cy="112.9" r="0.77" fill="#d8f0ff" opacity="0.95"/><circle cx="139.7" cy="40.2" r="0.60" fill="#d8f0ff" opacity="0.66"/><circle cx="66.1" cy="87.9" r="0.52" fill="#d8f0ff" opacity="0.77"/><circle cx="71.3" cy="119.0" r="0.36" fill="#d8f0ff" opacity="0.82"/><circle cx="122.9" cy="44.7" r="0.69" fill="#d8f0ff" opacity="0.69"/><circle cx="82.3" cy="63.5" r="0.30" fill="#d8f0ff" opacity="0.43"/><circle cx="63.9" cy="122.7" r="0.74" fill="#d8f0ff" opacity="0.70"/><circle cx="188.7" cy="115.8" r="0.64" fill="#d8f0ff" opacity="0.46"/><circle cx="111.7" cy="42.7" r="0.50" fill="#d8f0ff" opacity="0.76"/><circle cx="89.9" cy="52.3" r="0.40" fill="#d8f0ff" opacity="0.67"/><circle cx="110.0" cy="44.2" r="0.33" fill="#d8f0ff" opacity="0.53"/><circle cx="172.6" cy="66.3" r="0.54" fill="#d8f0ff" opacity="0.95"/><circle cx="156.1" cy="45.4" r="0.69" fill="#d8f0ff" opacity="0.93"/><circle cx="101.2" cy="49.3" r="0.68" fill="#d8f0ff" opacity="0.41"/><circle cx="120.5" cy="45.1" r="0.58" fill="#d8f0ff" opacity="0.80"/><circle cx="189.7" cy="96.2" r="0.65" fill="#d8f0ff" opacity="0.44"/><circle cx="168.7" cy="50.2" r="0.61" fill="#d8f0ff" opacity="0.67"/><circle cx="130.7" cy="43.0" r="0.39" fill="#d8f0ff" opacity="0.51"/><circle cx="185.9" cy="80.4" r="0.32" fill="#d8f0ff" opacity="0.74"/><circle cx="190.2" cy="88.5" r="0.39" fill="#d8f0ff" opacity="0.92"/><circle cx="68.3" cy="85.8" r="0.53" fill="#d8f0ff" opacity="0.49"/><circle cx="80.7" cy="69.3" r="0.38" fill="#d8f0ff" opacity="0.42"/><circle cx="163.8" cy="50.6" r="0.43" fill="#d8f0ff" opacity="0.92"/><circle cx="109.1" cy="45.4" r="0.76" fill="#d8f0ff" opacity="0.76"/><circle cx="119.0" cy="39.6" r="0.67" fill="#d8f0ff" opacity="0.57"/><circle cx="64.4" cy="113.6" r="0.67" fill="#d8f0ff" opacity="0.73"/><circle cx="63.1" cy="101.6" r="0.39" fill="#d8f0ff" opacity="0.84"/><circle cx="158.3" cy="47.8" r="0.34" fill="#d8f0ff" opacity="0.60"/><circle cx="174.5" cy="69.8" r="0.32" fill="#d8f0ff" opacity="0.63"/><circle cx="190.9" cy="94.0" r="0.41" fill="#d8f0ff" opacity="0.44"/><circle cx="192.8" cy="89.6" r="0.65" fill="#d8f0ff" opacity="0.51"/><circle cx="175.7" cy="73.8" r="0.39" fill="#d8f0ff" opacity="0.58"/><circle cx="181.8" cy="117.9" r="0.38" fill="#d8f0ff" opacity="0.80"/><circle cx="179.8" cy="74.5" r="0.34" fill="#d8f0ff" opacity="0.87"/><circle cx="190.8" cy="124.3" r="0.58" fill="#d8f0ff" opacity="0.45"/><circle cx="180.9" cy="67.6" r="0.72" fill="#d8f0ff" opacity="0.82"/><circle cx="128.8" cy="36.3" r="0.53" fill="#d8f0ff" opacity="0.65"/><circle cx="162.8" cy="48.2" r="0.59" fill="#d8f0ff" opacity="0.92"/><circle cx="74.4" cy="63.4" r="0.74" fill="#d8f0ff" opacity="0.59"/><circle cx="68.8" cy="123.3" r="0.61" fill="#d8f0ff" opacity="0.93"/><circle cx="143.2" cy="41.0" r="0.68" fill="#d8f0ff" opacity="0.49"/><circle cx="166.5" cy="55.9" r="0.41" fill="#d8f0ff" opacity="0.55"/><circle cx="93.6" cy="48.8" r="0.58" fill="#d8f0ff" opacity="0.58"/><circle cx="64.6" cy="117.4" r="0.68" fill="#d8f0ff" opacity="0.86"/><circle cx="180.0" cy="80.5" r="0.44" fill="#d8f0ff" opacity="0.65"/><circle cx="79.5" cy="58.8" r="0.40" fill="#d8f0ff" opacity="0.41"/><circle cx="116.8" cy="48.4" r="0.31" fill="#d8f0ff" opacity="0.73"/><circle cx="153.8" cy="46.9" r="0.34" fill="#d8f0ff" opacity="0.71"/><circle cx="133.6" cy="44.5" r="0.41" fill="#d8f0ff" opacity="0.49"/><circle cx="123.9" cy="43.7" r="0.59" fill="#d8f0ff" opacity="0.77"/><circle cx="77.9" cy="64.6" r="0.43" fill="#d8f0ff" opacity="0.81"/><circle cx="69.1" cy="80.3" r="0.67" fill="#d8f0ff" opacity="0.84"/><circle cx="136.4" cy="37.6" r="0.79" fill="#d8f0ff" opacity="0.84"/><circle cx="95.8" cy="54.0" r="0.61" fill="#d8f0ff" opacity="0.47"/><circle cx="72.9" cy="88.3" r="0.63" fill="#d8f0ff" opacity="0.61"/><circle cx="192.9" cy="111.6" r="0.57" fill="#d8f0ff" opacity="0.59"/><circle cx="90.3" cy="61.3" r="0.36" fill="#d8f0ff" opacity="0.88"/><circle cx="87.0" cy="65.2" r="0.79" fill="#d8f0ff" opacity="0.61"/><circle cx="183.2" cy="76.2" r="0.78" fill="#d8f0ff" opacity="0.44"/><circle cx="121.1" cy="40.6" r="0.31" fill="#d8f0ff" opacity="0.90"/><circle cx="88.7" cy="52.9" r="0.34" fill="#d8f0ff" opacity="0.44"/><circle cx="63.0" cy="109.5" r="0.77" fill="#d8f0ff" opacity="0.90"/><circle cx="135.1" cy="47.2" r="0.69" fill="#d8f0ff" opacity="0.68"/><circle cx="186.1" cy="77.0" r="0.58" fill="#d8f0ff" opacity="0.49"/><circle cx="71.6" cy="95.8" r="0.52" fill="#d8f0ff" opacity="0.56"/><circle cx="182.1" cy="117.3" r="0.68" fill="#d8f0ff" opacity="0.47"/><circle cx="61.0" cy="105.2" r="0.41" fill="#d8f0ff" opacity="0.73"/><circle cx="148.6" cy="46.6" r="0.47" fill="#d8f0ff" opacity="0.48"/><circle cx="171.2" cy="61.2" r="0.60" fill="#d8f0ff" opacity="0.85"/><circle cx="67.8" cy="111.5" r="0.48" fill="#d8f0ff" opacity="0.91"/><circle cx="155.6" cy="52.3" r="0.53" fill="#d8f0ff" opacity="0.41"/><circle cx="131.3" cy="47.1" r="0.37" fill="#d8f0ff" opacity="0.68"/><circle cx="137.0" cy="46.0" r="0.59" fill="#d8f0ff" opacity="0.57"/><circle cx="169.5" cy="65.0" r="0.72" fill="#d8f0ff" opacity="0.65"/><circle cx="70.3" cy="88.6" r="0.61" fill="#d8f0ff" opacity="0.45"/><circle cx="186.1" cy="108.4" r="0.51" fill="#d8f0ff" opacity="0.44"/><circle cx="116.0" cy="37.5" r="0.39" fill="#d8f0ff" opacity="0.50"/><circle cx="140.1" cy="41.4" r="0.37" fill="#d8f0ff" opacity="0.52"/><circle cx="152.2" cy="50.1" r="0.31" fill="#d8f0ff" opacity="0.78"/><circle cx="193.5" cy="97.8" r="0.73" fill="#d8f0ff" opacity="0.52"/><circle cx="83.8" cy="58.3" r="0.61" fill="#d8f0ff" opacity="0.74"/><circle cx="140.6" cy="46.4" r="0.42" fill="#d8f0ff" opacity="0.45"/><circle cx="66.9" cy="116.3" r="0.34" fill="#d8f0ff" opacity="0.88"/><circle cx="182.9" cy="118.7" r="0.78" fill="#d8f0ff" opacity="0.74"/><circle cx="73.5" cy="127.4" r="0.48" fill="#d8f0ff" opacity="0.57"/><circle cx="70.4" cy="113.2" r="0.31" fill="#d8f0ff" opacity="0.65"/><circle cx="123.6" cy="45.3" r="0.76" fill="#d8f0ff" opacity="0.89"/><circle cx="127.9" cy="38.4" r="0.48" fill="#d8f0ff" opacity="0.81"/><circle cx="182.4" cy="77.4" r="0.67" fill="#d8f0ff" opacity="0.59"/><circle cx="68.8" cy="88.2" r="0.36" fill="#d8f0ff" opacity="0.79"/><circle cx="75.5" cy="70.3" r="0.70" fill="#d8f0ff" opacity="0.73"/><circle cx="192.3" cy="108.2" r="0.65" fill="#d8f0ff" opacity="0.81"/><circle cx="175.0" cy="55.7" r="0.60" fill="#d8f0ff" opacity="0.76"/><circle cx="140.6" cy="42.8" r="0.77" fill="#d8f0ff" opacity="0.57"/><circle cx="69.0" cy="84.0" r="0.46" fill="#d8f0ff" opacity="0.79"/><circle cx="157.4" cy="56.0" r="0.40" fill="#d8f0ff" opacity="0.74"/><circle cx="101.6" cy="45.3" r="0.53" fill="#d8f0ff" opacity="0.46"/><circle cx="175.3" cy="55.0" r="0.35" fill="#d8f0ff" opacity="0.74"/><circle cx="156.3" cy="47.1" r="0.55" fill="#d8f0ff" opacity="0.68"/><circle cx="188.4" cy="128.7" r="0.52" fill="#d8f0ff" opacity="0.85"/><circle cx="169.5" cy="52.6" r="0.80" fill="#d8f0ff" opacity="0.44"/><circle cx="73.9" cy="80.1" r="0.71" fill="#d8f0ff" opacity="0.91"/><circle cx="72.5" cy="75.8" r="0.74" fill="#d8f0ff" opacity="0.80"/><circle cx="151.2" cy="41.3" r="0.76" fill="#d8f0ff" opacity="0.45"/><circle cx="184.1" cy="120.7" r="0.61" fill="#d8f0ff" opacity="0.81"/><circle cx="83.6" cy="63.5" r="0.75" fill="#d8f0ff" opacity="0.84"/><circle cx="180.9" cy="122.3" r="0.61" fill="#d8f0ff" opacity="0.81"/><circle cx="189.9" cy="120.1" r="0.44" fill="#d8f0ff" opacity="0.46"/><circle cx="70.7" cy="88.6" r="0.59" fill="#d8f0ff" opacity="0.58"/><circle cx="71.7" cy="94.5" r="0.64" fill="#d8f0ff" opacity="0.85"/><circle cx="66.0" cy="100.0" r="0.79" fill="#d8f0ff" opacity="0.60"/><circle cx="137.3" cy="38.9" r="0.31" fill="#d8f0ff" opacity="0.88"/><circle cx="186.3" cy="74.6" r="0.47" fill="#d8f0ff" opacity="0.67"/><circle cx="183.0" cy="114.4" r="0.34" fill="#d8f0ff" opacity="0.75"/><circle cx="183.4" cy="117.3" r="0.39" fill="#d8f0ff" opacity="0.65"/><circle cx="185.9" cy="78.8" r="0.63" fill="#d8f0ff" opacity="0.43"/><circle cx="68.7" cy="81.5" r="0.66" fill="#d8f0ff" opacity="0.45"/><circle cx="68.7" cy="107.8" r="0.51" fill="#d8f0ff" opacity="0.58"/><circle cx="72.7" cy="89.8" r="0.62" fill="#d8f0ff" opacity="0.92"/><circle cx="162.9" cy="46.5" r="0.36" fill="#d8f0ff" opacity="0.74"/><circle cx="93.3" cy="47.3" r="0.60" fill="#d8f0ff" opacity="0.74"/><circle cx="195.0" cy="110.0" r="0.37" fill="#d8f0ff" opacity="0.64"/><circle cx="65.9" cy="109.4" r="0.41" fill="#d8f0ff" opacity="0.78"/><circle cx="96.9" cy="57.0" r="0.74" fill="#d8f0ff" opacity="0.47"/><circle cx="77.6" cy="66.7" r="0.33" fill="#d8f0ff" opacity="0.82"/><circle cx="172.2" cy="66.8" r="0.61" fill="#d8f0ff" opacity="0.47"/><circle cx="135.1" cy="47.2" r="0.44" fill="#d8f0ff" opacity="0.65"/><circle cx="139.5" cy="41.1" r="0.76" fill="#d8f0ff" opacity="0.58"/><circle cx="94.5" cy="55.7" r="0.67" fill="#d8f0ff" opacity="0.60"/><circle cx="74.3" cy="80.3" r="0.51" fill="#d8f0ff" opacity="0.86"/><circle cx="111.5" cy="40.2" r="0.54" fill="#d8f0ff" opacity="0.72"/><circle cx="76.9" cy="70.1" r="0.66" fill="#d8f0ff" opacity="0.45"/><circle cx="117.0" cy="45.9" r="0.45" fill="#d8f0ff" opacity="0.59"/><circle cx="68.7" cy="81.8" r="0.32" fill="#d8f0ff" opacity="0.53"/><circle cx="80.3" cy="70.0" r="0.72" fill="#d8f0ff" opacity="0.78"/><circle cx="185.4" cy="102.7" r="0.39" fill="#d8f0ff" opacity="0.57"/><circle cx="130.3" cy="38.0" r="0.72" fill="#d8f0ff" opacity="0.87"/><circle cx="76.3" cy="123.2" r="0.47" fill="#d8f0ff" opacity="0.64"/><circle cx="73.8" cy="127.1" r="0.36" fill="#d8f0ff" opacity="0.88"/><circle cx="72.8" cy="80.1" r="0.39" fill="#d8f0ff" opacity="0.87"/><circle cx="66.9" cy="102.7" r="0.41" fill="#d8f0ff" opacity="0.54"/><circle cx="186.1" cy="129.2" r="0.67" fill="#d8f0ff" opacity="0.60"/><circle cx="190.8" cy="126.3" r="0.62" fill="#d8f0ff" opacity="0.52"/><circle cx="67.9" cy="118.3" r="0.54" fill="#d8f0ff" opacity="0.87"/><circle cx="186.8" cy="130.6" r="0.42" fill="#d8f0ff" opacity="0.94"/><circle cx="153.0" cy="53.1" r="0.40" fill="#d8f0ff" opacity="0.93"/><circle cx="188.6" cy="79.6" r="0.63" fill="#d8f0ff" opacity="0.41"/><circle cx="186.1" cy="114.2" r="0.69" fill="#d8f0ff" opacity="0.70"/><circle cx="125.0" cy="41.7" r="0.76" fill="#d8f0ff" opacity="0.86"/><circle cx="100.3" cy="43.6" r="0.39" fill="#d8f0ff" opacity="0.59"/><circle cx="90.4" cy="61.3" r="0.50" fill="#d8f0ff" opacity="0.40"/><circle cx="189.9" cy="123.5" r="0.54" fill="#d8f0ff" opacity="0.43"/><circle cx="74.3" cy="66.1" r="0.45" fill="#d8f0ff" opacity="0.45"/><circle cx="109.6" cy="43.7" r="0.36" fill="#d8f0ff" opacity="0.61"/><circle cx="142.9" cy="40.7" r="0.50" fill="#d8f0ff" opacity="0.95"/><circle cx="73.4" cy="67.8" r="0.34" fill="#d8f0ff" opacity="0.90"/><circle cx="138.6" cy="46.8" r="0.71" fill="#d8f0ff" opacity="0.89"/><circle cx="61.6" cy="98.2" r="0.78" fill="#d8f0ff" opacity="0.60"/><circle cx="187.9" cy="78.5" r="0.58" fill="#d8f0ff" opacity="0.61"/><circle cx="82.5" cy="55.9" r="0.69" fill="#d8f0ff" opacity="0.92"/><circle cx="66.4" cy="113.7" r="0.65" fill="#d8f0ff" opacity="0.52"/><circle cx="66.2" cy="126.4" r="0.69" fill="#d8f0ff" opacity="0.79"/><circle cx="89.4" cy="56.0" r="0.71" fill="#d8f0ff" opacity="0.45"/><circle cx="178.8" cy="63.6" r="0.53" fill="#d8f0ff" opacity="0.92"/><circle cx="162.1" cy="46.5" r="0.40" fill="#d8f0ff" opacity="0.62"/><circle cx="81.6" cy="62.3" r="0.68" fill="#d8f0ff" opacity="0.95"/><circle cx="193.8" cy="108.7" r="0.79" fill="#d8f0ff" opacity="0.80"/><circle cx="174.9" cy="70.7" r="0.50" fill="#d8f0ff" opacity="0.67"/><circle cx="61.3" cy="104.7" r="0.49" fill="#d8f0ff" opacity="0.53"/><circle cx="66.3" cy="110.3" r="0.47" fill="#d8f0ff" opacity="0.92"/><circle cx="159.8" cy="51.5" r="0.38" fill="#d8f0ff" opacity="0.43"/><circle cx="172.0" cy="57.9" r="0.55" fill="#d8f0ff" opacity="0.68"/><circle cx="104.1" cy="41.4" r="0.33" fill="#d8f0ff" opacity="0.53"/><circle cx="183.6" cy="81.1" r="0.47" fill="#d8f0ff" opacity="0.64"/><circle cx="79.9" cy="59.5" r="0.35" fill="#d8f0ff" opacity="0.71"/><circle cx="174.0" cy="64.7" r="0.66" fill="#d8f0ff" opacity="0.60"/><circle cx="155.4" cy="53.5" r="0.46" fill="#d8f0ff" opacity="0.71"/><circle cx="155.0" cy="48.4" r="0.32" fill="#d8f0ff" opacity="0.70"/><circle cx="186.9" cy="97.5" r="0.40" fill="#d8f0ff" opacity="0.74"/><circle cx="77.3" cy="76.6" r="0.34" fill="#d8f0ff" opacity="0.74"/><circle cx="193.2" cy="101.3" r="0.59" fill="#d8f0ff" opacity="0.88"/><circle cx="186.4" cy="93.5" r="0.49" fill="#d8f0ff" opacity="0.94"/><circle cx="189.8" cy="116.5" r="0.61" fill="#d8f0ff" opacity="0.59"/><circle cx="68.5" cy="107.8" r="0.42" fill="#d8f0ff" opacity="0.75"/><circle cx="165.6" cy="52.4" r="0.76" fill="#d8f0ff" opacity="0.40"/><circle cx="74.9" cy="82.0" r="0.48" fill="#d8f0ff" opacity="0.90"/><circle cx="119.4" cy="38.9" r="0.39" fill="#d8f0ff" opacity="0.59"/><circle cx="183.7" cy="82.2" r="0.67" fill="#d8f0ff" opacity="0.73"/><circle cx="161.3" cy="58.2" r="0.48" fill="#d8f0ff" opacity="0.94"/><circle cx="99.2" cy="51.9" r="0.80" fill="#d8f0ff" opacity="0.72"/><circle cx="172.3" cy="60.4" r="0.61" fill="#d8f0ff" opacity="0.61"/><circle cx="80.8" cy="67.1" r="0.41" fill="#d8f0ff" opacity="0.78"/><circle cx="71.2" cy="108.3" r="0.55" fill="#d8f0ff" opacity="0.94"/><circle cx="186.3" cy="76.6" r="0.67" fill="#d8f0ff" opacity="0.51"/><circle cx="130.4" cy="47.7" r="0.56" fill="#d8f0ff" opacity="0.42"/><circle cx="70.8" cy="102.0" r="0.47" fill="#d8f0ff" opacity="0.66"/><circle cx="76.2" cy="79.5" r="0.36" fill="#d8f0ff" opacity="0.92"/><circle cx="189.4" cy="127.9" r="0.37" fill="#d8f0ff" opacity="0.51"/><circle cx="183.9" cy="100.7" r="0.37" fill="#d8f0ff" opacity="0.76"/><circle cx="191.6" cy="122.8" r="0.72" fill="#d8f0ff" opacity="0.57"/><circle cx="182.8" cy="64.3" r="0.75" fill="#d8f0ff" opacity="0.93"/><circle cx="185.4" cy="71.6" r="0.65" fill="#d8f0ff" opacity="0.63"/><circle cx="147.7" cy="39.7" r="0.59" fill="#d8f0ff" opacity="0.41"/><circle cx="113.8" cy="39.0" r="0.65" fill="#d8f0ff" opacity="0.67"/><circle cx="191.7" cy="114.7" r="0.41" fill="#d8f0ff" opacity="0.79"/><circle cx="183.7" cy="98.7" r="0.77" fill="#d8f0ff" opacity="0.64"/><circle cx="183.3" cy="93.9" r="0.46" fill="#d8f0ff" opacity="0.57"/><circle cx="69.7" cy="76.9" r="0.70" fill="#d8f0ff" opacity="0.76"/><circle cx="184.8" cy="107.7" r="0.44" fill="#d8f0ff" opacity="0.62"/><circle cx="188.3" cy="79.0" r="0.80" fill="#d8f0ff" opacity="0.88"/><circle cx="136.0" cy="39.6" r="0.71" fill="#d8f0ff" opacity="0.69"/><circle cx="172.3" cy="54.2" r="0.72" fill="#d8f0ff" opacity="0.49"/><circle cx="67.5" cy="123.4" r="0.71" fill="#d8f0ff" opacity="0.50"/><circle cx="192.4" cy="93.3" r="0.38" fill="#d8f0ff" opacity="0.49"/><circle cx="166.1" cy="52.8" r="0.38" fill="#d8f0ff" opacity="0.90"/><circle cx="67.5" cy="76.5" r="0.77" fill="#d8f0ff" opacity="0.47"/><circle cx="173.7" cy="60.6" r="0.76" fill="#d8f0ff" opacity="0.64"/><circle cx="107.4" cy="48.7" r="0.72" fill="#d8f0ff" opacity="0.58"/><circle cx="183.9" cy="107.9" r="0.74" fill="#d8f0ff" opacity="0.41"/><circle cx="181.3" cy="62.0" r="0.46" fill="#d8f0ff" opacity="0.73"/><circle cx="108.5" cy="50.5" r="0.72" fill="#d8f0ff" opacity="0.67"/><circle cx="181.0" cy="83.9" r="0.38" fill="#d8f0ff" opacity="0.53"/><circle cx="194.9" cy="96.7" r="0.31" fill="#e8f6ff" opacity="0.59"/><circle cx="171.3" cy="156.8" r="0.73" fill="#e8f6ff" opacity="0.52"/><circle cx="190.8" cy="121.1" r="0.68" fill="#e8f6ff" opacity="0.73"/><circle cx="153.9" cy="129.3" r="0.51" fill="#e8f6ff" opacity="0.63"/><circle cx="180.5" cy="145.4" r="0.50" fill="#e8f6ff" opacity="0.66"/><circle cx="195.5" cy="144.7" r="0.40" fill="#e8f6ff" opacity="0.47"/><circle cx="164.9" cy="164.4" r="0.49" fill="#e8f6ff" opacity="0.84"/><circle cx="203.1" cy="146.0" r="0.48" fill="#e8f6ff" opacity="0.77"/><circle cx="177.6" cy="164.5" r="0.55" fill="#e8f6ff" opacity="0.72"/><circle cx="187.7" cy="141.0" r="0.39" fill="#e8f6ff" opacity="0.68"/><circle cx="173.6" cy="144.7" r="0.69" fill="#e8f6ff" opacity="0.50"/><circle cx="170.3" cy="113.7" r="0.78" fill="#e8f6ff" opacity="0.65"/><circle cx="174.7" cy="165.4" r="0.69" fill="#e8f6ff" opacity="0.83"/><circle cx="177.7" cy="104.3" r="0.49" fill="#e8f6ff" opacity="0.44"/><circle cx="172.0" cy="127.9" r="0.54" fill="#e8f6ff" opacity="0.89"/><circle cx="179.3" cy="107.1" r="0.39" fill="#e8f6ff" opacity="0.74"/><circle cx="178.4" cy="124.9" r="0.55" fill="#e8f6ff" opacity="0.60"/><circle cx="187.3" cy="138.3" r="0.32" fill="#e8f6ff" opacity="0.65"/><circle cx="163.8" cy="137.5" r="0.53" fill="#e8f6ff" opacity="0.78"/><circle cx="203.0" cy="149.2" r="0.61" fill="#e8f6ff" opacity="0.65"/><circle cx="156.2" cy="148.3" r="0.40" fill="#e8f6ff" opacity="0.59"/><circle cx="182.1" cy="114.3" r="0.73" fill="#e8f6ff" opacity="0.67"/><circle cx="203.5" cy="96.6" r="0.53" fill="#e8f6ff" opacity="0.56"/><circle cx="181.6" cy="142.3" r="0.60" fill="#e8f6ff" opacity="0.87"/><circle cx="174.2" cy="122.0" r="0.67" fill="#e8f6ff" opacity="0.68"/><circle cx="164.8" cy="162.3" r="0.41" fill="#e8f6ff" opacity="0.44"/><circle cx="179.6" cy="161.5" r="0.73" fill="#e8f6ff" opacity="0.81"/><circle cx="183.6" cy="132.3" r="0.45" fill="#e8f6ff" opacity="0.48"/><circle cx="174.4" cy="155.8" r="0.58" fill="#e8f6ff" opacity="0.89"/><circle cx="194.0" cy="134.7" r="0.60" fill="#e8f6ff" opacity="0.61"/><circle cx="199.9" cy="155.8" r="0.39" fill="#e8f6ff" opacity="0.85"/><circle cx="187.2" cy="121.3" r="0.67" fill="#e8f6ff" opacity="0.61"/><circle cx="188.2" cy="131.8" r="0.62" fill="#e8f6ff" opacity="0.86"/><circle cx="199.0" cy="130.1" r="0.49" fill="#e8f6ff" opacity="0.76"/><circle cx="186.7" cy="101.9" r="0.55" fill="#e8f6ff" opacity="0.54"/><circle cx="185.6" cy="107.2" r="0.45" fill="#e8f6ff" opacity="0.53"/><circle cx="165.4" cy="136.3" r="0.73" fill="#e8f6ff" opacity="0.72"/><circle cx="185.6" cy="150.6" r="0.50" fill="#e8f6ff" opacity="0.61"/><circle cx="185.8" cy="110.1" r="0.68" fill="#e8f6ff" opacity="0.86"/><circle cx="198.4" cy="99.8" r="0.76" fill="#e8f6ff" opacity="0.51"/><circle cx="157.2" cy="140.1" r="0.47" fill="#e8f6ff" opacity="0.49"/><circle cx="183.4" cy="134.2" r="0.57" fill="#e8f6ff" opacity="0.66"/><circle cx="183.9" cy="151.8" r="0.66" fill="#e8f6ff" opacity="0.75"/><circle cx="195.5" cy="129.3" r="0.62" fill="#e8f6ff" opacity="0.46"/><circle cx="154.5" cy="128.0" r="0.64" fill="#e8f6ff" opacity="0.52"/><circle cx="202.8" cy="116.1" r="0.55" fill="#e8f6ff" opacity="0.63"/><circle cx="203.4" cy="106.2" r="0.43" fill="#e8f6ff" opacity="0.72"/><circle cx="169.9" cy="120.1" r="0.37" fill="#e8f6ff" opacity="0.86"/><circle cx="174.3" cy="137.2" r="0.42" fill="#e8f6ff" opacity="0.87"/><circle cx="155.8" cy="145.9" r="0.33" fill="#e8f6ff" opacity="0.67"/><circle cx="167.9" cy="164.4" r="0.52" fill="#e8f6ff" opacity="0.82"/><circle cx="151.6" cy="112.2" r="0.79" fill="#e8f6ff" opacity="0.58"/><circle cx="152.1" cy="113.9" r="0.48" fill="#e8f6ff" opacity="0.66"/><circle cx="171.0" cy="117.2" r="0.54" fill="#e8f6ff" opacity="0.63"/><circle cx="160.1" cy="132.8" r="0.59" fill="#e8f6ff" opacity="0.69"/><circle cx="190.7" cy="128.1" r="0.41" fill="#e8f6ff" opacity="0.87"/><circle cx="156.5" cy="117.2" r="0.51" fill="#e8f6ff" opacity="0.61"/><circle cx="161.6" cy="157.8" r="0.45" fill="#e8f6ff" opacity="0.67"/><circle cx="183.5" cy="104.5" r="0.52" fill="#e8f6ff" opacity="0.47"/><circle cx="179.8" cy="148.3" r="0.73" fill="#e8f6ff" opacity="0.87"/><circle cx="156.2" cy="128.5" r="0.63" fill="#e8f6ff" opacity="0.59"/><circle cx="201.9" cy="131.1" r="0.73" fill="#e8f6ff" opacity="0.43"/><circle cx="171.4" cy="145.8" r="0.72" fill="#e8f6ff" opacity="0.65"/><circle cx="197.2" cy="150.5" r="0.51" fill="#e8f6ff" opacity="0.75"/><circle cx="178.4" cy="103.2" r="0.75" fill="#e8f6ff" opacity="0.82"/><circle cx="199.1" cy="112.2" r="0.69" fill="#e8f6ff" opacity="0.42"/><circle cx="177.5" cy="117.1" r="0.55" fill="#e8f6ff" opacity="0.59"/><circle cx="180.2" cy="126.7" r="0.68" fill="#e8f6ff" opacity="0.73"/><circle cx="165.3" cy="109.5" r="0.42" fill="#e8f6ff" opacity="0.56"/><circle cx="173.4" cy="131.8" r="0.68" fill="#e8f6ff" opacity="0.89"/><circle cx="164.4" cy="116.5" r="0.56" fill="#e8f6ff" opacity="0.40"/><circle cx="184.9" cy="97.7" r="0.60" fill="#e8f6ff" opacity="0.69"/><circle cx="171.1" cy="167.3" r="0.46" fill="#e8f6ff" opacity="0.41"/><circle cx="155.9" cy="112.5" r="0.67" fill="#e8f6ff" opacity="0.77"/><circle cx="169.5" cy="159.5" r="0.38" fill="#e8f6ff" opacity="0.51"/><circle cx="181.4" cy="133.9" r="0.70" fill="#e8f6ff" opacity="0.55"/><circle cx="199.6" cy="141.1" r="0.64" fill="#e8f6ff" opacity="0.69"/><circle cx="161.6" cy="136.1" r="0.77" fill="#e8f6ff" opacity="0.41"/><circle cx="168.2" cy="117.5" r="0.43" fill="#e8f6ff" opacity="0.79"/><circle cx="185.7" cy="104.8" r="0.65" fill="#e8f6ff" opacity="0.84"/><circle cx="153.6" cy="96.4" r="0.60" fill="#e8f6ff" opacity="0.84"/><circle cx="180.3" cy="131.9" r="0.50" fill="#e8f6ff" opacity="0.68"/><circle cx="200.2" cy="138.6" r="0.67" fill="#e8f6ff" opacity="0.63"/><circle cx="198.6" cy="151.1" r="0.55" fill="#e8f6ff" opacity="0.55"/><circle cx="166.5" cy="166.5" r="0.62" fill="#e8f6ff" opacity="0.44"/><circle cx="178.6" cy="126.2" r="0.60" fill="#e8f6ff" opacity="0.54"/><circle cx="199.8" cy="130.2" r="0.71" fill="#e8f6ff" opacity="0.53"/><circle cx="198.8" cy="134.9" r="0.57" fill="#e8f6ff" opacity="0.62"/><circle cx="201.8" cy="136.1" r="0.57" fill="#e8f6ff" opacity="0.58"/><circle cx="175.2" cy="114.7" r="0.52" fill="#e8f6ff" opacity="0.53"/><circle cx="154.2" cy="121.7" r="0.31" fill="#e8f6ff" opacity="0.73"/><circle cx="155.2" cy="161.1" r="0.46" fill="#e8f6ff" opacity="0.54"/><circle cx="180.2" cy="116.3" r="0.66" fill="#e8f6ff" opacity="0.55"/><circle cx="200.7" cy="98.0" r="0.33" fill="#e8f6ff" opacity="0.84"/><circle cx="187.9" cy="114.2" r="0.62" fill="#e8f6ff" opacity="0.58"/><circle cx="178.0" cy="115.1" r="0.57" fill="#e8f6ff" opacity="0.72"/><circle cx="196.5" cy="113.7" r="0.58" fill="#e8f6ff" opacity="0.68"/><circle cx="198.1" cy="130.0" r="0.73" fill="#e8f6ff" opacity="0.86"/><circle cx="172.5" cy="124.6" r="0.78" fill="#e8f6ff" opacity="0.69"/><circle cx="179.2" cy="151.8" r="0.60" fill="#e8f6ff" opacity="0.66"/><circle cx="186.2" cy="114.1" r="0.49" fill="#e8f6ff" opacity="0.40"/><circle cx="189.6" cy="155.1" r="0.67" fill="#e8f6ff" opacity="0.89"/><circle cx="191.6" cy="102.8" r="0.46" fill="#e8f6ff" opacity="0.86"/><circle cx="155.9" cy="159.1" r="0.70" fill="#e8f6ff" opacity="0.47"/><circle cx="161.5" cy="148.4" r="0.63" fill="#e8f6ff" opacity="0.41"/><circle cx="179.1" cy="108.8" r="0.73" fill="#e8f6ff" opacity="0.67"/><circle cx="150.7" cy="123.9" r="0.31" fill="#e8f6ff" opacity="0.85"/><circle cx="198.8" cy="147.4" r="0.30" fill="#e8f6ff" opacity="0.87"/><circle cx="164.5" cy="142.5" r="0.68" fill="#e8f6ff" opacity="0.68"/><circle cx="156.4" cy="112.9" r="0.67" fill="#e8f6ff" opacity="0.46"/><circle cx="170.7" cy="163.0" r="0.50" fill="#e8f6ff" opacity="0.48"/><circle cx="185.8" cy="120.5" r="0.69" fill="#e8f6ff" opacity="0.58"/><circle cx="195.6" cy="155.3" r="0.39" fill="#e8f6ff" opacity="0.67"/><circle cx="174.5" cy="104.0" r="0.76" fill="#e8f6ff" opacity="0.57"/><circle cx="183.6" cy="99.4" r="0.78" fill="#e8f6ff" opacity="0.89"/><circle cx="187.6" cy="104.5" r="0.63" fill="#e8f6ff" opacity="0.63"/><circle cx="176.0" cy="110.9" r="0.38" fill="#e8f6ff" opacity="0.82"/><circle cx="183.2" cy="149.5" r="0.67" fill="#e8f6ff" opacity="0.60"/><circle cx="180.2" cy="117.1" r="0.63" fill="#e8f6ff" opacity="0.62"/><circle cx="193.1" cy="116.3" r="0.49" fill="#e8f6ff" opacity="0.44"/><circle cx="152.1" cy="110.7" r="0.31" fill="#e8f6ff" opacity="0.61"/><circle cx="170.9" cy="159.4" r="0.32" fill="#e8f6ff" opacity="0.89"/><circle cx="155.2" cy="155.6" r="0.48" fill="#e8f6ff" opacity="0.52"/><circle cx="183.6" cy="121.0" r="0.31" fill="#e8f6ff" opacity="0.47"/><circle cx="187.4" cy="147.5" r="0.80" fill="#e8f6ff" opacity="0.53"/><circle cx="192.3" cy="120.0" r="0.56" fill="#e8f6ff" opacity="0.54"/><circle cx="172.6" cy="161.7" r="0.43" fill="#e8f6ff" opacity="0.61"/><circle cx="200.0" cy="128.0" r="0.71" fill="#e8f6ff" opacity="0.67"/><circle cx="169.2" cy="147.6" r="0.63" fill="#e8f6ff" opacity="0.59"/><circle cx="204.9" cy="101.7" r="0.72" fill="#e8f6ff" opacity="0.76"/><circle cx="189.0" cy="129.6" r="0.67" fill="#e8f6ff" opacity="0.42"/><circle cx="186.9" cy="158.2" r="0.50" fill="#e8f6ff" opacity="0.77"/><circle cx="188.3" cy="131.6" r="0.69" fill="#e8f6ff" opacity="0.64"/><circle cx="156.6" cy="133.2" r="0.68" fill="#e8f6ff" opacity="0.48"/><circle cx="175.4" cy="155.9" r="0.31" fill="#e8f6ff" opacity="0.83"/><circle cx="169.3" cy="121.5" r="0.65" fill="#e8f6ff" opacity="0.69"/><circle cx="165.8" cy="106.4" r="0.51" fill="#e8f6ff" opacity="0.84"/><circle cx="204.7" cy="147.4" r="0.65" fill="#e8f6ff" opacity="0.74"/><circle cx="200.3" cy="106.7" r="0.37" fill="#e8f6ff" opacity="0.82"/><circle cx="151.1" cy="133.2" r="0.50" fill="#e8f6ff" opacity="0.86"/><circle cx="184.4" cy="111.4" r="0.33" fill="#e8f6ff" opacity="0.64"/><circle cx="180.4" cy="129.1" r="0.59" fill="#e8f6ff" opacity="0.43"/><circle cx="169.8" cy="155.6" r="0.44" fill="#e8f6ff" opacity="0.49"/><circle cx="159.8" cy="163.5" r="0.73" fill="#e8f6ff" opacity="0.60"/><circle cx="168.1" cy="121.9" r="0.74" fill="#e8f6ff" opacity="0.85"/><circle cx="202.4" cy="157.5" r="0.64" fill="#e8f6ff" opacity="0.46"/><circle cx="201.8" cy="107.2" r="0.67" fill="#e8f6ff" opacity="0.58"/><circle cx="152.0" cy="143.0" r="0.43" fill="#e8f6ff" opacity="0.84"/><circle cx="159.9" cy="143.7" r="0.52" fill="#e8f6ff" opacity="0.42"/><circle cx="165.5" cy="117.6" r="0.69" fill="#e8f6ff" opacity="0.79"/><circle cx="201.5" cy="107.1" r="0.41" fill="#e8f6ff" opacity="0.59"/><circle cx="167.6" cy="110.1" r="0.68" fill="#e8f6ff" opacity="0.40"/><circle cx="179.5" cy="104.7" r="0.46" fill="#e8f6ff" opacity="0.55"/><circle cx="175.4" cy="163.5" r="0.67" fill="#e8f6ff" opacity="0.61"/><circle cx="204.4" cy="113.5" r="0.39" fill="#e8f6ff" opacity="0.72"/><circle cx="192.4" cy="147.9" r="0.55" fill="#e8f6ff" opacity="0.76"/><circle cx="168.3" cy="164.2" r="0.67" fill="#e8f6ff" opacity="0.80"/><circle cx="179.7" cy="162.0" r="0.53" fill="#e8f6ff" opacity="0.88"/><circle cx="174.4" cy="164.4" r="0.46" fill="#e8f6ff" opacity="0.66"/><circle cx="180.8" cy="135.1" r="0.72" fill="#e8f6ff" opacity="0.82"/><circle cx="160.0" cy="146.5" r="0.56" fill="#e8f6ff" opacity="0.60"/><circle cx="156.4" cy="161.4" r="0.79" fill="#e8f6ff" opacity="0.76"/><circle cx="181.4" cy="101.0" r="0.46" fill="#e8f6ff" opacity="0.56"/><circle cx="154.8" cy="122.4" r="0.48" fill="#e8f6ff" opacity="0.61"/><circle cx="153.8" cy="104.6" r="0.78" fill="#e8f6ff" opacity="0.68"/><circle cx="162.8" cy="127.8" r="0.48" fill="#e8f6ff" opacity="0.64"/><circle cx="159.7" cy="149.3" r="0.77" fill="#e8f6ff" opacity="0.71"/><circle cx="202.8" cy="154.5" r="0.57" fill="#e8f6ff" opacity="0.66"/><circle cx="188.0" cy="121.8" r="0.34" fill="#e8f6ff" opacity="0.63"/><circle cx="194.9" cy="144.3" r="0.32" fill="#e8f6ff" opacity="0.81"/><circle cx="152.6" cy="132.9" r="0.39" fill="#e8f6ff" opacity="0.55"/><circle cx="162.7" cy="139.9" r="0.66" fill="#e8f6ff" opacity="0.84"/><circle cx="177.8" cy="99.4" r="0.32" fill="#e8f6ff" opacity="0.44"/><circle cx="157.0" cy="107.8" r="0.45" fill="#e8f6ff" opacity="0.48"/><circle cx="196.8" cy="121.2" r="0.54" fill="#e8f6ff" opacity="0.79"/><circle cx="159.9" cy="131.6" r="0.32" fill="#e8f6ff" opacity="0.64"/><circle cx="201.1" cy="136.4" r="0.45" fill="#e8f6ff" opacity="0.72"/><circle cx="177.6" cy="131.3" r="0.62" fill="#e8f6ff" opacity="0.76"/><circle cx="199.0" cy="166.3" r="0.78" fill="#e8f6ff" opacity="0.81"/><circle cx="187.5" cy="153.4" r="0.40" fill="#e8f6ff" opacity="0.50"/><circle cx="196.4" cy="126.8" r="0.31" fill="#e8f6ff" opacity="0.77"/><circle cx="157.4" cy="114.9" r="0.76" fill="#e8f6ff" opacity="0.49"/><circle cx="195.5" cy="114.5" r="0.70" fill="#e8f6ff" opacity="0.59"/><circle cx="180.9" cy="144.9" r="0.66" fill="#e8f6ff" opacity="0.50"/><circle cx="186.9" cy="107.1" r="0.42" fill="#e8f6ff" opacity="0.79"/><circle cx="158.4" cy="125.2" r="0.36" fill="#e8f6ff" opacity="0.69"/><circle cx="159.6" cy="121.4" r="0.79" fill="#e8f6ff" opacity="0.62"/><circle cx="177.5" cy="97.4" r="0.43" fill="#e8f6ff" opacity="0.45"/><circle cx="184.1" cy="106.3" r="0.39" fill="#e8f6ff" opacity="0.47"/><circle cx="190.7" cy="142.6" r="0.45" fill="#e8f6ff" opacity="0.56"/><circle cx="165.2" cy="135.0" r="0.58" fill="#e8f6ff" opacity="0.47"/><circle cx="158.4" cy="140.7" r="0.44" fill="#e8f6ff" opacity="0.73"/><circle cx="159.7" cy="102.2" r="0.33" fill="#e8f6ff" opacity="0.83"/><circle cx="179.5" cy="96.4" r="0.48" fill="#e8f6ff" opacity="0.72"/><circle cx="162.0" cy="155.7" r="0.30" fill="#e8f6ff" opacity="0.66"/><circle cx="181.6" cy="108.8" r="0.79" fill="#e8f6ff" opacity="0.67"/><circle cx="157.2" cy="150.1" r="0.31" fill="#e8f6ff" opacity="0.74"/><circle cx="195.9" cy="141.6" r="0.31" fill="#e8f6ff" opacity="0.43"/><circle cx="195.7" cy="156.8" r="0.43" fill="#e8f6ff" opacity="0.86"/><circle cx="194.7" cy="102.8" r="0.74" fill="#e8f6ff" opacity="0.41"/><circle cx="167.8" cy="110.3" r="0.41" fill="#e8f6ff" opacity="0.65"/><circle cx="152.5" cy="165.5" r="0.41" fill="#e8f6ff" opacity="0.74"/><circle cx="169.3" cy="162.0" r="0.58" fill="#e8f6ff" opacity="0.65"/><circle cx="191.8" cy="136.0" r="0.53" fill="#e8f6ff" opacity="0.49"/><circle cx="194.0" cy="140.9" r="0.53" fill="#e8f6ff" opacity="0.89"/><circle cx="175.5" cy="149.1" r="0.38" fill="#e8f6ff" opacity="0.58"/><circle cx="184.7" cy="113.9" r="0.80" fill="#e8f6ff" opacity="0.90"/><circle cx="185.5" cy="147.5" r="0.44" fill="#e8f6ff" opacity="0.79"/><circle cx="197.3" cy="128.5" r="0.58" fill="#e8f6ff" opacity="0.73"/><circle cx="163.7" cy="98.3" r="0.39" fill="#e8f6ff" opacity="0.66"/><circle cx="185.0" cy="157.5" r="0.43" fill="#e8f6ff" opacity="0.48"/><circle cx="173.1" cy="106.9" r="0.43" fill="#e8f6ff" opacity="0.64"/><circle cx="187.7" cy="102.7" r="0.39" fill="#e8f6ff" opacity="0.64"/><circle cx="178.7" cy="107.8" r="0.63" fill="#e8f6ff" opacity="0.68"/><circle cx="203.0" cy="164.6" r="0.61" fill="#e8f6ff" opacity="0.44"/><circle cx="178.7" cy="114.8" r="0.44" fill="#e8f6ff" opacity="0.44"/><circle cx="188.0" cy="142.9" r="0.44" fill="#e8f6ff" opacity="0.52"/><circle cx="204.6" cy="135.3" r="0.65" fill="#e8f6ff" opacity="0.52"/><circle cx="201.8" cy="147.5" r="0.55" fill="#e8f6ff" opacity="0.46"/><circle cx="174.0" cy="96.8" r="0.41" fill="#e8f6ff" opacity="0.79"/></g><path d="M60 118 C56 70 92 36 128 37 C172 38 196 66 194 96 L195 109 L206 129 L206 132 L200 138 L201 149 L198 158 L195 171 C193 178 188 180 182 180 C170 181 160 178 154 176 C152 190 150 200 150 225 L88 225 C90 190 88 170 82 158 C66 146 61 132 60 118Z" fill="none" stroke="#9fd4ff" stroke-opacity="0.55" stroke-width="1.4"/><polygon points="120.0,82.0 119.9,84.0 116.0,85.4 115.7,87.0 118.6,89.9 117.8,91.7 113.7,91.7 112.8,93.1 114.6,96.8 113.3,98.3 109.4,96.8 108.1,97.8 108.5,101.9 106.7,102.8 103.6,100.2 102.0,100.7 101.0,104.7 99.0,104.9 97.0,101.3 95.3,101.2 93.0,104.7 91.0,104.2 90.4,100.2 88.8,99.5 85.5,101.9 83.8,100.8 84.6,96.8 83.3,95.7 79.4,96.8 78.2,95.2 80.3,91.7 79.5,90.2 75.4,89.9 74.8,88.0 78.0,85.4 77.8,83.7 74.0,82.0 74.1,80.0 78.0,78.6 78.3,77.0 75.4,74.1 76.2,72.3 80.3,72.3 81.2,70.9 79.4,67.2 80.7,65.7 84.6,67.2 85.9,66.2 85.5,62.1 87.3,61.2 90.4,63.8 92.0,63.3 93.0,59.3 95.0,59.1 97.0,62.7 98.7,62.8 101.0,59.3 103.0,59.8 103.6,63.8 105.2,64.5 108.5,62.1 110.2,63.2 109.4,67.2 110.7,68.3 114.6,67.2 115.8,68.8 113.7,72.3 114.5,73.8 118.6,74.1 119.2,76.0 116.0,78.6 116.2,80.3" fill="#d8dde2"/><circle cx="97" cy="82" r="17.0" fill="#8a929a"/><circle cx="97" cy="82" r="15.2" fill="#d8dde2" opacity="0.55"/><circle cx="97" cy="82" r="11.5" fill="#20262e"/><polygon points="97,73 105,77.5 105,86.5 97,91 89,86.5 89,77.5" fill="#8a9098"/><circle cx="97" cy="82" r="4.5" fill="#0e1218"/><circle cx="86" cy="92" r="1.5" fill="#f08a3a"/><polygon points="140.5,67.0 140.4,68.6 137.9,69.7 137.5,71.0 139.1,73.3 138.3,74.7 135.5,74.6 134.6,75.6 135.0,78.3 133.7,79.3 131.3,78.0 130.0,78.5 129.2,81.1 127.6,81.4 126.0,79.2 124.6,79.1 122.8,81.1 121.2,80.7 120.7,78.0 119.5,77.3 117.0,78.3 115.7,77.3 116.5,74.6 115.7,73.5 112.9,73.3 112.3,71.8 114.1,69.7 113.9,68.4 111.5,67.0 111.6,65.4 114.1,64.3 114.5,63.0 112.9,60.7 113.7,59.3 116.5,59.4 117.4,58.4 117.0,55.7 118.3,54.7 120.7,56.0 122.0,55.5 122.8,52.9 124.4,52.6 126.0,54.8 127.4,54.9 129.2,52.9 130.8,53.3 131.3,56.0 132.5,56.7 135.0,55.7 136.3,56.7 135.5,59.4 136.3,60.5 139.1,60.7 139.7,62.2 137.9,64.3 138.1,65.6" fill="#d2d7dc"/><circle cx="126" cy="67" r="10.7" fill="#8a929a"/><circle cx="126" cy="67" r="9.6" fill="#d2d7dc" opacity="0.55"/><circle cx="126" cy="67" r="6.5" fill="#38424c"/><polygon points="178.1,84.0 178.0,85.6 174.9,86.7 174.6,88.0 177.0,90.3 176.4,91.8 173.1,91.8 172.3,92.9 173.8,95.9 172.7,97.1 169.6,95.9 168.5,96.7 168.8,100.0 167.4,100.8 164.9,98.6 163.6,99.0 162.8,102.2 161.2,102.4 159.6,99.5 158.2,99.5 156.4,102.2 154.8,101.9 154.3,98.6 153.0,98.1 150.3,100.0 149.0,99.2 149.6,95.9 148.6,95.0 145.4,95.9 144.4,94.6 146.1,91.8 145.5,90.6 142.2,90.3 141.7,88.8 144.3,86.7 144.1,85.4 141.1,84.0 141.2,82.4 144.3,81.3 144.6,80.0 142.2,77.7 142.8,76.2 146.1,76.2 146.9,75.1 145.4,72.1 146.5,70.9 149.6,72.1 150.7,71.3 150.3,68.0 151.8,67.2 154.3,69.4 155.6,69.0 156.4,65.8 158.0,65.6 159.6,68.5 161.0,68.5 162.8,65.8 164.4,66.1 164.9,69.4 166.2,69.9 168.8,68.0 170.2,68.8 169.6,72.1 170.6,73.0 173.8,72.1 174.8,73.4 173.1,76.2 173.7,77.4 177.0,77.7 177.5,79.2 174.9,81.3 175.1,82.6" fill="#d2d8de"/><circle cx="159.6" cy="84" r="13.7" fill="#8a929a"/><circle cx="159.6" cy="84" r="12.2" fill="#d2d8de" opacity="0.55"/><circle cx="159.6" cy="84" r="11.5" fill="#163c68"/><circle cx="159.6" cy="84" r="7.5" fill="#0a2a4e"/><circle cx="156" cy="80" r="2.5" fill="#6ab8f0" opacity="0.8"/><polygon points="144.0,97.0 143.9,98.4 141.9,99.4 141.5,100.5 142.5,102.5 141.7,103.7 139.5,103.5 138.6,104.3 138.5,106.5 137.2,107.2 135.4,105.9 134.2,106.2 133.0,108.0 131.6,107.9 130.6,105.9 129.5,105.5 127.5,106.5 126.3,105.7 126.5,103.5 125.7,102.6 123.5,102.5 122.8,101.2 124.1,99.4 123.8,98.2 122.0,97.0 122.1,95.6 124.1,94.6 124.5,93.5 123.5,91.5 124.3,90.3 126.5,90.5 127.4,89.7 127.5,87.5 128.8,86.8 130.6,88.1 131.8,87.8 133.0,86.0 134.4,86.1 135.4,88.1 136.5,88.5 138.5,87.5 139.7,88.3 139.5,90.5 140.3,91.4 142.5,91.5 143.2,92.8 141.9,94.6 142.2,95.8" fill="#9ea7b1"/><circle cx="133" cy="97" r="8.1" fill="#6e7882"/><circle cx="133" cy="97" r="7.3" fill="#9ea7b1" opacity="0.55"/><circle cx="133" cy="97" r="5.0" fill="#4a5560"/><polygon points="84.0,104.0 83.9,105.3 82.4,106.1 82.0,107.1 82.5,108.7 81.7,109.7 79.9,109.4 79.1,110.0 78.5,111.6 77.3,111.9 76.0,110.7 74.9,110.6 73.5,111.6 72.4,111.1 72.1,109.4 71.2,108.8 69.5,108.7 68.9,107.6 69.6,106.1 69.4,105.1 68.0,104.0 68.1,102.7 69.6,101.9 70.0,100.9 69.5,99.3 70.3,98.3 72.1,98.6 72.9,98.0 73.5,96.4 74.7,96.1 76.0,97.3 77.1,97.4 78.5,96.4 79.6,96.9 79.9,98.6 80.8,99.2 82.5,99.3 83.1,100.4 82.4,101.9 82.6,102.9" fill="#98a2ac"/><circle cx="76" cy="104" r="5.9" fill="#7c8690"/><circle cx="76" cy="104" r="5.3" fill="#98a2ac" opacity="0.55"/><circle cx="76" cy="104" r="2.8" fill="#6a747e"/><ellipse cx="117" cy="109" rx="6" ry="3.5" fill="none" stroke="#c8d0d8" stroke-width="1.3" transform="rotate(25 117 109)"/><polygon points="120.0,121.0 119.9,122.8 116.8,123.9 116.5,125.4 118.6,127.9 117.9,129.5 114.6,129.4 113.7,130.6 114.7,133.7 113.4,134.9 110.4,133.6 109.1,134.3 108.9,137.6 107.2,138.2 104.9,135.8 103.5,136.0 102.0,139.0 100.2,138.9 99.1,135.8 97.6,135.5 95.1,137.6 93.5,136.9 93.6,133.6 92.4,132.7 89.3,133.7 88.1,132.4 89.4,129.4 88.7,128.1 85.4,127.9 84.8,126.2 87.2,123.9 87.0,122.5 84.0,121.0 84.1,119.2 87.2,118.1 87.5,116.6 85.4,114.1 86.1,112.5 89.4,112.6 90.3,111.4 89.3,108.3 90.6,107.1 93.6,108.4 94.9,107.7 95.1,104.4 96.8,103.8 99.1,106.2 100.5,106.0 102.0,103.0 103.8,103.1 104.9,106.2 106.4,106.5 108.9,104.4 110.5,105.1 110.4,108.4 111.6,109.3 114.7,108.3 115.9,109.6 114.6,112.6 115.3,113.9 118.6,114.1 119.2,115.8 116.8,118.1 117.0,119.5" fill="#d2d8de"/><circle cx="102" cy="121" r="13.3" fill="#7a848e"/><circle cx="102" cy="121" r="11.9" fill="#d2d8de" opacity="0.55"/><circle cx="102" cy="121" r="11.2" fill="#1e4a7c"/><circle cx="102" cy="121" r="5" fill="#7cc6f6"/><circle cx="102" cy="121" r="2" fill="#0e3a66"/><polygon points="155.0,121.0 154.9,122.5 152.6,123.4 152.3,124.6 153.7,126.6 153.0,127.9 150.5,127.8 149.7,128.7 150.1,131.2 148.9,132.0 146.7,130.8 145.6,131.3 144.9,133.7 143.5,133.9 142.0,131.9 140.8,131.9 139.1,133.7 137.7,133.3 137.3,130.8 136.2,130.2 133.9,131.2 132.8,130.2 133.5,127.8 132.8,126.8 130.3,126.6 129.7,125.3 131.4,123.4 131.1,122.2 129.0,121.0 129.1,119.5 131.4,118.6 131.7,117.4 130.3,115.4 131.0,114.1 133.5,114.2 134.3,113.3 133.9,110.8 135.1,110.0 137.3,111.2 138.4,110.7 139.1,108.3 140.5,108.1 142.0,110.1 143.2,110.1 144.9,108.3 146.3,108.7 146.7,111.2 147.8,111.8 150.1,110.8 151.2,111.8 150.5,114.2 151.2,115.2 153.7,115.4 154.3,116.7 152.6,118.6 152.9,119.8" fill="#a9b2bc"/><circle cx="142" cy="121" r="9.6" fill="#4c5660"/><circle cx="142" cy="121" r="8.6" fill="#a9b2bc" opacity="0.55"/><circle cx="142" cy="121" r="8.6" fill="#0f1a28"/><circle cx="142" cy="121" r="3" fill="#7ac8f8"/><path d="M186 229 L175 203 C170 192 174 183 181 184 C186 185 190 192 194 199 L197 200 L198 163 C198 154 207 153 208 161 L211 193 C215 191 220 193 221 197 C227 197 232 204 233 213 C234 223 229 230 222 233Z" fill="#d2dce6"/><circle cx="182.0" cy="172.8" r="0.47" fill="#eef4fa" opacity="0.5"/><circle cx="229.4" cy="176.0" r="0.76" fill="#eef4fa" opacity="0.5"/><circle cx="199.2" cy="174.6" r="0.67" fill="#eef4fa" opacity="0.5"/><circle cx="199.7" cy="179.5" r="0.46" fill="#7d8ea0" opacity="0.5"/><circle cx="198.6" cy="189.6" r="0.52" fill="#7d8ea0" opacity="0.5"/><circle cx="195.0" cy="174.5" r="0.32" fill="#7d8ea0" opacity="0.5"/><circle cx="204.4" cy="177.2" r="0.34" fill="#eef4fa" opacity="0.5"/><circle cx="179.7" cy="218.2" r="0.68" fill="#eef4fa" opacity="0.5"/><circle cx="186.1" cy="195.8" r="0.46" fill="#eef4fa" opacity="0.5"/><circle cx="188.7" cy="202.0" r="0.64" fill="#7d8ea0" opacity="0.5"/><circle cx="213.5" cy="229.1" r="0.65" fill="#eef4fa" opacity="0.5"/><circle cx="191.8" cy="189.5" r="0.62" fill="#eef4fa" opacity="0.5"/><circle cx="227.8" cy="166.3" r="0.63" fill="#7d8ea0" opacity="0.5"/><circle cx="177.6" cy="223.0" r="0.46" fill="#7d8ea0" opacity="0.5"/><circle cx="205.8" cy="206.1" r="0.64" fill="#eef4fa" opacity="0.5"/><circle cx="229.2" cy="208.7" r="0.46" fill="#7d8ea0" opacity="0.5"/><circle cx="211.0" cy="204.4" r="0.79" fill="#eef4fa" opacity="0.5"/><circle cx="214.7" cy="183.9" r="0.31" fill="#eef4fa" opacity="0.5"/><circle cx="179.5" cy="161.1" r="0.60" fill="#eef4fa" opacity="0.5"/><circle cx="200.0" cy="173.1" r="0.31" fill="#eef4fa" opacity="0.5"/><circle cx="179.5" cy="176.5" r="0.34" fill="#eef4fa" opacity="0.5"/><circle cx="215.8" cy="168.4" r="0.36" fill="#eef4fa" opacity="0.5"/><circle cx="203.0" cy="180.7" r="0.69" fill="#eef4fa" opacity="0.5"/><circle cx="201.1" cy="207.2" r="0.73" fill="#7d8ea0" opacity="0.5"/><circle cx="180.1" cy="166.7" r="0.70" fill="#eef4fa" opacity="0.5"/><circle cx="195.2" cy="168.9" r="0.47" fill="#7d8ea0" opacity="0.5"/><circle cx="183.3" cy="172.8" r="0.33" fill="#7d8ea0" opacity="0.5"/><circle cx="194.7" cy="172.6" r="0.55" fill="#7d8ea0" opacity="0.5"/><circle cx="190.7" cy="189.6" r="0.60" fill="#eef4fa" opacity="0.5"/><circle cx="186.3" cy="214.4" r="0.33" fill="#eef4fa" opacity="0.5"/><circle cx="209.4" cy="174.3" r="0.72" fill="#7d8ea0" opacity="0.5"/><circle cx="224.0" cy="173.8" r="0.65" fill="#7d8ea0" opacity="0.5"/><circle cx="224.4" cy="174.9" r="0.60" fill="#eef4fa" opacity="0.5"/><circle cx="225.3" cy="184.1" r="0.50" fill="#eef4fa" opacity="0.5"/><circle cx="186.0" cy="205.4" r="0.79" fill="#7d8ea0" opacity="0.5"/><circle cx="189.7" cy="178.8" r="0.52" fill="#7d8ea0" opacity="0.5"/><circle cx="205.6" cy="204.3" r="0.34" fill="#eef4fa" opacity="0.5"/><circle cx="193.8" cy="214.6" r="0.32" fill="#eef4fa" opacity="0.5"/><circle cx="195.7" cy="218.3" r="0.70" fill="#7d8ea0" opacity="0.5"/><circle cx="181.4" cy="173.2" r="0.40" fill="#eef4fa" opacity="0.5"/><circle cx="219.6" cy="159.7" r="0.30" fill="#7d8ea0" opacity="0.5"/><circle cx="202.4" cy="226.3" r="0.73" fill="#eef4fa" opacity="0.5"/><circle cx="183.3" cy="227.7" r="0.53" fill="#7d8ea0" opacity="0.5"/><circle cx="224.8" cy="210.5" r="0.58" fill="#7d8ea0" opacity="0.5"/><circle cx="191.2" cy="197.2" r="0.43" fill="#7d8ea0" opacity="0.5"/><circle cx="204.5" cy="169.6" r="0.67" fill="#eef4fa" opacity="0.5"/><circle cx="199.7" cy="190.6" r="0.37" fill="#eef4fa" opacity="0.5"/><circle cx="197.0" cy="180.2" r="0.44" fill="#7d8ea0" opacity="0.5"/><circle cx="202.2" cy="190.8" r="0.65" fill="#7d8ea0" opacity="0.5"/><circle cx="213.9" cy="162.8" r="0.45" fill="#7d8ea0" opacity="0.5"/><circle cx="219.7" cy="172.3" r="0.75" fill="#7d8ea0" opacity="0.5"/><circle cx="182.9" cy="162.4" r="0.33" fill="#7d8ea0" opacity="0.5"/><circle cx="228.0" cy="200.7" r="0.40" fill="#7d8ea0" opacity="0.5"/><circle cx="202.7" cy="178.4" r="0.70" fill="#7d8ea0" opacity="0.5"/><circle cx="219.3" cy="190.4" r="0.63" fill="#7d8ea0" opacity="0.5"/><circle cx="183.5" cy="162.9" r="0.42" fill="#eef4fa" opacity="0.5"/><circle cx="195.1" cy="194.7" r="0.45" fill="#eef4fa" opacity="0.5"/><circle cx="216.5" cy="163.0" r="0.36" fill="#7d8ea0" opacity="0.5"/><circle cx="204.6" cy="223.6" r="0.74" fill="#7d8ea0" opacity="0.5"/><circle cx="192.2" cy="216.5" r="0.55" fill="#eef4fa" opacity="0.5"/><circle cx="196.5" cy="162.4" r="0.71" fill="#eef4fa" opacity="0.5"/><circle cx="226.0" cy="171.4" r="0.72" fill="#eef4fa" opacity="0.5"/><circle cx="200.0" cy="216.0" r="0.54" fill="#7d8ea0" opacity="0.5"/><circle cx="184.6" cy="219.3" r="0.39" fill="#7d8ea0" opacity="0.5"/><circle cx="180.3" cy="192.0" r="0.42" fill="#eef4fa" opacity="0.5"/><circle cx="211.9" cy="202.7" r="0.56" fill="#eef4fa" opacity="0.5"/><circle cx="196.1" cy="213.8" r="0.49" fill="#7d8ea0" opacity="0.5"/><circle cx="220.0" cy="174.2" r="0.76" fill="#eef4fa" opacity="0.5"/><circle cx="220.3" cy="172.2" r="0.39" fill="#eef4fa" opacity="0.5"/><circle cx="193.2" cy="177.6" r="0.75" fill="#7d8ea0" opacity="0.5"/><circle cx="226.4" cy="217.8" r="0.32" fill="#eef4fa" opacity="0.5"/><circle cx="192.1" cy="208.8" r="0.68" fill="#7d8ea0" opacity="0.5"/><circle cx="222.5" cy="179.9" r="0.31" fill="#7d8ea0" opacity="0.5"/><circle cx="179.0" cy="162.6" r="0.55" fill="#eef4fa" opacity="0.5"/><circle cx="228.8" cy="207.6" r="0.48" fill="#eef4fa" opacity="0.5"/><circle cx="198.3" cy="180.7" r="0.60" fill="#eef4fa" opacity="0.5"/><circle cx="205.1" cy="173.8" r="0.37" fill="#eef4fa" opacity="0.5"/><circle cx="195.7" cy="201.4" r="0.59" fill="#7d8ea0" opacity="0.5"/><circle cx="190.7" cy="174.4" r="0.67" fill="#eef4fa" opacity="0.5"/><circle cx="193.2" cy="172.5" r="0.72" fill="#eef4fa" opacity="0.5"/><circle cx="183.1" cy="161.2" r="0.30" fill="#eef4fa" opacity="0.5"/><circle cx="202.0" cy="198.6" r="0.63" fill="#7d8ea0" opacity="0.5"/><circle cx="228.4" cy="166.1" r="0.67" fill="#eef4fa" opacity="0.5"/><circle cx="213.4" cy="214.0" r="0.58" fill="#7d8ea0" opacity="0.5"/><circle cx="184.2" cy="174.8" r="0.71" fill="#eef4fa" opacity="0.5"/><circle cx="203.1" cy="197.6" r="0.67" fill="#eef4fa" opacity="0.5"/><circle cx="221.3" cy="181.6" r="0.48" fill="#7d8ea0" opacity="0.5"/><circle cx="228.8" cy="172.2" r="0.46" fill="#7d8ea0" opacity="0.5"/><circle cx="192.5" cy="186.4" r="0.55" fill="#eef4fa" opacity="0.5"/><circle cx="219.6" cy="206.3" r="0.39" fill="#7d8ea0" opacity="0.5"/><circle cx="192.5" cy="159.7" r="0.54" fill="#eef4fa" opacity="0.5"/><circle cx="211.0" cy="181.7" r="0.56" fill="#7d8ea0" opacity="0.5"/><circle cx="206.3" cy="206.2" r="0.58" fill="#7d8ea0" opacity="0.5"/><circle cx="229.4" cy="173.6" r="0.49" fill="#7d8ea0" opacity="0.5"/><circle cx="199.0" cy="187.9" r="0.40" fill="#7d8ea0" opacity="0.5"/><circle cx="198.0" cy="164.3" r="0.54" fill="#7d8ea0" opacity="0.5"/><circle cx="206.2" cy="161.1" r="0.77" fill="#7d8ea0" opacity="0.5"/><circle cx="219.7" cy="190.8" r="0.76" fill="#7d8ea0" opacity="0.5"/><circle cx="213.4" cy="169.7" r="0.65" fill="#eef4fa" opacity="0.5"/><circle cx="190.6" cy="172.6" r="0.64" fill="#7d8ea0" opacity="0.5"/><circle cx="223.9" cy="207.4" r="0.63" fill="#eef4fa" opacity="0.5"/><circle cx="205.5" cy="215.5" r="0.38" fill="#7d8ea0" opacity="0.5"/><circle cx="212.9" cy="176.9" r="0.52" fill="#eef4fa" opacity="0.5"/><circle cx="222.5" cy="216.0" r="0.74" fill="#7d8ea0" opacity="0.5"/><circle cx="210.4" cy="201.0" r="0.54" fill="#7d8ea0" opacity="0.5"/><circle cx="184.1" cy="159.4" r="0.40" fill="#7d8ea0" opacity="0.5"/><circle cx="205.5" cy="189.3" r="0.56" fill="#eef4fa" opacity="0.5"/><circle cx="220.0" cy="209.0" r="0.42" fill="#eef4fa" opacity="0.5"/><circle cx="178.6" cy="219.5" r="0.39" fill="#7d8ea0" opacity="0.5"/><circle cx="180.2" cy="192.1" r="0.68" fill="#7d8ea0" opacity="0.5"/><circle cx="182.9" cy="186.1" r="0.70" fill="#7d8ea0" opacity="0.5"/><circle cx="190.3" cy="167.4" r="0.59" fill="#eef4fa" opacity="0.5"/><circle cx="226.2" cy="179.8" r="0.78" fill="#eef4fa" opacity="0.5"/><circle cx="228.9" cy="173.6" r="0.42" fill="#eef4fa" opacity="0.5"/><circle cx="230.0" cy="205.5" r="0.42" fill="#eef4fa" opacity="0.5"/><circle cx="224.2" cy="158.2" r="0.78" fill="#7d8ea0" opacity="0.5"/><circle cx="188.5" cy="192.1" r="0.45" fill="#7d8ea0" opacity="0.5"/><circle cx="194.8" cy="186.8" r="0.62" fill="#7d8ea0" opacity="0.5"/><circle cx="185.4" cy="208.4" r="0.37" fill="#7d8ea0" opacity="0.5"/><circle cx="178.9" cy="195.1" r="0.38" fill="#eef4fa" opacity="0.5"/><circle cx="188.8" cy="198.9" r="0.63" fill="#eef4fa" opacity="0.5"/><circle cx="217.7" cy="170.3" r="0.46" fill="#eef4fa" opacity="0.5"/><circle cx="204.1" cy="220.1" r="0.50" fill="#7d8ea0" opacity="0.5"/><circle cx="212.0" cy="228.3" r="0.56" fill="#7d8ea0" opacity="0.5"/><circle cx="190.0" cy="195.5" r="0.74" fill="#eef4fa" opacity="0.5"/><circle cx="186.3" cy="219.3" r="0.31" fill="#eef4fa" opacity="0.5"/><circle cx="210.2" cy="203.3" r="0.77" fill="#eef4fa" opacity="0.5"/><circle cx="205.6" cy="177.6" r="0.44" fill="#eef4fa" opacity="0.5"/><circle cx="181.5" cy="208.1" r="0.41" fill="#eef4fa" opacity="0.5"/><circle cx="189.6" cy="190.7" r="0.42" fill="#eef4fa" opacity="0.5"/><circle cx="186.5" cy="179.3" r="0.73" fill="#eef4fa" opacity="0.5"/><circle cx="179.9" cy="178.4" r="0.62" fill="#eef4fa" opacity="0.5"/><circle cx="185.1" cy="193.9" r="0.31" fill="#eef4fa" opacity="0.5"/><circle cx="181.2" cy="199.7" r="0.63" fill="#7d8ea0" opacity="0.5"/><circle cx="205.6" cy="211.0" r="0.44" fill="#eef4fa" opacity="0.5"/><circle cx="213.5" cy="198.1" r="0.34" fill="#eef4fa" opacity="0.5"/><circle cx="179.1" cy="160.8" r="0.55" fill="#7d8ea0" opacity="0.5"/><circle cx="198.5" cy="191.9" r="0.75" fill="#7d8ea0" opacity="0.5"/><circle cx="228.4" cy="167.8" r="0.74" fill="#7d8ea0" opacity="0.5"/><circle cx="188.7" cy="160.4" r="0.70" fill="#eef4fa" opacity="0.5"/><path d="M197 201 L203 206 M209 194 L214 206 M220 199 L224 210" stroke="#8597aa" stroke-width="0.9" fill="none"/><path d="M0 222 L259 222 L259 259 L0 259z" fill="url(#ifloor)"/><line x1="67.5" y1="222" x2="-120" y2="259" stroke="#2a5a90" stroke-width="0.8" opacity="0.7"/><line x1="82.5" y1="222" x2="-60" y2="259" stroke="#2a5a90" stroke-width="0.8" opacity="0.7"/><line x1="97.5" y1="222" x2="0" y2="259" stroke="#2a5a90" stroke-width="0.8" opacity="0.7"/><line x1="112.5" y1="222" x2="60" y2="259" stroke="#2a5a90" stroke-width="0.8" opacity="0.7"/><line x1="127.5" y1="222" x2="120" y2="259" stroke="#2a5a90" stroke-width="0.8" opacity="0.7"/><line x1="142.5" y1="222" x2="180" y2="259" stroke="#2a5a90" stroke-width="0.8" opacity="0.7"/><line x1="157.5" y1="222" x2="240" y2="259" stroke="#2a5a90" stroke-width="0.8" opacity="0.7"/><line x1="172.5" y1="222" x2="300" y2="259" stroke="#2a5a90" stroke-width="0.8" opacity="0.7"/><line x1="187.5" y1="222" x2="360" y2="259" stroke="#2a5a90" stroke-width="0.8" opacity="0.7"/><line x1="0" y1="226" x2="259" y2="226" stroke="#2a5a90" stroke-width="0.8" opacity="0.6"/><line x1="0" y1="231" x2="259" y2="231" stroke="#2a5a90" stroke-width="0.8" opacity="0.6"/><line x1="0" y1="237" x2="259" y2="237" stroke="#2a5a90" stroke-width="0.8" opacity="0.6"/><line x1="0" y1="244" x2="259" y2="244" stroke="#2a5a90" stroke-width="0.8" opacity="0.6"/><line x1="0" y1="252" x2="259" y2="252" stroke="#2a5a90" stroke-width="0.8" opacity="0.6"/><rect x="68.3" y="230.3" width="8.4" height="3.0" fill="#1a3d6c" opacity="0.75"/><rect x="212.8" y="246.6" width="12.4" height="4.7" fill="#153560" opacity="0.75"/><rect x="22.7" y="233.5" width="10.6" height="3.3" fill="#1a3d6c" opacity="0.75"/><rect x="146.6" y="233.1" width="9.4" height="3.3" fill="#2a5a92" opacity="0.75"/><rect x="140.4" y="251.0" width="14.1" height="5.1" fill="#2a5a92" opacity="0.75"/><rect x="222.5" y="228.3" width="9.1" height="2.8" fill="#a6d2f2" opacity="0.75"/><rect x="36.8" y="250.5" width="18.4" height="5.0" fill="#2a5a92" opacity="0.75"/><rect x="19.1" y="253.5" width="13.3" height="5.4" fill="#78b4e2" opacity="0.75"/><rect x="119.9" y="247.7" width="11.3" height="4.8" fill="#2a5a92" opacity="0.75"/><rect x="197.6" y="235.5" width="11.8" height="3.5" fill="#2a5a92" opacity="0.75"/><rect x="57.4" y="234.8" width="9.3" height="3.5" fill="#78b4e2" opacity="0.75"/><rect x="52.8" y="247.5" width="15.8" height="4.7" fill="#3c78b4" opacity="0.75"/><rect x="-1.1" y="237.0" width="11.2" height="3.7" fill="#1f4a80" opacity="0.75"/><rect x="248.0" y="253.2" width="17.1" height="5.3" fill="#78b4e2" opacity="0.75"/><rect x="156.8" y="232.3" width="10.0" height="3.2" fill="#2a5a92" opacity="0.75"/><rect x="145.2" y="225.5" width="7.6" height="2.5" fill="#1f4a80" opacity="0.75"/><rect x="198.8" y="253.9" width="14.2" height="5.4" fill="#3c78b4" opacity="0.75"/><rect x="48.7" y="226.2" width="8.2" height="2.6" fill="#a6d2f2" opacity="0.75"/><rect x="95.9" y="244.3" width="15.0" height="4.4" fill="#3c78b4" opacity="0.75"/><rect x="224.3" y="254.8" width="18.2" height="5.5" fill="#1a3d6c" opacity="0.75"/><rect x="39.1" y="239.1" width="10.0" height="3.9" fill="#1a3d6c" opacity="0.75"/><rect x="215.4" y="246.5" width="13.4" height="4.6" fill="#2a5a92" opacity="0.75"/><rect x="53.2" y="225.1" width="7.4" height="2.5" fill="#3c78b4" opacity="0.75"/><rect x="125.2" y="248.5" width="15.3" height="4.9" fill="#1f4a80" opacity="0.75"/><rect x="250.1" y="246.9" width="11.4" height="4.7" fill="#1a3d6c" opacity="0.75"/><rect x="236.0" y="256.2" width="19.4" height="5.6" fill="#2a5a92" opacity="0.75"/><rect x="185.8" y="253.1" width="18.1" height="5.3" fill="#78b4e2" opacity="0.75"/><rect x="-2.3" y="229.7" width="9.8" height="3.0" fill="#1f4a80" opacity="0.75"/><rect x="151.3" y="234.5" width="9.9" height="3.4" fill="#2a5a92" opacity="0.75"/><rect x="82.8" y="248.3" width="16.3" height="4.8" fill="#153560" opacity="0.75"/><rect x="174.6" y="244.4" width="13.7" height="4.4" fill="#2a5a92" opacity="0.75"/><rect x="233.7" y="240.6" width="14.5" height="4.1" fill="#1a3d6c" opacity="0.75"/><rect x="237.0" y="248.6" width="13.7" height="4.9" fill="#3c78b4" opacity="0.75"/><rect x="145.4" y="225.7" width="8.0" height="2.6" fill="#153560" opacity="0.75"/><rect x="116.5" y="229.0" width="8.4" height="2.9" fill="#3c78b4" opacity="0.75"/><rect x="235.7" y="243.4" width="12.8" height="4.3" fill="#2a5a92" opacity="0.75"/><rect x="215.5" y="242.0" width="11.1" height="4.2" fill="#2a5a92" opacity="0.75"/><rect x="170.1" y="244.1" width="13.1" height="4.4" fill="#1a3d6c" opacity="0.75"/><rect x="251.8" y="232.7" width="8.4" height="3.3" fill="#1f4a80" opacity="0.75"/><rect x="228.1" y="250.0" width="17.3" height="5.0" fill="#78b4e2" opacity="0.75"/><rect x="142.4" y="237.5" width="9.9" height="3.7" fill="#153560" opacity="0.75"/><rect x="5.6" y="241.4" width="12.7" height="4.1" fill="#1f4a80" opacity="0.75"/><rect x="255.0" y="234.7" width="11.2" height="3.5" fill="#1a3d6c" opacity="0.75"/><rect x="32.2" y="235.9" width="10.1" height="3.6" fill="#78b4e2" opacity="0.75"/><rect x="86.6" y="230.1" width="7.8" height="3.0" fill="#153560" opacity="0.75"/><rect x="113.1" y="250.0" width="13.2" height="5.0" fill="#2a5a92" opacity="0.75"/><rect x="209.4" y="232.0" width="8.8" height="3.2" fill="#a6d2f2" opacity="0.75"/><rect x="11.6" y="235.5" width="11.8" height="3.5" fill="#a6d2f2" opacity="0.75"/><rect x="211.4" y="227.1" width="8.9" height="2.7" fill="#3c78b4" opacity="0.75"/><rect x="116.3" y="254.2" width="16.9" height="5.4" fill="#2a5a92" opacity="0.75"/><rect x="93.5" y="250.8" width="12.1" height="5.1" fill="#2a5a92" opacity="0.75"/><rect x="120.5" y="228.4" width="8.1" height="2.8" fill="#3c78b4" opacity="0.75"/><rect x="160.3" y="227.5" width="8.2" height="2.8" fill="#a6d2f2" opacity="0.75"/><rect x="200.1" y="226.9" width="8.0" height="2.7" fill="#a6d2f2" opacity="0.75"/><rect x="61.4" y="245.4" width="11.6" height="4.5" fill="#2a5a92" opacity="0.75"/><rect x="154.3" y="234.3" width="9.4" height="3.4" fill="#1a3d6c" opacity="0.75"/><rect x="61.3" y="243.6" width="15.6" height="4.4" fill="#a6d2f2" opacity="0.75"/><rect x="91.0" y="250.3" width="15.6" height="5.0" fill="#3c78b4" opacity="0.75"/><rect x="199.0" y="232.3" width="9.1" height="3.2" fill="#78b4e2" opacity="0.75"/><rect x="99.9" y="227.9" width="9.1" height="2.8" fill="#1a3d6c" opacity="0.75"/><rect x="242.1" y="225.1" width="7.5" height="2.5" fill="#3c78b4" opacity="0.75"/><rect x="173.5" y="246.4" width="15.3" height="4.6" fill="#78b4e2" opacity="0.75"/><rect x="9.2" y="243.9" width="15.4" height="4.4" fill="#a6d2f2" opacity="0.75"/><rect x="116.3" y="256.1" width="19.1" height="5.6" fill="#1a3d6c" opacity="0.75"/><rect x="145.5" y="228.8" width="9.0" height="2.9" fill="#3c78b4" opacity="0.75"/><rect x="70.3" y="246.2" width="11.8" height="4.6" fill="#3c78b4" opacity="0.75"/><rect x="146.7" y="251.8" width="15.2" height="5.2" fill="#153560" opacity="0.75"/><rect x="56.5" y="251.1" width="18.1" height="5.1" fill="#153560" opacity="0.75"/><rect x="173.3" y="237.6" width="10.5" height="3.8" fill="#a6d2f2" opacity="0.75"/><rect x="221.1" y="224.9" width="7.0" height="2.5" fill="#3c78b4" opacity="0.75"/><rect x="199.6" y="252.2" width="17.6" height="5.2" fill="#78b4e2" opacity="0.75"/><rect x="142.1" y="223.5" width="7.5" height="2.4" fill="#1a3d6c" opacity="0.75"/><rect x="110.1" y="230.2" width="8.0" height="3.0" fill="#1a3d6c" opacity="0.75"/><rect x="217.9" y="252.5" width="19.2" height="5.3" fill="#3c78b4" opacity="0.75"/><rect x="53.0" y="253.2" width="14.9" height="5.3" fill="#1a3d6c" opacity="0.75"/><rect x="218.5" y="229.5" width="8.7" height="3.0" fill="#2a5a92" opacity="0.75"/><rect x="136.9" y="241.4" width="13.3" height="4.1" fill="#1a3d6c" opacity="0.75"/><rect x="178.6" y="234.6" width="12.1" height="3.5" fill="#2a5a92" opacity="0.75"/><rect x="10.8" y="244.5" width="11.1" height="4.5" fill="#1f4a80" opacity="0.75"/><rect x="227.6" y="247.6" width="14.8" height="4.8" fill="#3c78b4" opacity="0.75"/><rect x="50.1" y="230.5" width="9.2" height="3.1" fill="#1f4a80" opacity="0.75"/><rect x="159.9" y="230.9" width="8.7" height="3.1" fill="#153560" opacity="0.75"/><rect x="96.3" y="248.5" width="17.9" height="4.8" fill="#1f4a80" opacity="0.75"/><rect x="151.2" y="249.6" width="14.6" height="5.0" fill="#1a3d6c" opacity="0.75"/><rect x="57.3" y="251.2" width="13.3" height="5.1" fill="#1a3d6c" opacity="0.75"/><rect x="81.5" y="249.6" width="13.0" height="5.0" fill="#153560" opacity="0.75"/><rect x="186.6" y="248.0" width="11.6" height="4.8" fill="#153560" opacity="0.75"/><rect x="198.1" y="224.4" width="7.6" height="2.4" fill="#2a5a92" opacity="0.75"/><rect x="22.8" y="242.7" width="13.7" height="4.3" fill="#1f4a80" opacity="0.75"/><rect x="86.5" y="239.0" width="10.2" height="3.9" fill="#78b4e2" opacity="0.75"/><rect x="0" y="214" width="259" height="9" fill="#cfeaf9" opacity="0.3"/></g></svg>
<div style="position:absolute;left:234.90px;top:428.08px;font-size:12.660px;line-height:1;font-weight:400;color:#d6d93a;white-space:pre;transform-origin:left top;letter-spacing:0.09px;">This is the footnote</div>
<div style="position:absolute;left:230.90px;top:428.60px;width:3.40px;height:11.50px;background:#6d7d99;opacity:0.85;"></div>
<div style="position:absolute;left:231.30px;top:428.07px;font-size:7.000px;line-height:1;font-weight:400;color:#c6d34a;white-space:pre;transform-origin:left top;">1</div>
<div style="position:absolute;left:223.60px;top:419.30px;width:302.40px;height:2.10px;background:#2d79d6;"></div>
<div style="position:absolute;left:223.60px;top:464.10px;width:302.40px;height:2.10px;background:#2d79d6;"></div>
<div style="position:absolute;left:222.60px;top:420.00px;width:2.10px;height:45.40px;background:#2d79d6;"></div>
<div style="position:absolute;left:524.90px;top:420.00px;width:2.10px;height:45.40px;background:#2d79d6;"></div>
<div style="position:absolute;left:374.00px;top:408.00px;width:1.40px;height:12.00px;background:#2d79d6;"></div>
<svg style="position:absolute;left:368.2px;top:397.3px" width="13" height="13" viewBox="0 0 13 13"><circle cx="6.5" cy="6.5" r="5.6" fill="#2d79d6" stroke="#ffffff" stroke-width="0.9"/><path d="M8.8 5.2 A2.6 2.6 0 1 0 8.9 7.6" fill="none" stroke="#fff" stroke-width="1.1"/><path d="M9.6 3.6 L9.5 5.9 L7.3 5.5z" fill="#fff"/></svg>
<div style="position:absolute;left:220.00px;top:416.80px;width:7.20px;height:7.20px;background:#fff;border:1.2px solid #2d79d6;border-radius:50%;"></div>
<div style="position:absolute;left:522.30px;top:416.80px;width:7.20px;height:7.20px;background:#fff;border:1.2px solid #2d79d6;border-radius:50%;"></div>
<div style="position:absolute;left:220.00px;top:461.60px;width:7.20px;height:7.20px;background:#fff;border:1.2px solid #2d79d6;border-radius:50%;"></div>
<div style="position:absolute;left:522.30px;top:461.60px;width:7.20px;height:7.20px;background:#fff;border:1.2px solid #2d79d6;border-radius:50%;"></div>
<div style="position:absolute;left:368.60px;top:418.90px;width:11.40px;height:3.20px;background:#fff;border-radius:1px;"></div>
<div style="position:absolute;left:368.60px;top:463.60px;width:11.40px;height:3.20px;background:#fff;border-radius:1px;"></div>
<div style="position:absolute;left:222.10px;top:437.40px;width:3.20px;height:10.80px;background:#fff;border-radius:1px;"></div>
<div style="position:absolute;left:524.40px;top:437.40px;width:3.20px;height:10.80px;background:#fff;border-radius:1px;"></div>
<div style="position:absolute;left:202.50px;top:450.40px;width:17.00px;height:15.80px;background:#fff;border-radius:4px;box-shadow:0 0 1px rgba(0,0,0,0.2);"></div>
<svg style="position:absolute;left:205.5px;top:453px" width="11" height="11" viewBox="0 0 11 11"><rect x="1.2" y="3.6" width="8.6" height="1.2" fill="#9aa0a6"/><rect x="1.2" y="6" width="8.6" height="1.2" fill="#9aa0a6"/><path d="M2 1.8 L9.4 9.3" stroke="#2d2f31" stroke-width="1"/></svg>
<div style="position:absolute;left:538.00px;top:500.60px;width:27.00px;height:1.00px;background:#80868b;"></div>
<div style="position:absolute;left:132.30px;top:513.20px;width:838.60px;height:26.50px;background:#edf2fa;border-radius:6px;"></div>
<div style="position:absolute;left:140.90px;top:521.04px;font-size:8.817px;line-height:1;font-weight:400;color:#1f1f1f;white-space:pre;transform-origin:left top;transform:scaleX(0.93);-webkit-text-stroke:0.06px #1f1f1f;">Click to add speaker notes</div>
<div style="position:absolute;left:988.50px;top:218.80px;width:26.90px;height:107.30px;background:#edf2fa;border-radius:13px;"></div>
<div style="position:absolute;left:988.50px;top:329.60px;width:26.90px;height:57.30px;background:#edf2fa;border-radius:13px;"></div>
<svg style="position:absolute;left:996.5px;top:230.5px" width="11" height="11" viewBox="0 0 24 24"><rect x="2.5" y="5" width="19" height="14" rx="2" fill="none" stroke="#444746" stroke-width="2"/><path d="M6 10h8M6 14h8M17 9v6" stroke="#444746" stroke-width="2"/></svg>
<svg style="position:absolute;left:996.5px;top:254.5px" width="11" height="11" viewBox="0 0 24 24"><rect x="7" y="3" width="14" height="14" rx="2" fill="none" stroke="#444746" stroke-width="2"/><path d="M3 7v12a2 2 0 0 0 2 2h12" fill="none" stroke="#444746" stroke-width="2"/><circle cx="14" cy="10" r="3" fill="none" stroke="#444746" stroke-width="1.8"/></svg>
<svg style="position:absolute;left:996.5px;top:280.5px" width="11" height="11" viewBox="0 0 24 24"><path d="M13 4H5a2 2 0 0 0-2 2v13a2 2 0 0 0 2 2h13a2 2 0 0 0 2-2v-7" fill="none" stroke="#444746" stroke-width="2"/><circle cx="17" cy="6" r="3" fill="none" stroke="#444746" stroke-width="2"/><path d="M7 17l3-4 3 3 2-2 3 3z" fill="#444746"/></svg>
<svg style="position:absolute;left:996.50px;top:304.50px;" width="11" height="11" viewBox="0 0 24 24"><path fill="#444746" d="M20 6h-8l-2-2H4c-1.1 0-1.99.9-1.99 2L2 18c0 1.1.9 2 2 2h16c1.1 0 2-.9 2-2V8c0-1.1-.9-2-2-2zm0 12H4V8h16v10z"/></svg>
<svg style="position:absolute;left:996.5px;top:339.7px" width="11" height="11" viewBox="0 0 24 24"><rect x="3" y="3" width="18" height="18" rx="2" fill="none" stroke="#444746" stroke-width="2"/><path d="M9 7v10l7-5z" fill="none" stroke="#444746" stroke-width="2"/></svg>
<svg style="position:absolute;left:995.5px;top:363px" width="13" height="13" viewBox="0 0 13 13"><circle cx="6.5" cy="6.5" r="5.3" fill="none" stroke="#9aa0a6" stroke-width="1"/><circle cx="6.5" cy="6.5" r="3.3" fill="#9aa0a6"/></svg>
<div style="position:absolute;left:1006.00px;top:363.50px;width:18.00px;height:14.00px;background:#f1f3f4;border-radius:3px;box-shadow:0 1px 2px rgba(0,0,0,0.15);"></div>
<div style="position:absolute;left:1009.00px;top:366.92px;font-size:6.000px;line-height:1;font-weight:400;color:#6b6e72;white-space:pre;transform-origin:left top;">&gt;_&lt;</div>
<div style="position:absolute;left:1010.70px;top:522.20px;width:24.00px;height:23.00px;background:#fff;border-radius:50%;box-shadow:0 1px 3px rgba(0,0,0,0.22);"></div>
<svg style="position:absolute;left:1014.00px;top:528.40px;" width="10" height="10" viewBox="0 0 24 24"><path fill="#444746" d="M15.41 7.41L14 6l-6 6 6 6 1.41-1.41L10.83 12z"/></svg>
<div style="position:absolute;left:129.10px;top:35.60px;width:179.60px;height:183.60px;background:#fff;border-radius:3px;box-shadow:0 1px 3px rgba(60,64,67,0.28),0 2px 6px 1px rgba(60,64,67,0.12);"></div>
<div style="position:absolute;left:129.10px;top:36.50px;width:179.60px;height:17.20px;background:#eeeff1;"></div>
<div style="position:absolute;left:151.00px;top:41.18px;font-size:8.710px;line-height:1;font-weight:400;color:#2a2d31;white-space:pre;transform-origin:left top;transform:scaleX(0.93);-webkit-text-stroke:0.06px #2a2d31;">Text</div>
<svg style="position:absolute;left:135.55px;top:39.45px;" width="11.5" height="11.5" viewBox="0 0 24 24"><path fill="#444746" d="M15.6 10.79c.97-.67 1.65-1.77 1.65-2.79 0-2.26-1.75-4-4-4H7v14h7.04c2.09 0 3.71-1.7 3.71-3.79 0-1.52-.86-2.82-2.15-3.42zM10 6.5h3c.83 0 1.5.67 1.5 1.5s-.67 1.5-1.5 1.5h-3v-3zm3.5 9H10v-3h3.5c.83 0 1.5.67 1.5 1.5s-.67 1.5-1.5 1.5z"/></svg>
<svg style="position:absolute;left:295.50px;top:42.80px" width="4" height="4.8" viewBox="0 0 4 4.8"><path d="M0 0 L4 2.4 L0 4.8z" fill="#575b60"/></svg>
<div style="position:absolute;left:151.00px;top:58.98px;font-size:8.710px;line-height:1;font-weight:400;color:#2a2d31;white-space:pre;transform-origin:left top;transform:scaleX(0.93);-webkit-text-stroke:0.06px #2a2d31;">Align &amp; indent</div>
<svg style="position:absolute;left:135.55px;top:57.25px;" width="11.5" height="11.5" viewBox="0 0 24 24"><path fill="#444746" d="M3 21h18v-2H3v2zM3 8v8l4-4-4-4zm8 9h10v-2H11v2zM3 3v2h18V3H3zm8 6h10V7H11v2zm0 4h10v-2H11v2z"/></svg>
<svg style="position:absolute;left:295.50px;top:60.60px" width="4" height="4.8" viewBox="0 0 4 4.8"><path d="M0 0 L4 2.4 L0 4.8z" fill="#575b60"/></svg>
<div style="position:absolute;left:151.00px;top:76.98px;font-size:8.710px;line-height:1;font-weight:400;color:#2a2d31;white-space:pre;transform-origin:left top;transform:scaleX(0.93);-webkit-text-stroke:0.06px #2a2d31;">Line &amp; paragraph spacing</div>
<svg style="position:absolute;left:135.55px;top:75.25px;" width="11.5" height="11.5" viewBox="0 0 24 24"><path fill="#444746" d="M6 7h2.5L5 3.5 1.5 7H4v10H1.5L5 20.5 8.5 17H6V7zm4-2v2h12V5H10zm0 14h12v-2H10v2zm0-6h12v-2H10v2z"/></svg>
<svg style="position:absolute;left:295.50px;top:78.60px" width="4" height="4.8" viewBox="0 0 4 4.8"><path d="M0 0 L4 2.4 L0 4.8z" fill="#575b60"/></svg>
<div style="position:absolute;left:151.00px;top:94.98px;font-size:8.710px;line-height:1;font-weight:400;color:#2a2d31;white-space:pre;transform-origin:left top;transform:scaleX(0.93);-webkit-text-stroke:0.06px #2a2d31;">Bullets &amp; numbering</div>
<svg style="position:absolute;left:135.55px;top:93.25px;" width="11.5" height="11.5" viewBox="0 0 24 24"><path fill="#444746" d="M4 10.5c-.83 0-1.5.67-1.5 1.5s.67 1.5 1.5 1.5 1.5-.67 1.5-1.5-.67-1.5-1.5-1.5zm0-6c-.83 0-1.5.67-1.5 1.5S3.17 7.5 4 7.5 5.5 6.83 5.5 6 4.83 4.5 4 4.5zm0 12c-.83 0-1.5.68-1.5 1.5s.68 1.5 1.5 1.5 1.5-.68 1.5-1.5-.67-1.5-1.5-1.5zM7 19h14v-2H7v2zm0-6h14v-2H7v2zm0-8v2h14V5H7z"/></svg>
<svg style="position:absolute;left:295.50px;top:96.60px" width="4" height="4.8" viewBox="0 0 4 4.8"><path d="M0 0 L4 2.4 L0 4.8z" fill="#575b60"/></svg>
<div style="position:absolute;left:129.10px;top:111.60px;width:179.60px;height:0.90px;background:#e3e3e3;"></div>
<div style="position:absolute;left:151.00px;top:122.08px;font-size:8.710px;line-height:1;font-weight:400;color:#a5a9ad;white-space:pre;transform-origin:left top;transform:scaleX(0.93);-webkit-text-stroke:0.06px #a5a9ad;">Table</div>
<svg style="position:absolute;left:135.55px;top:120.35px;" width="11.5" height="11.5" viewBox="0 0 24 24"><path fill="#b5b9bd" d="M20 3H5c-1.1 0-2 .9-2 2v14c0 1.1.9 2 2 2h15c1.1 0 2-.9 2-2V5c0-1.1-.9-2-2-2zm0 2v3H5V5h15zm-5 14h-5v-9h5v9zM5 10h3v9H5v-9zm12 9v-9h3v9h-3z"/></svg>
<svg style="position:absolute;left:295.50px;top:123.70px" width="4" height="4.8" viewBox="0 0 4 4.8"><path d="M0 0 L4 2.4 L0 4.8z" fill="#b0b4b8"/></svg>
<div style="position:absolute;left:151.00px;top:139.98px;font-size:8.710px;line-height:1;font-weight:400;color:#a5a9ad;white-space:pre;transform-origin:left top;transform:scaleX(0.93);-webkit-text-stroke:0.06px #a5a9ad;">Image</div>
<svg style="position:absolute;left:135.55px;top:138.25px;" width="11.5" height="11.5" viewBox="0 0 24 24"><path fill="#b5b9bd" d="M19 5v14H5V5h14m0-2H5c-1.1 0-2 .9-2 2v14c0 1.1.9 2 2 2h14c1.1 0 2-.9 2-2V5c0-1.1-.9-2-2-2zm-4.86 8.86l-3 3.87L9 13.14 6 17h12l-3.86-5.14z"/></svg>
<svg style="position:absolute;left:295.50px;top:141.60px" width="4" height="4.8" viewBox="0 0 4 4.8"><path d="M0 0 L4 2.4 L0 4.8z" fill="#b0b4b8"/></svg>
<div style="position:absolute;left:151.00px;top:158.08px;font-size:8.710px;line-height:1;font-weight:400;color:#2a2d31;white-space:pre;transform-origin:left top;transform:scaleX(0.93);-webkit-text-stroke:0.06px #2a2d31;">Borders &amp; lines</div>
<div style="position:absolute;left:136.8px;top:161.5px;width:9px;height:1.3px;background:#444746"></div>
<svg style="position:absolute;left:295.50px;top:159.70px" width="4" height="4.8" viewBox="0 0 4 4.8"><path d="M0 0 L4 2.4 L0 4.8z" fill="#575b60"/></svg>
<div style="position:absolute;left:129.10px;top:175.10px;width:179.60px;height:0.90px;background:#e3e3e3;"></div>
<div style="position:absolute;left:151.00px;top:185.38px;font-size:8.710px;line-height:1;font-weight:400;color:#2a2d31;white-space:pre;transform-origin:left top;transform:scaleX(0.93);-webkit-text-stroke:0.06px #2a2d31;">Format options</div>
<svg style="position:absolute;left:135.55px;top:183.65px;" width="11.5" height="11.5" viewBox="0 0 24 24"><path fill="#444746" d="M18 4V3c0-.55-.45-1-1-1H5c-.55 0-1 .45-1 1v4c0 .55.45 1 1 1h12c.55 0 1-.45 1-1V6h1v4H9v11c0 .55.45 1 1 1h2c.55 0 1-.45 1-1v-9h8V4h-3z"/></svg>
<div style="position:absolute;left:151.00px;top:203.18px;font-size:8.710px;line-height:1;font-weight:400;color:#2a2d31;white-space:pre;transform-origin:left top;transform:scaleX(0.93);-webkit-text-stroke:0.06px #2a2d31;">Clear formatting</div>
<svg style="position:absolute;left:135.55px;top:201.45px;" width="11.5" height="11.5" viewBox="0 0 24 24"><path fill="#444746" d="M3.27 5L2 6.27l6.97 6.97L6.5 19h3l1.57-3.66L16.73 21 18 19.73 3.55 5.27 3.27 5zM6 5v.18L8.82 8h2.4l-.72 1.68 2.1 2.1L14.210 8H20V5H6z"/></svg>
<div style="position:absolute;right:723.70px;top:203.18px;font-size:8.710px;line-height:1;font-weight:400;color:#444746;white-space:pre;transform-origin:right top;transform:scaleX(0.93);-webkit-text-stroke:0.06px #444746;">Ctrl+\</div>
<div style="position:absolute;left:126.50px;top:37.40px;width:54.20px;height:15.40px;border:1px solid #e26b6b;"></div>
<div style="position:absolute;left:309.00px;top:36.60px;width:145.90px;height:194.80px;background:#fff;border-radius:3px;box-shadow:0 1px 3px rgba(60,64,67,0.28),0 2px 6px 1px rgba(60,64,67,0.12);"></div>
<div style="position:absolute;left:309.00px;top:111.40px;width:145.90px;height:18.20px;background:#eeeff1;"></div>
<div style="position:absolute;left:330.60px;top:44.58px;font-size:8.710px;line-height:1;font-weight:400;color:#2a2d31;white-space:pre;transform-origin:left top;transform:scaleX(0.93);-webkit-text-stroke:0.06px #2a2d31;">Bold</div>
<svg style="position:absolute;left:315.05px;top:42.85px;" width="11.5" height="11.5" viewBox="0 0 24 24"><path fill="#444746" d="M15.6 10.79c.97-.67 1.65-1.77 1.65-2.79 0-2.26-1.75-4-4-4H7v14h7.04c2.09 0 3.71-1.7 3.71-3.79 0-1.52-.86-2.82-2.15-3.42zM10 6.5h3c.83 0 1.5.67 1.5 1.5s-.67 1.5-1.5 1.5h-3v-3zm3.5 9H10v-3h3.5c.83 0 1.5.67 1.5 1.5s-.67 1.5-1.5 1.5z"/></svg>
<div style="position:absolute;right:577.80px;top:44.58px;font-size:8.710px;line-height:1;font-weight:400;color:#444746;white-space:pre;transform-origin:right top;transform:scaleX(0.93);-webkit-text-stroke:0.06px #444746;">Ctrl+B</div>
<div style="position:absolute;left:330.60px;top:62.48px;font-size:8.710px;line-height:1;font-weight:400;color:#2a2d31;white-space:pre;transform-origin:left top;transform:scaleX(0.93);-webkit-text-stroke:0.06px #2a2d31;">Italic</div>
<svg style="position:absolute;left:315.05px;top:60.75px;" width="11.5" height="11.5" viewBox="0 0 24 24"><path fill="#444746" d="M10 4v3h2.21l-3.42 8H6v3h8v-3h-2.21l3.42-8H18V4z"/></svg>
<div style="position:absolute;right:577.80px;top:62.48px;font-size:8.710px;line-height:1;font-weight:400;color:#444746;white-space:pre;transform-origin:right top;transform:scaleX(0.93);-webkit-text-stroke:0.06px #444746;">Ctrl+I</div>
<div style="position:absolute;left:330.60px;top:80.28px;font-size:8.710px;line-height:1;font-weight:400;color:#2a2d31;white-space:pre;transform-origin:left top;transform:scaleX(0.93);-webkit-text-stroke:0.06px #2a2d31;">Underline</div>
<svg style="position:absolute;left:315.05px;top:78.55px;" width="11.5" height="11.5" viewBox="0 0 24 24"><path fill="#444746" d="M12 17c3.31 0 6-2.69 6-6V3h-2.5v8c0 1.93-1.57 3.5-3.5 3.5S8.5 12.93 8.5 11V3H6v8c0 3.31 2.69 6 6 6zm-7 2v2h14v-2H5z"/></svg>
<div style="position:absolute;right:577.80px;top:80.28px;font-size:8.710px;line-height:1;font-weight:400;color:#444746;white-space:pre;transform-origin:right top;transform:scaleX(0.93);-webkit-text-stroke:0.06px #444746;">Ctrl+U</div>
<div style="position:absolute;left:330.60px;top:98.18px;font-size:8.710px;line-height:1;font-weight:400;color:#2a2d31;white-space:pre;transform-origin:left top;transform:scaleX(0.93);-webkit-text-stroke:0.06px #2a2d31;">Strikethrough</div>
<svg style="position:absolute;left:315.05px;top:96.45px;" width="11.5" height="11.5" viewBox="0 0 24 24"><path fill="#444746" d="M7.24 8.75c-.26-.48-.39-1.03-.39-1.67 0-.61.13-1.16.4-1.67.26-.5.63-.93 1.11-1.29a5.73 5.73 0 0 1 1.7-.83c.66-.19 1.39-.29 2.18-.29.81 0 1.54.11 2.21.34.66.22 1.23.54 1.69.94.47.4.83.88 1.08 1.43.25.55.38 1.15.38 1.81h-3.01c0-.31-.05-.59-.15-.85-.09-.27-.24-.49-.44-.68-.2-.19-.45-.33-.75-.44-.3-.1-.66-.16-1.06-.16-.39 0-.74.04-1.03.13-.29.09-.53.21-.72.36-.19.16-.34.34-.44.55-.1.21-.15.43-.15.66 0 .48.25.88.74 1.21.38.25.77.48 1.41.7H7.39c-.05-.08-.11-.17-.15-.25zM21 12v-2H3v2h9.62c.18.07.4.14.55.2.37.17.66.34.87.51.21.17.35.36.43.57.07.2.11.43.11.69 0 .23-.05.45-.14.66-.09.2-.23.38-.42.53-.19.15-.42.26-.71.35-.29.08-.63.13-1.010.13-.43 0-.83-.04-1.18-.13s-.66-.23-.91-.42c-.25-.19-.45-.44-.59-.75-.14-.31-.25-.76-.25-1.21H6.4c0 .55.08 1.13.24 1.58.16.45.37.85.65 1.21.28.35.6.66.98.92.37.26.78.48 1.22.65.44.17.9.3 1.38.39.48.08.96.13 1.44.13.8 0 1.53-.09 2.18-.28s1.21-.45 1.67-.79c.46-.34.82-.77 1.07-1.27s.38-1.07.38-1.71c0-.6-.1-1.14-.31-1.61-.05-.11-.11-.23-.17-.33H21z"/></svg>
<div style="position:absolute;right:577.80px;top:98.18px;font-size:8.710px;line-height:1;font-weight:400;color:#444746;white-space:pre;transform-origin:right top;transform:scaleX(0.93);-webkit-text-stroke:0.06px #444746;">Alt+Shift+5</div>
<div style="position:absolute;left:330.60px;top:116.18px;font-size:8.710px;line-height:1;font-weight:400;color:#2a2d31;white-space:pre;transform-origin:left top;transform:scaleX(0.93);-webkit-text-stroke:0.06px #2a2d31;">Superscript</div>
<svg style="position:absolute;left:315.05px;top:114.45px;" width="11.5" height="11.5" viewBox="0 0 24 24"><path fill="#444746" d="M22 7h-2v1h3v1h-4V7c0-.55.45-1 1-1h2V5h-3V4h3c.55 0 1 .45 1 1v1c0 .55-.45 1-1 1zM5.88 20h2.66l3.4-5.42h.12l3.4 5.42h2.66l-4.65-7.27L17.81 6h-2.68l-3.07 4.99h-.12L8.85 6H6.19l4.32 6.73L5.88 20z"/></svg>
<div style="position:absolute;right:577.80px;top:116.18px;font-size:8.710px;line-height:1;font-weight:400;color:#444746;white-space:pre;transform-origin:right top;transform:scaleX(0.93);-webkit-text-stroke:0.06px #444746;">Ctrl+.</div>
<div style="position:absolute;left:330.60px;top:134.08px;font-size:8.710px;line-height:1;font-weight:400;color:#2a2d31;white-space:pre;transform-origin:left top;transform:scaleX(0.93);-webkit-text-stroke:0.06px #2a2d31;">Subscript</div>
<svg style="position:absolute;left:315.05px;top:132.35px;" width="11.5" height="11.5" viewBox="0 0 24 24"><path fill="#444746" d="M22 18h-2v1h3v1h-4v-2c0-.55.45-1 1-1h2v-1h-3v-1h3c.55 0 1 .45 1 1v1c0 .55-.45 1-1 1zM5.88 18h2.66l3.4-5.42h.12l3.4 5.42h2.66l-4.65-7.27L17.81 4h-2.68l-3.07 4.99h-.12L8.85 4H6.19l4.32 6.73L5.88 18z"/></svg>
<div style="position:absolute;right:577.80px;top:134.08px;font-size:8.710px;line-height:1;font-weight:400;color:#444746;white-space:pre;transform-origin:right top;transform:scaleX(0.93);-webkit-text-stroke:0.06px #444746;">Ctrl+,</div>
<div style="position:absolute;left:309.00px;top:151.70px;width:145.90px;height:0.90px;background:#e3e3e3;"></div>
<div style="position:absolute;left:330.60px;top:161.68px;font-size:8.710px;line-height:1;font-weight:400;color:#2a2d31;white-space:pre;transform-origin:left top;transform:scaleX(0.93);-webkit-text-stroke:0.06px #2a2d31;">Size</div>
<svg style="position:absolute;left:442.00px;top:163.30px" width="4" height="4.8" viewBox="0 0 4 4.8"><path d="M0 0 L4 2.4 L0 4.8z" fill="#575b60"/></svg>
<div style="position:absolute;left:330.60px;top:179.38px;font-size:8.710px;line-height:1;font-weight:400;color:#2a2d31;white-space:pre;transform-origin:left top;transform:scaleX(0.93);-webkit-text-stroke:0.06px #2a2d31;">Color</div>
<svg style="position:absolute;left:442.00px;top:181.00px" width="4" height="4.8" viewBox="0 0 4 4.8"><path d="M0 0 L4 2.4 L0 4.8z" fill="#575b60"/></svg>
<div style="position:absolute;left:330.60px;top:197.28px;font-size:8.710px;line-height:1;font-weight:400;color:#2a2d31;white-space:pre;transform-origin:left top;transform:scaleX(0.93);-webkit-text-stroke:0.06px #2a2d31;">Highlight color</div>
<svg style="position:absolute;left:442.00px;top:198.90px" width="4" height="4.8" viewBox="0 0 4 4.8"><path d="M0 0 L4 2.4 L0 4.8z" fill="#575b60"/></svg>
<div style="position:absolute;left:330.60px;top:214.98px;font-size:8.710px;line-height:1;font-weight:400;color:#2a2d31;white-space:pre;transform-origin:left top;transform:scaleX(0.93);-webkit-text-stroke:0.06px #2a2d31;">Capitalization</div>
<svg style="position:absolute;left:442.00px;top:216.60px" width="4" height="4.8" viewBox="0 0 4 4.8"><path d="M0 0 L4 2.4 L0 4.8z" fill="#575b60"/></svg>
<div style="position:absolute;left:313.60px;top:109.90px;width:61.90px;height:20.80px;border:1px solid #e26b6b;border-radius:1.5px;"></div>
</body></html>
